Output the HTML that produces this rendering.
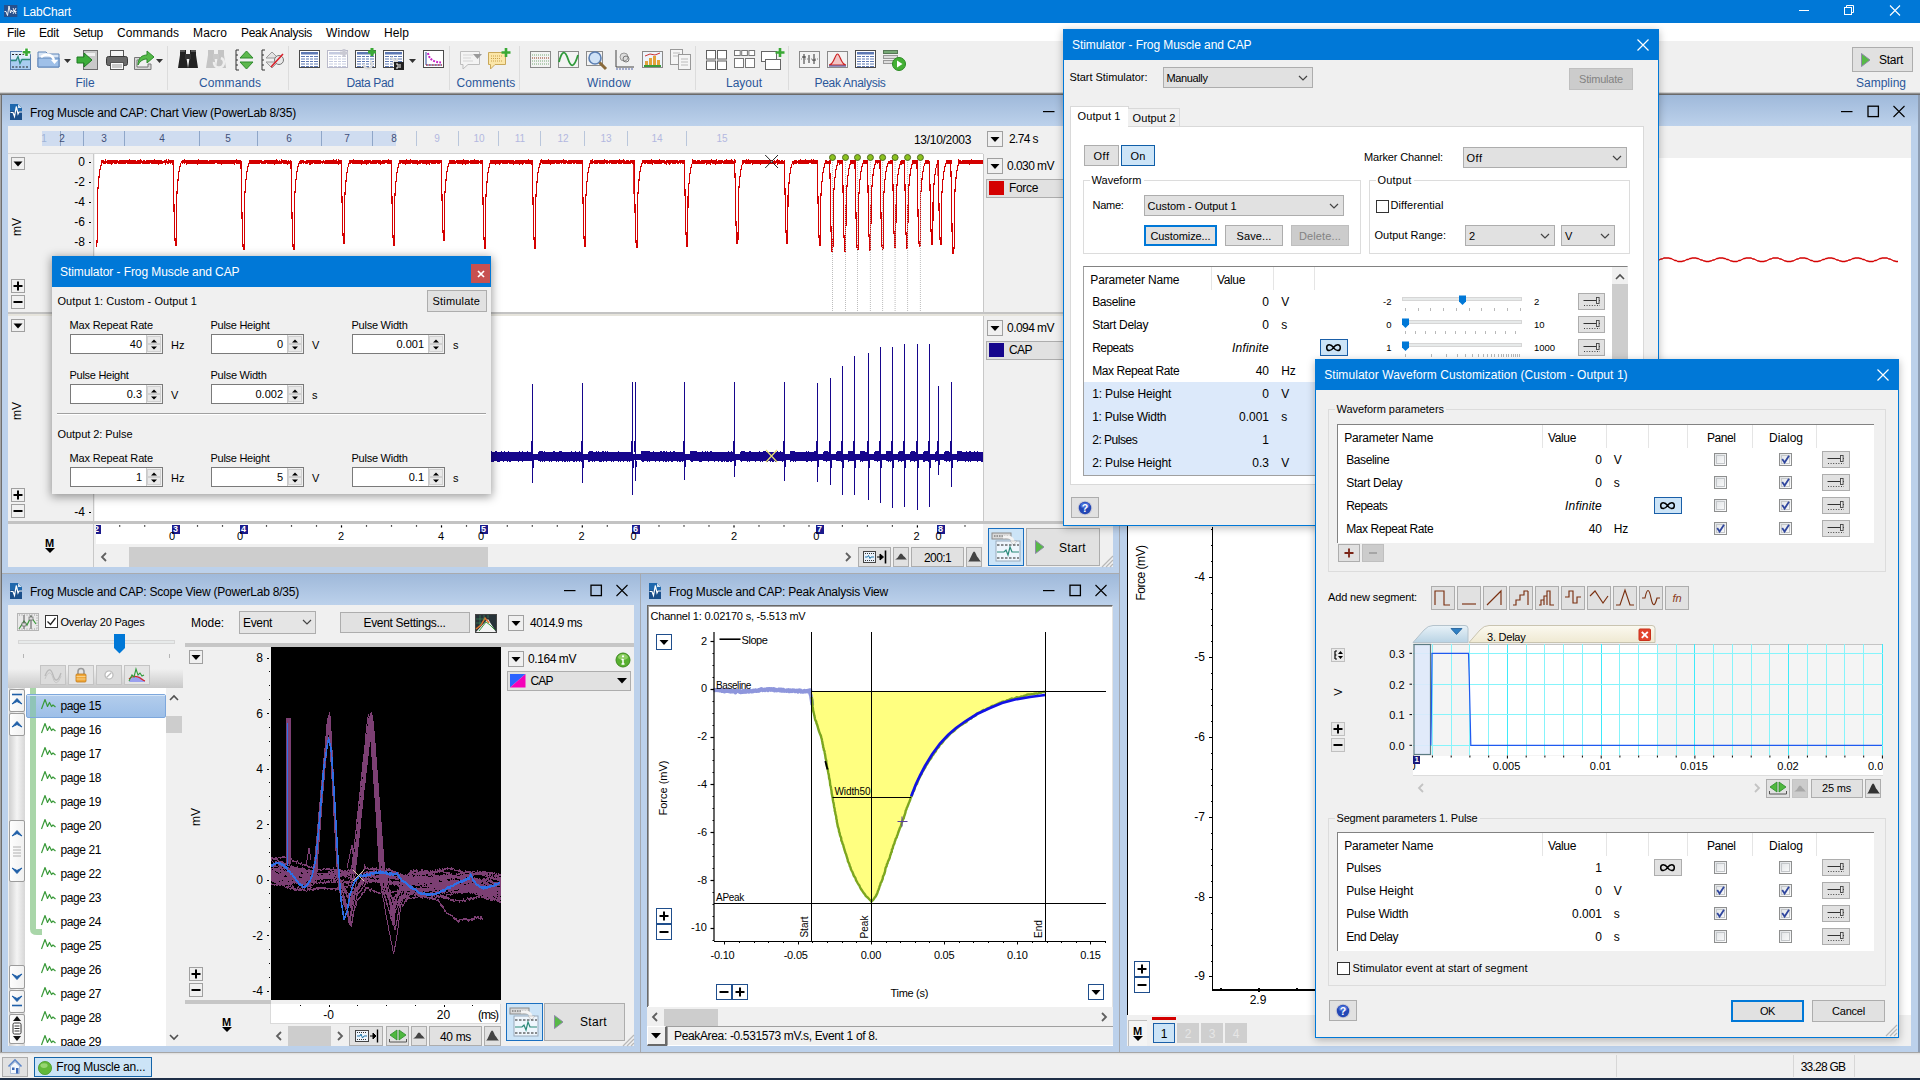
<!DOCTYPE html>
<html><head><meta charset="utf-8"><title>LabChart</title><style>
*{box-sizing:border-box;margin:0;padding:0}
html,body{width:1920px;height:1080px;overflow:hidden}
body{position:relative;background:#abc3e1;font-family:"Liberation Sans",sans-serif;font-size:12px;color:#000}
div,span.t,svg{position:absolute}
span.t{white-space:pre}
svg{overflow:visible}
.btn{background:#e1e1e1;border:1px solid #adadad}
</style></head><body>
<!-- back_window -->
<div style="left:1119px;top:95px;width:1px;height:957px;background:#8ea7c8;"></div>
<div style="left:1120px;top:95px;width:800px;height:957px;background:linear-gradient(#9fb9da 0px,#bcd1eb 31px,#bcd1eb 100%);"></div>
<div style="left:1918px;top:95px;width:2px;height:957px;background:#8d9db3;"></div>
<svg style="left:1840.5px;top:103.3px;" width="70" height="16" viewBox="0 0 70 16"><path d="M0 8.6H11.5" stroke="#000" stroke-width="1.2" fill="none"/><rect x="27" y="3.2" width="10.4" height="10.4" fill="none" stroke="#000" stroke-width="1.3"/><path d="M52.5 3L63.5 14M63.5 3L52.5 14" stroke="#000" stroke-width="1.1" fill="none"/></svg>
<div style="left:1127px;top:126px;width:784px;height:920px;background:#f0f0f0;"></div>
<div style="left:1127px;top:158px;width:784px;height:857px;background:#fff;"></div>
<div style="left:1127px;top:126px;width:1px;height:889px;background:#000;"></div>
<svg style="left:0px;top:0px;" width="1920" height="1080" viewBox="0 0 1920 1080"><path d="M1658 260.5L1659 260.0L1660 259.5L1661 259.0L1662 259.0L1663 258.5L1664 258.0L1665 258.0L1666 258.0L1667 258.0L1668 258.0L1669 258.0L1670 258.5L1671 258.5L1672 259.0L1673 259.5L1674 260.0L1675 260.5L1676 260.5L1677 261.0L1678 261.5L1679 261.5L1680 261.5L1681 261.5L1682 261.5L1683 261.0L1684 261.0L1685 260.5L1686 260.0L1687 259.5L1688 259.5L1689 259.0L1690 258.5L1691 258.5L1692 258.0L1693 258.0L1694 258.0L1695 258.0L1696 258.0L1697 258.5L1698 258.5L1699 259.0L1700 259.5L1701 260.0L1702 260.0L1703 260.5L1704 261.0L1705 261.0L1706 261.5L1707 261.5L1708 261.5L1709 261.5L1710 261.0L1711 261.0L1712 260.5L1713 260.0L1714 260.0L1715 259.5L1716 259.0L1717 258.5L1718 258.5L1719 258.0L1720 258.0L1721 258.0L1722 258.0L1723 258.0L1724 258.5L1725 258.5L1726 259.0L1727 259.5L1728 259.5L1729 260.0L1730 260.5L1731 261.0L1732 261.0L1733 261.5L1734 261.5L1735 261.5L1736 261.5L1737 261.5L1738 261.0L1739 260.5L1740 260.5L1741 260.0L1742 259.5L1743 259.0L1744 258.5L1745 258.5L1746 258.0L1747 258.0L1748 258.0L1749 258.0L1750 258.0L1751 258.0L1752 258.5L1753 259.0L1754 259.0L1755 259.5L1756 260.0L1757 260.5L1758 261.0L1759 261.0L1760 261.5L1761 261.5L1762 261.5L1763 261.5L1764 261.5L1765 261.0L1766 261.0L1767 260.5L1768 260.0L1769 259.5L1770 259.0L1771 259.0L1772 258.5L1773 258.0L1774 258.0L1775 258.0L1776 258.0L1777 258.0L1778 258.0L1779 258.5L1780 259.0L1781 259.0L1782 259.5L1783 260.0L1784 260.5L1785 261.0L1786 261.0L1787 261.5L1788 261.5L1789 261.5L1790 261.5L1791 261.5L1792 261.0L1793 261.0L1794 260.5L1795 260.0L1796 259.5L1797 259.0L1798 259.0L1799 258.5L1800 258.0L1801 258.0L1802 258.0L1803 258.0L1804 258.0L1805 258.0L1806 258.5L1807 258.5L1808 259.0L1809 259.5L1810 260.0L1811 260.5L1812 260.5L1813 261.0L1814 261.5L1815 261.5L1816 261.5L1817 261.5L1818 261.5L1819 261.0L1820 261.0L1821 260.5L1822 260.0L1823 259.5L1824 259.5L1825 259.0L1826 258.5L1827 258.5L1828 258.0L1829 258.0L1830 258.0L1831 258.0L1832 258.0L1833 258.5L1834 258.5L1835 259.0L1836 259.5L1837 260.0L1838 260.0L1839 260.5L1840 261.0L1841 261.0L1842 261.5L1843 261.5L1844 261.5L1845 261.5L1846 261.0L1847 261.0L1848 260.5L1849 260.0L1850 260.0L1851 259.5L1852 259.0L1853 258.5L1854 258.5L1855 258.0L1856 258.0L1857 258.0L1858 258.0L1859 258.0L1860 258.5L1861 258.5L1862 259.0L1863 259.5L1864 259.5L1865 260.0L1866 260.5L1867 261.0L1868 261.0L1869 261.5L1870 261.5L1871 261.5L1872 261.5L1873 261.5L1874 261.0L1875 260.5L1876 260.5L1877 260.0L1878 259.5L1879 259.0L1880 258.5L1881 258.5L1882 258.0L1883 258.0L1884 258.0L1885 258.0L1886 258.0L1887 258.0L1888 258.5L1889 259.0L1890 259.0L1891 259.5L1892 260.0L1893 260.5L1894 261.0L1895 261.0L1896 261.5L1897 261.5L1898 261.5" fill="none" stroke="#d40000" stroke-width="1.3"/></svg>
<div style="left:1212px;top:527px;width:1.4px;height:464px;background:#000;"></div>
<div style="left:1212px;top:989.3px;width:110px;height:1.4px;background:#000;"></div>
<div style="left:1209px;top:576.5px;width:4px;height:1.5px;background:#000;"></div>
<span class="t" style="left:1194.33px;top:571.34px;font-size:12px;line-height:12px;color:#000;">-4</span>
<div style="left:1209px;top:656.5px;width:4px;height:1.5px;background:#000;"></div>
<span class="t" style="left:1194.33px;top:651.34px;font-size:12px;line-height:12px;color:#000;">-5</span>
<div style="left:1209px;top:736.5px;width:4px;height:1.5px;background:#000;"></div>
<span class="t" style="left:1194.33px;top:731.34px;font-size:12px;line-height:12px;color:#000;">-6</span>
<div style="left:1209px;top:816.5px;width:4px;height:1.5px;background:#000;"></div>
<span class="t" style="left:1194.33px;top:811.34px;font-size:12px;line-height:12px;color:#000;">-7</span>
<div style="left:1209px;top:896.5px;width:4px;height:1.5px;background:#000;"></div>
<span class="t" style="left:1194.33px;top:891.34px;font-size:12px;line-height:12px;color:#000;">-8</span>
<div style="left:1209px;top:975.5px;width:4px;height:1.5px;background:#000;"></div>
<span class="t" style="left:1194.33px;top:970.34px;font-size:12px;line-height:12px;color:#000;">-9</span>
<div style="left:1211px;top:529px;width:2px;height:1px;background:#000;"></div>
<div style="left:1211px;top:545px;width:2px;height:1px;background:#000;"></div>
<div style="left:1211px;top:561px;width:2px;height:1px;background:#000;"></div>
<div style="left:1211px;top:593px;width:2px;height:1px;background:#000;"></div>
<div style="left:1211px;top:609px;width:2px;height:1px;background:#000;"></div>
<div style="left:1211px;top:625px;width:2px;height:1px;background:#000;"></div>
<div style="left:1211px;top:641px;width:2px;height:1px;background:#000;"></div>
<div style="left:1211px;top:673px;width:2px;height:1px;background:#000;"></div>
<div style="left:1211px;top:689px;width:2px;height:1px;background:#000;"></div>
<div style="left:1211px;top:705px;width:2px;height:1px;background:#000;"></div>
<div style="left:1211px;top:721px;width:2px;height:1px;background:#000;"></div>
<div style="left:1211px;top:753px;width:2px;height:1px;background:#000;"></div>
<div style="left:1211px;top:769px;width:2px;height:1px;background:#000;"></div>
<div style="left:1211px;top:785px;width:2px;height:1px;background:#000;"></div>
<div style="left:1211px;top:801px;width:2px;height:1px;background:#000;"></div>
<div style="left:1211px;top:833px;width:2px;height:1px;background:#000;"></div>
<div style="left:1211px;top:849px;width:2px;height:1px;background:#000;"></div>
<div style="left:1211px;top:865px;width:2px;height:1px;background:#000;"></div>
<div style="left:1211px;top:881px;width:2px;height:1px;background:#000;"></div>
<div style="left:1211px;top:913px;width:2px;height:1px;background:#000;"></div>
<div style="left:1211px;top:929px;width:2px;height:1px;background:#000;"></div>
<div style="left:1211px;top:945px;width:2px;height:1px;background:#000;"></div>
<div style="left:1211px;top:961px;width:2px;height:1px;background:#000;"></div>
<div style="left:1220px;top:988px;width:1.5px;height:3px;background:#000;"></div>
<div style="left:1258px;top:988px;width:1.5px;height:4px;background:#000;"></div>
<div style="left:1296px;top:988px;width:1.5px;height:3px;background:#000;"></div>
<span class="t" style="left:1249.66px;top:993.84px;font-size:12px;line-height:12px;color:#000;">2.9</span>
<span class="t" style="left:1141px;top:573px;font-size:12px;line-height:12px;transform:translate(-50%,-50%) rotate(-90deg);letter-spacing:-0.5px">Force (mV)</span>
<div style="left:1134px;top:961px;width:16px;height:16px;background:#fff;border:1px solid #1f4e8c;"></div>
<svg style="left:1134px;top:961px;" width="16" height="16" viewBox="0 0 16 16"><path d="M3.5 8H12.5" stroke="#000" stroke-width="2" fill="none"/><path d="M8 3.5V12.5" stroke="#000" stroke-width="2" fill="none"/></svg>
<div style="left:1134px;top:977px;width:16px;height:16px;background:#fff;border:1px solid #1f4e8c;"></div>
<svg style="left:1134px;top:977px;" width="16" height="16" viewBox="0 0 16 16"><path d="M3.5 8H12.5" stroke="#000" stroke-width="2" fill="none"/></svg>
<div style="left:1128px;top:1020px;width:19px;height:26px;background:#f4f4f4;border:1px solid #bdbdbd;border-bottom:none;border-right:none;"></div>
<span class="t" style="left:1133.00px;top:1024.84px;font-size:12px;line-height:12px;color:#000;font-weight:bold;font-size:11px;">M</span>
<svg style="left:1133px;top:1036px;" width="10" height="6" viewBox="0 0 10 6"><path d="M0 0H10L5 5Z" fill="#000"/></svg>
<div style="left:1152px;top:1017px;width:24px;height:3px;background:#d40000;"></div>
<div style="left:1153px;top:1023px;width:22px;height:20px;background:#cce4f7;border:1px solid #1a5fa8;"></div>
<span class="t" style="left:1160.66px;top:1027.84px;font-size:12px;line-height:12px;color:#000;">1</span>
<div style="left:1177px;top:1023px;width:22px;height:20px;background:#cfcfcf;"></div>
<span class="t" style="left:1184.66px;top:1027.84px;font-size:12px;line-height:12px;color:#e6e6e6;">2</span>
<div style="left:1201px;top:1023px;width:22px;height:20px;background:#cfcfcf;"></div>
<span class="t" style="left:1208.66px;top:1027.84px;font-size:12px;line-height:12px;color:#e6e6e6;">3</span>
<div style="left:1225px;top:1023px;width:22px;height:20px;background:#cfcfcf;"></div>
<span class="t" style="left:1232.66px;top:1027.84px;font-size:12px;line-height:12px;color:#e6e6e6;">4</span>
<!-- chart_view -->
<div style="left:0px;top:95px;width:1px;height:960px;background:#a5a5a5;"></div>
<div style="left:1px;top:95px;width:1px;height:960px;background:#6e6e6e;"></div>
<div style="left:2px;top:95px;width:1118px;height:479px;background:linear-gradient(#9fb9da 0px,#bcd1eb 31px,#bcd1eb 100%);"></div>
<svg style="left:10px;top:104px;" width="13" height="16" viewBox="0 0 13 16"><path d="M0 0H8L12 4V16H0Z" fill="#1b4f8a"/><path d="M0 0H8L12 4V7H0Z" fill="#1f68ad"/><path d="M8 0V4H12Z" fill="#cfe0f0"/><path d="M0.5 8.5H3L4.5 12.5L6.3 2.5L8 10L9 8H12" fill="none" stroke="#fff" stroke-width="1.2"/></svg>
<span class="t" style="left:30.00px;top:106.84px;font-size:12px;line-height:12px;color:#000;letter-spacing:-0.182px;">Frog Muscle and CAP: Chart View (PowerLab 8/35)</span>
<svg style="left:1042.5px;top:103.3px;" width="70" height="16" viewBox="0 0 70 16"><path d="M0 8.6H11.5" stroke="#000" stroke-width="1.2" fill="none"/><rect x="27" y="3.2" width="10.4" height="10.4" fill="none" stroke="#000" stroke-width="1.3"/><path d="M52.5 3L63.5 14M63.5 3L52.5 14" stroke="#000" stroke-width="1.1" fill="none"/></svg>
<div style="left:8px;top:126px;width:1105px;height:441px;background:#f0f0f0;"></div>
<div style="left:42px;top:131px;width:354px;height:15px;background:#cfdcf0;"></div>
<div style="left:60px;top:131px;width:1px;height:15px;background:#8fa6c8;"></div>
<div style="left:83px;top:131px;width:1px;height:15px;background:#8fa6c8;"></div>
<div style="left:124px;top:131px;width:1px;height:15px;background:#8fa6c8;"></div>
<div style="left:199px;top:131px;width:1px;height:15px;background:#8fa6c8;"></div>
<div style="left:257px;top:131px;width:1px;height:15px;background:#8fa6c8;"></div>
<div style="left:321px;top:131px;width:1px;height:15px;background:#8fa6c8;"></div>
<div style="left:372px;top:131px;width:1px;height:15px;background:#8fa6c8;"></div>
<div style="left:416px;top:131px;width:1px;height:15px;background:#b9c6db;"></div>
<div style="left:458px;top:131px;width:1px;height:15px;background:#b9c6db;"></div>
<div style="left:498px;top:131px;width:1px;height:15px;background:#b9c6db;"></div>
<div style="left:540px;top:131px;width:1px;height:15px;background:#b9c6db;"></div>
<div style="left:584px;top:131px;width:1px;height:15px;background:#b9c6db;"></div>
<div style="left:627px;top:131px;width:1px;height:15px;background:#b9c6db;"></div>
<div style="left:686px;top:131px;width:1px;height:15px;background:#b9c6db;"></div>
<span class="t" style="left:41.22px;top:133.53px;font-size:10px;line-height:10px;color:#9fb3d6;">1</span>
<span class="t" style="left:59.22px;top:133.53px;font-size:10px;line-height:10px;color:#3f4f78;">2</span>
<span class="t" style="left:101.22px;top:133.53px;font-size:10px;line-height:10px;color:#3f4f78;">3</span>
<span class="t" style="left:159.22px;top:133.53px;font-size:10px;line-height:10px;color:#3f4f78;">4</span>
<span class="t" style="left:225.22px;top:133.53px;font-size:10px;line-height:10px;color:#3f4f78;">5</span>
<span class="t" style="left:286.22px;top:133.53px;font-size:10px;line-height:10px;color:#3f4f78;">6</span>
<span class="t" style="left:344.22px;top:133.53px;font-size:10px;line-height:10px;color:#3f4f78;">7</span>
<span class="t" style="left:391.22px;top:133.53px;font-size:10px;line-height:10px;color:#3f4f78;">8</span>
<span class="t" style="left:434.22px;top:133.53px;font-size:10px;line-height:10px;color:#b3b8e0;">9</span>
<span class="t" style="left:473.44px;top:133.53px;font-size:10px;line-height:10px;color:#b3b8e0;">10</span>
<span class="t" style="left:514.81px;top:133.53px;font-size:10px;line-height:10px;color:#b3b8e0;">11</span>
<span class="t" style="left:557.44px;top:133.53px;font-size:10px;line-height:10px;color:#b3b8e0;">12</span>
<span class="t" style="left:600.44px;top:133.53px;font-size:10px;line-height:10px;color:#b3b8e0;">13</span>
<span class="t" style="left:651.44px;top:133.53px;font-size:10px;line-height:10px;color:#b3b8e0;">14</span>
<span class="t" style="left:716.44px;top:133.53px;font-size:10px;line-height:10px;color:#b3b8e0;">15</span>
<span class="t" style="left:914.00px;top:134.34px;font-size:12px;line-height:12px;color:#000;letter-spacing:-0.306px;">13/10/2003</span>
<div style="left:987px;top:131px;width:16px;height:16px;background:#f0f0f0;border:1px solid #a0a0a0;"></div>
<svg style="left:987px;top:131px;" width="16" height="16" viewBox="0 0 16 16"><path d="M3.5 6H12.5L8 11Z" fill="#000"/></svg>
<span class="t" style="left:1009.00px;top:132.84px;font-size:12px;line-height:12px;color:#000;letter-spacing:-0.615px;">2.74 s</span>
<div style="left:8px;top:153px;width:975px;height:1px;background:#d4d4d4;"></div>
<div style="left:93px;top:154px;width:1px;height:368px;background:#c8c8c8;"></div>
<div style="left:983px;top:154px;width:1px;height:368px;background:#c8c8c8;"></div>
<div style="left:95px;top:154px;width:888px;height:158px;background:#fff;"></div>
<div style="left:8px;top:312px;width:1105px;height:2px;background:#c3c3c3;"></div>
<div style="left:8px;top:314px;width:1105px;height:2px;background:#e6e4dc;"></div>
<div style="left:95px;top:316px;width:888px;height:205px;background:#fff;"></div>
<div style="left:8px;top:521px;width:1105px;height:3px;background:#c3c3c3;"></div>
<div style="left:11px;top:157px;width:14px;height:13px;background:#f0f0f0;border:1px solid #a0a0a0;"></div>
<svg style="left:11px;top:157px;" width="14" height="13" viewBox="0 0 14 13"><path d="M2.5 4.5H11.5L7 9.5Z" fill="#000"/></svg>
<span class="t" style="left:78.33px;top:155.84px;font-size:12px;line-height:12px;color:#000;">0</span>
<div style="left:89px;top:161.5px;width:2px;height:1px;background:#000;"></div>
<span class="t" style="left:74.33px;top:175.84px;font-size:12px;line-height:12px;color:#000;">-2</span>
<div style="left:89px;top:181.5px;width:2px;height:1px;background:#000;"></div>
<span class="t" style="left:74.33px;top:195.84px;font-size:12px;line-height:12px;color:#000;">-4</span>
<div style="left:89px;top:201.5px;width:2px;height:1px;background:#000;"></div>
<span class="t" style="left:74.33px;top:215.84px;font-size:12px;line-height:12px;color:#000;">-6</span>
<div style="left:89px;top:221.5px;width:2px;height:1px;background:#000;"></div>
<span class="t" style="left:74.33px;top:235.84px;font-size:12px;line-height:12px;color:#000;">-8</span>
<div style="left:89px;top:241.5px;width:2px;height:1px;background:#000;"></div>
<span class="t" style="left:17px;top:227px;font-size:12px;line-height:12px;transform:translate(-50%,-50%) rotate(-90deg)">mV</span>
<div style="left:11px;top:279px;width:14px;height:14px;background:#f0f0f0;border:1px solid #a0a0a0;"></div>
<svg style="left:11px;top:279px;" width="14" height="14" viewBox="0 0 14 14"><path d="M2.5 7H11.5" stroke="#000" stroke-width="2" fill="none"/><path d="M7 2.5V11.5" stroke="#000" stroke-width="2" fill="none"/></svg>
<div style="left:11px;top:295px;width:14px;height:14px;background:#f0f0f0;border:1px solid #a0a0a0;"></div>
<svg style="left:11px;top:295px;" width="14" height="14" viewBox="0 0 14 14"><path d="M2.5 7H11.5" stroke="#000" stroke-width="2" fill="none"/></svg>
<div style="left:11px;top:319px;width:14px;height:13px;background:#f0f0f0;border:1px solid #a0a0a0;"></div>
<svg style="left:11px;top:319px;" width="14" height="13" viewBox="0 0 14 13"><path d="M2.5 4.5H11.5L7 9.5Z" fill="#000"/></svg>
<span class="t" style="left:17px;top:411px;font-size:12px;line-height:12px;transform:translate(-50%,-50%) rotate(-90deg)">mV</span>
<div style="left:11px;top:488px;width:14px;height:14px;background:#f0f0f0;border:1px solid #a0a0a0;"></div>
<svg style="left:11px;top:488px;" width="14" height="14" viewBox="0 0 14 14"><path d="M2.5 7H11.5" stroke="#000" stroke-width="2" fill="none"/><path d="M7 2.5V11.5" stroke="#000" stroke-width="2" fill="none"/></svg>
<div style="left:11px;top:504px;width:14px;height:14px;background:#f0f0f0;border:1px solid #a0a0a0;"></div>
<svg style="left:11px;top:504px;" width="14" height="14" viewBox="0 0 14 14"><path d="M2.5 7H11.5" stroke="#000" stroke-width="2" fill="none"/></svg>
<span class="t" style="left:74.33px;top:505.84px;font-size:12px;line-height:12px;color:#000;">-4</span>
<div style="left:89px;top:511.5px;width:2px;height:1px;background:#000;"></div>
<div style="left:987px;top:158px;width:16px;height:16px;background:#f0f0f0;border:1px solid #a0a0a0;"></div>
<svg style="left:987px;top:158px;" width="16" height="16" viewBox="0 0 16 16"><path d="M3.5 6H12.5L8 11Z" fill="#000"/></svg>
<span class="t" style="left:1007.00px;top:159.84px;font-size:12px;line-height:12px;color:#000;letter-spacing:-0.545px;">0.030 mV</span>
<div style="left:986px;top:179px;width:130px;height:19px;background:#e1e1e1;border:1px solid #adadad;"></div>
<div style="left:989px;top:181px;width:15px;height:14px;background:#d40000;"></div>
<span class="t" style="left:1009.00px;top:181.84px;font-size:12px;line-height:12px;color:#000;letter-spacing:-0.335px;">Force</span>
<div style="left:987px;top:320px;width:16px;height:16px;background:#f0f0f0;border:1px solid #a0a0a0;"></div>
<svg style="left:987px;top:320px;" width="16" height="16" viewBox="0 0 16 16"><path d="M3.5 6H12.5L8 11Z" fill="#000"/></svg>
<span class="t" style="left:1007.00px;top:321.84px;font-size:12px;line-height:12px;color:#000;letter-spacing:-0.545px;">0.094 mV</span>
<div style="left:986px;top:341px;width:130px;height:19px;background:#e1e1e1;border:1px solid #adadad;"></div>
<div style="left:989px;top:343px;width:15px;height:14px;background:#16068c;"></div>
<span class="t" style="left:1009.00px;top:343.84px;font-size:12px;line-height:12px;color:#000;letter-spacing:-0.558px;">CAP</span>
<svg style="left:0px;top:0px;" width="1120" height="570" viewBox="0 0 1120 570"><g shape-rendering="crispEdges"><g fill="#d40000"><rect x="101" y="160" width="1" height="3"/><rect x="102" y="160" width="1" height="3"/><rect x="103" y="160" width="1" height="4"/><rect x="104" y="161" width="1" height="3"/><rect x="105" y="159" width="1" height="5"/><rect x="106" y="161" width="1" height="2"/><rect x="107" y="160" width="1" height="4"/><rect x="108" y="160" width="1" height="4"/><rect x="109" y="160" width="1" height="4"/><rect x="110" y="160" width="1" height="4"/><rect x="111" y="160" width="1" height="5"/><rect x="112" y="160" width="1" height="4"/><rect x="113" y="160" width="1" height="3"/><rect x="114" y="160" width="1" height="4"/><rect x="115" y="160" width="1" height="4"/><rect x="116" y="160" width="1" height="4"/><rect x="117" y="160" width="1" height="3"/><rect x="118" y="161" width="1" height="3"/><rect x="119" y="160" width="1" height="4"/><rect x="120" y="160" width="1" height="4"/><rect x="121" y="160" width="1" height="4"/><rect x="122" y="160" width="1" height="4"/><rect x="123" y="160" width="1" height="4"/><rect x="124" y="160" width="1" height="4"/><rect x="125" y="160" width="1" height="4"/><rect x="126" y="160" width="1" height="3"/><rect x="127" y="160" width="1" height="4"/><rect x="128" y="160" width="1" height="4"/><rect x="129" y="159" width="1" height="5"/><rect x="130" y="160" width="1" height="4"/><rect x="131" y="160" width="1" height="4"/><rect x="132" y="160" width="1" height="4"/><rect x="133" y="160" width="1" height="4"/><rect x="134" y="160" width="1" height="4"/><rect x="135" y="160" width="1" height="4"/><rect x="136" y="161" width="1" height="3"/><rect x="137" y="160" width="1" height="4"/><rect x="138" y="160" width="1" height="4"/><rect x="139" y="160" width="1" height="4"/><rect x="140" y="159" width="1" height="5"/><rect x="141" y="160" width="1" height="3"/><rect x="142" y="161" width="1" height="3"/><rect x="143" y="160" width="1" height="4"/><rect x="144" y="160" width="1" height="4"/><rect x="145" y="161" width="1" height="3"/><rect x="146" y="160" width="1" height="4"/><rect x="147" y="160" width="1" height="4"/><rect x="148" y="160" width="1" height="4"/><rect x="149" y="160" width="1" height="4"/><rect x="150" y="160" width="1" height="3"/><rect x="151" y="160" width="1" height="4"/><rect x="152" y="160" width="1" height="4"/><rect x="153" y="160" width="1" height="4"/><rect x="154" y="159" width="1" height="5"/><rect x="155" y="160" width="1" height="4"/><rect x="156" y="160" width="1" height="4"/><rect x="157" y="160" width="1" height="4"/><rect x="158" y="160" width="1" height="5"/><rect x="159" y="160" width="1" height="4"/><rect x="160" y="160" width="1" height="4"/><rect x="161" y="160" width="1" height="4"/><rect x="162" y="161" width="1" height="3"/><rect x="163" y="161" width="1" height="2"/><rect x="164" y="160" width="1" height="3"/><rect x="165" y="160" width="1" height="5"/><rect x="166" y="159" width="1" height="4"/><rect x="167" y="161" width="1" height="3"/><rect x="168" y="159" width="1" height="5"/><rect x="169" y="160" width="1" height="3"/><rect x="170" y="160" width="1" height="4"/><rect x="171" y="160" width="1" height="3"/><rect x="172" y="160" width="1" height="4"/><rect x="173" y="160" width="1" height="4"/><rect x="181" y="161" width="1" height="2"/><rect x="182" y="160" width="1" height="4"/><rect x="183" y="160" width="1" height="3"/><rect x="184" y="159" width="1" height="5"/><rect x="185" y="160" width="1" height="3"/><rect x="186" y="160" width="1" height="5"/><rect x="187" y="160" width="1" height="4"/><rect x="188" y="160" width="1" height="4"/><rect x="189" y="160" width="1" height="4"/><rect x="190" y="160" width="1" height="4"/><rect x="191" y="160" width="1" height="4"/><rect x="192" y="160" width="1" height="4"/><rect x="193" y="160" width="1" height="4"/><rect x="194" y="160" width="1" height="4"/><rect x="195" y="160" width="1" height="4"/><rect x="196" y="160" width="1" height="4"/><rect x="197" y="160" width="1" height="5"/><rect x="198" y="159" width="1" height="5"/><rect x="199" y="160" width="1" height="4"/><rect x="200" y="160" width="1" height="4"/><rect x="201" y="160" width="1" height="4"/><rect x="202" y="160" width="1" height="4"/><rect x="203" y="160" width="1" height="4"/><rect x="204" y="160" width="1" height="4"/><rect x="205" y="160" width="1" height="4"/><rect x="206" y="160" width="1" height="4"/><rect x="207" y="160" width="1" height="4"/><rect x="208" y="161" width="1" height="3"/><rect x="209" y="160" width="1" height="4"/><rect x="210" y="160" width="1" height="4"/><rect x="211" y="160" width="1" height="4"/><rect x="212" y="160" width="1" height="4"/><rect x="213" y="160" width="1" height="4"/><rect x="214" y="160" width="1" height="4"/><rect x="215" y="160" width="1" height="3"/><rect x="216" y="160" width="1" height="3"/><rect x="217" y="160" width="1" height="4"/><rect x="218" y="160" width="1" height="4"/><rect x="219" y="160" width="1" height="4"/><rect x="220" y="160" width="1" height="4"/><rect x="221" y="160" width="1" height="5"/><rect x="222" y="160" width="1" height="4"/><rect x="223" y="160" width="1" height="4"/><rect x="224" y="160" width="1" height="4"/><rect x="225" y="160" width="1" height="4"/><rect x="226" y="160" width="1" height="4"/><rect x="227" y="160" width="1" height="4"/><rect x="228" y="160" width="1" height="4"/><rect x="229" y="160" width="1" height="4"/><rect x="230" y="160" width="1" height="4"/><rect x="231" y="160" width="1" height="4"/><rect x="232" y="160" width="1" height="4"/><rect x="233" y="160" width="1" height="4"/><rect x="234" y="160" width="1" height="5"/><rect x="235" y="160" width="1" height="3"/><rect x="236" y="159" width="1" height="5"/><rect x="237" y="160" width="1" height="4"/><rect x="238" y="160" width="1" height="4"/><rect x="239" y="160" width="1" height="4"/><rect x="240" y="160" width="1" height="4"/><rect x="241" y="161" width="1" height="3"/><rect x="249" y="160" width="1" height="4"/><rect x="250" y="160" width="1" height="4"/><rect x="251" y="160" width="1" height="4"/><rect x="252" y="160" width="1" height="4"/><rect x="253" y="160" width="1" height="4"/><rect x="254" y="160" width="1" height="4"/><rect x="255" y="160" width="1" height="4"/><rect x="256" y="160" width="1" height="4"/><rect x="257" y="160" width="1" height="4"/><rect x="258" y="160" width="1" height="4"/><rect x="259" y="160" width="1" height="4"/><rect x="260" y="160" width="1" height="3"/><rect x="261" y="160" width="1" height="4"/><rect x="262" y="161" width="1" height="3"/><rect x="263" y="161" width="1" height="3"/><rect x="264" y="160" width="1" height="4"/><rect x="265" y="160" width="1" height="4"/><rect x="266" y="160" width="1" height="3"/><rect x="267" y="160" width="1" height="4"/><rect x="268" y="160" width="1" height="4"/><rect x="269" y="160" width="1" height="4"/><rect x="270" y="160" width="1" height="4"/><rect x="271" y="160" width="1" height="4"/><rect x="272" y="160" width="1" height="4"/><rect x="273" y="160" width="1" height="4"/><rect x="274" y="160" width="1" height="5"/><rect x="275" y="160" width="1" height="4"/><rect x="276" y="159" width="1" height="5"/><rect x="277" y="160" width="1" height="4"/><rect x="278" y="161" width="1" height="3"/><rect x="279" y="160" width="1" height="4"/><rect x="280" y="161" width="1" height="3"/><rect x="281" y="159" width="1" height="5"/><rect x="282" y="160" width="1" height="3"/><rect x="283" y="160" width="1" height="4"/><rect x="284" y="160" width="1" height="4"/><rect x="285" y="160" width="1" height="4"/><rect x="286" y="160" width="1" height="4"/><rect x="287" y="161" width="1" height="4"/><rect x="288" y="160" width="1" height="4"/><rect x="289" y="161" width="1" height="3"/><rect x="290" y="160" width="1" height="4"/><rect x="291" y="161" width="1" height="3"/><rect x="299" y="161" width="1" height="3"/><rect x="300" y="160" width="1" height="4"/><rect x="301" y="160" width="1" height="4"/><rect x="302" y="160" width="1" height="3"/><rect x="303" y="160" width="1" height="4"/><rect x="304" y="161" width="1" height="2"/><rect x="305" y="161" width="1" height="3"/><rect x="306" y="160" width="1" height="4"/><rect x="307" y="160" width="1" height="4"/><rect x="308" y="160" width="1" height="3"/><rect x="309" y="160" width="1" height="5"/><rect x="310" y="160" width="1" height="5"/><rect x="311" y="160" width="1" height="4"/><rect x="312" y="160" width="1" height="4"/><rect x="313" y="160" width="1" height="3"/><rect x="314" y="160" width="1" height="4"/><rect x="315" y="160" width="1" height="4"/><rect x="316" y="160" width="1" height="4"/><rect x="317" y="160" width="1" height="4"/><rect x="318" y="160" width="1" height="4"/><rect x="319" y="160" width="1" height="4"/><rect x="320" y="160" width="1" height="4"/><rect x="321" y="161" width="1" height="2"/><rect x="322" y="161" width="1" height="3"/><rect x="323" y="160" width="1" height="3"/><rect x="324" y="161" width="1" height="3"/><rect x="325" y="160" width="1" height="4"/><rect x="326" y="160" width="1" height="4"/><rect x="327" y="160" width="1" height="4"/><rect x="328" y="160" width="1" height="4"/><rect x="329" y="160" width="1" height="4"/><rect x="330" y="160" width="1" height="4"/><rect x="331" y="160" width="1" height="4"/><rect x="332" y="160" width="1" height="4"/><rect x="333" y="159" width="1" height="5"/><rect x="334" y="160" width="1" height="4"/><rect x="335" y="160" width="1" height="4"/><rect x="336" y="159" width="1" height="5"/><rect x="337" y="161" width="1" height="3"/><rect x="338" y="159" width="1" height="6"/><rect x="339" y="160" width="1" height="4"/><rect x="340" y="160" width="1" height="4"/><rect x="341" y="160" width="1" height="4"/><rect x="349" y="160" width="1" height="4"/><rect x="350" y="160" width="1" height="4"/><rect x="351" y="160" width="1" height="3"/><rect x="352" y="160" width="1" height="4"/><rect x="353" y="159" width="1" height="5"/><rect x="354" y="160" width="1" height="4"/><rect x="355" y="160" width="1" height="4"/><rect x="356" y="160" width="1" height="4"/><rect x="357" y="160" width="1" height="4"/><rect x="358" y="160" width="1" height="4"/><rect x="359" y="160" width="1" height="4"/><rect x="360" y="160" width="1" height="4"/><rect x="361" y="160" width="1" height="5"/><rect x="362" y="160" width="1" height="4"/><rect x="363" y="161" width="1" height="3"/><rect x="364" y="160" width="1" height="4"/><rect x="365" y="160" width="1" height="4"/><rect x="366" y="160" width="1" height="5"/><rect x="367" y="160" width="1" height="4"/><rect x="368" y="160" width="1" height="4"/><rect x="369" y="160" width="1" height="3"/><rect x="370" y="160" width="1" height="4"/><rect x="371" y="161" width="1" height="3"/><rect x="372" y="160" width="1" height="4"/><rect x="373" y="160" width="1" height="4"/><rect x="374" y="160" width="1" height="4"/><rect x="375" y="160" width="1" height="4"/><rect x="376" y="160" width="1" height="4"/><rect x="377" y="160" width="1" height="3"/><rect x="378" y="160" width="1" height="4"/><rect x="379" y="160" width="1" height="4"/><rect x="380" y="160" width="1" height="5"/><rect x="381" y="161" width="1" height="3"/><rect x="382" y="160" width="1" height="4"/><rect x="383" y="160" width="1" height="4"/><rect x="384" y="160" width="1" height="4"/><rect x="385" y="160" width="1" height="3"/><rect x="386" y="160" width="1" height="3"/><rect x="387" y="160" width="1" height="4"/><rect x="388" y="159" width="1" height="5"/><rect x="389" y="160" width="1" height="4"/><rect x="390" y="160" width="1" height="4"/><rect x="391" y="160" width="1" height="4"/><rect x="399" y="160" width="1" height="4"/><rect x="400" y="160" width="1" height="4"/><rect x="401" y="160" width="1" height="3"/><rect x="402" y="160" width="1" height="4"/><rect x="403" y="160" width="1" height="4"/><rect x="404" y="160" width="1" height="4"/><rect x="405" y="160" width="1" height="5"/><rect x="406" y="159" width="1" height="5"/><rect x="407" y="160" width="1" height="4"/><rect x="408" y="160" width="1" height="4"/><rect x="409" y="160" width="1" height="4"/><rect x="410" y="159" width="1" height="5"/><rect x="411" y="160" width="1" height="3"/><rect x="412" y="160" width="1" height="4"/><rect x="413" y="160" width="1" height="4"/><rect x="414" y="160" width="1" height="4"/><rect x="415" y="160" width="1" height="4"/><rect x="416" y="160" width="1" height="4"/><rect x="417" y="160" width="1" height="5"/><rect x="418" y="161" width="1" height="3"/><rect x="419" y="160" width="1" height="4"/><rect x="420" y="160" width="1" height="4"/><rect x="421" y="160" width="1" height="3"/><rect x="422" y="160" width="1" height="4"/><rect x="423" y="160" width="1" height="4"/><rect x="424" y="160" width="1" height="4"/><rect x="425" y="160" width="1" height="4"/><rect x="426" y="160" width="1" height="5"/><rect x="427" y="160" width="1" height="4"/><rect x="428" y="160" width="1" height="4"/><rect x="429" y="160" width="1" height="5"/><rect x="430" y="160" width="1" height="3"/><rect x="431" y="160" width="1" height="4"/><rect x="432" y="160" width="1" height="4"/><rect x="433" y="160" width="1" height="4"/><rect x="434" y="160" width="1" height="4"/><rect x="435" y="160" width="1" height="4"/><rect x="436" y="160" width="1" height="3"/><rect x="437" y="160" width="1" height="4"/><rect x="438" y="160" width="1" height="4"/><rect x="439" y="160" width="1" height="4"/><rect x="440" y="160" width="1" height="3"/><rect x="441" y="160" width="1" height="3"/><rect x="449" y="160" width="1" height="3"/><rect x="450" y="160" width="1" height="4"/><rect x="451" y="160" width="1" height="4"/><rect x="452" y="160" width="1" height="4"/><rect x="453" y="160" width="1" height="4"/><rect x="454" y="160" width="1" height="4"/><rect x="455" y="161" width="1" height="3"/><rect x="456" y="160" width="1" height="3"/><rect x="457" y="160" width="1" height="4"/><rect x="458" y="160" width="1" height="4"/><rect x="459" y="160" width="1" height="4"/><rect x="460" y="160" width="1" height="4"/><rect x="461" y="160" width="1" height="4"/><rect x="462" y="160" width="1" height="5"/><rect x="463" y="159" width="1" height="5"/><rect x="464" y="160" width="1" height="4"/><rect x="465" y="160" width="1" height="5"/><rect x="466" y="160" width="1" height="4"/><rect x="467" y="160" width="1" height="4"/><rect x="468" y="160" width="1" height="4"/><rect x="469" y="161" width="1" height="2"/><rect x="470" y="160" width="1" height="4"/><rect x="471" y="160" width="1" height="4"/><rect x="472" y="160" width="1" height="4"/><rect x="473" y="160" width="1" height="4"/><rect x="474" y="159" width="1" height="5"/><rect x="475" y="160" width="1" height="4"/><rect x="476" y="160" width="1" height="4"/><rect x="477" y="160" width="1" height="4"/><rect x="478" y="160" width="1" height="4"/><rect x="479" y="161" width="1" height="2"/><rect x="480" y="160" width="1" height="4"/><rect x="481" y="160" width="1" height="4"/><rect x="482" y="160" width="1" height="5"/><rect x="490" y="160" width="1" height="4"/><rect x="491" y="160" width="1" height="4"/><rect x="492" y="160" width="1" height="4"/><rect x="493" y="160" width="1" height="4"/><rect x="494" y="160" width="1" height="4"/><rect x="495" y="160" width="1" height="5"/><rect x="496" y="160" width="1" height="4"/><rect x="497" y="160" width="1" height="4"/><rect x="498" y="160" width="1" height="4"/><rect x="499" y="160" width="1" height="5"/><rect x="500" y="160" width="1" height="4"/><rect x="501" y="160" width="1" height="3"/><rect x="502" y="160" width="1" height="4"/><rect x="503" y="160" width="1" height="4"/><rect x="504" y="160" width="1" height="4"/><rect x="505" y="160" width="1" height="4"/><rect x="506" y="160" width="1" height="4"/><rect x="507" y="160" width="1" height="4"/><rect x="508" y="160" width="1" height="3"/><rect x="509" y="160" width="1" height="4"/><rect x="510" y="160" width="1" height="4"/><rect x="511" y="160" width="1" height="4"/><rect x="512" y="160" width="1" height="4"/><rect x="513" y="160" width="1" height="5"/><rect x="514" y="161" width="1" height="3"/><rect x="515" y="160" width="1" height="4"/><rect x="516" y="160" width="1" height="4"/><rect x="517" y="160" width="1" height="4"/><rect x="518" y="160" width="1" height="4"/><rect x="519" y="160" width="1" height="5"/><rect x="520" y="160" width="1" height="4"/><rect x="521" y="160" width="1" height="4"/><rect x="522" y="160" width="1" height="5"/><rect x="523" y="160" width="1" height="4"/><rect x="524" y="160" width="1" height="3"/><rect x="525" y="160" width="1" height="4"/><rect x="526" y="160" width="1" height="4"/><rect x="527" y="160" width="1" height="4"/><rect x="528" y="159" width="1" height="5"/><rect x="529" y="160" width="1" height="4"/><rect x="530" y="160" width="1" height="4"/><rect x="531" y="160" width="1" height="5"/><rect x="532" y="160" width="1" height="4"/><rect x="540" y="160" width="1" height="5"/><rect x="541" y="159" width="1" height="4"/><rect x="542" y="160" width="1" height="4"/><rect x="543" y="160" width="1" height="4"/><rect x="544" y="160" width="1" height="4"/><rect x="545" y="160" width="1" height="4"/><rect x="546" y="160" width="1" height="4"/><rect x="547" y="160" width="1" height="4"/><rect x="548" y="159" width="1" height="5"/><rect x="549" y="160" width="1" height="4"/><rect x="550" y="160" width="1" height="5"/><rect x="551" y="160" width="1" height="4"/><rect x="552" y="160" width="1" height="4"/><rect x="553" y="160" width="1" height="4"/><rect x="554" y="160" width="1" height="4"/><rect x="555" y="160" width="1" height="3"/><rect x="556" y="160" width="1" height="4"/><rect x="557" y="160" width="1" height="4"/><rect x="558" y="160" width="1" height="4"/><rect x="559" y="160" width="1" height="4"/><rect x="560" y="160" width="1" height="3"/><rect x="561" y="160" width="1" height="4"/><rect x="562" y="160" width="1" height="3"/><rect x="563" y="159" width="1" height="5"/><rect x="564" y="160" width="1" height="4"/><rect x="565" y="160" width="1" height="4"/><rect x="566" y="160" width="1" height="3"/><rect x="567" y="161" width="1" height="3"/><rect x="568" y="160" width="1" height="4"/><rect x="569" y="160" width="1" height="4"/><rect x="570" y="160" width="1" height="4"/><rect x="571" y="160" width="1" height="4"/><rect x="572" y="160" width="1" height="3"/><rect x="573" y="160" width="1" height="4"/><rect x="574" y="160" width="1" height="4"/><rect x="575" y="160" width="1" height="3"/><rect x="576" y="160" width="1" height="4"/><rect x="577" y="160" width="1" height="4"/><rect x="578" y="160" width="1" height="4"/><rect x="579" y="160" width="1" height="4"/><rect x="580" y="160" width="1" height="4"/><rect x="581" y="160" width="1" height="4"/><rect x="582" y="160" width="1" height="3"/><rect x="590" y="160" width="1" height="4"/><rect x="591" y="160" width="1" height="4"/><rect x="592" y="159" width="1" height="5"/><rect x="593" y="161" width="1" height="2"/><rect x="594" y="160" width="1" height="4"/><rect x="595" y="160" width="1" height="4"/><rect x="596" y="160" width="1" height="4"/><rect x="597" y="160" width="1" height="4"/><rect x="598" y="160" width="1" height="3"/><rect x="599" y="160" width="1" height="4"/><rect x="600" y="160" width="1" height="4"/><rect x="601" y="160" width="1" height="4"/><rect x="602" y="160" width="1" height="4"/><rect x="603" y="160" width="1" height="4"/><rect x="604" y="159" width="1" height="5"/><rect x="605" y="160" width="1" height="3"/><rect x="606" y="160" width="1" height="4"/><rect x="607" y="160" width="1" height="4"/><rect x="608" y="161" width="1" height="2"/><rect x="609" y="160" width="1" height="4"/><rect x="610" y="160" width="1" height="3"/><rect x="611" y="160" width="1" height="4"/><rect x="612" y="160" width="1" height="4"/><rect x="613" y="160" width="1" height="4"/><rect x="614" y="160" width="1" height="4"/><rect x="615" y="160" width="1" height="4"/><rect x="616" y="160" width="1" height="4"/><rect x="617" y="160" width="1" height="3"/><rect x="618" y="160" width="1" height="4"/><rect x="619" y="159" width="1" height="5"/><rect x="620" y="160" width="1" height="4"/><rect x="621" y="160" width="1" height="4"/><rect x="622" y="160" width="1" height="3"/><rect x="623" y="159" width="1" height="5"/><rect x="624" y="160" width="1" height="4"/><rect x="625" y="161" width="1" height="3"/><rect x="626" y="160" width="1" height="4"/><rect x="627" y="160" width="1" height="4"/><rect x="628" y="160" width="1" height="4"/><rect x="629" y="161" width="1" height="3"/><rect x="630" y="160" width="1" height="4"/><rect x="631" y="160" width="1" height="3"/><rect x="632" y="160" width="1" height="4"/><rect x="633" y="160" width="1" height="5"/><rect x="634" y="160" width="1" height="4"/><rect x="642" y="160" width="1" height="4"/><rect x="643" y="160" width="1" height="3"/><rect x="644" y="160" width="1" height="4"/><rect x="645" y="160" width="1" height="4"/><rect x="646" y="160" width="1" height="3"/><rect x="647" y="160" width="1" height="4"/><rect x="648" y="160" width="1" height="4"/><rect x="649" y="160" width="1" height="4"/><rect x="650" y="160" width="1" height="4"/><rect x="651" y="159" width="1" height="5"/><rect x="652" y="160" width="1" height="5"/><rect x="653" y="160" width="1" height="3"/><rect x="654" y="160" width="1" height="4"/><rect x="655" y="160" width="1" height="4"/><rect x="656" y="160" width="1" height="4"/><rect x="657" y="160" width="1" height="4"/><rect x="658" y="160" width="1" height="4"/><rect x="659" y="159" width="1" height="5"/><rect x="660" y="160" width="1" height="4"/><rect x="661" y="160" width="1" height="4"/><rect x="662" y="160" width="1" height="3"/><rect x="663" y="160" width="1" height="3"/><rect x="664" y="160" width="1" height="4"/><rect x="665" y="161" width="1" height="3"/><rect x="666" y="160" width="1" height="5"/><rect x="667" y="160" width="1" height="3"/><rect x="668" y="160" width="1" height="4"/><rect x="669" y="160" width="1" height="5"/><rect x="670" y="160" width="1" height="4"/><rect x="671" y="160" width="1" height="3"/><rect x="672" y="160" width="1" height="4"/><rect x="673" y="160" width="1" height="4"/><rect x="674" y="160" width="1" height="4"/><rect x="675" y="160" width="1" height="4"/><rect x="676" y="160" width="1" height="3"/><rect x="677" y="160" width="1" height="4"/><rect x="678" y="161" width="1" height="3"/><rect x="679" y="160" width="1" height="3"/><rect x="680" y="160" width="1" height="4"/><rect x="681" y="160" width="1" height="3"/><rect x="682" y="160" width="1" height="4"/><rect x="683" y="160" width="1" height="4"/><rect x="684" y="160" width="1" height="4"/><rect x="692" y="159" width="1" height="4"/><rect x="693" y="160" width="1" height="4"/><rect x="694" y="160" width="1" height="4"/><rect x="695" y="160" width="1" height="4"/><rect x="696" y="161" width="1" height="3"/><rect x="697" y="160" width="1" height="4"/><rect x="698" y="160" width="1" height="4"/><rect x="699" y="160" width="1" height="4"/><rect x="700" y="161" width="1" height="3"/><rect x="701" y="160" width="1" height="4"/><rect x="702" y="160" width="1" height="4"/><rect x="703" y="160" width="1" height="4"/><rect x="704" y="160" width="1" height="4"/><rect x="705" y="160" width="1" height="3"/><rect x="706" y="160" width="1" height="5"/><rect x="707" y="160" width="1" height="4"/><rect x="708" y="160" width="1" height="4"/><rect x="709" y="160" width="1" height="4"/><rect x="710" y="160" width="1" height="5"/><rect x="711" y="159" width="1" height="4"/><rect x="712" y="160" width="1" height="4"/><rect x="713" y="160" width="1" height="4"/><rect x="714" y="160" width="1" height="4"/><rect x="715" y="160" width="1" height="5"/><rect x="716" y="159" width="1" height="5"/><rect x="717" y="161" width="1" height="3"/><rect x="718" y="160" width="1" height="4"/><rect x="719" y="160" width="1" height="4"/><rect x="720" y="160" width="1" height="4"/><rect x="721" y="160" width="1" height="4"/><rect x="722" y="160" width="1" height="3"/><rect x="723" y="161" width="1" height="3"/><rect x="724" y="160" width="1" height="4"/><rect x="725" y="160" width="1" height="4"/><rect x="726" y="159" width="1" height="5"/><rect x="727" y="160" width="1" height="4"/><rect x="728" y="160" width="1" height="4"/><rect x="729" y="160" width="1" height="4"/><rect x="730" y="160" width="1" height="4"/><rect x="731" y="159" width="1" height="5"/><rect x="732" y="160" width="1" height="4"/><rect x="733" y="161" width="1" height="3"/><rect x="734" y="159" width="1" height="5"/><rect x="735" y="160" width="1" height="3"/><rect x="742" y="160" width="1" height="4"/><rect x="743" y="160" width="1" height="4"/><rect x="744" y="160" width="1" height="3"/><rect x="745" y="160" width="1" height="4"/><rect x="746" y="159" width="1" height="5"/><rect x="747" y="160" width="1" height="4"/><rect x="748" y="159" width="1" height="5"/><rect x="749" y="160" width="1" height="4"/><rect x="750" y="160" width="1" height="4"/><rect x="751" y="160" width="1" height="3"/><rect x="752" y="160" width="1" height="5"/><rect x="753" y="160" width="1" height="4"/><rect x="754" y="160" width="1" height="4"/><rect x="755" y="160" width="1" height="4"/><rect x="756" y="160" width="1" height="4"/><rect x="757" y="160" width="1" height="4"/><rect x="758" y="160" width="1" height="4"/><rect x="759" y="160" width="1" height="4"/><rect x="760" y="160" width="1" height="5"/><rect x="761" y="160" width="1" height="4"/><rect x="762" y="160" width="1" height="4"/><rect x="763" y="160" width="1" height="4"/><rect x="764" y="160" width="1" height="4"/><rect x="765" y="160" width="1" height="4"/><rect x="766" y="160" width="1" height="4"/><rect x="767" y="160" width="1" height="4"/><rect x="768" y="160" width="1" height="4"/><rect x="769" y="160" width="1" height="4"/><rect x="770" y="160" width="1" height="4"/><rect x="771" y="160" width="1" height="4"/><rect x="772" y="160" width="1" height="4"/><rect x="773" y="161" width="1" height="3"/><rect x="774" y="160" width="1" height="5"/><rect x="775" y="161" width="1" height="3"/><rect x="776" y="160" width="1" height="3"/><rect x="777" y="159" width="1" height="6"/><rect x="778" y="160" width="1" height="4"/><rect x="779" y="160" width="1" height="4"/><rect x="780" y="161" width="1" height="3"/><rect x="781" y="160" width="1" height="4"/><rect x="782" y="160" width="1" height="4"/><rect x="783" y="161" width="1" height="3"/><rect x="784" y="160" width="1" height="4"/><rect x="792" y="161" width="1" height="3"/><rect x="793" y="161" width="1" height="4"/><rect x="794" y="160" width="1" height="4"/><rect x="795" y="160" width="1" height="4"/><rect x="796" y="160" width="1" height="4"/><rect x="797" y="161" width="1" height="2"/><rect x="798" y="160" width="1" height="4"/><rect x="799" y="160" width="1" height="4"/><rect x="800" y="159" width="1" height="5"/><rect x="801" y="160" width="1" height="4"/><rect x="802" y="160" width="1" height="4"/><rect x="803" y="160" width="1" height="4"/><rect x="804" y="160" width="1" height="4"/><rect x="805" y="159" width="1" height="5"/><rect x="806" y="160" width="1" height="4"/><rect x="807" y="160" width="1" height="4"/><rect x="808" y="160" width="1" height="4"/><rect x="809" y="160" width="1" height="3"/><rect x="810" y="160" width="1" height="3"/><rect x="811" y="159" width="1" height="5"/><rect x="812" y="160" width="1" height="4"/><rect x="813" y="159" width="1" height="5"/><rect x="814" y="160" width="1" height="4"/><rect x="815" y="160" width="1" height="4"/><rect x="816" y="160" width="1" height="4"/><rect x="817" y="160" width="1" height="4"/><rect x="825" y="160" width="1" height="4"/><rect x="826" y="160" width="1" height="4"/><rect x="827" y="161" width="1" height="3"/><rect x="828" y="161" width="1" height="3"/><rect x="829" y="160" width="1" height="4"/><rect x="830" y="160" width="1" height="4"/><rect x="837" y="160" width="1" height="4"/><rect x="838" y="160" width="1" height="3"/><rect x="839" y="160" width="1" height="5"/><rect x="840" y="160" width="1" height="4"/><rect x="841" y="160" width="1" height="4"/><rect x="842" y="160" width="1" height="4"/><rect x="850" y="160" width="1" height="4"/><rect x="851" y="160" width="1" height="4"/><rect x="852" y="160" width="1" height="4"/><rect x="853" y="160" width="1" height="4"/><rect x="854" y="160" width="1" height="4"/><rect x="855" y="160" width="1" height="4"/><rect x="863" y="160" width="1" height="4"/><rect x="864" y="160" width="1" height="4"/><rect x="865" y="160" width="1" height="4"/><rect x="866" y="160" width="1" height="4"/><rect x="867" y="160" width="1" height="4"/><rect x="875" y="160" width="1" height="4"/><rect x="876" y="160" width="1" height="3"/><rect x="877" y="160" width="1" height="4"/><rect x="878" y="160" width="1" height="3"/><rect x="879" y="160" width="1" height="3"/><rect x="880" y="160" width="1" height="4"/><rect x="888" y="161" width="1" height="3"/><rect x="889" y="161" width="1" height="3"/><rect x="890" y="160" width="1" height="4"/><rect x="891" y="160" width="1" height="4"/><rect x="892" y="160" width="1" height="4"/><rect x="900" y="161" width="1" height="3"/><rect x="901" y="160" width="1" height="5"/><rect x="902" y="160" width="1" height="4"/><rect x="903" y="160" width="1" height="4"/><rect x="904" y="160" width="1" height="4"/><rect x="912" y="160" width="1" height="4"/><rect x="913" y="160" width="1" height="4"/><rect x="914" y="160" width="1" height="4"/><rect x="915" y="160" width="1" height="4"/><rect x="916" y="160" width="1" height="4"/><rect x="917" y="160" width="1" height="4"/><rect x="925" y="160" width="1" height="4"/><rect x="926" y="160" width="1" height="4"/><rect x="927" y="160" width="1" height="4"/><rect x="928" y="160" width="1" height="4"/><rect x="929" y="161" width="1" height="3"/><rect x="937" y="160" width="1" height="4"/><rect x="938" y="160" width="1" height="4"/><rect x="946" y="160" width="1" height="4"/><rect x="947" y="160" width="1" height="4"/><rect x="948" y="160" width="1" height="4"/><rect x="949" y="160" width="1" height="4"/><rect x="950" y="160" width="1" height="4"/><rect x="951" y="160" width="1" height="4"/><rect x="958" y="159" width="1" height="5"/><rect x="959" y="160" width="1" height="4"/><rect x="960" y="160" width="1" height="4"/><rect x="961" y="161" width="1" height="3"/><rect x="962" y="160" width="1" height="4"/><rect x="963" y="160" width="1" height="4"/><rect x="964" y="160" width="1" height="4"/><rect x="965" y="160" width="1" height="4"/><rect x="966" y="160" width="1" height="4"/><rect x="967" y="160" width="1" height="4"/><rect x="968" y="160" width="1" height="4"/><rect x="969" y="160" width="1" height="5"/><rect x="970" y="160" width="1" height="4"/><rect x="971" y="159" width="1" height="5"/><rect x="972" y="160" width="1" height="4"/><rect x="973" y="160" width="1" height="4"/><rect x="974" y="160" width="1" height="4"/><rect x="975" y="160" width="1" height="4"/><rect x="976" y="160" width="1" height="4"/><rect x="977" y="160" width="1" height="4"/><rect x="978" y="160" width="1" height="4"/><rect x="979" y="160" width="1" height="4"/><rect x="980" y="160" width="1" height="4"/><rect x="981" y="160" width="1" height="4"/><rect x="982" y="160" width="1" height="4"/></g><path d="M96.00 246.0L96.75 246.0L97.10 240.1L97.45 196.4L98.10 187.2L98.80 178.8L99.50 172.9L100.20 168.7L101.10 164.9L102.10 162.0M173.00 162.0L173.40 176.2L174.40 227.2L175.30 245.6L176.05 245.6L176.40 239.7L176.75 196.3L177.40 187.1L178.10 178.7L178.80 172.9L179.50 168.7L180.40 164.9L181.40 162.0M240.90 162.0L241.30 176.9L242.30 230.2L243.20 249.4L243.95 249.4L244.30 243.3L244.65 197.8L245.30 188.2L246.00 179.5L246.70 173.4L247.40 169.0L248.30 165.1L249.30 162.0M290.90 162.0L291.30 176.9L292.30 230.2L293.20 249.4L293.95 249.4L294.30 243.3L294.65 197.8L295.30 188.2L296.00 179.5L296.70 173.4L297.40 169.0L298.30 165.1L299.30 162.0M341.15 162.0L341.55 175.8L342.55 225.2L343.45 243.0L344.20 243.0L344.55 237.3L344.90 195.2L345.55 186.3L346.25 178.2L346.95 172.5L347.65 168.5L348.55 164.8L349.55 162.0M391.15 162.0L391.55 176.2L392.55 227.2L393.45 245.6L394.20 245.6L394.55 239.7L394.90 196.3L395.55 187.1L396.25 178.7L396.95 172.9L397.65 168.7L398.55 164.9L399.55 162.0M441.15 162.0L441.55 175.3L442.55 222.8L443.45 240.0L444.20 240.0L444.55 234.5L444.90 194.0L445.55 185.4L446.25 177.6L446.95 172.1L447.65 168.2L448.55 164.7L449.55 162.0M482.15 162.0L482.55 176.6L483.55 229.1L484.45 248.0L485.20 248.0L485.55 242.0L485.90 197.3L486.55 187.8L487.25 179.2L487.95 173.2L488.65 168.9L489.55 165.0L490.55 162.0M532.15 162.0L532.55 176.6L533.55 229.1L534.45 248.0L535.20 248.0L535.55 242.0L535.90 197.3L536.55 187.8L537.25 179.2L537.95 173.2L538.65 168.9L539.55 165.0L540.55 162.0M582.15 162.0L582.55 176.4L583.55 227.9L584.45 246.5L585.20 246.5L585.55 240.6L585.90 196.6L586.55 187.3L587.25 178.9L587.95 173.0L588.65 168.8L589.55 165.0L590.55 162.0M634.00 162.0L634.40 176.5L635.40 228.7L636.30 247.5L637.05 247.5L637.40 241.5L637.75 197.1L638.40 187.7L639.10 179.1L639.80 173.1L640.50 168.8L641.40 165.0L642.40 162.0M684.30 162.0L684.70 176.3L685.70 227.5L686.60 246.0L687.35 246.0L687.70 240.1L688.05 196.4L688.70 187.2L689.40 178.8L690.10 172.9L690.80 168.7L691.70 164.9L692.70 162.0M734.65 162.0L735.05 175.9L736.05 225.6L736.95 243.5L737.70 243.5L738.05 237.8L738.40 195.4L739.05 186.4L739.75 178.3L740.45 172.6L741.15 168.5L742.05 164.9L743.05 162.0M784.30 162.0L784.70 175.9L785.70 225.6L786.60 243.5L787.35 243.5L787.70 237.8L788.05 195.4L788.70 186.4L789.40 178.3L790.10 172.6L790.80 168.5L791.70 164.9L792.70 162.0M817.15 162.0L817.55 176.2L818.55 227.1L819.45 245.5L820.20 245.5L820.55 239.7L820.90 196.2L821.55 187.1L822.25 178.7L822.95 172.9L823.65 168.7L824.55 164.9L825.55 162.0M829.65 162.0L830.05 177.1L831.05 231.4L831.95 251.0L832.70 251.0L833.05 244.8L833.40 198.5L834.05 188.7L834.75 179.8L835.45 173.6L836.15 169.1L837.05 165.1L838.05 162.0M842.40 162.0L842.80 177.1L843.80 231.4L844.70 251.0L845.45 251.0L845.80 244.8L846.15 198.5L846.80 188.7L847.50 179.8L848.20 173.6L848.90 169.1L849.80 165.1L850.80 162.0M854.90 162.0L855.30 177.0L856.30 230.6L857.20 250.0L857.95 250.0L858.30 243.8L858.65 198.1L859.30 188.4L860.00 179.6L860.70 173.4L861.40 169.0L862.30 165.1L863.30 162.0M867.40 162.0L867.80 177.0L868.80 230.6L869.70 250.0L870.45 250.0L870.80 243.8L871.15 198.1L871.80 188.4L872.50 179.6L873.20 173.4L873.90 169.0L874.80 165.1L875.80 162.0M879.90 162.0L880.30 176.8L881.30 229.9L882.20 249.0L882.95 249.0L883.30 242.9L883.65 197.7L884.30 188.1L885.00 179.4L885.70 173.3L886.40 169.0L887.30 165.0L888.30 162.0M892.40 162.0L892.80 176.4L893.80 228.3L894.70 247.0L895.45 247.0L895.80 241.1L896.15 196.8L896.80 187.5L897.50 179.0L898.20 173.1L898.90 168.8L899.80 165.0L900.80 162.0M904.40 162.0L904.80 176.6L905.80 229.1L906.70 248.0L907.45 248.0L907.80 242.0L908.15 197.3L908.80 187.8L909.50 179.2L910.20 173.2L910.90 168.9L911.80 165.0L912.80 162.0M916.90 162.0L917.30 176.3L918.30 227.5L919.20 246.0L919.95 246.0L920.30 240.1L920.65 196.4L921.30 187.2L922.00 178.8L922.70 172.9L923.40 168.7L924.30 164.9L925.30 162.0M929.40 162.0L929.80 176.0L930.80 226.4L931.70 244.5L932.45 244.5L932.80 238.7L933.15 195.8L933.80 186.8L934.50 178.5L935.20 172.7L935.90 168.6L936.80 164.9L937.80 162.0M938.00 162.0L938.40 176.0L939.40 226.4L940.30 244.5L941.05 244.5L941.40 238.7L941.75 195.8L942.40 186.8L943.10 178.5L943.80 172.7L944.50 168.6L945.40 164.9L946.40 162.0M950.70 162.0L951.10 177.5L952.10 233.0L953.00 253.0L953.75 253.0L954.10 246.6L954.45 199.3L955.10 189.3L955.80 180.2L956.50 173.8L957.20 169.3L958.10 165.2L959.10 162.0" fill="none" stroke="#d40000" stroke-width="1.15"/></g></svg>
<svg style="left:0px;top:0px;" width="1120" height="570" viewBox="0 0 1120 570"><path d="M633.7 163V194M937.9 160V176" stroke="#d40000" stroke-width="1.1"/></svg>
<svg style="left:0px;top:0px;" width="1120" height="570" viewBox="0 0 1120 570"><path d="M832.5 160V311" stroke="#bdbdbd" stroke-width="1" stroke-dasharray="1 1"/><circle cx="832.5" cy="157.5" r="3" fill="#8bc21f" stroke="#4f6b1f" stroke-width="1"/><path d="M845.5 160V311" stroke="#bdbdbd" stroke-width="1" stroke-dasharray="1 1"/><circle cx="845.5" cy="157.5" r="3" fill="#8bc21f" stroke="#4f6b1f" stroke-width="1"/><path d="M857.5 160V311" stroke="#bdbdbd" stroke-width="1" stroke-dasharray="1 1"/><circle cx="857.5" cy="157.5" r="3" fill="#8bc21f" stroke="#4f6b1f" stroke-width="1"/><path d="M870.4 160V311" stroke="#bdbdbd" stroke-width="1" stroke-dasharray="1 1"/><circle cx="870.4" cy="157.5" r="3" fill="#8bc21f" stroke="#4f6b1f" stroke-width="1"/><path d="M882.6 160V311" stroke="#bdbdbd" stroke-width="1" stroke-dasharray="1 1"/><circle cx="882.6" cy="157.5" r="3" fill="#8bc21f" stroke="#4f6b1f" stroke-width="1"/><path d="M895.1 160V311" stroke="#bdbdbd" stroke-width="1" stroke-dasharray="1 1"/><circle cx="895.1" cy="157.5" r="3" fill="#8bc21f" stroke="#4f6b1f" stroke-width="1"/><path d="M907.6 160V311" stroke="#bdbdbd" stroke-width="1" stroke-dasharray="1 1"/><circle cx="907.6" cy="157.5" r="3" fill="#8bc21f" stroke="#4f6b1f" stroke-width="1"/><path d="M920.4 160V311" stroke="#bdbdbd" stroke-width="1" stroke-dasharray="1 1"/><circle cx="920.4" cy="157.5" r="3" fill="#8bc21f" stroke="#4f6b1f" stroke-width="1"/><path d="M765.2 155L778 168M778 155L765.2 168" stroke="#222" stroke-width="1"/><rect x="771" y="161" width="1.2" height="1.2" fill="#3fe0e0"/></svg>
<svg style="left:0px;top:0px;" width="1120" height="570" viewBox="0 0 1120 570"><g shape-rendering="crispEdges"><rect x="491" y="451.8" width="492" height="9.4" fill="#16068c"/><rect x="491" y="451.2" width="1" height="10.4" fill="#16068c"/><rect x="492" y="451.6" width="1" height="10.1" fill="#16068c"/><rect x="493" y="451.8" width="1" height="9.9" fill="#16068c"/><rect x="494" y="451.8" width="1" height="9.4" fill="#16068c"/><rect x="495" y="451.4" width="1" height="9.8" fill="#16068c"/><rect x="496" y="451.2" width="1" height="10" fill="#16068c"/><rect x="497" y="451.6" width="1" height="10" fill="#16068c"/><rect x="498" y="451.8" width="1" height="9.8" fill="#16068c"/><rect x="499" y="451.8" width="1" height="9.9" fill="#16068c"/><rect x="500" y="451.6" width="1" height="9.6" fill="#16068c"/><rect x="501" y="451.4" width="1" height="9.8" fill="#16068c"/><rect x="502" y="451.6" width="1" height="9.6" fill="#16068c"/><rect x="503" y="451.8" width="1" height="9.8" fill="#16068c"/><rect x="504" y="451.2" width="1" height="10.2" fill="#16068c"/><rect x="505" y="451.8" width="1" height="9.4" fill="#16068c"/><rect x="506" y="451.8" width="1" height="9.4" fill="#16068c"/><rect x="507" y="451.6" width="1" height="10.1" fill="#16068c"/><rect x="508" y="451.2" width="1" height="10" fill="#16068c"/><rect x="509" y="451.8" width="1" height="9.9" fill="#16068c"/><rect x="510" y="451.8" width="1" height="9.9" fill="#16068c"/><rect x="511" y="451.8" width="1" height="9.6" fill="#16068c"/><rect x="512" y="451.8" width="1" height="9.4" fill="#16068c"/><rect x="513" y="451.8" width="1" height="9.4" fill="#16068c"/><rect x="514" y="451.8" width="1" height="9.4" fill="#16068c"/><rect x="515" y="451.8" width="1" height="9.4" fill="#16068c"/><rect x="516" y="451.6" width="1" height="9.6" fill="#16068c"/><rect x="517" y="451.8" width="1" height="9.6" fill="#16068c"/><rect x="518" y="451.8" width="1" height="9.9" fill="#16068c"/><rect x="519" y="451.4" width="1" height="9.8" fill="#16068c"/><rect x="520" y="451.8" width="1" height="9.4" fill="#16068c"/><rect x="521" y="451.8" width="1" height="9.4" fill="#16068c"/><rect x="522" y="451.2" width="1" height="10.5" fill="#16068c"/><rect x="523" y="451.8" width="1" height="9.6" fill="#16068c"/><rect x="524" y="451.8" width="1" height="9.4" fill="#16068c"/><rect x="525" y="451.6" width="1" height="9.6" fill="#16068c"/><rect x="526" y="451.8" width="1" height="9.4" fill="#16068c"/><rect x="527" y="451.4" width="1" height="10" fill="#16068c"/><rect x="528" y="451.8" width="1" height="9.4" fill="#16068c"/><rect x="529" y="451.8" width="1" height="9.4" fill="#16068c"/><rect x="530" y="451.8" width="1" height="9.6" fill="#16068c"/><rect x="531" y="451.8" width="1" height="9.4" fill="#16068c"/><rect x="532" y="451.2" width="1" height="10" fill="#16068c"/><rect x="533" y="451.8" width="1" height="9.8" fill="#16068c"/><rect x="534" y="451.8" width="1" height="9.6" fill="#16068c"/><rect x="535" y="451.8" width="1" height="9.8" fill="#16068c"/><rect x="536" y="451.8" width="1" height="9.4" fill="#16068c"/><rect x="537" y="451.8" width="1" height="9.4" fill="#16068c"/><rect x="538" y="451.8" width="1" height="9.4" fill="#16068c"/><rect x="539" y="451.8" width="1" height="9.4" fill="#16068c"/><rect x="540" y="451.8" width="1" height="9.8" fill="#16068c"/><rect x="541" y="451.8" width="1" height="9.4" fill="#16068c"/><rect x="542" y="451.6" width="1" height="10.1" fill="#16068c"/><rect x="543" y="451.8" width="1" height="9.4" fill="#16068c"/><rect x="544" y="451.2" width="1" height="10.4" fill="#16068c"/><rect x="545" y="451.8" width="1" height="9.4" fill="#16068c"/><rect x="546" y="451.8" width="1" height="9.4" fill="#16068c"/><rect x="547" y="451.8" width="1" height="9.4" fill="#16068c"/><rect x="548" y="451.8" width="1" height="9.4" fill="#16068c"/><rect x="549" y="451.8" width="1" height="9.9" fill="#16068c"/><rect x="550" y="451.8" width="1" height="9.6" fill="#16068c"/><rect x="551" y="451.8" width="1" height="9.8" fill="#16068c"/><rect x="552" y="451.8" width="1" height="9.4" fill="#16068c"/><rect x="553" y="451.4" width="1" height="9.8" fill="#16068c"/><rect x="554" y="451.2" width="1" height="10" fill="#16068c"/><rect x="555" y="451.8" width="1" height="9.4" fill="#16068c"/><rect x="556" y="451.8" width="1" height="9.9" fill="#16068c"/><rect x="557" y="451.8" width="1" height="9.4" fill="#16068c"/><rect x="558" y="451.8" width="1" height="9.9" fill="#16068c"/><rect x="559" y="451.4" width="1" height="9.8" fill="#16068c"/><rect x="560" y="451.2" width="1" height="10" fill="#16068c"/><rect x="561" y="451.2" width="1" height="10" fill="#16068c"/><rect x="562" y="451.8" width="1" height="9.9" fill="#16068c"/><rect x="563" y="451.6" width="1" height="9.6" fill="#16068c"/><rect x="564" y="451.8" width="1" height="9.9" fill="#16068c"/><rect x="565" y="451.8" width="1" height="9.8" fill="#16068c"/><rect x="566" y="451.8" width="1" height="9.6" fill="#16068c"/><rect x="567" y="451.6" width="1" height="10.1" fill="#16068c"/><rect x="568" y="451.8" width="1" height="9.4" fill="#16068c"/><rect x="569" y="451.8" width="1" height="9.9" fill="#16068c"/><rect x="570" y="451.8" width="1" height="9.4" fill="#16068c"/><rect x="571" y="451.4" width="1" height="9.8" fill="#16068c"/><rect x="572" y="451.6" width="1" height="9.6" fill="#16068c"/><rect x="573" y="451.8" width="1" height="9.9" fill="#16068c"/><rect x="574" y="451.8" width="1" height="9.8" fill="#16068c"/><rect x="575" y="451.2" width="1" height="10.2" fill="#16068c"/><rect x="576" y="451.8" width="1" height="9.8" fill="#16068c"/><rect x="577" y="451.6" width="1" height="9.6" fill="#16068c"/><rect x="578" y="451.8" width="1" height="9.4" fill="#16068c"/><rect x="579" y="451.4" width="1" height="10.3" fill="#16068c"/><rect x="580" y="451.8" width="1" height="9.6" fill="#16068c"/><rect x="581" y="451.8" width="1" height="9.9" fill="#16068c"/><rect x="582" y="451.2" width="1" height="10.2" fill="#16068c"/><rect x="583" y="451.8" width="1" height="9.4" fill="#16068c"/><rect x="584" y="451.8" width="1" height="9.4" fill="#16068c"/><rect x="585" y="451.8" width="1" height="9.4" fill="#16068c"/><rect x="586" y="451.8" width="1" height="9.4" fill="#16068c"/><rect x="587" y="451.8" width="1" height="9.4" fill="#16068c"/><rect x="588" y="451.8" width="1" height="9.9" fill="#16068c"/><rect x="589" y="451.8" width="1" height="9.8" fill="#16068c"/><rect x="590" y="451.8" width="1" height="9.4" fill="#16068c"/><rect x="591" y="451.8" width="1" height="9.4" fill="#16068c"/><rect x="592" y="451.8" width="1" height="9.9" fill="#16068c"/><rect x="593" y="451.6" width="1" height="9.8" fill="#16068c"/><rect x="594" y="451.6" width="1" height="10.1" fill="#16068c"/><rect x="595" y="451.6" width="1" height="9.6" fill="#16068c"/><rect x="596" y="451.2" width="1" height="10" fill="#16068c"/><rect x="597" y="451.8" width="1" height="9.4" fill="#16068c"/><rect x="598" y="451.2" width="1" height="10.2" fill="#16068c"/><rect x="599" y="451.8" width="1" height="9.8" fill="#16068c"/><rect x="600" y="451.8" width="1" height="9.9" fill="#16068c"/><rect x="601" y="451.8" width="1" height="9.9" fill="#16068c"/><rect x="602" y="451.2" width="1" height="10.2" fill="#16068c"/><rect x="603" y="451.2" width="1" height="10.4" fill="#16068c"/><rect x="604" y="451.8" width="1" height="9.4" fill="#16068c"/><rect x="605" y="451.2" width="1" height="10.2" fill="#16068c"/><rect x="606" y="451.8" width="1" height="9.8" fill="#16068c"/><rect x="607" y="451.2" width="1" height="10.2" fill="#16068c"/><rect x="608" y="451.8" width="1" height="9.4" fill="#16068c"/><rect x="609" y="451.8" width="1" height="9.4" fill="#16068c"/><rect x="610" y="451.8" width="1" height="9.4" fill="#16068c"/><rect x="611" y="451.8" width="1" height="9.8" fill="#16068c"/><rect x="612" y="451.8" width="1" height="9.4" fill="#16068c"/><rect x="613" y="451.8" width="1" height="9.9" fill="#16068c"/><rect x="614" y="451.8" width="1" height="9.4" fill="#16068c"/><rect x="615" y="451.8" width="1" height="9.4" fill="#16068c"/><rect x="616" y="451.8" width="1" height="9.4" fill="#16068c"/><rect x="617" y="451.6" width="1" height="9.6" fill="#16068c"/><rect x="618" y="451.4" width="1" height="10.2" fill="#16068c"/><rect x="619" y="451.8" width="1" height="9.4" fill="#16068c"/><rect x="620" y="451.8" width="1" height="9.9" fill="#16068c"/><rect x="621" y="451.8" width="1" height="9.4" fill="#16068c"/><rect x="622" y="451.8" width="1" height="9.4" fill="#16068c"/><rect x="623" y="451.8" width="1" height="9.8" fill="#16068c"/><rect x="624" y="451.6" width="1" height="9.6" fill="#16068c"/><rect x="625" y="451.8" width="1" height="9.4" fill="#16068c"/><rect x="626" y="451.8" width="1" height="9.4" fill="#16068c"/><rect x="627" y="451.8" width="1" height="9.8" fill="#16068c"/><rect x="628" y="451.6" width="1" height="9.6" fill="#16068c"/><rect x="629" y="451.8" width="1" height="9.9" fill="#16068c"/><rect x="630" y="451.8" width="1" height="9.6" fill="#16068c"/><rect x="631" y="451.8" width="1" height="9.4" fill="#16068c"/><rect x="632" y="451.8" width="1" height="9.6" fill="#16068c"/><rect x="633" y="451.8" width="1" height="9.8" fill="#16068c"/><rect x="634" y="451.8" width="1" height="9.4" fill="#16068c"/><rect x="635" y="451.8" width="1" height="9.4" fill="#16068c"/><rect x="636" y="451.8" width="1" height="9.4" fill="#16068c"/><rect x="637" y="451.2" width="1" height="10.4" fill="#16068c"/><rect x="638" y="451.2" width="1" height="10.5" fill="#16068c"/><rect x="639" y="451.8" width="1" height="9.4" fill="#16068c"/><rect x="640" y="451.8" width="1" height="9.4" fill="#16068c"/><rect x="641" y="451.6" width="1" height="9.6" fill="#16068c"/><rect x="642" y="451.8" width="1" height="9.9" fill="#16068c"/><rect x="643" y="451.8" width="1" height="9.9" fill="#16068c"/><rect x="644" y="451.8" width="1" height="9.6" fill="#16068c"/><rect x="645" y="451.6" width="1" height="9.8" fill="#16068c"/><rect x="646" y="451.2" width="1" height="10" fill="#16068c"/><rect x="647" y="451.2" width="1" height="10.4" fill="#16068c"/><rect x="648" y="451.2" width="1" height="10.2" fill="#16068c"/><rect x="649" y="451.4" width="1" height="10.3" fill="#16068c"/><rect x="650" y="451.8" width="1" height="9.4" fill="#16068c"/><rect x="651" y="451.8" width="1" height="9.4" fill="#16068c"/><rect x="652" y="451.6" width="1" height="9.6" fill="#16068c"/><rect x="653" y="451.2" width="1" height="10" fill="#16068c"/><rect x="654" y="451.8" width="1" height="9.4" fill="#16068c"/><rect x="655" y="451.8" width="1" height="9.9" fill="#16068c"/><rect x="656" y="451.8" width="1" height="9.4" fill="#16068c"/><rect x="657" y="451.8" width="1" height="9.4" fill="#16068c"/><rect x="658" y="451.8" width="1" height="9.6" fill="#16068c"/><rect x="659" y="451.8" width="1" height="9.9" fill="#16068c"/><rect x="660" y="451.2" width="1" height="10" fill="#16068c"/><rect x="661" y="451.4" width="1" height="9.8" fill="#16068c"/><rect x="662" y="451.8" width="1" height="9.4" fill="#16068c"/><rect x="663" y="451.2" width="1" height="10.4" fill="#16068c"/><rect x="664" y="451.4" width="1" height="9.8" fill="#16068c"/><rect x="665" y="451.8" width="1" height="9.9" fill="#16068c"/><rect x="666" y="451.2" width="1" height="10.4" fill="#16068c"/><rect x="667" y="451.8" width="1" height="9.6" fill="#16068c"/><rect x="668" y="451.8" width="1" height="9.9" fill="#16068c"/><rect x="669" y="451.8" width="1" height="9.4" fill="#16068c"/><rect x="670" y="451.2" width="1" height="10.2" fill="#16068c"/><rect x="671" y="451.6" width="1" height="10.1" fill="#16068c"/><rect x="672" y="451.8" width="1" height="9.8" fill="#16068c"/><rect x="673" y="451.4" width="1" height="9.8" fill="#16068c"/><rect x="674" y="451.4" width="1" height="9.8" fill="#16068c"/><rect x="675" y="451.8" width="1" height="9.4" fill="#16068c"/><rect x="676" y="451.6" width="1" height="9.6" fill="#16068c"/><rect x="677" y="451.8" width="1" height="9.8" fill="#16068c"/><rect x="678" y="451.8" width="1" height="9.4" fill="#16068c"/><rect x="679" y="451.8" width="1" height="9.8" fill="#16068c"/><rect x="680" y="451.8" width="1" height="9.9" fill="#16068c"/><rect x="681" y="451.8" width="1" height="9.4" fill="#16068c"/><rect x="682" y="451.8" width="1" height="9.9" fill="#16068c"/><rect x="683" y="451.8" width="1" height="9.4" fill="#16068c"/><rect x="684" y="451.8" width="1" height="9.6" fill="#16068c"/><rect x="685" y="451.8" width="1" height="9.4" fill="#16068c"/><rect x="686" y="451.6" width="1" height="9.8" fill="#16068c"/><rect x="687" y="451.8" width="1" height="9.4" fill="#16068c"/><rect x="688" y="451.8" width="1" height="9.4" fill="#16068c"/><rect x="689" y="451.8" width="1" height="9.6" fill="#16068c"/><rect x="690" y="451.4" width="1" height="9.8" fill="#16068c"/><rect x="691" y="451.6" width="1" height="10" fill="#16068c"/><rect x="692" y="451.8" width="1" height="9.8" fill="#16068c"/><rect x="693" y="451.8" width="1" height="9.4" fill="#16068c"/><rect x="694" y="451.8" width="1" height="9.4" fill="#16068c"/><rect x="695" y="451.4" width="1" height="9.8" fill="#16068c"/><rect x="696" y="451.2" width="1" height="10" fill="#16068c"/><rect x="697" y="451.8" width="1" height="9.4" fill="#16068c"/><rect x="698" y="451.8" width="1" height="9.6" fill="#16068c"/><rect x="699" y="451.8" width="1" height="9.9" fill="#16068c"/><rect x="700" y="451.8" width="1" height="9.8" fill="#16068c"/><rect x="701" y="451.8" width="1" height="9.9" fill="#16068c"/><rect x="702" y="451.2" width="1" height="10" fill="#16068c"/><rect x="703" y="451.8" width="1" height="9.4" fill="#16068c"/><rect x="704" y="451.8" width="1" height="9.6" fill="#16068c"/><rect x="705" y="451.4" width="1" height="9.8" fill="#16068c"/><rect x="706" y="451.8" width="1" height="9.4" fill="#16068c"/><rect x="707" y="451.2" width="1" height="10" fill="#16068c"/><rect x="708" y="451.8" width="1" height="9.9" fill="#16068c"/><rect x="709" y="451.8" width="1" height="9.4" fill="#16068c"/><rect x="710" y="451.4" width="1" height="9.8" fill="#16068c"/><rect x="711" y="451.4" width="1" height="9.8" fill="#16068c"/><rect x="712" y="451.8" width="1" height="9.4" fill="#16068c"/><rect x="713" y="451.8" width="1" height="9.4" fill="#16068c"/><rect x="714" y="451.8" width="1" height="9.9" fill="#16068c"/><rect x="715" y="451.8" width="1" height="9.4" fill="#16068c"/><rect x="716" y="451.8" width="1" height="9.4" fill="#16068c"/><rect x="717" y="451.8" width="1" height="9.4" fill="#16068c"/><rect x="718" y="451.8" width="1" height="9.9" fill="#16068c"/><rect x="719" y="451.8" width="1" height="9.4" fill="#16068c"/><rect x="720" y="451.6" width="1" height="9.8" fill="#16068c"/><rect x="721" y="451.8" width="1" height="9.9" fill="#16068c"/><rect x="722" y="451.8" width="1" height="9.8" fill="#16068c"/><rect x="723" y="451.8" width="1" height="9.4" fill="#16068c"/><rect x="724" y="451.6" width="1" height="10" fill="#16068c"/><rect x="725" y="451.8" width="1" height="9.4" fill="#16068c"/><rect x="726" y="451.8" width="1" height="9.8" fill="#16068c"/><rect x="727" y="451.8" width="1" height="9.8" fill="#16068c"/><rect x="728" y="451.4" width="1" height="10.3" fill="#16068c"/><rect x="729" y="451.8" width="1" height="9.4" fill="#16068c"/><rect x="730" y="451.8" width="1" height="9.8" fill="#16068c"/><rect x="731" y="451.4" width="1" height="10.3" fill="#16068c"/><rect x="732" y="451.8" width="1" height="9.4" fill="#16068c"/><rect x="733" y="451.4" width="1" height="9.8" fill="#16068c"/><rect x="734" y="451.8" width="1" height="9.4" fill="#16068c"/><rect x="735" y="451.8" width="1" height="9.9" fill="#16068c"/><rect x="736" y="451.8" width="1" height="9.4" fill="#16068c"/><rect x="737" y="451.2" width="1" height="10.5" fill="#16068c"/><rect x="738" y="451.8" width="1" height="9.4" fill="#16068c"/><rect x="739" y="451.8" width="1" height="9.8" fill="#16068c"/><rect x="740" y="451.8" width="1" height="9.4" fill="#16068c"/><rect x="741" y="451.4" width="1" height="10.2" fill="#16068c"/><rect x="742" y="451.8" width="1" height="9.4" fill="#16068c"/><rect x="743" y="451.8" width="1" height="9.4" fill="#16068c"/><rect x="744" y="451.8" width="1" height="9.4" fill="#16068c"/><rect x="745" y="451.8" width="1" height="9.4" fill="#16068c"/><rect x="746" y="451.8" width="1" height="9.6" fill="#16068c"/><rect x="747" y="451.8" width="1" height="9.8" fill="#16068c"/><rect x="748" y="451.8" width="1" height="9.4" fill="#16068c"/><rect x="749" y="451.2" width="1" height="10.4" fill="#16068c"/><rect x="750" y="451.4" width="1" height="9.8" fill="#16068c"/><rect x="751" y="451.8" width="1" height="9.4" fill="#16068c"/><rect x="752" y="451.6" width="1" height="9.6" fill="#16068c"/><rect x="753" y="451.8" width="1" height="9.4" fill="#16068c"/><rect x="754" y="451.8" width="1" height="9.4" fill="#16068c"/><rect x="755" y="451.8" width="1" height="9.8" fill="#16068c"/><rect x="756" y="451.8" width="1" height="9.4" fill="#16068c"/><rect x="757" y="451.8" width="1" height="9.6" fill="#16068c"/><rect x="758" y="451.8" width="1" height="9.4" fill="#16068c"/><rect x="759" y="451.4" width="1" height="10" fill="#16068c"/><rect x="760" y="451.8" width="1" height="9.9" fill="#16068c"/><rect x="761" y="451.6" width="1" height="9.6" fill="#16068c"/><rect x="762" y="451.6" width="1" height="10.1" fill="#16068c"/><rect x="763" y="451.4" width="1" height="9.8" fill="#16068c"/><rect x="764" y="451.2" width="1" height="10" fill="#16068c"/><rect x="765" y="451.4" width="1" height="9.8" fill="#16068c"/><rect x="766" y="451.8" width="1" height="9.8" fill="#16068c"/><rect x="767" y="451.6" width="1" height="10" fill="#16068c"/><rect x="768" y="451.8" width="1" height="9.4" fill="#16068c"/><rect x="769" y="451.6" width="1" height="9.6" fill="#16068c"/><rect x="770" y="451.8" width="1" height="9.8" fill="#16068c"/><rect x="771" y="451.8" width="1" height="9.6" fill="#16068c"/><rect x="772" y="451.8" width="1" height="9.8" fill="#16068c"/><rect x="773" y="451.8" width="1" height="9.9" fill="#16068c"/><rect x="774" y="451.6" width="1" height="9.6" fill="#16068c"/><rect x="775" y="451.8" width="1" height="9.8" fill="#16068c"/><rect x="776" y="451.8" width="1" height="9.8" fill="#16068c"/><rect x="777" y="451.4" width="1" height="9.8" fill="#16068c"/><rect x="778" y="451.8" width="1" height="9.4" fill="#16068c"/><rect x="779" y="451.8" width="1" height="9.6" fill="#16068c"/><rect x="780" y="451.4" width="1" height="9.8" fill="#16068c"/><rect x="781" y="451.8" width="1" height="9.4" fill="#16068c"/><rect x="782" y="451.8" width="1" height="9.9" fill="#16068c"/><rect x="783" y="451.8" width="1" height="9.6" fill="#16068c"/><rect x="784" y="451.8" width="1" height="9.9" fill="#16068c"/><rect x="785" y="451.6" width="1" height="9.6" fill="#16068c"/><rect x="786" y="451.4" width="1" height="9.8" fill="#16068c"/><rect x="787" y="451.4" width="1" height="10" fill="#16068c"/><rect x="788" y="451.6" width="1" height="9.6" fill="#16068c"/><rect x="789" y="451.8" width="1" height="9.4" fill="#16068c"/><rect x="790" y="451.2" width="1" height="10.5" fill="#16068c"/><rect x="791" y="451.8" width="1" height="9.6" fill="#16068c"/><rect x="792" y="451.8" width="1" height="9.4" fill="#16068c"/><rect x="793" y="451.6" width="1" height="10.1" fill="#16068c"/><rect x="794" y="451.8" width="1" height="9.4" fill="#16068c"/><rect x="795" y="451.8" width="1" height="9.8" fill="#16068c"/><rect x="796" y="451.8" width="1" height="9.4" fill="#16068c"/><rect x="797" y="451.6" width="1" height="9.6" fill="#16068c"/><rect x="798" y="451.8" width="1" height="9.6" fill="#16068c"/><rect x="799" y="451.8" width="1" height="9.4" fill="#16068c"/><rect x="800" y="451.8" width="1" height="9.4" fill="#16068c"/><rect x="801" y="451.8" width="1" height="9.6" fill="#16068c"/><rect x="802" y="451.8" width="1" height="9.4" fill="#16068c"/><rect x="803" y="451.8" width="1" height="9.6" fill="#16068c"/><rect x="804" y="451.8" width="1" height="9.4" fill="#16068c"/><rect x="805" y="451.8" width="1" height="9.4" fill="#16068c"/><rect x="806" y="451.4" width="1" height="10.3" fill="#16068c"/><rect x="807" y="451.8" width="1" height="9.9" fill="#16068c"/><rect x="808" y="451.2" width="1" height="10.2" fill="#16068c"/><rect x="809" y="451.8" width="1" height="9.4" fill="#16068c"/><rect x="810" y="451.8" width="1" height="9.4" fill="#16068c"/><rect x="811" y="451.8" width="1" height="9.8" fill="#16068c"/><rect x="812" y="451.8" width="1" height="9.6" fill="#16068c"/><rect x="813" y="451.8" width="1" height="9.4" fill="#16068c"/><rect x="814" y="451.4" width="1" height="9.8" fill="#16068c"/><rect x="815" y="451.4" width="1" height="10" fill="#16068c"/><rect x="816" y="451.8" width="1" height="9.4" fill="#16068c"/><rect x="817" y="451.8" width="1" height="9.4" fill="#16068c"/><rect x="818" y="451.6" width="1" height="9.8" fill="#16068c"/><rect x="819" y="451.8" width="1" height="9.4" fill="#16068c"/><rect x="820" y="451.8" width="1" height="9.4" fill="#16068c"/><rect x="821" y="451.4" width="1" height="9.8" fill="#16068c"/><rect x="822" y="451.8" width="1" height="9.9" fill="#16068c"/><rect x="823" y="451.8" width="1" height="9.6" fill="#16068c"/><rect x="824" y="451.4" width="1" height="9.8" fill="#16068c"/><rect x="825" y="451.8" width="1" height="9.4" fill="#16068c"/><rect x="826" y="451.8" width="1" height="9.9" fill="#16068c"/><rect x="827" y="451.8" width="1" height="9.4" fill="#16068c"/><rect x="828" y="451.8" width="1" height="9.4" fill="#16068c"/><rect x="829" y="451.6" width="1" height="9.6" fill="#16068c"/><rect x="830" y="451.8" width="1" height="9.8" fill="#16068c"/><rect x="831" y="451.6" width="1" height="9.6" fill="#16068c"/><rect x="832" y="451.8" width="1" height="9.4" fill="#16068c"/><rect x="833" y="451.2" width="1" height="10" fill="#16068c"/><rect x="834" y="451.4" width="1" height="10.3" fill="#16068c"/><rect x="835" y="451.4" width="1" height="9.8" fill="#16068c"/><rect x="836" y="451.8" width="1" height="9.4" fill="#16068c"/><rect x="837" y="451.2" width="1" height="10" fill="#16068c"/><rect x="838" y="451.8" width="1" height="9.4" fill="#16068c"/><rect x="839" y="451.2" width="1" height="10" fill="#16068c"/><rect x="840" y="451.2" width="1" height="10.2" fill="#16068c"/><rect x="841" y="451.8" width="1" height="9.8" fill="#16068c"/><rect x="842" y="451.8" width="1" height="9.9" fill="#16068c"/><rect x="843" y="451.8" width="1" height="9.4" fill="#16068c"/><rect x="844" y="451.2" width="1" height="10" fill="#16068c"/><rect x="845" y="451.8" width="1" height="9.4" fill="#16068c"/><rect x="846" y="451.2" width="1" height="10.5" fill="#16068c"/><rect x="847" y="451.8" width="1" height="9.9" fill="#16068c"/><rect x="848" y="451.2" width="1" height="10.5" fill="#16068c"/><rect x="849" y="451.8" width="1" height="9.4" fill="#16068c"/><rect x="850" y="451.8" width="1" height="9.4" fill="#16068c"/><rect x="851" y="451.8" width="1" height="9.4" fill="#16068c"/><rect x="852" y="451.2" width="1" height="10" fill="#16068c"/><rect x="853" y="451.8" width="1" height="9.4" fill="#16068c"/><rect x="854" y="451.8" width="1" height="9.6" fill="#16068c"/><rect x="855" y="451.8" width="1" height="9.4" fill="#16068c"/><rect x="856" y="451.8" width="1" height="9.8" fill="#16068c"/><rect x="857" y="451.4" width="1" height="10" fill="#16068c"/><rect x="858" y="451.8" width="1" height="9.4" fill="#16068c"/><rect x="859" y="451.8" width="1" height="9.8" fill="#16068c"/><rect x="860" y="451.2" width="1" height="10.5" fill="#16068c"/><rect x="861" y="451.8" width="1" height="9.4" fill="#16068c"/><rect x="862" y="451.8" width="1" height="9.9" fill="#16068c"/><rect x="863" y="451.8" width="1" height="9.4" fill="#16068c"/><rect x="864" y="451.6" width="1" height="9.6" fill="#16068c"/><rect x="865" y="451.6" width="1" height="9.6" fill="#16068c"/><rect x="866" y="451.8" width="1" height="9.6" fill="#16068c"/><rect x="867" y="451.8" width="1" height="9.4" fill="#16068c"/><rect x="868" y="451.8" width="1" height="9.6" fill="#16068c"/><rect x="869" y="451.8" width="1" height="9.8" fill="#16068c"/><rect x="870" y="451.4" width="1" height="9.8" fill="#16068c"/><rect x="871" y="451.6" width="1" height="9.6" fill="#16068c"/><rect x="872" y="451.6" width="1" height="9.6" fill="#16068c"/><rect x="873" y="451.8" width="1" height="9.4" fill="#16068c"/><rect x="874" y="451.8" width="1" height="9.6" fill="#16068c"/><rect x="875" y="451.6" width="1" height="9.6" fill="#16068c"/><rect x="876" y="451.8" width="1" height="9.6" fill="#16068c"/><rect x="877" y="451.8" width="1" height="9.8" fill="#16068c"/><rect x="878" y="451.8" width="1" height="9.6" fill="#16068c"/><rect x="879" y="451.8" width="1" height="9.4" fill="#16068c"/><rect x="880" y="451.2" width="1" height="10.2" fill="#16068c"/><rect x="881" y="451.6" width="1" height="9.6" fill="#16068c"/><rect x="882" y="451.4" width="1" height="9.8" fill="#16068c"/><rect x="883" y="451.8" width="1" height="9.4" fill="#16068c"/><rect x="884" y="451.6" width="1" height="10.1" fill="#16068c"/><rect x="885" y="451.8" width="1" height="9.6" fill="#16068c"/><rect x="886" y="451.4" width="1" height="9.8" fill="#16068c"/><rect x="887" y="451.2" width="1" height="10" fill="#16068c"/><rect x="888" y="451.8" width="1" height="9.8" fill="#16068c"/><rect x="889" y="451.6" width="1" height="9.8" fill="#16068c"/><rect x="890" y="451.8" width="1" height="9.8" fill="#16068c"/><rect x="891" y="451.6" width="1" height="9.6" fill="#16068c"/><rect x="892" y="451.4" width="1" height="9.8" fill="#16068c"/><rect x="893" y="451.4" width="1" height="9.8" fill="#16068c"/><rect x="894" y="451.2" width="1" height="10.2" fill="#16068c"/><rect x="895" y="451.2" width="1" height="10" fill="#16068c"/><rect x="896" y="451.8" width="1" height="9.4" fill="#16068c"/><rect x="897" y="451.4" width="1" height="9.8" fill="#16068c"/><rect x="898" y="451.8" width="1" height="9.8" fill="#16068c"/><rect x="899" y="451.6" width="1" height="9.6" fill="#16068c"/><rect x="900" y="451.4" width="1" height="9.8" fill="#16068c"/><rect x="901" y="451.8" width="1" height="9.9" fill="#16068c"/><rect x="902" y="451.8" width="1" height="9.4" fill="#16068c"/><rect x="903" y="451.8" width="1" height="9.6" fill="#16068c"/><rect x="904" y="451.8" width="1" height="9.8" fill="#16068c"/><rect x="905" y="451.8" width="1" height="9.6" fill="#16068c"/><rect x="906" y="451.2" width="1" height="10.5" fill="#16068c"/><rect x="907" y="451.8" width="1" height="9.4" fill="#16068c"/><rect x="908" y="451.8" width="1" height="9.6" fill="#16068c"/><rect x="909" y="451.4" width="1" height="9.8" fill="#16068c"/><rect x="910" y="451.8" width="1" height="9.8" fill="#16068c"/><rect x="911" y="451.8" width="1" height="9.4" fill="#16068c"/><rect x="912" y="451.8" width="1" height="9.4" fill="#16068c"/><rect x="913" y="451.4" width="1" height="10" fill="#16068c"/><rect x="914" y="451.6" width="1" height="10.1" fill="#16068c"/><rect x="915" y="451.8" width="1" height="9.4" fill="#16068c"/><rect x="916" y="451.8" width="1" height="9.4" fill="#16068c"/><rect x="917" y="451.8" width="1" height="9.8" fill="#16068c"/><rect x="918" y="451.8" width="1" height="9.4" fill="#16068c"/><rect x="919" y="451.2" width="1" height="10.5" fill="#16068c"/><rect x="920" y="451.8" width="1" height="9.8" fill="#16068c"/><rect x="921" y="451.2" width="1" height="10.2" fill="#16068c"/><rect x="922" y="451.8" width="1" height="9.8" fill="#16068c"/><rect x="923" y="451.6" width="1" height="10.1" fill="#16068c"/><rect x="924" y="451.8" width="1" height="9.8" fill="#16068c"/><rect x="925" y="451.8" width="1" height="9.4" fill="#16068c"/><rect x="926" y="451.8" width="1" height="9.4" fill="#16068c"/><rect x="927" y="451.8" width="1" height="9.4" fill="#16068c"/><rect x="928" y="451.8" width="1" height="9.8" fill="#16068c"/><rect x="929" y="451.2" width="1" height="10" fill="#16068c"/><rect x="930" y="451.8" width="1" height="9.4" fill="#16068c"/><rect x="931" y="451.8" width="1" height="9.8" fill="#16068c"/><rect x="932" y="451.8" width="1" height="9.4" fill="#16068c"/><rect x="933" y="451.8" width="1" height="9.6" fill="#16068c"/><rect x="934" y="451.6" width="1" height="10.1" fill="#16068c"/><rect x="935" y="451.8" width="1" height="9.8" fill="#16068c"/><rect x="936" y="451.2" width="1" height="10.2" fill="#16068c"/><rect x="937" y="451.4" width="1" height="9.8" fill="#16068c"/><rect x="938" y="451.8" width="1" height="9.4" fill="#16068c"/><rect x="939" y="451.4" width="1" height="9.8" fill="#16068c"/><rect x="940" y="451.4" width="1" height="10.2" fill="#16068c"/><rect x="941" y="451.8" width="1" height="9.4" fill="#16068c"/><rect x="942" y="451.8" width="1" height="9.4" fill="#16068c"/><rect x="943" y="451.8" width="1" height="9.4" fill="#16068c"/><rect x="944" y="451.6" width="1" height="9.8" fill="#16068c"/><rect x="945" y="451.2" width="1" height="10.2" fill="#16068c"/><rect x="946" y="451.2" width="1" height="10.4" fill="#16068c"/><rect x="947" y="451.8" width="1" height="9.4" fill="#16068c"/><rect x="948" y="451.8" width="1" height="9.6" fill="#16068c"/><rect x="949" y="451.8" width="1" height="9.8" fill="#16068c"/><rect x="950" y="451.8" width="1" height="9.4" fill="#16068c"/><rect x="951" y="451.8" width="1" height="9.6" fill="#16068c"/><rect x="952" y="451.4" width="1" height="9.8" fill="#16068c"/><rect x="953" y="451.2" width="1" height="10" fill="#16068c"/><rect x="954" y="451.2" width="1" height="10" fill="#16068c"/><rect x="955" y="451.8" width="1" height="9.4" fill="#16068c"/><rect x="956" y="451.2" width="1" height="10.4" fill="#16068c"/><rect x="957" y="451.2" width="1" height="10.4" fill="#16068c"/><rect x="958" y="451.8" width="1" height="9.4" fill="#16068c"/><rect x="959" y="451.8" width="1" height="9.4" fill="#16068c"/><rect x="960" y="451.8" width="1" height="9.4" fill="#16068c"/><rect x="961" y="451.8" width="1" height="9.4" fill="#16068c"/><rect x="962" y="451.6" width="1" height="9.8" fill="#16068c"/><rect x="963" y="451.8" width="1" height="9.4" fill="#16068c"/><rect x="964" y="451.6" width="1" height="9.6" fill="#16068c"/><rect x="965" y="451.8" width="1" height="9.9" fill="#16068c"/><rect x="966" y="451.2" width="1" height="10" fill="#16068c"/><rect x="967" y="451.8" width="1" height="9.6" fill="#16068c"/><rect x="968" y="451.6" width="1" height="10.1" fill="#16068c"/><rect x="969" y="451.4" width="1" height="10" fill="#16068c"/><rect x="970" y="451.4" width="1" height="10.2" fill="#16068c"/><rect x="971" y="451.8" width="1" height="9.4" fill="#16068c"/><rect x="972" y="451.8" width="1" height="9.4" fill="#16068c"/><rect x="973" y="451.8" width="1" height="9.4" fill="#16068c"/><rect x="974" y="451.2" width="1" height="10" fill="#16068c"/><rect x="975" y="451.8" width="1" height="9.4" fill="#16068c"/><rect x="976" y="451.8" width="1" height="9.4" fill="#16068c"/><rect x="977" y="451.2" width="1" height="10.5" fill="#16068c"/><rect x="978" y="451.8" width="1" height="9.6" fill="#16068c"/><rect x="979" y="451.8" width="1" height="9.4" fill="#16068c"/><rect x="980" y="451.8" width="1" height="9.4" fill="#16068c"/><rect x="981" y="451.8" width="1" height="9.8" fill="#16068c"/><rect x="982" y="451.6" width="1" height="10.1" fill="#16068c"/><rect x="532" y="384" width="1.2" height="99" fill="#16068c"/><rect x="531" y="441" width="2" height="11" fill="#16068c"/><rect x="532" y="461" width="2" height="6.6" fill="#16068c"/><rect x="533.3" y="450" width="4.5" height="4" fill="#fff"/><rect x="534.3" y="459.6" width="3.2" height="3" fill="#fff"/><rect x="538.5" y="450.8" width="4" height="1.2" fill="#16068c"/><rect x="582" y="383" width="1.2" height="100" fill="#16068c"/><rect x="581" y="441" width="2" height="11" fill="#16068c"/><rect x="582" y="461" width="2" height="6.6" fill="#16068c"/><rect x="583.3" y="450" width="4.5" height="4" fill="#fff"/><rect x="584.3" y="459.6" width="3.2" height="3" fill="#fff"/><rect x="588.5" y="450.8" width="4" height="1.2" fill="#16068c"/><rect x="632" y="382" width="1.2" height="113" fill="#16068c"/><rect x="631" y="441" width="2" height="11" fill="#16068c"/><rect x="632" y="461" width="2" height="7" fill="#16068c"/><rect x="633.3" y="450" width="4.5" height="4" fill="#fff"/><rect x="634.3" y="459.6" width="3.2" height="3" fill="#fff"/><rect x="638.5" y="450.8" width="4" height="1.2" fill="#16068c"/><rect x="635" y="382" width="1.2" height="99" fill="#16068c"/><rect x="634" y="441" width="2" height="11" fill="#16068c"/><rect x="635" y="461" width="2" height="6" fill="#16068c"/><rect x="636.3" y="450" width="4.5" height="4" fill="#fff"/><rect x="637.3" y="459.6" width="3.2" height="3" fill="#fff"/><rect x="641.5" y="450.8" width="4" height="1.2" fill="#16068c"/><rect x="684" y="382" width="1.2" height="98" fill="#16068c"/><rect x="683" y="441" width="2" height="11" fill="#16068c"/><rect x="684" y="461" width="2" height="5.7" fill="#16068c"/><rect x="685.3" y="450" width="4.5" height="4" fill="#fff"/><rect x="686.3" y="459.6" width="3.2" height="3" fill="#fff"/><rect x="690.5" y="450.8" width="4" height="1.2" fill="#16068c"/><rect x="734" y="382" width="1.2" height="95" fill="#16068c"/><rect x="733" y="441" width="2" height="11" fill="#16068c"/><rect x="734" y="461" width="2" height="4.8" fill="#16068c"/><rect x="735.3" y="450" width="4.5" height="4" fill="#fff"/><rect x="736.3" y="459.6" width="3.2" height="3" fill="#fff"/><rect x="740.5" y="450.8" width="4" height="1.2" fill="#16068c"/><rect x="784" y="382" width="1.2" height="99" fill="#16068c"/><rect x="783" y="441" width="2" height="11" fill="#16068c"/><rect x="784" y="461" width="2" height="6" fill="#16068c"/><rect x="785.3" y="450" width="4.5" height="4" fill="#fff"/><rect x="786.3" y="459.6" width="3.2" height="3" fill="#fff"/><rect x="790.5" y="450.8" width="4" height="1.2" fill="#16068c"/><rect x="817" y="383" width="1.2" height="99" fill="#16068c"/><rect x="816" y="441" width="2" height="11" fill="#16068c"/><rect x="817" y="461" width="2" height="6.3" fill="#16068c"/><rect x="818.3" y="450" width="4.5" height="4" fill="#fff"/><rect x="819.3" y="459.6" width="3.2" height="3" fill="#fff"/><rect x="823.5" y="450.8" width="4" height="1.2" fill="#16068c"/><rect x="830" y="378" width="1.2" height="107" fill="#16068c"/><rect x="829" y="441" width="2" height="11" fill="#16068c"/><rect x="830" y="461" width="2" height="7" fill="#16068c"/><rect x="831.3" y="450" width="4.5" height="4" fill="#fff"/><rect x="832.3" y="459.6" width="3.2" height="3" fill="#fff"/><rect x="836.5" y="450.8" width="4" height="1.2" fill="#16068c"/><rect x="842" y="366" width="1.2" height="129" fill="#16068c"/><rect x="841" y="441" width="2" height="11" fill="#16068c"/><rect x="842" y="461" width="2" height="7" fill="#16068c"/><rect x="843.3" y="450" width="4.5" height="4" fill="#fff"/><rect x="844.3" y="459.6" width="3.2" height="3" fill="#fff"/><rect x="848.5" y="450.8" width="4" height="1.2" fill="#16068c"/><rect x="854" y="356" width="1.2" height="139" fill="#16068c"/><rect x="853" y="441" width="2" height="11" fill="#16068c"/><rect x="854" y="461" width="2" height="7" fill="#16068c"/><rect x="855.3" y="450" width="4.5" height="4" fill="#fff"/><rect x="856.3" y="459.6" width="3.2" height="3" fill="#fff"/><rect x="860.5" y="450.8" width="4" height="1.2" fill="#16068c"/><rect x="868" y="353" width="1.2" height="147" fill="#16068c"/><rect x="867" y="441" width="2" height="11" fill="#16068c"/><rect x="868" y="461" width="2" height="7" fill="#16068c"/><rect x="869.3" y="450" width="4.5" height="4" fill="#fff"/><rect x="870.3" y="459.6" width="3.2" height="3" fill="#fff"/><rect x="874.5" y="450.8" width="4" height="1.2" fill="#16068c"/><rect x="880" y="347" width="1.2" height="156" fill="#16068c"/><rect x="879" y="441" width="2" height="11" fill="#16068c"/><rect x="880" y="461" width="2" height="7" fill="#16068c"/><rect x="881.3" y="450" width="4.5" height="4" fill="#fff"/><rect x="882.3" y="459.6" width="3.2" height="3" fill="#fff"/><rect x="886.5" y="450.8" width="4" height="1.2" fill="#16068c"/><rect x="892" y="347" width="1.2" height="161" fill="#16068c"/><rect x="891" y="441" width="2" height="11" fill="#16068c"/><rect x="892" y="461" width="2" height="7" fill="#16068c"/><rect x="893.3" y="450" width="4.5" height="4" fill="#fff"/><rect x="894.3" y="459.6" width="3.2" height="3" fill="#fff"/><rect x="898.5" y="450.8" width="4" height="1.2" fill="#16068c"/><rect x="904" y="344" width="1.2" height="163" fill="#16068c"/><rect x="903" y="441" width="2" height="11" fill="#16068c"/><rect x="904" y="461" width="2" height="7" fill="#16068c"/><rect x="905.3" y="450" width="4.5" height="4" fill="#fff"/><rect x="906.3" y="459.6" width="3.2" height="3" fill="#fff"/><rect x="910.5" y="450.8" width="4" height="1.2" fill="#16068c"/><rect x="917" y="344" width="1.2" height="166" fill="#16068c"/><rect x="916" y="441" width="2" height="11" fill="#16068c"/><rect x="917" y="461" width="2" height="7" fill="#16068c"/><rect x="918.3" y="450" width="4.5" height="4" fill="#fff"/><rect x="919.3" y="459.6" width="3.2" height="3" fill="#fff"/><rect x="923.5" y="450.8" width="4" height="1.2" fill="#16068c"/><rect x="929" y="344" width="1.2" height="163" fill="#16068c"/><rect x="928" y="441" width="2" height="11" fill="#16068c"/><rect x="929" y="461" width="2" height="7" fill="#16068c"/><rect x="930.3" y="450" width="4.5" height="4" fill="#fff"/><rect x="931.3" y="459.6" width="3.2" height="3" fill="#fff"/><rect x="935.5" y="450.8" width="4" height="1.2" fill="#16068c"/><rect x="938" y="386" width="1.2" height="89" fill="#16068c"/><rect x="937" y="441" width="2" height="11" fill="#16068c"/><rect x="938" y="461" width="2" height="4.2" fill="#16068c"/><rect x="939.3" y="450" width="4.5" height="4" fill="#fff"/><rect x="940.3" y="459.6" width="3.2" height="3" fill="#fff"/><rect x="944.5" y="450.8" width="4" height="1.2" fill="#16068c"/><rect x="951" y="382" width="1.2" height="105" fill="#16068c"/><rect x="950" y="441" width="2" height="11" fill="#16068c"/><rect x="951" y="461" width="2" height="7" fill="#16068c"/><rect x="952.3" y="450" width="4.5" height="4" fill="#fff"/><rect x="953.3" y="459.6" width="3.2" height="3" fill="#fff"/><rect x="957.5" y="450.8" width="4" height="1.2" fill="#16068c"/></g><path d="M766 450L777 462M777 450L766 462" stroke="#e8e070" stroke-width="1.2"/></svg>
<div style="left:8px;top:524px;width:88px;height:43px;background:#f0f0f0;"></div>
<div style="left:96px;top:524px;width:887px;height:20px;background:#fff;"></div>
<svg style="left:0px;top:0px;" width="1120" height="570" viewBox="0 0 1120 570"><rect x="119.1" y="525.3" width="1.2" height="1.3" fill="#000"/><rect x="144.1" y="525.3" width="1.2" height="1.3" fill="#000"/><rect x="196.9" y="525.3" width="1.2" height="1.3" fill="#000"/><rect x="221.9" y="525.3" width="1.2" height="1.3" fill="#000"/><rect x="265.9" y="525.3" width="1.2" height="1.3" fill="#000"/><rect x="290.9" y="525.3" width="1.2" height="1.3" fill="#000"/><rect x="315.9" y="525.3" width="1.2" height="1.3" fill="#000"/><rect x="340.9" y="525.3" width="1.2" height="2.2" fill="#000"/><rect x="365.9" y="525.3" width="1.2" height="1.3" fill="#000"/><rect x="390.9" y="525.3" width="1.2" height="1.3" fill="#000"/><rect x="415.9" y="525.3" width="1.2" height="1.3" fill="#000"/><rect x="440.9" y="525.3" width="1.2" height="2.2" fill="#000"/><rect x="465.9" y="525.3" width="1.2" height="1.3" fill="#000"/><rect x="506.7" y="525.3" width="1.2" height="1.3" fill="#000"/><rect x="531.7" y="525.3" width="1.2" height="1.3" fill="#000"/><rect x="556.7" y="525.3" width="1.2" height="1.3" fill="#000"/><rect x="581.7" y="525.3" width="1.2" height="2.2" fill="#000"/><rect x="606.7" y="525.3" width="1.2" height="1.3" fill="#000"/><rect x="658.4" y="525.3" width="1.2" height="1.3" fill="#000"/><rect x="683.4" y="525.3" width="1.2" height="1.3" fill="#000"/><rect x="708.4" y="525.3" width="1.2" height="1.3" fill="#000"/><rect x="733.4" y="525.3" width="1.2" height="2.2" fill="#000"/><rect x="758.4" y="525.3" width="1.2" height="1.3" fill="#000"/><rect x="783.4" y="525.3" width="1.2" height="1.3" fill="#000"/><rect x="808.4" y="525.3" width="1.2" height="1.3" fill="#000"/><rect x="841.8" y="525.3" width="1.2" height="1.3" fill="#000"/><rect x="866.8" y="525.3" width="1.2" height="1.3" fill="#000"/><rect x="891.8" y="525.3" width="1.2" height="1.3" fill="#000"/><rect x="916.8" y="525.3" width="1.2" height="2.2" fill="#000"/><rect x="964.4" y="525.3" width="1.2" height="1.3" fill="#000"/></svg>
<div style="left:96px;top:525px;width:5px;height:9px;background:#1a1a8c;overflow:hidden;"><span class="t" style="left:-2px;top:0;font-size:9px;line-height:9px;color:#fff;font-weight:bold">2</span></div>
<div style="left:172px;top:525px;width:8px;height:9px;background:#1a1a8c;overflow:hidden;"><span class="t" style="left:1px;top:0;font-size:9px;line-height:9px;color:#fff;font-weight:bold">3</span></div>
<div style="left:240px;top:525px;width:8px;height:9px;background:#1a1a8c;overflow:hidden;"><span class="t" style="left:1px;top:0;font-size:9px;line-height:9px;color:#fff;font-weight:bold">4</span></div>
<div style="left:480px;top:525px;width:8px;height:9px;background:#1a1a8c;overflow:hidden;"><span class="t" style="left:1px;top:0;font-size:9px;line-height:9px;color:#fff;font-weight:bold">5</span></div>
<div style="left:632px;top:525px;width:8px;height:9px;background:#1a1a8c;overflow:hidden;"><span class="t" style="left:1px;top:0;font-size:9px;line-height:9px;color:#fff;font-weight:bold">6</span></div>
<div style="left:816px;top:525px;width:8px;height:9px;background:#1a1a8c;overflow:hidden;"><span class="t" style="left:1px;top:0;font-size:9px;line-height:9px;color:#fff;font-weight:bold">7</span></div>
<div style="left:937px;top:525px;width:8px;height:9px;background:#1a1a8c;overflow:hidden;"><span class="t" style="left:1px;top:0;font-size:9px;line-height:9px;color:#fff;font-weight:bold">8</span></div>
<span class="t" style="left:168.94px;top:530.69px;font-size:11px;line-height:11px;color:#000;">0</span>
<span class="t" style="left:236.94px;top:530.69px;font-size:11px;line-height:11px;color:#000;">0</span>
<span class="t" style="left:337.94px;top:530.69px;font-size:11px;line-height:11px;color:#000;">2</span>
<span class="t" style="left:437.94px;top:530.69px;font-size:11px;line-height:11px;color:#000;">4</span>
<span class="t" style="left:477.94px;top:530.69px;font-size:11px;line-height:11px;color:#000;">0</span>
<span class="t" style="left:578.44px;top:530.69px;font-size:11px;line-height:11px;color:#000;">2</span>
<span class="t" style="left:630.44px;top:530.69px;font-size:11px;line-height:11px;color:#000;">0</span>
<span class="t" style="left:730.94px;top:530.69px;font-size:11px;line-height:11px;color:#000;">2</span>
<span class="t" style="left:813.24px;top:530.69px;font-size:11px;line-height:11px;color:#000;">0</span>
<span class="t" style="left:913.44px;top:530.69px;font-size:11px;line-height:11px;color:#000;">2</span>
<span class="t" style="left:935.44px;top:530.69px;font-size:11px;line-height:11px;color:#000;">0</span>
<span class="t" style="left:45.00px;top:536.84px;font-size:12px;line-height:12px;color:#000;font-weight:bold;font-size:11px;">M</span>
<svg style="left:45px;top:548px;" width="10" height="6" viewBox="0 0 10 6"><path d="M0 0H10L5 5Z" fill="#000"/></svg>
<div style="left:93px;top:524px;width:1px;height:43px;background:#c8c8c8;"></div>
<div style="left:96px;top:547px;width:762px;height:20px;background:#f0f0f0;"></div>
<div style="left:129px;top:547px;width:359px;height:20px;background:#cdcdcd;"></div>
<svg style="left:100px;top:552px;" width="8" height="10" viewBox="0 0 8 10"><path d="M6 1L2 5L6 9" fill="none" stroke="#606060" stroke-width="1.8"/></svg>
<svg style="left:844px;top:552px;" width="8" height="10" viewBox="0 0 8 10"><path d="M2 1L6 5L2 9" fill="none" stroke="#606060" stroke-width="1.8"/></svg>
<div style="left:858px;top:547px;width:33px;height:20px;background:#e1e1e1;border:1px solid #adadad;"></div>
<svg style="left:862px;top:550px;" width="26" height="14" viewBox="0 0 26 14"><rect x="1.5" y="1.5" width="12" height="11" fill="#eaf2fb" stroke="#444"/><path d="M3 7H5.5L6.5 5.5L8 8.5L9 7H12" stroke="#27a" fill="none"/><path d="M3 3.5H12M3 10.5H12" stroke="#333" stroke-dasharray="1 1"/><path d="M15 7H18V4L21.5 7L18 10V7" fill="#000" stroke="#000"/><path d="M23.5 0.5V13.5" stroke="#000" stroke-width="1.6"/></svg>
<div style="left:893px;top:547px;width:16px;height:20px;background:#e1e1e1;border:1px solid #adadad;"></div>
<svg style="left:895px;top:553px;" width="12" height="7" viewBox="0 0 12 7"><path d="M0 6.5C3 6 4.5 0.5 6 0.5S8 3 9 3.5S11 6 12 6.5Z" fill="#444"/></svg>
<div style="left:911px;top:547px;width:53px;height:20px;background:#e1e1e1;border:1px solid #adadad;"></div>
<span class="t" style="left:924.00px;top:551.84px;font-size:12px;line-height:12px;color:#000;letter-spacing:-0.606px;">200:1</span>
<div style="left:966px;top:547px;width:16px;height:20px;background:#e1e1e1;border:1px solid #adadad;"></div>
<svg style="left:968px;top:551px;" width="13" height="11" viewBox="0 0 13 11"><path d="M0 10.5C2 10 4.5 0.5 6 0.5S8.5 5 9.5 6S12 10 13 10.5Z" fill="#444"/></svg>
<div style="left:988px;top:528px;width:36px;height:38px;background:#cce4f7;border:1px solid #1a6fc0;"></div>
<svg style="left:991px;top:531px;" width="30" height="32" viewBox="0 0 30 32"><rect x="1" y="2" width="19" height="6" fill="#d9d9d9" stroke="#8a8a8a"/><path d="M3 5H18" stroke="#555" stroke-dasharray="1.5 1"/><rect x="5" y="10" width="24" height="20" fill="#eef6fd" stroke="#9ab"/><path d="M12 6C18 5 22 7 22 11" fill="none" stroke="#f4f4f4" stroke-width="3"/><path d="M19 10H26L22.5 14Z" fill="#f4f4f4" stroke="#aaa" stroke-width=".5"/><path d="M6 14H28M6 27H28" stroke="#222" stroke-width="1.2" stroke-dasharray="2.5 1.5"/><path d="M6 21H13L15 19L17 24L19 16L21 21H28" fill="none" stroke="#2a8a7a" stroke-width="1.2"/></svg>
<div style="left:1026px;top:528px;width:74px;height:38px;background:#e1e1e1;border:1px solid #adadad;"></div>
<svg style="left:1035px;top:540px;" width="10" height="14" viewBox="0 0 10 14"><path d="M0.5 0.5L9 7L0.5 13.5Z" fill="#57b947" stroke="#8f8aa8" stroke-width="1"/></svg>
<span class="t" style="left:1059.00px;top:541.84px;font-size:12px;line-height:12px;color:#000;letter-spacing:0.332px;">Start</span>
<svg style="left:1101px;top:555px;" width="12" height="12" viewBox="0 0 12 12"><path d="M1 12L12 1M5 12L12 5M9 12L12 9" stroke="#b8b8b8" stroke-width="1.2"/></svg>
<!-- scope_view -->
<div style="left:2px;top:574px;width:638px;height:478px;background:linear-gradient(#9fb9da 0px,#bcd1eb 31px,#bcd1eb 100%);"></div>
<div style="left:640px;top:573px;width:1px;height:479px;background:#a3a8b0;"></div>
<div style="left:2px;top:573px;width:1118px;height:1px;background:#a9abae;"></div>
<svg style="left:10px;top:583px;" width="13" height="16" viewBox="0 0 13 16"><path d="M0 0H8L12 4V16H0Z" fill="#1b4f8a"/><path d="M0 0H8L12 4V7H0Z" fill="#1f68ad"/><path d="M8 0V4H12Z" fill="#cfe0f0"/><path d="M0.5 8.5H3L4.5 12.5L6.3 2.5L8 10L9 8H12" fill="none" stroke="#fff" stroke-width="1.2"/></svg>
<span class="t" style="left:30.00px;top:585.84px;font-size:12px;line-height:12px;color:#000;letter-spacing:-0.218px;">Frog Muscle and CAP: Scope View (PowerLab 8/35)</span>
<svg style="left:563.5px;top:582.2px;" width="70" height="16" viewBox="0 0 70 16"><path d="M0 8.6H11.5" stroke="#000" stroke-width="1.2" fill="none"/><rect x="27" y="3.2" width="10.4" height="10.4" fill="none" stroke="#000" stroke-width="1.3"/><path d="M52.5 3L63.5 14M63.5 3L52.5 14" stroke="#000" stroke-width="1.1" fill="none"/></svg>
<div style="left:8px;top:605px;width:626px;height:441px;background:#f0f0f0;"></div>
<div style="left:17px;top:613px;width:22px;height:18px;background:#e9e9e9;border:1px solid #b5b5b5;"></div>
<svg style="left:18px;top:614px;" width="20" height="16" viewBox="0 0 20 16"><path d="M1 15L6 7L9 11L13 3L18 10" fill="none" stroke="#3a9a3a" stroke-width="1.2"/><path d="M6 1V15M13 1V15" stroke="#555" stroke-width="1"/><rect x="4" y="9" width="4" height="3" fill="#ddd" stroke="#666" stroke-width=".7"/><rect x="11" y="3" width="4" height="3" fill="#ddd" stroke="#666" stroke-width=".7"/><path d="M1 1H19M1 15H19M19 1V15" stroke="#999" stroke-dasharray="1 1.5" fill="none"/></svg>
<div style="left:45px;top:615px;width:13px;height:13px;background:#fff;border:1px solid #333;"></div>
<svg style="left:45px;top:615px;" width="13" height="13" viewBox="0 0 13 13"><path d="M2.5 6.5L5.5 9.5L10.5 3" fill="none" stroke="#222" stroke-width="1.3"/></svg>
<span class="t" style="left:60.50px;top:616.69px;font-size:11px;line-height:11px;color:#000;letter-spacing:-0.215px;">Overlay 20 Pages</span>
<span class="t" style="left:191.00px;top:616.84px;font-size:12px;line-height:12px;color:#000;letter-spacing:-0.070px;">Mode:</span>
<div style="left:239px;top:611px;width:77px;height:23px;background:#e5e5e5;border:1px solid #adadad;"></div>
<span class="t" style="left:243.00px;top:616.84px;font-size:12px;line-height:12px;color:#000;letter-spacing:-0.337px;">Event</span>
<svg style="left:302px;top:619px;" width="10" height="7" viewBox="0 0 10 7"><path d="M1 1L5 5L9 1" fill="none" stroke="#444" stroke-width="1.2"/></svg>
<div style="left:340px;top:612px;width:130px;height:21px;background:#e1e1e1;border:1px solid #adadad;"></div>
<span class="t" style="left:363.50px;top:616.84px;font-size:12px;line-height:12px;color:#000;letter-spacing:-0.317px;">Event Settings...</span>
<div style="left:475px;top:614px;width:22px;height:19px;background:#263238;border:1px solid #444;"></div>
<svg style="left:476px;top:615px;" width="20" height="17" viewBox="0 0 20 17"><path d="M0 17L12 4L20 17Z" fill="#f3f3f3"/><path d="M0 14L5 10L9 3L13 8" fill="none" stroke="#e8742a" stroke-width="1.5"/><path d="M3 16L10 7L14 10L19 15" fill="none" stroke="#3a9a3a" stroke-width="1"/><path d="M4 0V10M8 0V6M12 0V3M0 4H9M0 8H6" stroke="#4a6" stroke-width=".5"/></svg>
<div style="left:508px;top:615px;width:16px;height:16px;background:#f0f0f0;border:1px solid #a0a0a0;"></div>
<svg style="left:508px;top:615px;" width="16" height="16" viewBox="0 0 16 16"><path d="M3.5 6H12.5L8 11Z" fill="#000"/></svg>
<span class="t" style="left:530.00px;top:616.84px;font-size:12px;line-height:12px;color:#000;letter-spacing:-0.448px;">4014.9 ms</span>
<div style="left:18px;top:640px;width:157px;height:4px;background:#e7eaea;border:1px solid #d6d6d6;"></div>
<svg style="left:114px;top:634px;" width="11" height="20" viewBox="0 0 11 20"><path d="M0 0H11V14L5.5 19.5L0 14Z" fill="#0078d7"/></svg>
<div style="left:23px;top:654px;width:1px;height:4px;background:#b5b5b5;"></div>
<div style="left:169px;top:654px;width:1px;height:4px;background:#b5b5b5;"></div>
<div style="left:8px;top:664px;width:175px;height:24px;background:linear-gradient(#f0f0f0 0,#f0f0f0 20%,#c8c8c8 100%);"></div>
<div style="left:40px;top:665px;width:26px;height:20px;background:#dcdcdc;border:1px solid #c4c4c4;"></div>
<div style="left:68px;top:665px;width:26px;height:20px;background:#e4e4e4;border:1px solid #c4c4c4;"></div>
<div style="left:96px;top:665px;width:26px;height:20px;background:#dcdcdc;border:1px solid #c4c4c4;"></div>
<div style="left:124px;top:665px;width:26px;height:20px;background:#e4e4e4;border:1px solid #c4c4c4;"></div>
<svg style="left:44px;top:668px;" width="18" height="14" viewBox="0 0 18 14"><path d="M1 8C4 0 7 0 9 7S14 14 17 5" fill="none" stroke="#b9b9b9" stroke-width="1.3"/><path d="M1 11C4 3 7 3 9 10S14 16 17 8" fill="none" stroke="#c6c6c6" stroke-width="1"/></svg>
<svg style="left:75px;top:667px;" width="12" height="16" viewBox="0 0 12 16"><path d="M3 7V4.5A3 3 0 0 1 9 4.5V7" fill="none" stroke="#9a9a9a" stroke-width="1.6"/><rect x="1" y="7" width="10" height="8" rx="1" fill="#f0a83a" stroke="#c07a1a" stroke-width=".8"/><path d="M1.5 9.5H10.5M1.5 12H10.5" stroke="#f7d08a" stroke-width="1"/></svg>
<svg style="left:104px;top:670px;" width="10" height="10" viewBox="0 0 10 10"><circle cx="5" cy="5" r="4" fill="#fff" stroke="#b9b9b9" stroke-width="1.2"/><path d="M2.5 7.5L7.5 2.5" stroke="#b9b9b9" stroke-width="1.2"/></svg>
<svg style="left:128px;top:667px;" width="18" height="16" viewBox="0 0 18 16"><path d="M1 15C3 10 6 9 9 9S14 11 17 14V15Z" fill="#9aa0ee"/><path d="M1 12C4 9 7 9 10 10S14 13 17 14" fill="none" stroke="#e02020" stroke-width="1.2"/><path d="M1 14L4 8L6 10L8 2L10 8L12 6L14 9L16 8" fill="none" stroke="#2f9a3a" stroke-width="1.1"/></svg>
<div style="left:9px;top:688px;width:16px;height:358px;background:linear-gradient(90deg,#cfcfcf,#f4f4f4 50%,#d6d6d6);"></div>
<div style="left:25px;top:688px;width:141px;height:358px;background:#fff;"></div>
<div style="left:166px;top:688px;width:17px;height:358px;background:#f0f0f0;"></div>
<div style="left:30px;top:688px;width:6px;height:245px;background:#a9d6a9;border-radius:0 0 0 6px;"></div>
<svg style="left:30px;top:925px;" width="14" height="10" viewBox="0 0 14 10"><path d="M3 0V4Q3 7 7 7H12" fill="none" stroke="#a9d6a9" stroke-width="6"/></svg>
<div style="left:26px;top:694px;width:140px;height:24px;background:linear-gradient(#b3cdec,#9dbfe8);border:1px solid #7da7dc;border-radius:2px;"></div>
<div style="left:27px;top:695px;width:138px;height:1px;background:#d5e5f7;"></div>
<div style="left:30px;top:696px;width:6px;height:21px;background:#8fc4b8;"></div>
<svg style="left:41px;top:697px;" width="16" height="14" viewBox="0 0 16 14"><path d="M0.5 12L4 2.5L6.5 9.5L8.5 5.5L10.5 9.5L12 8L14.5 10" fill="none" stroke="#3a9a3a" stroke-width="1.2" stroke-linejoin="round"/></svg>
<span class="t" style="left:60.50px;top:699.84px;font-size:12px;line-height:12px;color:#000;letter-spacing:-0.411px;">page 15</span>
<svg style="left:41px;top:721px;" width="16" height="14" viewBox="0 0 16 14"><path d="M0.5 12L4 2.5L6.5 9.5L8.5 5.5L10.5 9.5L12 8L14.5 10" fill="none" stroke="#3a9a3a" stroke-width="1.2" stroke-linejoin="round"/></svg>
<span class="t" style="left:60.50px;top:723.84px;font-size:12px;line-height:12px;color:#000;letter-spacing:-0.411px;">page 16</span>
<svg style="left:41px;top:745px;" width="16" height="14" viewBox="0 0 16 14"><path d="M0.5 12L4 2.5L6.5 9.5L8.5 5.5L10.5 9.5L12 8L14.5 10" fill="none" stroke="#3a9a3a" stroke-width="1.2" stroke-linejoin="round"/></svg>
<span class="t" style="left:60.50px;top:747.84px;font-size:12px;line-height:12px;color:#000;letter-spacing:-0.411px;">page 17</span>
<svg style="left:41px;top:769px;" width="16" height="14" viewBox="0 0 16 14"><path d="M0.5 12L4 2.5L6.5 9.5L8.5 5.5L10.5 9.5L12 8L14.5 10" fill="none" stroke="#3a9a3a" stroke-width="1.2" stroke-linejoin="round"/></svg>
<span class="t" style="left:60.50px;top:771.84px;font-size:12px;line-height:12px;color:#000;letter-spacing:-0.411px;">page 18</span>
<svg style="left:41px;top:793px;" width="16" height="14" viewBox="0 0 16 14"><path d="M0.5 12L4 2.5L6.5 9.5L8.5 5.5L10.5 9.5L12 8L14.5 10" fill="none" stroke="#3a9a3a" stroke-width="1.2" stroke-linejoin="round"/></svg>
<span class="t" style="left:60.50px;top:795.84px;font-size:12px;line-height:12px;color:#000;letter-spacing:-0.411px;">page 19</span>
<svg style="left:41px;top:817px;" width="16" height="14" viewBox="0 0 16 14"><path d="M0.5 12L4 2.5L6.5 9.5L8.5 5.5L10.5 9.5L12 8L14.5 10" fill="none" stroke="#3a9a3a" stroke-width="1.2" stroke-linejoin="round"/></svg>
<span class="t" style="left:60.50px;top:819.84px;font-size:12px;line-height:12px;color:#000;letter-spacing:-0.411px;">page 20</span>
<svg style="left:41px;top:841px;" width="16" height="14" viewBox="0 0 16 14"><path d="M0.5 12L4 2.5L6.5 9.5L8.5 5.5L10.5 9.5L12 8L14.5 10" fill="none" stroke="#3a9a3a" stroke-width="1.2" stroke-linejoin="round"/></svg>
<span class="t" style="left:60.50px;top:843.84px;font-size:12px;line-height:12px;color:#000;letter-spacing:-0.411px;">page 21</span>
<svg style="left:41px;top:865px;" width="16" height="14" viewBox="0 0 16 14"><path d="M0.5 12L4 2.5L6.5 9.5L8.5 5.5L10.5 9.5L12 8L14.5 10" fill="none" stroke="#3a9a3a" stroke-width="1.2" stroke-linejoin="round"/></svg>
<span class="t" style="left:60.50px;top:867.84px;font-size:12px;line-height:12px;color:#000;letter-spacing:-0.411px;">page 22</span>
<svg style="left:41px;top:889px;" width="16" height="14" viewBox="0 0 16 14"><path d="M0.5 12L4 2.5L6.5 9.5L8.5 5.5L10.5 9.5L12 8L14.5 10" fill="none" stroke="#3a9a3a" stroke-width="1.2" stroke-linejoin="round"/></svg>
<span class="t" style="left:60.50px;top:891.84px;font-size:12px;line-height:12px;color:#000;letter-spacing:-0.411px;">page 23</span>
<svg style="left:41px;top:913px;" width="16" height="14" viewBox="0 0 16 14"><path d="M0.5 12L4 2.5L6.5 9.5L8.5 5.5L10.5 9.5L12 8L14.5 10" fill="none" stroke="#3a9a3a" stroke-width="1.2" stroke-linejoin="round"/></svg>
<span class="t" style="left:60.50px;top:915.84px;font-size:12px;line-height:12px;color:#000;letter-spacing:-0.411px;">page 24</span>
<svg style="left:41px;top:937px;" width="16" height="14" viewBox="0 0 16 14"><path d="M0.5 12L4 2.5L6.5 9.5L8.5 5.5L10.5 9.5L12 8L14.5 10" fill="none" stroke="#3a9a3a" stroke-width="1.2" stroke-linejoin="round"/></svg>
<span class="t" style="left:60.50px;top:939.84px;font-size:12px;line-height:12px;color:#000;letter-spacing:-0.411px;">page 25</span>
<svg style="left:41px;top:961px;" width="16" height="14" viewBox="0 0 16 14"><path d="M0.5 12L4 2.5L6.5 9.5L8.5 5.5L10.5 9.5L12 8L14.5 10" fill="none" stroke="#3a9a3a" stroke-width="1.2" stroke-linejoin="round"/></svg>
<span class="t" style="left:60.50px;top:963.84px;font-size:12px;line-height:12px;color:#000;letter-spacing:-0.411px;">page 26</span>
<svg style="left:41px;top:985px;" width="16" height="14" viewBox="0 0 16 14"><path d="M0.5 12L4 2.5L6.5 9.5L8.5 5.5L10.5 9.5L12 8L14.5 10" fill="none" stroke="#3a9a3a" stroke-width="1.2" stroke-linejoin="round"/></svg>
<span class="t" style="left:60.50px;top:987.84px;font-size:12px;line-height:12px;color:#000;letter-spacing:-0.411px;">page 27</span>
<svg style="left:41px;top:1009px;" width="16" height="14" viewBox="0 0 16 14"><path d="M0.5 12L4 2.5L6.5 9.5L8.5 5.5L10.5 9.5L12 8L14.5 10" fill="none" stroke="#3a9a3a" stroke-width="1.2" stroke-linejoin="round"/></svg>
<span class="t" style="left:60.50px;top:1011.84px;font-size:12px;line-height:12px;color:#000;letter-spacing:-0.411px;">page 28</span>
<svg style="left:41px;top:1033px;" width="16" height="14" viewBox="0 0 16 14"><path d="M0.5 12L4 2.5L6.5 9.5L8.5 5.5L10.5 9.5L12 8L14.5 10" fill="none" stroke="#3a9a3a" stroke-width="1.2" stroke-linejoin="round"/></svg>
<span class="t" style="left:60.50px;top:1035.84px;font-size:12px;line-height:12px;color:#000;letter-spacing:-0.411px;">page 29</span>
<div style="left:2px;top:1046px;width:638px;height:6px;background:#bcd1eb;"></div>
<div style="left:9px;top:689px;width:16px;height:23px;background:linear-gradient(90deg,#fdfdfd,#f1f1f1);border:1px solid #9c9c9c;border-radius:2px;"></div>
<div style="left:9px;top:713px;width:16px;height:23px;background:linear-gradient(90deg,#fdfdfd,#f1f1f1);border:1px solid #9c9c9c;border-radius:2px;"></div>
<svg style="left:11px;top:693px;" width="12" height="14" viewBox="0 0 12 14"><path d="M1 1.5H11" stroke="#1f5fa8" stroke-width="1.6"/><path d="M1 11L6 5.5L11 11L6 8.5Z" fill="#1f5fa8" stroke="#1f5fa8" stroke-width="1"/></svg>
<svg style="left:11px;top:719px;" width="12" height="10" viewBox="0 0 12 10"><path d="M1 8L6 2.5L11 8L6 5.5Z" fill="#1f5fa8" stroke="#1f5fa8" stroke-width="1"/></svg>
<div style="left:9px;top:820px;width:16px;height:62px;background:linear-gradient(90deg,#fdfdfd,#f1f1f1);border:1px solid #9c9c9c;border-radius:2px;"></div>
<svg style="left:11px;top:828px;" width="12" height="10" viewBox="0 0 12 10"><path d="M1 8L6 2.5L11 8L6 5.5Z" fill="#1f5fa8" stroke="#1f5fa8" stroke-width="1"/></svg>
<svg style="left:11px;top:845px;" width="12" height="12" viewBox="0 0 12 12"><path d="M2 2H10M2 5H10M2 8H10M2 11H10" stroke="#b0b0b0" stroke-width="1"/></svg>
<svg style="left:11px;top:866px;" width="12" height="10" viewBox="0 0 12 10"><path d="M1 2L6 7.5L11 2L6 4.5Z" fill="#1f5fa8" stroke="#1f5fa8" stroke-width="1"/></svg>
<div style="left:9px;top:965px;width:16px;height:24px;background:linear-gradient(90deg,#fdfdfd,#f1f1f1);border:1px solid #9c9c9c;border-radius:2px;"></div>
<div style="left:9px;top:990px;width:16px;height:23px;background:linear-gradient(90deg,#fdfdfd,#f1f1f1);border:1px solid #9c9c9c;border-radius:2px;"></div>
<div style="left:9px;top:1014px;width:16px;height:30px;background:linear-gradient(90deg,#fdfdfd,#f1f1f1);border:1px solid #9c9c9c;border-radius:2px;"></div>
<svg style="left:11px;top:972px;" width="12" height="10" viewBox="0 0 12 10"><path d="M1 2L6 7.5L11 2L6 4.5Z" fill="#1f5fa8" stroke="#1f5fa8" stroke-width="1"/></svg>
<svg style="left:11px;top:994px;" width="12" height="14" viewBox="0 0 12 14"><path d="M1 2L6 7.5L11 2L6 4.5Z" fill="#1f5fa8" stroke="#1f5fa8" stroke-width="1"/><path d="M1 11.5H11" stroke="#1f5fa8" stroke-width="1.6"/></svg>
<svg style="left:11px;top:1016px;" width="12" height="26" viewBox="0 0 12 26"><path d="M6 0L10 5H2Z" fill="#111"/><rect x="2" y="7" width="8" height="11" rx="1.5" fill="#fff" stroke="#333" stroke-width="1"/><path d="M3.5 10H8.5M3.5 12.5H8.5M3.5 15H8.5" stroke="#333" stroke-width="1"/><path d="M6 25L10 20H2Z" fill="#111"/></svg>
<svg style="left:169px;top:694px;" width="10" height="8" viewBox="0 0 10 8"><path d="M1 6L5 2L9 6" fill="none" stroke="#505050" stroke-width="1.6"/></svg>
<svg style="left:169px;top:1033px;" width="10" height="8" viewBox="0 0 10 8"><path d="M1 2L5 6L9 2" fill="none" stroke="#505050" stroke-width="1.6"/></svg>
<div style="left:166px;top:716px;width:16px;height:17px;background:#cdcdcd;"></div>
<div style="left:185px;top:643px;width:318px;height:4px;background:#c6c6c6;"></div>
<div style="left:503px;top:643px;width:131px;height:4px;background:#c6c6c6;"></div>
<div style="left:185px;top:1000px;width:86px;height:4px;background:#c6c6c6;"></div>
<div style="left:189px;top:650px;width:14px;height:14px;background:#f0f0f0;border:1px solid #a0a0a0;"></div>
<svg style="left:189px;top:650px;" width="14" height="14" viewBox="0 0 14 14"><path d="M2.5 5H11.5L7 10Z" fill="#000"/></svg>
<div style="left:271px;top:647px;width:230px;height:353px;background:#000;"></div>
<span class="t" style="left:256.33px;top:652.34px;font-size:12px;line-height:12px;color:#000;">8</span>
<div style="left:267px;top:657.5px;width:2px;height:1px;background:#000;"></div>
<div style="left:268.5px;top:671.375px;width:1px;height:1px;background:#000;"></div>
<div style="left:268.5px;top:685.25px;width:1px;height:1px;background:#000;"></div>
<div style="left:268.5px;top:699.125px;width:1px;height:1px;background:#000;"></div>
<span class="t" style="left:256.33px;top:707.84px;font-size:12px;line-height:12px;color:#000;">6</span>
<div style="left:267px;top:713px;width:2px;height:1px;background:#000;"></div>
<div style="left:268.5px;top:726.875px;width:1px;height:1px;background:#000;"></div>
<div style="left:268.5px;top:740.75px;width:1px;height:1px;background:#000;"></div>
<div style="left:268.5px;top:754.625px;width:1px;height:1px;background:#000;"></div>
<span class="t" style="left:256.33px;top:763.34px;font-size:12px;line-height:12px;color:#000;">4</span>
<div style="left:267px;top:768.5px;width:2px;height:1px;background:#000;"></div>
<div style="left:268.5px;top:782.375px;width:1px;height:1px;background:#000;"></div>
<div style="left:268.5px;top:796.25px;width:1px;height:1px;background:#000;"></div>
<div style="left:268.5px;top:810.125px;width:1px;height:1px;background:#000;"></div>
<span class="t" style="left:256.33px;top:818.84px;font-size:12px;line-height:12px;color:#000;">2</span>
<div style="left:267px;top:824px;width:2px;height:1px;background:#000;"></div>
<div style="left:268.5px;top:837.875px;width:1px;height:1px;background:#000;"></div>
<div style="left:268.5px;top:851.75px;width:1px;height:1px;background:#000;"></div>
<div style="left:268.5px;top:865.625px;width:1px;height:1px;background:#000;"></div>
<span class="t" style="left:256.33px;top:874.34px;font-size:12px;line-height:12px;color:#000;">0</span>
<div style="left:267px;top:879.5px;width:2px;height:1px;background:#000;"></div>
<div style="left:268.5px;top:893.375px;width:1px;height:1px;background:#000;"></div>
<div style="left:268.5px;top:907.25px;width:1px;height:1px;background:#000;"></div>
<div style="left:268.5px;top:921.125px;width:1px;height:1px;background:#000;"></div>
<span class="t" style="left:252.33px;top:929.84px;font-size:12px;line-height:12px;color:#000;">-2</span>
<div style="left:267px;top:935px;width:2px;height:1px;background:#000;"></div>
<div style="left:268.5px;top:948.875px;width:1px;height:1px;background:#000;"></div>
<div style="left:268.5px;top:962.75px;width:1px;height:1px;background:#000;"></div>
<div style="left:268.5px;top:976.625px;width:1px;height:1px;background:#000;"></div>
<span class="t" style="left:252.33px;top:985.34px;font-size:12px;line-height:12px;color:#000;">-4</span>
<div style="left:267px;top:990.5px;width:2px;height:1px;background:#000;"></div>
<span class="t" style="left:196px;top:817px;font-size:12px;line-height:12px;transform:translate(-50%,-50%) rotate(-90deg)">mV</span>
<div style="left:189px;top:967px;width:14px;height:14px;background:#f0f0f0;border:1px solid #a0a0a0;"></div>
<svg style="left:189px;top:967px;" width="14" height="14" viewBox="0 0 14 14"><path d="M2.5 7H11.5" stroke="#000" stroke-width="2" fill="none"/><path d="M7 2.5V11.5" stroke="#000" stroke-width="2" fill="none"/></svg>
<div style="left:189px;top:983px;width:14px;height:14px;background:#f0f0f0;border:1px solid #a0a0a0;"></div>
<svg style="left:189px;top:983px;" width="14" height="14" viewBox="0 0 14 14"><path d="M2.5 7H11.5" stroke="#000" stroke-width="2" fill="none"/></svg>
<svg style="left:271px;top:647px;overflow:hidden" width="230" height="353" viewBox="271 647 230 353"><g shape-rendering="crispEdges"><path d="M271.0 860L271.5 860L272.0 859L272.5 858L273.0 859L273.5 859L274.0 858L274.5 859L275.0 858L275.5 858L276.0 857L276.5 859L277.0 858L277.5 859L278.0 858L278.5 857L279.0 857L279.5 857L280.0 857L280.5 858L281.0 857L281.5 857L282.0 858L282.5 857L283.0 858L283.5 857L284.0 858L284.5 857L285.0 858L285.5 857L286.0 857L286.5 859L287.0 857L287.5 859L288.0 858L288.5 859L289.0 859L289.5 859L290.0 860L290.5 859L291.0 860L291.5 859L292.0 860L292.5 861L293.0 860L293.5 861L294.0 861L294.5 861L295.0 861L295.5 861L296.0 861L296.5 863L297.0 862L297.5 861L298.0 862L298.5 863L299.0 864L299.5 863L300.0 863L300.5 864L301.0 864L301.5 863L302.0 864L302.5 865L303.0 865L303.5 864L304.0 864L304.5 865L305.0 866L305.5 865L306.0 866L306.5 865L307.0 865L307.5 865L308.0 867L308.5 867L309.0 866L309.5 867L310.0 867L310.5 867L311.0 868L311.5 866L312.0 868L312.5 868L313.0 867L313.5 866L314.0 864L314.5 863L315.0 857L315.5 853L316.0 846L316.5 840L317.0 836L317.5 830L318.0 824L318.5 820L319.0 812L319.5 807L320.0 802L320.5 797L321.0 790L321.5 785L322.0 780L322.5 776L323.0 770L323.5 764L324.0 758L324.5 752L325.0 748L325.5 742L326.0 736L326.5 729L327.0 724L327.5 723L328.0 720L328.5 724L329.0 727L329.5 736L330.0 745L330.5 754L331.0 762L331.5 771L332.0 779L332.5 789L333.0 796L333.5 806L334.0 816L334.5 822L335.0 833L335.5 841L336.0 851L336.5 859L337.0 867L337.5 876L338.0 879L338.5 881L339.0 881L339.5 883L340.0 885L340.5 887L341.0 890L341.5 891L342.0 895L342.5 897L343.0 897L343.5 900L344.0 902L344.5 904L345.0 906L345.5 907L346.0 910L346.5 912L347.0 915L347.5 916L348.0 917L348.5 921L349.0 923L349.5 925L350.0 922L350.5 918L351.0 916L351.5 912L352.0 911L352.5 907L353.0 906L353.5 903L354.0 901L354.5 898L355.0 895L355.5 893L356.0 891L356.5 890L357.0 887L357.5 887L358.0 886L358.5 886L359.0 883L359.5 884L360.0 882L360.5 882L361.0 882L361.5 879L362.0 879L362.5 878L363.0 877L363.5 874L364.0 875L364.5 874L365.0 872L365.5 872L366.0 873L366.5 871L367.0 871L367.5 871L368.0 873L368.5 872L369.0 872L369.5 872L370.0 871L370.5 872L371.0 872L371.5 872L372.0 871L372.5 871L373.0 871L373.5 871L374.0 872L374.5 871L375.0 872L375.5 873L376.0 873L376.5 872L377.0 872L377.5 872L378.0 872L378.5 873L379.0 874L379.5 872L380.0 873L380.5 873L381.0 874L381.5 874L382.0 874L382.5 874L383.0 874L383.5 874L384.0 875L384.5 875L385.0 875L385.5 874L386.0 876L386.5 875L387.0 875L387.5 876L388.0 876L388.5 876L389.0 874L389.5 875L390.0 875L390.5 876L391.0 875L391.5 876L392.0 875L392.5 876L393.0 877L393.5 877L394.0 876L394.5 876L395.0 878L395.5 877L396.0 876L396.5 876L397.0 877L397.5 877L398.0 876L398.5 878L399.0 876L399.5 876L400.0 878L400.5 876L401.0 877L401.5 876L402.0 877L402.5 876L403.0 877L403.5 878L404.0 877L404.5 877L405.0 877L405.5 876L406.0 876L406.5 877L407.0 876L407.5 876L408.0 878L408.5 876L409.0 878L409.5 878L410.0 878L410.5 876L411.0 877L411.5 876L412.0 878L412.5 878L413.0 877L413.5 877L414.0 878L414.5 877L415.0 878L415.5 878L416.0 879L416.5 878L417.0 878L417.5 880L418.0 880L418.5 879L419.0 878L419.5 879L420.0 880L420.5 880L421.0 880L421.5 881L422.0 882L422.5 882L423.0 882L423.5 880L424.0 882L424.5 881L425.0 883L425.5 883L426.0 883L426.5 882L427.0 882L427.5 884L428.0 884L428.5 884L429.0 884L429.5 885L430.0 884L430.5 884L431.0 884L431.5 884L432.0 885L432.5 886L433.0 884L433.5 885L434.0 886L434.5 886L435.0 885L435.5 885L436.0 885L436.5 885L437.0 886L437.5 887L438.0 887L438.5 885L439.0 885L439.5 887L440.0 886L440.5 886L441.0 887L441.5 887L442.0 886L442.5 885L443.0 887L443.5 885L444.0 885L444.5 885L445.0 885L445.5 886L446.0 884L446.5 885L447.0 885L447.5 884L448.0 885L448.5 885L449.0 885L449.5 884L450.0 883L450.5 884L451.0 885L451.5 884L452.0 884L452.5 884L453.0 883L453.5 884L454.0 884L454.5 883L455.0 881L455.5 882L456.0 882L456.5 882L457.0 882L457.5 882L458.0 881L458.5 883L459.0 882L459.5 882L460.0 881L460.5 882L461.0 881L461.5 882L462.0 882L462.5 882L463.0 881L463.5 880L464.0 881L464.5 880L465.0 881L465.5 882L466.0 881L466.5 880L467.0 880L467.5 881L468.0 881L468.5 880L469.0 881L469.5 880L470.0 880L470.5 882L471.0 881L471.5 882L472.0 881L472.5 880L473.0 880L473.5 881L474.0 881L474.5 881L475.0 881L475.5 881L476.0 880L476.5 881L477.0 880L477.5 881L478.0 880L478.5 881L479.0 880L479.5 879L480.0 881L480.5 880L481.0 881L481.5 881L482.0 880L482.5 881L483.0 879L483.5 879L484.0 878L484.5 880L485.0 879L485.5 879L486.0 880L486.5 878L487.0 878L487.5 879L488.0 879L488.5 878L489.0 877L489.5 877L490.0 878L490.5 877L491.0 877L491.5 877L492.0 877L492.5 877L493.0 877L493.5 877L494.0 877L494.5 876L495.0 875L495.5 876L496.0 876L496.5 876L497.0 875L497.5 876L498.0 876L498.5 874L499.0 875L499.5 875L500.0 874L500.5 876L501.0 874" fill="none" stroke="#7c3f73" stroke-width="1"/><path d="M271.0 885L271.5 884L272.0 885L272.5 884L273.0 884L273.5 884L274.0 884L274.5 885L275.0 884L275.5 884L276.0 885L276.5 885L277.0 883L277.5 885L278.0 884L278.5 884L279.0 884L279.5 885L280.0 884L280.5 884L281.0 884L281.5 883L282.0 883L282.5 884L283.0 883L283.5 883L284.0 883L284.5 882L285.0 883L285.5 881L286.0 882L286.5 882L287.0 881L287.5 882L288.0 881L288.5 880L289.0 881L289.5 880L290.0 881L290.5 880L291.0 880L291.5 879L292.0 879L292.5 879L293.0 879L293.5 880L294.0 880L294.5 879L295.0 878L295.5 879L296.0 878L296.5 879L297.0 879L297.5 878L298.0 879L298.5 879L299.0 878L299.5 878L300.0 879L300.5 878L301.0 878L301.5 879L302.0 879L302.5 878L303.0 879L303.5 877L304.0 878L304.5 878L305.0 879L305.5 878L306.0 879L306.5 877L307.0 879L307.5 879L308.0 879L308.5 879L309.0 878L309.5 880L310.0 878L310.5 880L311.0 879L311.5 879L312.0 879L312.5 878L313.0 878L313.5 878L313.9 877L314.4 876L314.9 876L315.3 874L315.8 874L316.3 867L316.8 862L317.3 857L317.8 851L318.3 843L318.8 838L319.3 831L319.8 827L320.3 820L320.8 814L321.3 808L321.8 803L322.3 796L322.8 791L323.3 784L323.8 778L324.3 772L324.8 766L325.3 759L325.8 754L326.3 748L326.8 742L327.3 735L327.8 731L328.3 724L328.8 720L329.3 717L329.8 722L330.3 727L330.8 735L331.3 744L331.8 752L332.3 762L332.8 770L333.3 780L333.8 788L334.3 797L334.8 806L335.3 815L335.8 825L336.3 833L336.8 842L337.3 850L337.8 860L338.3 869L338.8 876L339.3 879L339.8 880L340.3 881L340.8 882L341.3 883L341.8 883L342.3 886L342.8 885L343.3 886L343.8 889L344.3 888L344.8 890L345.3 891L345.8 892L346.3 893L346.8 895L347.3 896L347.8 897L348.3 898L348.8 899L349.3 901L349.8 903L350.3 906L350.8 907L351.3 904L351.8 901L352.3 899L352.8 896L353.3 892L353.8 893L354.3 893L354.8 892L355.3 893L355.8 893L356.3 893L356.8 893L357.3 894L357.8 895L358.3 893L358.8 893L359.3 892L359.8 892L360.3 891L360.8 890L361.3 890L361.8 889L362.3 888L362.8 888L363.3 886L363.8 886L364.3 886L364.8 885L365.3 884L365.8 881L366.3 882L366.8 881L367.3 882L367.8 883L368.3 881L368.8 881L369.3 883L369.8 881L370.3 882L370.8 882L371.3 881L371.8 882L372.3 880L372.8 881L373.3 881L373.8 881L374.3 880L374.8 880L375.3 882L375.8 880L376.3 881L376.8 881L377.3 882L377.8 882L378.3 881L378.8 880L379.3 881L379.8 880L380.3 882L380.8 880L381.3 880L381.8 880L382.3 880L382.8 881L383.3 881L383.8 881L384.3 881L384.8 880L385.3 880L385.8 880L386.3 881L386.8 882L387.3 882L387.8 880L388.3 882L388.8 882L389.3 881L389.8 882L390.3 882L390.8 881L391.3 882L391.8 883L392.3 883L392.8 883L393.3 881L393.8 883L394.3 882L394.8 883L395.3 882L395.8 883L396.3 882L396.8 883L397.3 883L397.8 882L398.3 883L398.8 882L399.3 883L399.8 883L400.3 882L400.8 884L401.3 884L401.8 883L402.3 883L402.8 883L403.3 883L403.8 883L404.3 883L404.8 884L405.3 882L405.8 883L406.3 884L406.8 882L407.3 882L407.8 884L408.3 882L408.8 882L409.3 882L409.8 882L410.3 882L410.8 882L411.3 881L411.8 882L412.3 881L412.8 881L413.3 881L413.8 881L414.3 881L414.8 880L415.3 881L415.8 881L416.3 880L416.8 881L417.3 881L417.8 880L418.3 880L418.8 880L419.3 880L419.8 880L420.3 880L420.8 880L421.3 879L421.8 879L422.3 880L422.8 879L423.3 880L423.8 878L424.3 879L424.8 878L425.3 879L425.8 879L426.3 879L426.8 878L427.3 878L427.8 880L428.3 879L428.8 879L429.3 878L429.8 879L430.3 880L430.8 879L431.3 880L431.8 880L432.3 880L432.8 880L433.3 881L433.8 881L434.3 880L434.8 881L435.3 881L435.8 881L436.3 882L436.8 881L437.3 882L437.8 882L438.3 881L438.8 882L439.3 882L439.8 882L440.3 884L440.8 884L441.3 885L441.8 884L442.3 885L442.8 884L443.3 885L443.8 886L444.3 884L444.8 885L445.3 885L445.8 885L446.3 886L446.8 885L447.3 887L447.8 887L448.3 886L448.8 886L449.3 886L449.8 888L450.3 887L450.8 888L451.3 887L451.8 888L452.3 888L452.8 888L453.3 887L453.8 889L454.3 889L454.8 888L455.3 889L455.8 889L456.3 888L456.8 888L457.3 889L457.8 889L458.3 888L458.8 888L459.3 888L459.8 889L460.3 889L460.8 889L461.3 889L461.8 890L462.3 889L462.8 890L463.3 889L463.8 889L464.3 889L464.8 889L465.3 889L465.8 889L466.3 890L466.8 890L467.3 890L467.8 891L468.3 890L468.8 890L469.3 891L469.8 891L470.3 891L470.8 892L471.3 891L471.8 891L472.3 891L472.8 892L473.3 892L473.8 891L474.3 892L474.8 893L475.3 894L475.8 894L476.3 894L476.8 894L477.3 894L477.8 894L478.3 893L478.8 895L479.3 895L479.8 894L480.3 895L480.8 895L481.3 896L481.8 896L482.3 897L482.8 897L483.3 897L483.8 897L484.3 897L484.8 898L485.3 898L485.8 897L486.3 898L486.8 899L487.3 899L487.8 898L488.3 898L488.8 900L489.3 898L489.8 898L490.3 899L490.8 900L491.3 900L491.8 899L492.3 900L492.8 900L493.3 899L493.8 899L494.3 899L494.8 900L495.3 899L495.8 899L496.3 900L496.8 899L497.3 899L497.8 899L498.3 900L498.8 899L499.3 899L499.8 900L500.4 899L501.0 898" fill="none" stroke="#7c3f73" stroke-width="1"/><path d="M271.0 878L271.5 878L272.0 879L272.5 880L273.0 879L273.5 880L274.0 880L274.5 881L275.0 881L275.5 882L276.0 881L276.5 880L277.0 882L277.5 881L278.0 883L278.5 883L279.0 883L279.5 883L280.0 882L280.5 883L281.0 882L281.5 882L282.0 883L282.5 883L283.0 883L283.5 882L284.0 883L284.5 883L285.0 884L285.5 884L286.0 884L286.5 883L287.0 884L287.5 884L288.0 884L288.5 884L289.0 883L289.5 884L290.0 882L290.5 884L291.0 883L291.5 884L292.0 882L292.5 883L293.0 882L293.5 882L294.0 882L294.5 883L295.0 882L295.5 882L296.0 883L296.5 883L297.0 882L297.5 882L298.0 883L298.5 882L299.0 881L299.5 882L300.0 882L300.5 881L301.0 881L301.5 881L302.0 882L302.5 880L303.0 881L303.5 880L304.0 880L304.5 881L305.0 881L305.5 881L306.0 882L306.5 880L307.0 881L307.5 880L308.0 880L308.5 881L309.0 880L309.5 880L310.0 879L310.5 881L311.0 881L311.5 880L312.0 881L312.5 881L313.0 880L313.5 881L313.9 880L314.4 878L314.8 879L315.3 877L315.8 876L316.3 870L316.8 865L317.3 858L317.8 852L318.3 845L318.8 840L319.3 833L319.8 828L320.3 820L320.8 815L321.3 809L321.8 802L322.3 796L322.8 790L323.3 784L323.8 777L324.3 771L324.8 764L325.3 758L325.8 751L326.3 746L326.8 740L327.3 734L327.8 727L328.3 722L328.8 718L329.3 715L329.8 720L330.3 723L330.8 732L331.3 742L331.8 750L332.3 761L332.8 769L333.3 777L333.8 787L334.3 797L334.8 807L335.3 815L335.8 823L336.3 834L336.8 842L337.3 850L337.8 860L338.3 870L338.8 879L339.3 879L339.8 881L340.3 882L340.8 883L341.3 883L341.8 885L342.3 886L342.8 887L343.3 888L343.8 890L344.3 890L344.8 892L345.3 893L345.8 893L346.3 894L346.8 895L347.3 896L347.8 896L348.3 899L348.8 899L349.3 901L349.8 904L350.3 905L350.8 908L351.3 904L351.8 902L352.3 897L352.8 895L353.3 893L353.8 893L354.3 892L354.8 892L355.3 891L355.8 891L356.3 891L356.8 890L357.3 889L357.8 890L358.3 888L358.8 888L359.3 887L359.8 888L360.3 886L360.8 886L361.3 884L361.8 884L362.3 885L362.8 885L363.3 882L363.8 883L364.3 881L364.8 881L365.3 878L365.8 877L366.3 878L366.8 880L367.3 879L367.8 879L368.3 878L368.8 880L369.3 880L369.8 879L370.3 880L370.8 881L371.3 881L371.8 880L372.3 881L372.8 880L373.3 881L373.8 880L374.3 881L374.8 881L375.3 882L375.8 882L376.3 880L376.8 881L377.3 881L377.8 881L378.3 882L378.8 881L379.3 882L379.8 882L380.3 881L380.8 882L381.3 882L381.8 883L382.3 881L382.8 883L383.3 882L383.8 882L384.3 881L384.8 882L385.3 883L385.8 882L386.3 883L386.8 882L387.3 881L387.8 883L388.3 882L388.8 882L389.3 883L389.8 884L390.3 884L390.8 883L391.3 884L391.8 882L392.3 883L392.8 883L393.3 884L393.8 884L394.3 884L394.8 885L395.3 884L395.8 884L396.3 884L396.8 884L397.3 884L397.8 886L398.3 884L398.8 886L399.3 886L399.8 886L400.3 885L400.8 886L401.3 887L401.8 886L402.3 888L402.8 887L403.3 887L403.8 887L404.3 888L404.8 888L405.3 889L405.8 888L406.3 889L406.8 889L407.3 889L407.8 889L408.3 890L408.8 889L409.3 890L409.8 890L410.3 891L410.8 890L411.3 890L411.8 891L412.3 890L412.8 891L413.3 890L413.8 891L414.3 891L414.8 892L415.3 892L415.8 892L416.3 892L416.8 891L417.3 892L417.8 891L418.3 891L418.8 891L419.3 892L419.8 892L420.3 892L420.8 891L421.3 890L421.8 890L422.3 891L422.8 891L423.3 890L423.8 890L424.3 892L424.8 890L425.3 889L425.8 890L426.3 889L426.8 891L427.3 890L427.8 890L428.3 890L428.8 889L429.3 889L429.8 890L430.3 889L430.8 889L431.3 888L431.8 889L432.3 890L432.8 889L433.3 889L433.8 889L434.3 887L434.8 887L435.3 889L435.8 887L436.3 888L436.8 888L437.3 889L437.8 888L438.3 887L438.8 887L439.3 889L439.8 889L440.3 887L440.8 889L441.3 888L441.8 889L442.3 888L442.8 889L443.3 888L443.8 887L444.3 889L444.8 889L445.3 888L445.8 889L446.3 889L446.8 889L447.3 889L447.8 889L448.3 889L448.8 891L449.3 890L449.8 890L450.3 889L450.8 890L451.3 890L451.8 890L452.3 889L452.8 891L453.3 890L453.8 891L454.3 892L454.8 891L455.3 891L455.8 891L456.3 891L456.8 893L457.3 891L457.8 891L458.3 893L458.8 891L459.3 892L459.8 892L460.3 891L460.8 891L461.3 893L461.8 893L462.3 893L462.8 892L463.3 891L463.8 892L464.3 891L464.8 892L465.3 891L465.8 892L466.3 892L466.8 892L467.3 892L467.8 891L468.3 891L468.8 891L469.3 893L469.8 891L470.3 893L470.8 892L471.3 892L471.8 892L472.3 893L472.8 893L473.3 892L473.8 892L474.3 893L474.8 891L475.3 893L475.8 892L476.3 892L476.8 892L477.3 893L477.8 891L478.3 892L478.8 892L479.3 892L479.8 892L480.3 893L480.8 893L481.3 894L481.8 893L482.3 894L482.8 893L483.3 894L483.8 894L484.3 895L484.8 893L485.3 895L485.8 895L486.3 895L486.8 895L487.3 895L487.8 897L488.3 895L488.8 897L489.3 897L489.8 896L490.3 896L490.8 897L491.3 898L491.8 896L492.3 898L492.8 899L493.3 898L493.8 899L494.3 898L494.8 898L495.3 899L495.8 899L496.3 900L496.8 900L497.3 900L497.8 901L498.3 900L498.8 901L499.3 901L499.8 902L500.4 902L501.0 901" fill="none" stroke="#7c3f73" stroke-width="1"/><path d="M271.0 861L271.5 860L272.0 861L272.5 861L273.0 862L273.5 862L274.0 863L274.5 863L275.0 863L275.5 862L276.0 863L276.5 862L277.0 863L277.5 863L278.0 864L278.5 865L279.0 864L279.5 866L280.0 866L280.5 866L281.0 865L281.5 865L282.0 866L282.5 866L283.0 867L283.5 866L284.0 866L284.5 868L285.0 866L285.5 868L286.0 867L286.5 869L287.0 868L287.5 868L288.0 869L288.5 869L289.0 868L289.5 868L290.0 869L290.5 868L291.0 868L291.5 869L292.0 869L292.5 869L293.0 868L293.5 868L294.0 868L294.5 870L295.0 868L295.5 868L296.0 868L296.5 869L297.0 870L297.5 868L298.0 869L298.5 869L299.0 870L299.5 869L300.0 869L300.5 870L301.0 870L301.5 869L302.0 869L302.5 870L303.0 871L303.5 869L304.0 869L304.5 871L305.0 871L305.5 870L306.0 870L306.5 871L307.0 870L307.5 870L308.0 870L308.5 872L309.0 871L309.5 872L310.0 873L310.5 871L311.0 872L311.5 873L312.0 873L312.5 872L313.0 873L313.5 874L314.0 874L314.5 875L315.0 873L315.6 871L316.2 870L316.7 863L317.2 860L317.7 852L318.2 847L318.7 842L319.2 835L319.7 830L320.2 823L320.7 818L321.2 813L321.7 807L322.2 800L322.7 796L323.2 789L323.7 785L324.2 778L324.7 773L325.2 766L325.7 761L326.2 756L326.7 750L327.2 743L327.7 739L328.2 733L328.7 727L329.2 723L329.7 719L330.2 724L330.7 727L331.2 736L331.7 746L332.2 755L332.7 763L333.2 773L333.7 782L334.2 790L334.7 797L335.2 806L335.7 817L336.2 826L336.7 833L337.2 841L337.7 851L338.2 859L338.7 867L339.2 876L339.7 879L340.2 881L340.7 884L341.2 885L341.7 888L342.2 890L342.7 891L343.2 894L343.7 896L344.2 897L344.7 901L345.2 902L345.7 904L346.2 907L346.7 907L347.2 910L347.7 912L348.2 915L348.7 916L349.2 919L349.7 921L350.2 924L350.7 924L351.2 927L351.7 925L352.2 921L352.7 918L353.2 916L353.7 913L354.2 910L354.7 907L355.2 903L355.7 901L356.2 899L356.7 895L357.2 894L357.7 890L358.2 887L358.7 887L359.2 887L359.7 886L360.2 885L360.7 884L361.2 883L361.7 883L362.2 883L362.7 881L363.2 881L363.7 880L364.2 880L364.7 879L365.2 879L365.7 877L366.2 876L366.7 875L367.2 876L367.7 876L368.2 875L368.7 876L369.2 876L369.7 875L370.2 876L370.7 877L371.2 876L371.7 877L372.2 876L372.7 876L373.2 878L373.7 876L374.2 878L374.7 878L375.2 877L375.7 876L376.2 876L376.7 878L377.2 876L377.7 877L378.2 876L378.7 877L379.2 877L379.7 878L380.2 877L380.7 876L381.2 877L381.7 877L382.2 878L382.7 877L383.2 876L383.7 877L384.2 877L384.7 877L385.2 877L385.7 877L386.2 877L386.7 876L387.2 877L387.7 877L388.2 876L388.7 877L389.2 878L389.7 877L390.2 876L390.7 878L391.2 878L391.7 876L392.2 878L392.7 878L393.2 878L393.7 878L394.2 878L394.7 877L395.2 878L395.7 879L396.2 879L396.7 879L397.2 879L397.7 879L398.2 879L398.7 878L399.2 878L399.7 878L400.2 880L400.7 880L401.2 881L401.7 881L402.2 880L402.7 881L403.2 880L403.7 880L404.2 881L404.7 880L405.2 881L405.7 882L406.2 881L406.7 881L407.2 881L407.7 882L408.2 883L408.7 883L409.2 883L409.7 884L410.2 884L410.7 884L411.2 884L411.7 883L412.2 883L412.7 883L413.2 884L413.7 884L414.2 884L414.7 884L415.2 883L415.7 885L416.2 885L416.7 885L417.2 883L417.7 885L418.2 885L418.7 884L419.2 884L419.7 885L420.2 884L420.7 884L421.2 883L421.7 884L422.2 884L422.7 883L423.2 883L423.7 884L424.2 883L424.7 882L425.2 883L425.7 883L426.2 883L426.7 882L427.2 882L427.7 881L428.2 881L428.7 881L429.2 881L429.7 881L430.2 881L430.7 881L431.2 881L431.7 879L432.2 879L432.7 879L433.2 880L433.7 879L434.2 879L434.7 879L435.2 880L435.7 879L436.2 880L436.7 880L437.2 879L437.7 878L438.2 879L438.7 878L439.2 877L439.7 878L440.2 878L440.7 878L441.2 878L441.7 877L442.2 877L442.7 878L443.2 878L443.7 878L444.2 878L444.7 878L445.2 878L445.7 879L446.2 878L446.7 877L447.2 878L447.7 877L448.2 877L448.7 878L449.2 877L449.7 877L450.2 877L450.7 877L451.2 877L451.7 877L452.2 878L452.7 878L453.2 878L453.7 878L454.2 877L454.7 878L455.2 877L455.7 877L456.2 877L456.7 877L457.2 877L457.7 878L458.2 876L458.7 878L459.2 878L459.7 878L460.2 876L460.7 877L461.2 876L461.7 877L462.2 876L462.7 877L463.2 875L463.7 875L464.2 876L464.7 876L465.2 876L465.7 875L466.2 875L466.7 876L467.2 875L467.7 875L468.2 874L468.7 874L469.2 876L469.7 874L470.2 873L470.7 874L471.2 873L471.7 874L472.2 873L472.7 874L473.2 874L473.7 874L474.2 874L474.7 873L475.2 873L475.7 874L476.2 873L476.7 874L477.2 872L477.7 873L478.2 874L478.7 873L479.2 872L479.7 873L480.2 872L480.7 873L481.2 873L481.7 874L482.2 873L482.7 874L483.2 873L483.7 873L484.2 874L484.7 873L485.2 873L485.7 874L486.2 873L486.7 873L487.2 874L487.7 876L488.2 875L488.7 875L489.2 875L489.7 875L490.2 876L490.7 875L491.2 877L491.7 877L492.2 876L492.7 877L493.2 877L493.7 878L494.2 878L494.7 879L495.2 877L495.7 879L496.2 878L496.7 878L497.2 879L497.7 880L498.2 879L498.7 880L499.2 881L499.7 881L500.2 881L500.6 880L501.0 880" fill="none" stroke="#7c3f73" stroke-width="1"/><path d="M271.0 869L271.5 868L272.0 868L272.5 868L273.0 868L273.5 869L274.0 868L274.5 870L275.0 869L275.5 869L276.0 871L276.5 870L277.0 871L277.5 871L278.0 871L278.5 870L279.0 872L279.5 872L280.0 871L280.5 871L281.0 872L281.5 873L282.0 872L282.5 873L283.0 873L283.5 871L284.0 871L284.5 872L285.0 871L285.5 872L286.0 873L286.5 872L287.0 873L287.5 872L288.0 873L288.5 871L289.0 872L289.5 871L290.0 872L290.5 871L291.0 873L291.5 872L292.0 873L292.5 872L293.0 873L293.5 873L294.0 872L294.5 873L295.0 872L295.5 872L296.0 872L296.5 871L297.0 872L297.5 872L298.0 871L298.5 873L299.0 871L299.5 872L300.0 872L300.5 870L301.0 871L301.5 871L302.0 871L302.5 871L303.0 872L303.5 872L304.0 870L304.5 872L305.0 872L305.5 871L306.0 871L306.5 871L307.0 870L307.5 871L308.0 872L308.5 871L309.0 872L309.5 871L310.0 872L310.5 872L311.0 871L311.5 873L312.0 873L312.5 873L313.0 871L313.6 872L314.1 870L314.7 869L315.2 863L315.7 856L316.2 851L316.7 845L317.2 840L317.7 833L318.2 828L318.7 822L319.2 815L319.7 809L320.2 804L320.7 798L321.2 792L321.7 786L322.2 780L322.7 776L323.2 769L323.7 764L324.2 757L324.7 753L325.2 747L325.7 741L326.2 734L326.7 730L327.2 722L327.7 720L328.2 717L328.7 720L329.2 724L329.7 734L330.2 741L330.7 750L331.2 759L331.7 767L332.2 776L332.7 784L333.2 793L333.7 803L334.2 812L334.7 820L335.2 828L335.7 838L336.2 845L336.7 854L337.2 861L337.7 871L338.2 872L338.7 875L339.2 878L339.7 879L340.2 880L340.7 884L341.2 884L341.7 887L342.2 888L342.7 892L343.2 893L343.7 896L344.2 896L344.7 899L345.2 900L345.7 903L346.2 904L346.7 906L347.2 909L347.7 911L348.2 912L348.7 914L349.2 917L349.7 918L350.2 915L350.7 913L351.2 909L351.7 907L352.2 904L352.7 901L353.2 899L353.7 897L354.2 894L354.7 891L355.2 887L355.7 886L356.2 883L356.7 880L357.2 879L357.7 879L358.2 878L358.7 878L359.2 876L359.7 875L360.2 874L360.7 875L361.2 874L361.7 873L362.2 872L362.7 872L363.2 870L363.7 870L364.2 869L364.7 866L365.2 867L365.7 868L366.2 868L366.7 868L367.2 869L367.7 868L368.2 869L368.7 869L369.2 869L369.7 869L370.2 869L370.7 868L371.2 868L371.7 869L372.2 869L372.7 868L373.2 869L373.7 870L374.2 870L374.7 869L375.2 870L375.7 869L376.2 868L376.7 870L377.2 869L377.7 869L378.2 869L378.7 870L379.2 869L379.7 869L380.2 870L380.7 870L381.2 870L381.7 868L382.2 870L382.7 868L383.2 869L383.7 869L384.2 870L384.7 870L385.2 870L385.7 870L386.2 870L386.7 869L387.2 870L387.7 870L388.2 869L388.7 870L389.2 870L389.7 869L390.2 870L390.7 870L391.2 871L391.7 872L392.2 871L392.7 872L393.2 872L393.7 871L394.2 871L394.7 873L395.2 871L395.7 873L396.2 873L396.7 874L397.2 874L397.7 874L398.2 873L398.7 874L399.2 875L399.7 875L400.2 876L400.7 874L401.2 875L401.7 876L402.2 875L402.7 876L403.2 876L403.7 876L404.2 877L404.7 877L405.2 877L405.7 878L406.2 879L406.7 878L407.2 878L407.7 879L408.2 879L408.7 880L409.2 880L409.7 880L410.2 879L410.7 879L411.2 880L411.7 880L412.2 880L412.7 881L413.2 881L413.7 881L414.2 881L414.7 881L415.2 880L415.7 880L416.2 881L416.7 881L417.2 881L417.7 881L418.2 882L418.7 880L419.2 880L419.7 882L420.2 880L420.7 881L421.2 881L421.7 881L422.2 881L422.7 881L423.2 881L423.7 882L424.2 881L424.7 880L425.2 881L425.7 880L426.2 881L426.7 879L427.2 880L427.7 881L428.2 881L428.7 880L429.2 880L429.7 880L430.2 880L430.7 879L431.2 880L431.7 879L432.2 878L432.7 878L433.2 878L433.7 879L434.2 878L434.7 880L435.2 879L435.7 879L436.2 878L436.7 879L437.2 880L437.7 880L438.2 879L438.7 879L439.2 880L439.7 879L440.2 879L440.7 880L441.2 880L441.7 878L442.2 878L442.7 879L443.2 880L443.7 880L444.2 880L444.7 879L445.2 880L445.7 880L446.2 880L446.7 880L447.2 881L447.7 881L448.2 881L448.7 881L449.2 881L449.7 881L450.2 881L450.7 880L451.2 882L451.7 881L452.2 880L452.7 882L453.2 882L453.7 881L454.2 882L454.7 881L455.2 882L455.7 882L456.2 883L456.7 882L457.2 883L457.7 882L458.2 881L458.7 881L459.2 882L459.7 881L460.2 881L460.7 881L461.2 882L461.7 883L462.2 883L462.7 881L463.2 882L463.7 882L464.2 882L464.7 882L465.2 881L465.7 880L466.2 881L466.7 880L467.2 882L467.7 882L468.2 881L468.7 881L469.2 881L469.7 882L470.2 880L470.7 881L471.2 880L471.7 881L472.2 880L472.7 881L473.2 880L473.7 880L474.2 881L474.7 879L475.2 880L475.7 882L476.2 881L476.7 880L477.2 880L477.7 881L478.2 882L478.7 882L479.2 882L479.7 882L480.2 880L480.7 882L481.2 881L481.7 882L482.2 881L482.7 881L483.2 882L483.7 883L484.2 882L484.7 884L485.2 882L485.7 884L486.2 884L486.7 883L487.2 884L487.7 884L488.2 884L488.7 884L489.2 885L489.7 886L490.2 886L490.7 885L491.2 886L491.7 885L492.2 886L492.7 887L493.2 887L493.7 887L494.2 887L494.7 889L495.2 889L495.7 888L496.2 889L496.7 889L497.2 888L497.7 889L498.2 889L498.7 890L499.2 889L499.7 891L500.2 890L500.7 890L501.0 890" fill="none" stroke="#7c3f73" stroke-width="1"/><path d="M271.0 878L271.5 880L272.0 878L272.5 879L273.0 878L273.5 878L274.0 879L274.5 879L275.0 879L275.5 878L276.0 879L276.5 879L277.0 878L277.5 879L278.0 878L278.5 878L279.0 878L279.5 878L280.0 879L280.5 880L281.0 878L281.5 878L282.0 879L282.5 878L283.0 880L283.5 880L284.0 878L284.5 880L285.0 880L285.5 878L286.0 879L286.5 879L287.0 879L287.5 879L288.0 880L288.5 880L289.0 881L289.5 880L290.0 880L290.5 881L291.0 881L291.5 881L292.0 882L292.5 881L293.0 881L293.5 882L294.0 883L294.5 882L295.0 882L295.5 882L296.0 882L296.5 882L297.0 882L297.5 882L298.0 882L298.5 882L299.0 882L299.5 884L300.0 883L300.5 884L301.0 882L301.5 883L302.0 884L302.5 883L303.0 883L303.5 884L304.0 883L304.5 882L305.0 882L305.5 884L306.0 883L306.5 883L307.0 884L307.5 883L308.0 883L308.5 882L309.0 882L309.5 882L310.0 881L310.5 881L311.0 881L311.5 881L312.0 882L312.5 882L313.0 882L313.5 879L313.9 879L314.4 877L314.9 876L315.4 870L315.9 863L316.4 858L316.9 850L317.4 845L317.9 840L318.4 832L318.9 827L319.4 821L319.9 814L320.4 809L320.9 802L321.4 795L321.9 789L322.4 783L322.9 778L323.4 770L323.9 765L324.4 759L324.9 753L325.4 746L325.9 739L326.4 734L326.9 728L327.4 722L327.9 720L328.4 716L328.9 720L329.4 724L329.9 733L330.4 741L330.9 751L331.4 761L331.9 768L332.4 779L332.9 786L333.4 795L333.9 805L334.4 815L334.9 823L335.4 832L335.9 841L336.4 850L336.9 860L337.4 869L337.9 878L338.4 878L338.9 880L339.4 882L339.9 882L340.4 883L340.9 884L341.4 886L341.9 885L342.4 887L342.9 889L343.4 888L343.9 890L344.4 892L344.9 892L345.4 893L345.9 894L346.4 895L346.9 897L347.4 896L347.9 898L348.4 900L348.9 903L349.4 905L349.9 906L350.4 903L350.9 902L351.4 897L351.9 896L352.4 891L352.9 891L353.4 892L353.9 892L354.4 891L354.9 890L355.4 890L355.9 890L356.4 889L356.9 889L357.4 888L357.9 888L358.4 887L358.9 886L359.4 884L359.9 885L360.4 884L360.9 881L361.4 882L361.9 881L362.4 880L362.9 879L363.4 879L363.9 877L364.4 876L364.9 875L365.4 875L365.9 874L366.4 874L366.9 875L367.4 874L367.9 873L368.4 874L368.9 875L369.4 873L369.9 873L370.4 875L370.9 875L371.4 873L371.9 875L372.4 875L372.9 875L373.4 875L373.9 874L374.4 874L374.9 876L375.4 876L375.9 876L376.4 876L376.9 875L377.4 875L377.9 877L378.4 876L378.9 877L379.4 877L379.9 876L380.4 877L380.9 877L381.4 877L381.9 879L382.4 878L382.9 878L383.4 878L383.9 880L384.4 880L384.9 880L385.4 880L385.9 880L386.4 879L386.9 881L387.4 882L387.9 882L388.4 882L388.9 881L389.4 882L389.9 883L390.4 881L390.9 882L391.4 883L391.9 882L392.4 882L392.9 883L393.4 882L393.9 883L394.4 882L394.9 882L395.4 883L395.9 883L396.4 883L396.9 883L397.4 882L397.9 882L398.4 882L398.9 882L399.4 883L399.9 883L400.4 882L400.9 882L401.4 884L401.9 883L402.4 882L402.9 883L403.4 883L403.9 881L404.4 882L404.9 883L405.4 883L405.9 882L406.4 882L406.9 881L407.4 881L407.9 882L408.4 882L408.9 882L409.4 882L409.9 882L410.4 882L410.9 880L411.4 881L411.9 882L412.4 881L412.9 880L413.4 881L413.9 881L414.4 881L414.9 881L415.4 880L415.9 880L416.4 880L416.9 880L417.4 881L417.9 880L418.4 880L418.9 881L419.4 881L419.9 881L420.4 881L420.9 880L421.4 881L421.9 880L422.4 882L422.9 880L423.4 882L423.9 881L424.4 881L424.9 881L425.4 880L425.9 881L426.4 882L426.9 881L427.4 882L427.9 883L428.4 883L428.9 883L429.4 883L429.9 882L430.4 882L430.9 882L431.4 881L431.9 882L432.4 882L432.9 882L433.4 882L433.9 882L434.4 883L434.9 884L435.4 883L435.9 883L436.4 884L436.9 883L437.4 883L437.9 884L438.4 884L438.9 882L439.4 884L439.9 884L440.4 882L440.9 882L441.4 883L441.9 883L442.4 882L442.9 884L443.4 882L443.9 883L444.4 882L444.9 883L445.4 881L445.9 883L446.4 882L446.9 881L447.4 882L447.9 882L448.4 883L448.9 882L449.4 882L449.9 882L450.4 881L450.9 881L451.4 882L451.9 881L452.4 882L452.9 881L453.4 882L453.9 881L454.4 880L454.9 881L455.4 881L455.9 880L456.4 881L456.9 882L457.4 881L457.9 880L458.4 881L458.9 881L459.4 881L459.9 882L460.4 881L460.9 882L461.4 883L461.9 883L462.4 883L462.9 882L463.4 883L463.9 883L464.4 882L464.9 883L465.4 883L465.9 884L466.4 883L466.9 885L467.4 884L467.9 885L468.4 885L468.9 885L469.4 885L469.9 886L470.4 885L470.9 887L471.4 886L471.9 886L472.4 888L472.9 887L473.4 887L473.9 888L474.4 888L474.9 888L475.4 889L475.9 889L476.4 890L476.9 889L477.4 891L477.9 891L478.4 890L478.9 890L479.4 890L479.9 891L480.4 892L480.9 892L481.4 891L481.9 892L482.4 893L482.9 893L483.4 893L483.9 892L484.4 893L484.9 893L485.4 892L485.9 892L486.4 894L486.9 893L487.4 894L487.9 894L488.4 893L488.9 895L489.4 895L489.9 893L490.4 894L490.9 893L491.4 895L491.9 893L492.4 894L492.9 895L493.4 894L493.9 895L494.4 893L494.9 895L495.4 895L495.9 893L496.4 893L496.9 894L497.4 893L497.9 894L498.4 894L498.9 894L499.4 895L499.9 895L500.4 894L500.9 894L501.0 894" fill="none" stroke="#7c3f73" stroke-width="1"/><path d="M271.0 872L271.5 872L272.0 873L272.5 875L273.0 875L273.5 874L274.0 875L274.5 874L275.0 875L275.5 875L276.0 875L276.5 876L277.0 876L277.5 875L278.0 876L278.5 875L279.0 876L279.5 878L280.0 877L280.5 876L281.0 877L281.5 877L282.0 876L282.5 877L283.0 877L283.5 877L284.0 877L284.5 877L285.0 878L285.5 877L286.0 877L286.5 878L287.0 878L287.5 877L288.0 878L288.5 877L289.0 876L289.5 878L290.0 878L290.5 878L291.0 876L291.5 877L292.0 878L292.5 877L293.0 877L293.5 876L294.0 876L294.5 876L295.0 875L295.5 875L296.0 875L296.5 876L297.0 876L297.5 875L298.0 875L298.5 876L299.0 876L299.5 875L300.0 874L300.5 874L301.0 874L301.5 874L302.0 875L302.5 874L303.0 874L303.5 875L304.0 875L304.5 874L305.0 874L305.5 874L306.0 874L306.5 874L307.0 873L307.5 875L308.0 873L308.5 875L309.0 875L309.5 874L310.0 873L310.5 874L311.0 875L311.5 873L312.0 874L312.5 874L313.0 874L313.5 875L314.0 872L314.5 873L315.0 871L315.5 864L316.0 859L316.5 853L317.0 847L317.5 841L318.0 835L318.5 831L319.0 824L319.5 818L320.0 812L320.5 807L321.0 801L321.5 794L322.0 789L322.5 784L323.0 778L323.5 772L324.0 766L324.5 760L325.0 753L325.5 749L326.0 743L326.5 737L327.0 731L327.5 726L328.0 723L328.5 719L329.0 722L329.5 728L330.0 736L330.5 746L331.0 753L331.5 762L332.0 772L332.5 779L333.0 789L333.5 798L334.0 807L334.5 815L335.0 824L335.5 833L336.0 840L336.5 849L337.0 859L337.5 867L338.0 875L338.5 876L339.0 879L339.5 880L340.0 880L340.5 881L341.0 881L341.5 881L342.0 883L342.5 883L343.0 884L343.5 886L344.0 886L344.5 888L345.0 888L345.5 889L346.0 890L346.5 892L347.0 892L347.5 892L348.0 893L348.5 896L349.0 899L349.5 900L350.0 902L350.5 900L351.0 897L351.5 893L352.0 890L352.5 888L353.0 887L353.5 888L354.0 888L354.5 889L355.0 890L355.5 888L356.0 888L356.5 890L357.0 889L357.5 889L358.0 888L358.5 889L359.0 887L359.5 887L360.0 886L360.5 885L361.0 885L361.5 884L362.0 883L362.5 884L363.0 884L363.5 881L364.0 881L364.5 879L365.0 878L365.5 879L366.0 880L366.5 880L367.0 880L367.5 879L368.0 879L368.5 880L369.0 880L369.5 879L370.0 879L370.5 879L371.0 881L371.5 880L372.0 881L372.5 880L373.0 881L373.5 881L374.0 880L374.5 881L375.0 881L375.5 879L376.0 880L376.5 880L377.0 880L377.5 881L378.0 881L378.5 880L379.0 881L379.5 880L380.0 880L380.5 880L381.0 880L381.5 880L382.0 880L382.5 879L383.0 879L383.5 879L384.0 879L384.5 878L385.0 879L385.5 880L386.0 880L386.5 878L387.0 878L387.5 879L388.0 878L388.5 877L389.0 878L389.5 879L390.0 878L390.5 877L391.0 878L391.5 877L392.0 879L392.5 878L393.0 877L393.5 877L394.0 877L394.5 877L395.0 878L395.5 878L396.0 879L396.5 878L397.0 878L397.5 878L398.0 877L398.5 879L399.0 877L399.5 879L400.0 877L400.5 879L401.0 878L401.5 877L402.0 879L402.5 878L403.0 877L403.5 879L404.0 879L404.5 879L405.0 877L405.5 879L406.0 877L406.5 879L407.0 879L407.5 879L408.0 879L408.5 879L409.0 878L409.5 878L410.0 878L410.5 878L411.0 879L411.5 879L412.0 878L412.5 879L413.0 877L413.5 879L414.0 877L414.5 877L415.0 878L415.5 878L416.0 877L416.5 876L417.0 878L417.5 877L418.0 876L418.5 876L419.0 877L419.5 877L420.0 876L420.5 876L421.0 875L421.5 875L422.0 875L422.5 874L423.0 875L423.5 874L424.0 874L424.5 874L425.0 875L425.5 875L426.0 874L426.5 873L427.0 873L427.5 872L428.0 872L428.5 872L429.0 873L429.5 873L430.0 872L430.5 873L431.0 873L431.5 872L432.0 872L432.5 872L433.0 872L433.5 872L434.0 872L434.5 872L435.0 871L435.5 872L436.0 871L436.5 872L437.0 871L437.5 872L438.0 870L438.5 872L439.0 870L439.5 872L440.0 872L440.5 870L441.0 871L441.5 871L442.0 872L442.5 871L443.0 871L443.5 872L444.0 873L444.5 872L445.0 872L445.5 872L446.0 872L446.5 874L447.0 874L447.5 873L448.0 874L448.5 873L449.0 875L449.5 873L450.0 874L450.5 874L451.0 875L451.5 874L452.0 875L452.5 875L453.0 876L453.5 876L454.0 876L454.5 875L455.0 875L455.5 877L456.0 876L456.5 877L457.0 876L457.5 876L458.0 878L458.5 878L459.0 877L459.5 877L460.0 878L460.5 878L461.0 877L461.5 878L462.0 877L462.5 877L463.0 879L463.5 878L464.0 879L464.5 879L465.0 878L465.5 879L466.0 878L466.5 878L467.0 878L467.5 877L468.0 878L468.5 878L469.0 878L469.5 879L470.0 878L470.5 879L471.0 879L471.5 879L472.0 879L472.5 880L473.0 879L473.5 879L474.0 880L474.5 878L475.0 879L475.5 879L476.0 880L476.5 879L477.0 880L477.5 880L478.0 880L478.5 881L479.0 880L479.5 880L480.0 880L480.5 880L481.0 880L481.5 881L482.0 882L482.5 880L483.0 882L483.5 882L484.0 882L484.5 882L485.0 883L485.5 882L486.0 883L486.5 883L487.0 884L487.5 884L488.0 885L488.5 884L489.0 885L489.5 885L490.0 886L490.5 886L491.0 885L491.5 885L492.0 886L492.5 886L493.0 885L493.5 887L494.0 887L494.5 886L495.0 886L495.5 888L496.0 886L496.5 888L497.0 888L497.5 888L498.0 888L498.5 888L499.0 889L499.5 888L500.0 889L500.5 887L501.0 888" fill="none" stroke="#7c3f73" stroke-width="1"/><path d="M271.0 879L271.5 880L272.0 880L272.5 881L273.0 881L273.5 881L274.0 880L274.5 881L275.0 881L275.5 882L276.0 881L276.5 883L277.0 883L277.5 883L278.0 882L278.5 884L279.0 884L279.5 884L280.0 885L280.5 885L281.0 885L281.5 884L282.0 884L282.5 884L283.0 886L283.5 885L284.0 886L284.5 885L285.0 887L285.5 887L286.0 888L286.5 886L287.0 886L287.5 888L288.0 887L288.5 887L289.0 888L289.5 888L290.0 888L290.5 889L291.0 888L291.5 888L292.0 887L292.5 889L293.0 887L293.5 889L294.0 889L294.5 890L295.0 889L295.5 890L296.0 890L296.5 889L297.0 889L297.5 888L298.0 888L298.5 887L299.0 888L299.5 888L300.0 889L300.5 889L301.0 888L301.5 887L302.0 888L302.5 888L303.0 888L303.5 887L304.0 886L304.5 888L305.0 887L305.5 886L306.0 886L306.5 886L307.0 886L307.5 887L308.0 887L308.5 886L309.0 886L309.5 885L310.0 886L310.5 885L311.0 886L311.5 885L312.0 885L312.5 885L313.0 885L313.5 883L314.0 884L314.5 882L315.0 882L315.5 882L316.0 882L316.5 875L317.0 869L317.5 860L318.0 854L318.5 849L319.0 842L319.5 835L320.0 830L320.5 823L321.0 817L321.5 809L322.0 803L322.5 795L323.0 790L323.5 784L324.0 778L324.5 769L325.0 763L325.5 757L326.0 752L326.5 744L327.0 739L327.5 732L328.0 724L328.5 718L329.0 715L329.5 712L330.0 716L330.5 721L331.0 731L331.5 741L332.0 750L332.5 760L333.0 770L333.5 780L334.0 791L334.5 800L335.0 810L335.5 819L336.0 829L336.5 841L337.0 849L337.5 861L338.0 870L338.5 880L339.0 890L339.5 892L340.0 892L340.5 893L341.0 896L341.5 897L342.0 899L342.5 900L343.0 900L343.5 901L344.0 905L344.5 906L345.0 907L345.5 907L346.0 910L346.5 910L347.0 913L347.5 915L348.0 915L348.5 916L349.0 919L349.5 919L350.0 921L350.5 925L351.0 926L351.5 923L352.0 921L352.5 918L353.0 914L353.5 912L354.0 910L354.5 910L355.0 907L355.5 907L356.0 906L356.5 905L357.0 901L357.5 900L358.0 899L358.5 899L359.0 898L359.5 898L360.0 897L360.5 897L361.0 896L361.5 895L362.0 893L362.5 894L363.0 892L363.5 892L364.0 893L364.5 890L365.0 891L365.5 890L366.0 887L366.5 888L367.0 887L367.5 887L368.0 889L368.5 888L369.0 889L369.5 890L370.0 889L370.5 891L371.0 890L371.5 889L372.0 890L372.5 890L373.0 890L373.5 891L374.0 890L374.5 892L375.0 892L375.5 891L376.0 891L376.5 892L377.0 892L377.5 892L378.0 893L378.5 893L379.0 892L379.5 893L380.0 894L380.5 893L381.0 893L381.5 892L382.0 893L382.5 893L383.0 893L383.5 894L384.0 892L384.5 893L385.0 893L385.5 893L386.0 893L386.5 894L387.0 893L387.5 892L388.0 893L388.5 893L389.0 892L389.5 893L390.0 892L390.5 891L391.0 893L391.5 892L392.0 892L392.5 892L393.0 891L393.5 893L394.0 891L394.5 891L395.0 891L395.5 891L396.0 891L396.5 891L397.0 892L397.5 890L398.0 891L398.5 890L399.0 890L399.5 889L400.0 890L400.5 891L401.0 891L401.5 890L402.0 891L402.5 890L403.0 890L403.5 890L404.0 890L404.5 889L405.0 889L405.5 890L406.0 889L406.5 890L407.0 890L407.5 890L408.0 890L408.5 889L409.0 890L409.5 890L410.0 890L410.5 890L411.0 890L411.5 890L412.0 889L412.5 889L413.0 889L413.5 890L414.0 890L414.5 890L415.0 890L415.5 889L416.0 889L416.5 890L417.0 891L417.5 890L418.0 891L418.5 889L419.0 891L419.5 890L420.0 889L420.5 890L421.0 889L421.5 891L422.0 889L422.5 890L423.0 888L423.5 890L424.0 890L424.5 889L425.0 890L425.5 889L426.0 888L426.5 889L427.0 888L427.5 889L428.0 888L428.5 889L429.0 888L429.5 887L430.0 888L430.5 888L431.0 887L431.5 886L432.0 886L432.5 886L433.0 887L433.5 887L434.0 885L434.5 886L435.0 885L435.5 885L436.0 886L436.5 884L437.0 885L437.5 885L438.0 884L438.5 885L439.0 884L439.5 883L440.0 883L440.5 885L441.0 883L441.5 883L442.0 883L442.5 882L443.0 884L443.5 882L444.0 883L444.5 882L445.0 883L445.5 882L446.0 884L446.5 882L447.0 884L447.5 883L448.0 883L448.5 883L449.0 882L449.5 882L450.0 882L450.5 884L451.0 883L451.5 884L452.0 883L452.5 884L453.0 883L453.5 884L454.0 884L454.5 885L455.0 884L455.5 884L456.0 885L456.5 886L457.0 885L457.5 884L458.0 885L458.5 886L459.0 885L459.5 886L460.0 886L460.5 886L461.0 887L461.5 887L462.0 886L462.5 886L463.0 887L463.5 888L464.0 887L464.5 889L465.0 889L465.5 888L466.0 888L466.5 888L467.0 889L467.5 890L468.0 889L468.5 888L469.0 890L469.5 891L470.0 889L470.5 889L471.0 890L471.5 891L472.0 891L472.5 890L473.0 891L473.5 890L474.0 890L474.5 890L475.0 890L475.5 890L476.0 890L476.5 891L477.0 891L477.5 892L478.0 891L478.5 891L479.0 890L479.5 892L480.0 891L480.5 892L481.0 890L481.5 891L482.0 890L482.5 892L483.0 891L483.5 892L484.0 892L484.5 891L485.0 891L485.5 892L486.0 891L486.5 891L487.0 891L487.5 893L488.0 892L488.5 891L489.0 893L489.5 892L490.0 892L490.5 892L491.0 892L491.5 892L492.0 892L492.5 894L493.0 893L493.5 893L494.0 894L494.5 893L495.0 894L495.5 895L496.0 893L496.5 895L497.0 895L497.5 895L498.0 896L498.5 896L499.0 896L499.5 896L500.0 895L500.5 895L501.0 895" fill="none" stroke="#7c3f73" stroke-width="1"/><path d="M271.0 865L271.5 865L272.0 866L272.5 866L273.0 865L273.5 867L274.0 867L274.5 866L275.0 867L275.5 866L276.0 867L276.5 866L277.0 866L277.5 866L278.0 867L278.5 867L279.0 867L279.5 868L280.0 868L280.5 866L281.0 866L281.5 867L282.0 867L282.5 866L283.0 867L283.5 868L284.0 867L284.5 868L285.0 866L285.5 868L286.0 867L286.5 867L287.0 868L287.5 868L288.0 867L288.5 867L289.0 868L289.5 868L290.0 868L290.5 867L291.0 868L291.5 867L292.0 868L292.5 869L293.0 868L293.5 868L294.0 869L294.5 868L295.0 869L295.5 869L296.0 870L296.5 870L297.0 870L297.5 871L298.0 869L298.5 870L299.0 871L299.5 870L300.0 870L300.5 872L301.0 871L301.5 871L302.0 871L302.5 872L303.0 872L303.5 874L304.0 874L304.5 873L305.0 873L305.5 873L306.0 875L306.5 873L307.0 873L307.5 874L308.0 874L308.5 874L309.0 876L309.5 875L310.0 876L310.5 876L311.0 877L311.5 875L312.0 877L312.5 877L313.0 876L313.5 878L314.0 877L314.5 877L315.0 878L315.5 877L316.0 878L316.5 878L317.0 878L317.5 878L318.0 877L318.5 879L319.0 879L319.5 878L320.0 878L320.5 878L321.0 878L321.5 878L322.0 878L322.5 878L323.0 877L323.5 878L324.0 877L324.5 877L325.0 877L325.5 877L326.0 877L326.5 878L327.0 877L327.5 876L328.0 877L328.5 876L329.0 876L329.5 876L330.0 876L330.5 876L331.0 876L331.5 876L332.0 875L332.5 874L333.0 875L333.5 875L334.0 875L334.5 874L335.0 873L335.5 873L336.0 873L336.5 875L337.0 874L337.5 875L338.0 874L338.5 874L339.0 873L339.5 873L340.0 874L340.5 874L341.0 873L341.5 872L342.0 874L342.5 873L343.0 873L343.5 873L344.0 874L344.5 872L345.0 873L345.5 873L346.0 873L346.5 872L347.0 873L347.5 872L348.0 874L348.5 872L349.0 872L349.5 872L350.0 874L350.5 872L351.0 873L351.5 873L352.0 872L352.4 871L352.9 871L353.4 869L353.9 868L354.4 866L354.9 860L355.4 856L355.9 850L356.4 847L356.9 842L357.4 837L357.9 833L358.4 829L358.9 822L359.4 818L359.9 814L360.4 809L360.9 805L361.4 800L361.9 795L362.4 790L362.9 785L363.4 781L363.9 777L364.4 773L364.9 767L365.4 764L365.9 759L366.4 755L366.9 749L367.4 744L367.9 740L368.4 735L368.9 731L369.4 727L369.9 721L370.4 718L370.9 715L371.4 712L371.9 715L372.4 720L372.9 726L373.4 733L373.9 740L374.4 747L374.9 753L375.4 759L375.9 765L376.4 771L376.9 778L377.4 786L377.9 791L378.4 799L378.9 805L379.4 810L379.9 819L380.4 825L380.9 830L381.4 838L381.9 844L382.4 850L382.9 857L383.4 863L383.9 870L384.4 873L384.9 875L385.4 877L385.9 878L386.4 880L386.9 881L387.4 884L387.9 885L388.4 887L388.9 888L389.4 891L389.9 893L390.4 894L390.9 895L391.4 897L391.9 899L392.4 900L392.9 902L393.4 905L393.9 907L394.4 910L394.9 907L395.4 903L395.9 901L396.4 898L396.9 894L397.4 894L397.9 893L398.4 893L398.9 891L399.4 890L399.9 889L400.4 889L400.9 888L401.4 887L401.9 887L402.4 887L402.9 886L403.4 884L403.9 884L404.4 884L404.9 882L405.4 881L405.9 881L406.4 881L406.9 880L407.4 879L407.9 878L408.4 877L408.9 877L409.4 874L409.9 875L410.4 874L410.9 875L411.4 874L411.9 875L412.4 875L412.9 875L413.4 874L413.9 874L414.4 874L414.9 874L415.4 874L415.9 875L416.4 875L416.9 873L417.4 874L417.9 874L418.4 875L418.9 873L419.4 874L419.9 873L420.4 875L420.9 874L421.4 874L421.9 873L422.4 873L422.9 874L423.4 873L423.9 873L424.4 873L424.9 873L425.4 874L425.9 874L426.4 873L426.9 874L427.4 873L427.9 874L428.4 875L428.9 874L429.4 875L429.9 874L430.4 875L430.9 875L431.4 874L431.9 874L432.4 875L432.9 874L433.4 875L433.9 875L434.4 874L434.9 875L435.4 876L435.9 876L436.4 876L436.9 876L437.4 876L437.9 875L438.4 877L438.9 877L439.4 877L439.9 877L440.4 877L440.9 876L441.4 876L441.9 876L442.4 877L442.9 877L443.4 877L443.9 877L444.4 877L444.9 876L445.4 876L445.9 877L446.4 877L446.9 876L447.4 877L447.9 877L448.4 876L448.9 878L449.4 877L449.9 877L450.4 875L450.9 877L451.4 877L451.9 875L452.4 877L452.9 875L453.4 876L453.9 875L454.4 876L454.9 875L455.4 876L455.9 875L456.4 874L456.9 875L457.4 874L457.9 874L458.4 874L458.9 873L459.4 874L459.9 874L460.4 873L460.9 874L461.4 874L461.9 872L462.4 873L462.9 873L463.4 872L463.9 872L464.4 872L464.9 873L465.4 871L465.9 872L466.4 872L466.9 871L467.4 872L467.9 872L468.4 872L468.9 871L469.4 872L469.9 871L470.4 871L470.9 873L471.4 872L471.9 872L472.4 872L472.9 871L473.4 871L473.9 871L474.4 871L474.9 872L475.4 873L475.9 873L476.4 872L476.9 872L477.4 871L477.9 873L478.4 874L478.9 874L479.4 874L479.9 874L480.4 874L480.9 874L481.4 873L481.9 874L482.4 875L482.9 874L483.4 874L483.9 876L484.4 875L484.9 876L485.4 876L485.9 877L486.4 875L486.9 876L487.4 877L487.9 877L488.4 877L488.9 878L489.4 877L489.9 878L490.4 878L490.9 878L491.4 878L491.9 877L492.4 878L492.9 878L493.4 879L493.9 879L494.4 879L494.9 878L495.4 879L495.9 878L496.4 879L496.9 880L497.4 879L497.9 879L498.4 879L498.9 878L499.4 880L499.9 879L500.5 881L501.0 879" fill="none" stroke="#7c3f73" stroke-width="1"/><path d="M271.0 871L271.5 870L272.0 871L272.5 870L273.0 870L273.5 871L274.0 870L274.5 871L275.0 868L275.5 869L276.0 868L276.5 870L277.0 868L277.5 869L278.0 868L278.5 870L279.0 869L279.5 869L280.0 868L280.5 868L281.0 868L281.5 869L282.0 869L282.5 869L283.0 868L283.5 868L284.0 869L284.5 869L285.0 869L285.5 868L286.0 868L286.5 869L287.0 868L287.5 869L288.0 869L288.5 868L289.0 869L289.5 870L290.0 869L290.5 870L291.0 869L291.5 871L292.0 870L292.5 870L293.0 870L293.5 871L294.0 870L294.5 872L295.0 872L295.5 871L296.0 871L296.5 873L297.0 873L297.5 873L298.0 874L298.5 873L299.0 875L299.5 874L300.0 873L300.5 873L301.0 874L301.5 874L302.0 875L302.5 876L303.0 875L303.5 876L304.0 875L304.5 876L305.0 877L305.5 877L306.0 876L306.5 876L307.0 877L307.5 876L308.0 877L308.5 878L309.0 878L309.5 879L310.0 877L310.5 878L311.0 878L311.5 877L312.0 877L312.5 877L313.0 877L313.5 878L314.0 878L314.5 877L315.0 879L315.5 879L316.0 878L316.5 877L317.0 878L317.5 879L318.0 879L318.5 879L319.0 878L319.5 879L320.0 877L320.5 878L321.0 877L321.5 879L322.0 877L322.5 879L323.0 879L323.5 877L324.0 878L324.5 878L325.0 878L325.5 878L326.0 877L326.5 879L327.0 877L327.5 877L328.0 878L328.5 878L329.0 877L329.5 877L330.0 879L330.5 877L331.0 878L331.5 879L332.0 879L332.5 877L333.0 879L333.5 879L334.0 879L334.5 879L335.0 878L335.5 878L336.0 879L336.5 879L337.0 880L337.5 879L338.0 879L338.5 880L339.0 880L339.5 880L340.0 881L340.5 880L341.0 880L341.5 880L342.0 880L342.5 881L343.0 881L343.5 880L344.0 881L344.5 881L345.0 881L345.5 881L346.0 882L346.5 881L347.0 881L347.5 883L348.0 882L348.5 883L349.0 881L349.5 880L350.0 880L350.5 879L351.0 877L351.5 874L352.0 868L352.5 864L353.0 859L353.5 853L354.0 849L354.5 845L355.0 839L355.5 835L356.0 830L356.5 825L357.0 819L357.5 815L358.0 811L358.5 806L359.0 801L359.5 795L360.0 792L360.5 786L361.0 781L361.5 777L362.0 772L362.5 767L363.0 762L363.5 757L364.0 754L364.5 749L365.0 745L365.5 739L366.0 733L366.5 729L367.0 724L367.5 720L368.0 717L368.5 714L369.0 717L369.5 721L370.0 729L370.5 736L371.0 742L371.5 750L372.0 757L372.5 763L373.0 770L373.5 777L374.0 784L374.5 791L375.0 798L375.5 806L376.0 812L376.5 819L377.0 828L377.5 834L378.0 840L378.5 848L379.0 855L379.5 862L380.0 869L380.5 876L381.0 882L381.5 884L382.0 886L382.5 888L383.0 889L383.5 892L384.0 893L384.5 894L385.0 896L385.5 897L386.0 899L386.5 902L387.0 905L387.5 905L388.0 907L388.5 909L389.0 910L389.5 913L390.0 913L390.5 917L391.0 919L391.5 921L392.0 917L392.5 916L393.0 911L393.5 909L394.0 907L394.5 905L395.0 905L395.5 905L396.0 904L396.5 904L397.0 903L397.5 902L398.0 901L398.5 900L399.0 901L399.5 899L400.0 899L400.5 897L401.0 898L401.5 897L402.0 896L402.5 895L403.0 895L403.5 895L404.0 894L404.5 892L405.0 891L405.5 891L406.0 890L406.5 887L407.0 888L407.5 887L408.0 888L408.5 888L409.0 888L409.5 888L410.0 888L410.5 888L411.0 890L411.5 889L412.0 889L412.5 888L413.0 888L413.5 889L414.0 889L414.5 889L415.0 888L415.5 888L416.0 889L416.5 890L417.0 890L417.5 890L418.0 890L418.5 889L419.0 891L419.5 891L420.0 890L420.5 891L421.0 891L421.5 890L422.0 891L422.5 892L423.0 892L423.5 893L424.0 893L424.5 893L425.0 893L425.5 893L426.0 893L426.5 893L427.0 894L427.5 893L428.0 893L428.5 893L429.0 893L429.5 895L430.0 894L430.5 894L431.0 895L431.5 894L432.0 896L432.5 897L433.0 895L433.5 895L434.0 895L434.5 896L435.0 897L435.5 897L436.0 897L436.5 897L437.0 895L437.5 896L438.0 896L438.5 896L439.0 898L439.5 897L440.0 897L440.5 896L441.0 897L441.5 897L442.0 896L442.5 897L443.0 895L443.5 897L444.0 896L444.5 896L445.0 896L445.5 896L446.0 896L446.5 896L447.0 894L447.5 894L448.0 894L448.5 894L449.0 895L449.5 894L450.0 894L450.5 895L451.0 894L451.5 893L452.0 895L452.5 894L453.0 894L453.5 893L454.0 893L454.5 892L455.0 893L455.5 893L456.0 893L456.5 892L457.0 891L457.5 892L458.0 892L458.5 891L459.0 891L459.5 891L460.0 890L460.5 890L461.0 890L461.5 891L462.0 891L462.5 891L463.0 890L463.5 891L464.0 889L464.5 891L465.0 889L465.5 891L466.0 890L466.5 891L467.0 890L467.5 889L468.0 890L468.5 891L469.0 890L469.5 889L470.0 890L470.5 890L471.0 889L471.5 889L472.0 890L472.5 889L473.0 890L473.5 889L474.0 890L474.5 891L475.0 889L475.5 890L476.0 890L476.5 891L477.0 890L477.5 891L478.0 891L478.5 891L479.0 890L479.5 890L480.0 891L480.5 891L481.0 890L481.5 890L482.0 890L482.5 891L483.0 891L483.5 890L484.0 891L484.5 890L485.0 891L485.5 890L486.0 889L486.5 890L487.0 891L487.5 889L488.0 890L488.5 890L489.0 889L489.5 890L490.0 890L490.5 888L491.0 889L491.5 889L492.0 889L492.5 889L493.0 888L493.5 890L494.0 888L494.5 888L495.0 890L495.5 889L496.0 889L496.5 889L497.0 888L497.5 888L498.0 889L498.5 888L499.0 887L499.5 887L500.0 888L500.5 887L501.0 888" fill="none" stroke="#7c3f73" stroke-width="1"/><path d="M271.0 869L271.5 869L272.0 869L272.5 868L273.0 868L273.5 869L274.0 870L274.5 870L275.0 869L275.5 870L276.0 869L276.5 869L277.0 869L277.5 871L278.0 869L278.5 870L279.0 871L279.5 870L280.0 870L280.5 871L281.0 871L281.5 870L282.0 872L282.5 870L283.0 870L283.5 871L284.0 871L284.5 873L285.0 872L285.5 873L286.0 872L286.5 873L287.0 873L287.5 873L288.0 873L288.5 874L289.0 874L289.5 874L290.0 875L290.5 874L291.0 875L291.5 873L292.0 873L292.5 875L293.0 875L293.5 874L294.0 875L294.5 874L295.0 874L295.5 875L296.0 875L296.5 876L297.0 875L297.5 876L298.0 875L298.5 876L299.0 875L299.5 875L300.0 874L300.5 876L301.0 875L301.5 875L302.0 875L302.5 875L303.0 874L303.5 875L304.0 874L304.5 874L305.0 875L305.5 873L306.0 874L306.5 873L307.0 874L307.5 874L308.0 874L308.5 874L309.0 873L309.5 872L310.0 873L310.5 872L311.0 872L311.5 873L312.0 872L312.5 872L313.0 871L313.5 871L314.0 870L314.5 870L315.0 871L315.5 871L316.0 871L316.5 870L317.0 869L317.5 871L318.0 870L318.5 869L319.0 869L319.5 869L320.0 869L320.5 870L321.0 870L321.5 870L322.0 870L322.5 869L323.0 869L323.5 869L324.0 868L324.5 868L325.0 869L325.5 869L326.0 869L326.5 869L327.0 868L327.5 869L328.0 868L328.5 869L329.0 868L329.5 869L330.0 869L330.5 870L331.0 870L331.5 870L332.0 869L332.5 869L333.0 869L333.5 868L334.0 870L334.5 869L335.0 869L335.5 871L336.0 869L336.5 870L337.0 871L337.5 871L338.0 869L338.5 869L339.0 871L339.5 870L340.0 869L340.5 870L341.0 870L341.5 871L342.0 870L342.5 871L343.0 871L343.5 871L344.0 871L344.5 871L345.0 870L345.5 870L346.0 871L346.5 871L347.0 871L347.5 871L348.0 871L348.5 870L349.0 871L349.5 870L350.0 870L350.5 871L351.0 870L351.5 870L352.0 869L352.5 871L353.0 870L353.6 870L354.1 869L354.7 866L355.2 867L355.7 861L356.2 857L356.7 853L357.2 848L357.7 844L358.2 841L358.7 835L359.2 830L359.7 828L360.2 824L360.7 818L361.2 814L361.7 810L362.2 806L362.7 801L363.2 796L363.7 792L364.2 788L364.7 785L365.2 781L365.7 775L366.2 771L366.7 767L367.2 763L367.7 758L368.2 755L368.7 749L369.2 745L369.7 741L370.2 737L370.7 732L371.2 729L371.7 725L372.2 722L372.7 718L373.2 723L373.7 727L374.2 734L374.7 741L375.2 745L375.7 752L376.2 760L376.7 767L377.2 772L377.7 779L378.2 786L378.7 793L379.2 799L379.7 806L380.2 813L380.7 818L381.2 825L381.7 832L382.2 839L382.7 845L383.2 852L383.7 858L384.2 864L384.7 871L385.2 878L385.7 881L386.2 882L386.7 885L387.2 888L387.7 891L388.2 893L388.7 896L389.2 898L389.7 900L390.2 902L390.7 905L391.2 906L391.7 911L392.2 912L392.7 914L393.2 916L393.7 919L394.2 921L394.7 922L395.2 927L395.7 927L396.2 926L396.7 922L397.2 920L397.7 917L398.2 913L398.7 910L399.2 907L399.7 904L400.2 902L400.7 898L401.2 896L401.7 893L402.2 891L402.7 888L403.2 886L403.7 885L404.2 884L404.7 884L405.2 883L405.7 881L406.2 882L406.7 880L407.2 879L407.7 878L408.2 878L408.7 877L409.2 875L409.7 874L410.2 873L410.7 871L411.2 872L411.7 870L412.2 872L412.7 872L413.2 870L413.7 871L414.2 872L414.7 871L415.2 872L415.7 871L416.2 870L416.7 872L417.2 871L417.7 872L418.2 872L418.7 872L419.2 872L419.7 871L420.2 871L420.7 872L421.2 870L421.7 871L422.2 870L422.7 871L423.2 871L423.7 872L424.2 871L424.7 872L425.2 871L425.7 872L426.2 871L426.7 872L427.2 871L427.7 872L428.2 872L428.7 873L429.2 872L429.7 872L430.2 872L430.7 871L431.2 872L431.7 872L432.2 872L432.7 871L433.2 872L433.7 872L434.2 872L434.7 872L435.2 871L435.7 870L436.2 872L436.7 871L437.2 871L437.7 870L438.2 871L438.7 870L439.2 870L439.7 869L440.2 870L440.7 870L441.2 870L441.7 871L442.2 869L442.7 870L443.2 870L443.7 870L444.2 869L444.7 868L445.2 868L445.7 869L446.2 868L446.7 868L447.2 870L447.7 868L448.2 869L448.7 868L449.2 868L449.7 868L450.2 869L450.7 869L451.2 868L451.7 869L452.2 869L452.7 868L453.2 868L453.7 868L454.2 870L454.7 870L455.2 870L455.7 870L456.2 870L456.7 870L457.2 870L457.7 870L458.2 870L458.7 871L459.2 871L459.7 870L460.2 871L460.7 871L461.2 872L461.7 872L462.2 873L462.7 872L463.2 873L463.7 873L464.2 873L464.7 874L465.2 874L465.7 874L466.2 874L466.7 874L467.2 874L467.7 874L468.2 875L468.7 876L469.2 877L469.7 876L470.2 877L470.7 877L471.2 877L471.7 878L472.2 878L472.7 877L473.2 879L473.7 878L474.2 878L474.7 878L475.2 879L475.7 880L476.2 879L476.7 880L477.2 880L477.7 879L478.2 880L478.7 880L479.2 880L479.7 879L480.2 881L480.7 879L481.2 881L481.7 881L482.2 880L482.7 880L483.2 881L483.7 881L484.2 880L484.7 882L485.2 882L485.7 881L486.2 880L486.7 880L487.2 882L487.7 882L488.2 880L488.7 881L489.2 881L489.7 881L490.2 880L490.7 882L491.2 881L491.7 882L492.2 883L492.7 881L493.2 883L493.7 882L494.2 882L494.7 882L495.2 882L495.7 882L496.2 882L496.7 882L497.2 882L497.7 883L498.2 882L498.7 882L499.2 882L499.7 882L500.2 884L500.7 882L501.0 884" fill="none" stroke="#7c3f73" stroke-width="1"/><path d="M271.0 878L271.5 877L272.0 876L272.5 877L273.0 877L273.5 878L274.0 878L274.5 877L275.0 877L275.5 878L276.0 877L276.5 877L277.0 877L277.5 877L278.0 877L278.5 875L279.0 877L279.5 877L280.0 875L280.5 876L281.0 876L281.5 876L282.0 875L282.5 876L283.0 876L283.5 876L284.0 875L284.5 875L285.0 874L285.5 874L286.0 875L286.5 874L287.0 872L287.5 873L288.0 874L288.5 873L289.0 873L289.5 873L290.0 872L290.5 873L291.0 871L291.5 872L292.0 871L292.5 872L293.0 871L293.5 870L294.0 872L294.5 870L295.0 870L295.5 870L296.0 870L296.5 869L297.0 871L297.5 869L298.0 870L298.5 870L299.0 869L299.5 870L300.0 869L300.5 869L301.0 869L301.5 869L302.0 871L302.5 870L303.0 870L303.5 871L304.0 871L304.5 870L305.0 870L305.5 870L306.0 871L306.5 871L307.0 870L307.5 871L308.0 870L308.5 870L309.0 871L309.5 872L310.0 871L310.5 871L311.0 872L311.5 872L312.0 871L312.5 872L313.0 873L313.5 873L314.0 873L314.5 873L315.0 872L315.5 873L316.0 872L316.5 873L317.0 874L317.5 873L318.0 873L318.5 874L319.0 873L319.5 874L320.0 873L320.5 874L321.0 874L321.5 873L322.0 873L322.5 873L323.0 874L323.5 873L324.0 873L324.5 873L325.0 874L325.5 874L326.0 873L326.5 874L327.0 875L327.5 874L328.0 873L328.5 873L329.0 873L329.5 872L330.0 873L330.5 874L331.0 873L331.5 873L332.0 873L332.5 873L333.0 873L333.5 874L334.0 873L334.5 874L335.0 872L335.5 872L336.0 873L336.5 873L337.0 874L337.5 872L338.0 874L338.5 873L339.0 874L339.5 873L340.0 874L340.5 873L341.0 873L341.5 873L342.0 874L342.5 873L343.0 873L343.5 873L344.0 874L344.5 874L345.0 875L345.5 873L346.0 874L346.5 873L347.0 875L347.5 874L348.0 874L348.5 875L349.0 876L349.5 875L350.0 875L350.5 876L351.0 875L351.4 874L351.9 874L352.3 872L352.8 872L353.3 867L353.8 864L354.3 859L354.8 854L355.3 849L355.8 844L356.3 840L356.8 836L357.3 830L357.8 826L358.3 822L358.8 816L359.3 812L359.8 808L360.3 802L360.8 799L361.3 794L361.8 789L362.3 785L362.8 781L363.3 776L363.8 770L364.3 766L364.8 761L365.3 757L365.8 752L366.3 748L366.8 743L367.3 739L367.8 734L368.3 730L368.8 724L369.3 721L369.8 718L370.3 713L370.8 717L371.3 721L371.8 729L372.3 736L372.8 743L373.3 748L373.8 755L374.3 762L374.8 769L375.3 775L375.8 783L376.3 788L376.8 796L377.3 803L377.8 810L378.3 817L378.8 822L379.3 830L379.8 835L380.3 844L380.8 850L381.3 856L381.8 863L382.3 870L382.8 876L383.3 879L383.8 879L384.3 882L384.8 883L385.3 885L385.8 887L386.3 888L386.8 889L387.3 891L387.8 894L388.3 894L388.8 898L389.3 897L389.8 900L390.3 901L390.8 904L391.3 904L391.8 906L392.3 910L392.8 912L393.3 913L393.8 910L394.3 907L394.8 906L395.3 901L395.8 899L396.3 899L396.8 896L397.3 895L397.8 892L398.3 891L398.8 890L399.3 890L399.8 887L400.3 887L400.8 885L401.3 884L401.8 884L402.3 883L402.8 883L403.3 883L403.8 881L404.3 882L404.8 881L405.3 880L405.8 880L406.3 878L406.8 877L407.3 876L407.8 875L408.3 874L408.8 874L409.3 873L409.8 874L410.3 873L410.8 875L411.3 873L411.8 874L412.3 873L412.8 873L413.3 872L413.8 873L414.3 873L414.8 874L415.3 874L415.8 874L416.3 873L416.8 874L417.3 874L417.8 872L418.3 874L418.8 874L419.3 872L419.8 873L420.3 872L420.8 872L421.3 872L421.8 873L422.3 873L422.8 873L423.3 872L423.8 873L424.3 873L424.8 872L425.3 874L425.8 872L426.3 872L426.8 874L427.3 872L427.8 872L428.3 873L428.8 872L429.3 873L429.8 873L430.3 874L430.8 874L431.3 873L431.8 873L432.3 874L432.8 874L433.3 875L433.8 875L434.3 875L434.8 876L435.3 876L435.8 877L436.3 875L436.8 875L437.3 877L437.8 877L438.3 878L438.8 876L439.3 877L439.8 878L440.3 879L440.8 879L441.3 879L441.8 878L442.3 879L442.8 880L443.3 880L443.8 881L444.3 880L444.8 880L445.3 882L445.8 882L446.3 881L446.8 882L447.3 883L447.8 882L448.3 882L448.8 884L449.3 884L449.8 883L450.3 883L450.8 885L451.3 884L451.8 885L452.3 885L452.8 885L453.3 885L453.8 885L454.3 886L454.8 885L455.3 885L455.8 886L456.3 886L456.8 886L457.3 886L457.8 885L458.3 886L458.8 886L459.3 886L459.8 885L460.3 887L460.8 886L461.3 887L461.8 887L462.3 887L462.8 886L463.3 885L463.8 886L464.3 886L464.8 887L465.3 887L465.8 886L466.3 886L466.8 887L467.3 885L467.8 886L468.3 887L468.8 886L469.3 886L469.8 887L470.3 885L470.8 886L471.3 886L471.8 886L472.3 887L472.8 887L473.3 886L473.8 886L474.3 887L474.8 887L475.3 886L475.8 885L476.3 887L476.8 887L477.3 886L477.8 888L478.3 886L478.8 887L479.3 887L479.8 887L480.3 887L480.8 886L481.3 886L481.8 888L482.3 889L482.8 888L483.3 888L483.8 888L484.3 888L484.8 889L485.3 887L485.8 888L486.3 889L486.8 888L487.3 888L487.8 889L488.3 888L488.8 890L489.3 888L489.8 888L490.3 888L490.8 889L491.3 890L491.8 889L492.3 890L492.8 889L493.3 889L493.8 890L494.3 890L494.8 890L495.3 889L495.8 889L496.3 890L496.8 890L497.3 889L497.8 890L498.3 890L498.8 889L499.3 890L499.8 889L500.3 890L501.0 889" fill="none" stroke="#7c3f73" stroke-width="1"/><path d="M271.0 878L271.5 877L272.0 878L272.5 878L273.0 878L273.5 879L274.0 879L274.5 879L275.0 878L275.5 880L276.0 879L276.5 878L277.0 880L277.5 879L278.0 880L278.5 880L279.0 879L279.5 880L280.0 880L280.5 881L281.0 880L281.5 881L282.0 882L282.5 882L283.0 882L283.5 881L284.0 884L284.5 883L285.0 883L285.5 884L286.0 884L286.5 884L287.0 884L287.5 884L288.0 884L288.5 886L289.0 886L289.5 886L290.0 887L290.5 886L291.0 887L291.5 887L292.0 887L292.5 886L293.0 888L293.5 887L294.0 888L294.5 888L295.0 888L295.5 890L296.0 889L296.5 890L297.0 890L297.5 888L298.0 889L298.5 890L299.0 890L299.5 890L300.0 889L300.5 889L301.0 891L301.5 890L302.0 889L302.5 889L303.0 889L303.5 890L304.0 891L304.5 889L305.0 890L305.5 890L306.0 891L306.5 891L307.0 891L307.5 889L308.0 890L308.5 889L309.0 890L309.5 890L310.0 888L310.5 889L311.0 889L311.5 889L312.0 889L312.5 890L313.0 889L313.5 890L314.0 888L314.5 889L315.0 888L315.5 889L316.0 889L316.5 888L317.0 887L317.5 889L318.0 889L318.5 889L319.0 887L319.5 889L320.0 887L320.5 888L321.0 887L321.5 888L322.0 889L322.5 888L323.0 887L323.5 888L324.0 888L324.5 889L325.0 887L325.5 888L326.0 889L326.5 888L327.0 888L327.5 889L328.0 888L328.5 888L329.0 888L329.5 888L330.0 888L330.5 889L331.0 889L331.5 889L332.0 888L332.5 889L333.0 889L333.5 888L334.0 888L334.5 888L335.0 889L335.5 890L336.0 888L336.5 888L337.0 890L337.5 888L338.0 889L338.5 888L339.0 888L339.5 887L340.0 888L340.5 889L341.0 887L341.5 888L342.0 888L342.5 887L343.0 887L343.5 887L344.0 887L344.5 887L345.0 886L345.5 886L346.0 887L346.5 887L347.0 886L347.5 887L348.0 886L348.5 885L349.0 886L349.5 885L350.0 885L350.5 887L351.0 886L351.5 883L352.1 883L352.6 881L353.1 877L353.6 871L354.1 868L354.6 863L355.1 857L355.6 853L356.1 849L356.6 843L357.1 838L357.6 835L358.1 830L358.6 824L359.1 819L359.6 815L360.1 810L360.6 805L361.1 802L361.6 797L362.1 791L362.6 786L363.1 783L363.6 777L364.1 774L364.6 769L365.1 764L365.6 759L366.1 753L366.6 749L367.1 745L367.6 740L368.1 736L368.6 732L369.1 726L369.6 723L370.1 720L370.6 723L371.1 728L371.6 734L372.1 743L372.6 749L373.1 755L373.6 763L374.1 770L374.6 776L375.1 783L375.6 790L376.1 798L376.6 805L377.1 811L377.6 818L378.1 826L378.6 834L379.1 839L379.6 847L380.1 854L380.6 860L381.1 869L381.6 875L382.1 882L382.6 889L383.1 890L383.6 893L384.1 894L384.6 896L385.1 898L385.6 898L386.1 901L386.6 903L387.1 903L387.6 906L388.1 907L388.6 909L389.1 911L389.6 913L390.1 912L390.6 916L391.1 918L391.6 919L392.1 920L392.6 922L393.1 926L393.6 923L394.1 920L394.6 915L395.1 912L395.6 910L396.1 909L396.6 909L397.1 908L397.6 905L398.1 906L398.6 905L399.1 902L399.6 902L400.1 901L400.6 900L401.1 900L401.6 899L402.1 898L402.6 897L403.1 898L403.6 896L404.1 896L404.6 894L405.1 895L405.6 892L406.1 893L406.6 891L407.1 890L407.6 889L408.1 887L408.6 888L409.1 888L409.6 888L410.1 887L410.6 888L411.1 887L411.6 887L412.1 889L412.6 888L413.1 889L413.6 888L414.1 889L414.6 888L415.1 888L415.6 889L416.1 889L416.6 888L417.1 890L417.6 888L418.1 890L418.6 890L419.1 889L419.6 889L420.1 889L420.6 891L421.1 889L421.6 889L422.1 889L422.6 891L423.1 890L423.6 890L424.1 891L424.6 891L425.1 889L425.6 891L426.1 892L426.6 891L427.1 891L427.6 891L428.1 890L428.6 890L429.1 890L429.6 890L430.1 890L430.6 890L431.1 891L431.6 890L432.1 891L432.6 891L433.1 889L433.6 890L434.1 889L434.6 890L435.1 889L435.6 888L436.1 889L436.6 889L437.1 890L437.6 888L438.1 888L438.6 888L439.1 888L439.6 889L440.1 887L440.6 887L441.1 887L441.6 886L442.1 887L442.6 887L443.1 886L443.6 886L444.1 887L444.6 885L445.1 886L445.6 885L446.1 885L446.6 886L447.1 885L447.6 884L448.1 886L448.6 886L449.1 884L449.6 885L450.1 884L450.6 884L451.1 885L451.6 885L452.1 885L452.6 884L453.1 884L453.6 883L454.1 884L454.6 884L455.1 883L455.6 884L456.1 884L456.6 885L457.1 885L457.6 884L458.1 885L458.6 884L459.1 885L459.6 886L460.1 885L460.6 886L461.1 885L461.6 886L462.1 886L462.6 885L463.1 887L463.6 886L464.1 886L464.6 887L465.1 886L465.6 887L466.1 887L466.6 886L467.1 887L467.6 887L468.1 888L468.6 888L469.1 888L469.6 888L470.1 888L470.6 888L471.1 888L471.6 887L472.1 888L472.6 889L473.1 889L473.6 889L474.1 889L474.6 889L475.1 889L475.6 888L476.1 889L476.6 888L477.1 890L477.6 889L478.1 889L478.6 889L479.1 890L479.6 889L480.1 890L480.6 889L481.1 889L481.6 890L482.1 889L482.6 890L483.1 890L483.6 889L484.1 890L484.6 890L485.1 891L485.6 891L486.1 890L486.6 890L487.1 891L487.6 890L488.1 890L488.6 891L489.1 891L489.6 891L490.1 891L490.6 891L491.1 891L491.6 890L492.1 890L492.6 891L493.1 892L493.6 892L494.1 890L494.6 891L495.1 891L495.6 891L496.1 892L496.6 892L497.1 892L497.6 893L498.1 892L498.6 893L499.1 894L499.6 893L500.1 895L500.6 894L501.0 893" fill="none" stroke="#7c3f73" stroke-width="1"/><path d="M271.0 872L271.5 872L272.0 873L272.5 872L273.0 873L273.5 874L274.0 875L274.5 874L275.0 874L275.5 873L276.0 873L276.5 875L277.0 875L277.5 873L278.0 875L278.5 874L279.0 874L279.5 875L280.0 874L280.5 875L281.0 874L281.5 874L282.0 874L282.5 875L283.0 874L283.5 875L284.0 875L284.5 875L285.0 875L285.5 874L286.0 874L286.5 874L287.0 875L287.5 876L288.0 875L288.5 875L289.0 874L289.5 875L290.0 873L290.5 875L291.0 874L291.5 874L292.0 875L292.5 873L293.0 875L293.5 875L294.0 875L294.5 875L295.0 874L295.5 874L296.0 874L296.5 873L297.0 875L297.5 874L298.0 874L298.5 875L299.0 875L299.5 874L300.0 875L300.5 875L301.0 874L301.5 876L302.0 876L302.5 875L303.0 875L303.5 876L304.0 876L304.5 875L305.0 876L305.5 877L306.0 875L306.5 877L307.0 875L307.5 877L308.0 876L308.5 877L309.0 876L309.5 878L310.0 877L310.5 876L311.0 876L311.5 876L312.0 877L312.5 878L313.0 878L313.5 877L314.0 878L314.5 877L315.0 877L315.5 878L316.0 878L316.5 878L317.0 877L317.5 877L318.0 877L318.5 878L319.0 877L319.5 877L320.0 879L320.5 878L321.0 877L321.5 877L322.0 877L322.5 878L323.0 877L323.5 878L324.0 876L324.5 878L325.0 876L325.5 877L326.0 876L326.5 877L327.0 877L327.5 876L328.0 877L328.5 875L329.0 876L329.5 876L330.0 876L330.5 875L331.0 874L331.5 876L332.0 876L332.5 875L333.0 875L333.5 875L334.0 874L334.5 876L335.0 875L335.5 874L336.0 875L336.5 875L337.0 874L337.5 874L338.0 876L338.5 874L339.0 874L339.5 874L340.0 874L340.5 874L341.0 875L341.5 874L342.0 876L342.5 875L343.0 876L343.5 875L344.0 876L344.5 876L345.0 875L345.5 877L346.0 877L346.5 876L347.0 876L347.5 876L348.0 877L348.5 878L349.0 877L349.5 877L350.0 878L350.5 877L351.0 877L351.5 879L352.0 879L352.5 879L353.0 880L353.5 878L354.0 879L354.4 877L354.9 877L355.4 871L355.9 866L356.4 861L356.9 858L357.4 853L357.9 848L358.4 844L358.9 839L359.4 835L359.9 830L360.4 824L360.9 819L361.4 816L361.9 810L362.4 807L362.9 801L363.4 797L363.9 791L364.4 787L364.9 782L365.4 778L365.9 774L366.4 768L366.9 763L367.4 758L367.9 755L368.4 749L368.9 745L369.4 740L369.9 736L370.4 731L370.9 726L371.4 721L371.9 718L372.4 716L372.9 720L373.4 724L373.9 732L374.4 739L374.9 746L375.4 752L375.9 760L376.4 767L376.9 773L377.4 780L377.9 790L378.4 796L378.9 804L379.4 810L379.9 818L380.4 824L380.9 832L381.4 838L381.9 846L382.4 854L382.9 860L383.4 867L383.9 876L384.4 881L384.9 890L385.4 891L385.9 890L386.4 892L386.9 891L387.4 892L387.9 892L388.4 893L388.9 894L389.4 896L389.9 895L390.4 896L390.9 896L391.4 896L391.9 897L392.4 899L392.9 899L393.4 898L393.9 901L394.4 903L394.9 906L395.4 907L395.9 904L396.4 901L396.9 899L397.4 896L397.9 894L398.4 895L398.9 895L399.4 898L399.9 900L400.4 900L400.9 901L401.4 904L401.9 904L402.4 906L402.9 906L403.4 905L403.9 904L404.4 902L404.9 901L405.4 900L405.9 902L406.4 900L406.9 898L407.4 899L407.9 897L408.4 897L408.9 895L409.4 895L409.9 894L410.4 891L410.9 891L411.4 892L411.9 890L412.4 891L412.9 891L413.4 891L413.9 890L414.4 890L414.9 891L415.4 890L415.9 889L416.4 889L416.9 888L417.4 890L417.9 889L418.4 888L418.9 888L419.4 888L419.9 889L420.4 887L420.9 888L421.4 888L421.9 887L422.4 886L422.9 887L423.4 886L423.9 887L424.4 886L424.9 886L425.4 886L425.9 887L426.4 886L426.9 886L427.4 886L427.9 885L428.4 886L428.9 885L429.4 885L429.9 885L430.4 884L430.9 884L431.4 886L431.9 884L432.4 885L432.9 884L433.4 884L433.9 885L434.4 883L434.9 885L435.4 883L435.9 885L436.4 884L436.9 885L437.4 884L437.9 884L438.4 884L438.9 885L439.4 885L439.9 884L440.4 886L440.9 885L441.4 885L441.9 885L442.4 886L442.9 885L443.4 884L443.9 885L444.4 886L444.9 885L445.4 886L445.9 886L446.4 886L446.9 885L447.4 884L447.9 884L448.4 886L448.9 885L449.4 885L449.9 884L450.4 886L450.9 886L451.4 885L451.9 885L452.4 885L452.9 885L453.4 886L453.9 884L454.4 885L454.9 884L455.4 884L455.9 885L456.4 884L456.9 885L457.4 884L457.9 885L458.4 885L458.9 883L459.4 885L459.9 884L460.4 885L460.9 885L461.4 885L461.9 883L462.4 884L462.9 885L463.4 883L463.9 883L464.4 883L464.9 882L465.4 882L465.9 883L466.4 882L466.9 882L467.4 883L467.9 884L468.4 884L468.9 884L469.4 883L469.9 884L470.4 883L470.9 884L471.4 883L471.9 884L472.4 884L472.9 884L473.4 885L473.9 884L474.4 884L474.9 884L475.4 884L475.9 885L476.4 883L476.9 885L477.4 884L477.9 884L478.4 886L478.9 885L479.4 885L479.9 886L480.4 885L480.9 886L481.4 886L481.9 885L482.4 888L482.9 886L483.4 888L483.9 888L484.4 888L484.9 888L485.4 888L485.9 889L486.4 889L486.9 888L487.4 888L487.9 888L488.4 890L488.9 888L489.4 889L489.9 890L490.4 890L490.9 889L491.4 890L491.9 890L492.4 890L492.9 891L493.4 890L493.9 890L494.4 890L494.9 890L495.4 890L495.9 891L496.4 892L496.9 890L497.4 890L497.9 890L498.4 891L498.9 891L499.4 890L499.9 891L500.4 891L501.0 891" fill="none" stroke="#7c3f73" stroke-width="1"/><path d="M271.0 872L271.5 874L272.0 874L272.5 873L273.0 872L273.5 874L274.0 874L274.5 874L275.0 872L275.5 873L276.0 874L276.5 873L277.0 873L277.5 873L278.0 873L278.5 872L279.0 873L279.5 874L280.0 873L280.5 874L281.0 874L281.5 873L282.0 873L282.5 875L283.0 873L283.5 874L284.0 873L284.5 875L285.0 873L285.5 874L286.0 873L286.5 875L287.0 874L287.5 874L288.0 875L288.5 876L289.0 876L289.5 875L290.0 874L290.5 876L291.0 875L291.5 876L292.0 875L292.5 875L293.0 876L293.5 877L294.0 877L294.5 876L295.0 878L295.5 876L296.0 878L296.5 877L297.0 877L297.5 877L298.0 879L298.5 877L299.0 878L299.5 878L300.0 878L300.5 878L301.0 878L301.5 878L302.0 878L302.5 879L303.0 880L303.5 879L304.0 879L304.5 880L305.0 880L305.5 880L306.0 879L306.5 880L307.0 880L307.5 879L308.0 880L308.5 880L309.0 879L309.5 880L310.0 879L310.5 879L311.0 880L311.5 879L312.0 878L312.5 880L313.0 878L313.5 878L314.0 879L314.5 878L315.0 878L315.5 878L316.0 877L316.5 879L317.0 877L317.5 876L318.0 878L318.5 876L319.0 876L319.5 875L320.0 876L320.5 875L321.0 875L321.5 876L322.0 876L322.5 875L323.0 875L323.5 876L324.0 874L324.5 874L325.0 874L325.5 874L326.0 874L326.5 874L327.0 874L327.5 874L328.0 873L328.5 872L329.0 873L329.5 873L330.0 873L330.5 872L331.0 872L331.5 872L332.0 871L332.5 872L333.0 871L333.5 871L334.0 872L334.5 871L335.0 872L335.5 871L336.0 872L336.5 872L337.0 871L337.5 870L338.0 871L338.5 871L339.0 872L339.5 871L340.0 872L340.5 871L341.0 872L341.5 871L342.0 872L342.5 872L343.0 871L343.5 872L344.0 872L344.5 872L345.0 872L345.5 871L346.0 871L346.5 872L347.0 872L347.5 871L348.0 872L348.5 873L349.0 872L349.5 871L350.0 871L350.5 872L351.0 871L351.5 872L352.0 872L352.5 872L353.0 872L353.5 870L354.0 870L354.5 868L355.0 862L355.5 860L356.0 855L356.5 850L357.0 845L357.5 841L358.0 837L358.5 831L359.0 828L359.5 823L360.0 818L360.5 814L361.0 809L361.5 805L362.0 800L362.5 797L363.0 791L363.5 787L364.0 784L364.5 778L365.0 773L365.5 770L366.0 764L366.5 761L367.0 757L367.5 751L368.0 748L368.5 742L369.0 737L369.5 734L370.0 728L370.5 724L371.0 721L371.5 717L372.0 715L372.5 719L373.0 722L373.5 729L374.0 735L374.5 742L375.0 748L375.5 756L376.0 761L376.5 769L377.0 775L377.5 782L378.0 788L378.5 796L379.0 801L379.5 808L380.0 815L380.5 822L381.0 828L381.5 835L382.0 842L382.5 849L383.0 855L383.5 863L384.0 868L384.5 876L385.0 878L385.5 881L386.0 884L386.5 887L387.0 890L387.5 893L388.0 894L388.5 898L389.0 900L389.5 903L390.0 905L390.5 908L391.0 912L391.5 913L392.0 916L392.5 920L393.0 922L393.5 924L394.0 926L394.5 927L395.0 930L395.5 927L396.0 925L396.5 922L397.0 920L397.5 916L398.0 914L398.5 910L399.0 908L399.5 905L400.0 903L400.5 901L401.0 897L401.5 895L402.0 892L402.5 892L403.0 890L403.5 890L404.0 888L404.5 888L405.0 889L405.5 886L406.0 887L406.5 886L407.0 884L407.5 884L408.0 884L408.5 882L409.0 881L409.5 878L410.0 878L410.5 878L411.0 877L411.5 877L412.0 876L412.5 878L413.0 877L413.5 878L414.0 877L414.5 877L415.0 878L415.5 876L416.0 877L416.5 877L417.0 876L417.5 877L418.0 876L418.5 877L419.0 878L419.5 876L420.0 876L420.5 876L421.0 876L421.5 876L422.0 876L422.5 877L423.0 877L423.5 877L424.0 878L424.5 877L425.0 878L425.5 877L426.0 878L426.5 877L427.0 878L427.5 877L428.0 878L428.5 879L429.0 877L429.5 878L430.0 877L430.5 879L431.0 878L431.5 879L432.0 879L432.5 878L433.0 880L433.5 880L434.0 879L434.5 878L435.0 879L435.5 880L436.0 878L436.5 880L437.0 879L437.5 880L438.0 878L438.5 878L439.0 880L439.5 879L440.0 880L440.5 879L441.0 880L441.5 880L442.0 879L442.5 879L443.0 879L443.5 879L444.0 879L444.5 879L445.0 880L445.5 878L446.0 879L446.5 879L447.0 878L447.5 878L448.0 879L448.5 878L449.0 878L449.5 878L450.0 877L450.5 878L451.0 876L451.5 877L452.0 877L452.5 878L453.0 876L453.5 877L454.0 876L454.5 876L455.0 877L455.5 877L456.0 876L456.5 877L457.0 876L457.5 877L458.0 876L458.5 877L459.0 876L459.5 876L460.0 877L460.5 877L461.0 877L461.5 875L462.0 877L462.5 876L463.0 876L463.5 877L464.0 877L464.5 876L465.0 877L465.5 877L466.0 878L466.5 878L467.0 878L467.5 877L468.0 878L468.5 879L469.0 878L469.5 878L470.0 879L470.5 880L471.0 879L471.5 879L472.0 879L472.5 879L473.0 881L473.5 882L474.0 880L474.5 882L475.0 882L475.5 882L476.0 881L476.5 883L477.0 883L477.5 883L478.0 883L478.5 884L479.0 885L479.5 885L480.0 883L480.5 885L481.0 885L481.5 886L482.0 885L482.5 886L483.0 884L483.5 886L484.0 887L484.5 887L485.0 886L485.5 886L486.0 887L486.5 888L487.0 888L487.5 887L488.0 888L488.5 888L489.0 888L489.5 887L490.0 887L490.5 887L491.0 887L491.5 887L492.0 889L492.5 888L493.0 889L493.5 888L494.0 888L494.5 888L495.0 889L495.5 888L496.0 889L496.5 889L497.0 889L497.5 889L498.0 888L498.5 889L499.0 889L499.5 888L500.0 889L500.5 890L501.0 889" fill="none" stroke="#7c3f73" stroke-width="1"/><path d="M271.0 877L271.5 876L272.0 876L272.5 876L273.0 876L273.5 876L274.0 875L274.5 875L275.0 876L275.5 877L276.0 877L276.5 876L277.0 876L277.5 876L278.0 877L278.5 876L279.0 876L279.5 876L280.0 876L280.5 875L281.0 876L281.5 876L282.0 875L282.5 875L283.0 875L283.5 874L284.0 874L284.5 875L285.0 874L285.5 874L286.0 874L286.5 875L287.0 874L287.5 874L288.0 873L288.5 874L289.0 875L289.5 873L290.0 874L290.5 873L291.0 873L291.5 873L292.0 873L292.5 875L293.0 873L293.5 875L294.0 873L294.5 875L295.0 874L295.5 874L296.0 875L296.5 875L297.0 876L297.5 876L298.0 876L298.5 874L299.0 875L299.5 875L300.0 875L300.5 876L301.0 875L301.5 876L302.0 877L302.5 877L303.0 877L303.5 877L304.0 877L304.5 877L305.0 878L305.5 878L306.0 878L306.5 879L307.0 878L307.5 879L308.0 879L308.5 880L309.0 879L309.5 880L310.0 879L310.5 879L311.0 879L311.5 880L312.0 881L312.5 882L313.0 880L313.5 880L314.0 882L314.5 881L315.0 882L315.5 882L316.0 881L316.5 883L317.0 883L317.5 883L318.0 883L318.5 882L319.0 882L319.5 883L320.0 883L320.5 881L321.0 882L321.5 882L322.0 882L322.5 883L323.0 882L323.5 883L324.0 882L324.5 881L325.0 883L325.5 883L326.0 882L326.5 882L327.0 881L327.5 882L328.0 882L328.5 881L329.0 883L329.5 882L330.0 881L330.5 880L331.0 880L331.5 882L332.0 882L332.5 882L333.0 882L333.5 882L334.0 880L334.5 882L335.0 882L335.5 882L336.0 880L336.5 880L337.0 881L337.5 882L338.0 881L338.5 881L339.0 881L339.5 882L340.0 882L340.5 881L341.0 881L341.5 881L342.0 882L342.5 881L343.0 882L343.5 883L344.0 883L344.5 882L345.0 882L345.5 882L346.0 881L346.5 883L347.0 882L347.5 883L348.0 883L348.5 883L349.0 881L349.5 882L350.0 883L350.5 882L351.0 882L351.5 882L351.9 881L352.4 879L352.9 880L353.4 879L353.9 875L354.4 870L354.9 865L355.4 859L355.9 856L356.4 850L356.9 845L357.4 842L357.9 836L358.4 831L358.9 827L359.4 822L359.9 818L360.4 812L360.9 809L361.4 803L361.9 799L362.4 793L362.9 790L363.4 785L363.9 779L364.4 774L364.9 770L365.4 765L365.9 761L366.4 755L366.9 751L367.4 746L367.9 742L368.4 737L368.9 733L369.4 728L369.9 722L370.4 719L370.9 717L371.4 720L371.9 723L372.4 731L372.9 739L373.4 745L373.9 750L374.4 758L374.9 764L375.4 771L375.9 778L376.4 784L376.9 792L377.4 797L377.9 804L378.4 811L378.9 818L379.4 825L379.9 830L380.4 838L380.9 844L381.4 850L381.9 856L382.4 864L382.9 870L383.4 877L383.9 879L384.4 881L384.9 882L385.4 884L385.9 884L386.4 886L386.9 888L387.4 890L387.9 892L388.4 894L388.9 896L389.4 897L389.9 899L390.4 900L390.9 901L391.4 904L391.9 905L392.4 907L392.9 910L393.4 911L393.9 913L394.4 911L394.9 906L395.4 905L395.9 903L396.4 899L396.9 897L397.4 897L397.9 896L398.4 895L398.9 895L399.4 894L399.9 892L400.4 892L400.9 891L401.4 889L401.9 890L402.4 888L402.9 889L403.4 887L403.9 886L404.4 887L404.9 886L405.4 885L405.9 883L406.4 883L406.9 881L407.4 881L407.9 880L408.4 879L408.9 878L409.4 878L409.9 878L410.4 878L410.9 876L411.4 878L411.9 877L412.4 877L412.9 878L413.4 878L413.9 879L414.4 878L414.9 877L415.4 878L415.9 877L416.4 878L416.9 878L417.4 877L417.9 878L418.4 878L418.9 877L419.4 877L419.9 877L420.4 878L420.9 877L421.4 879L421.9 879L422.4 878L422.9 878L423.4 877L423.9 878L424.4 879L424.9 879L425.4 879L425.9 880L426.4 879L426.9 879L427.4 880L427.9 880L428.4 879L428.9 881L429.4 879L429.9 881L430.4 880L430.9 882L431.4 881L431.9 881L432.4 882L432.9 881L433.4 883L433.9 882L434.4 883L434.9 883L435.4 883L435.9 883L436.4 883L436.9 884L437.4 885L437.9 883L438.4 885L438.9 884L439.4 885L439.9 884L440.4 886L440.9 886L441.4 885L441.9 886L442.4 886L442.9 886L443.4 885L443.9 887L444.4 886L444.9 887L445.4 888L445.9 887L446.4 886L446.9 888L447.4 886L447.9 888L448.4 888L448.9 888L449.4 887L449.9 887L450.4 887L450.9 888L451.4 889L451.9 888L452.4 889L452.9 888L453.4 888L453.9 888L454.4 888L454.9 888L455.4 887L455.9 887L456.4 887L456.9 887L457.4 887L457.9 887L458.4 887L458.9 886L459.4 886L459.9 887L460.4 886L460.9 886L461.4 887L461.9 885L462.4 885L462.9 885L463.4 887L463.9 886L464.4 885L464.9 885L465.4 886L465.9 885L466.4 884L466.9 885L467.4 885L467.9 884L468.4 885L468.9 885L469.4 885L469.9 885L470.4 884L470.9 884L471.4 886L471.9 886L472.4 885L472.9 885L473.4 884L473.9 886L474.4 884L474.9 885L475.4 886L475.9 886L476.4 885L476.9 885L477.4 886L477.9 885L478.4 885L478.9 885L479.4 886L479.9 887L480.4 887L480.9 887L481.4 885L481.9 886L482.4 886L482.9 886L483.4 887L483.9 886L484.4 887L484.9 887L485.4 887L485.9 886L486.4 888L486.9 887L487.4 888L487.9 888L488.4 888L488.9 887L489.4 888L489.9 888L490.4 888L490.9 887L491.4 887L491.9 889L492.4 887L492.9 888L493.4 888L493.9 889L494.4 888L494.9 889L495.4 888L495.9 888L496.4 888L496.9 888L497.4 888L497.9 887L498.4 887L498.9 887L499.4 888L499.9 888L500.4 888L500.9 888L501.0 887" fill="none" stroke="#7c3f73" stroke-width="1"/><path d="M271.0 873L271.5 873L272.0 875L272.5 874L273.0 874L273.5 875L274.0 875L274.5 874L275.0 874L275.5 875L276.0 875L276.5 875L277.0 875L277.5 875L278.0 875L278.5 875L279.0 876L279.5 876L280.0 877L280.5 877L281.0 877L281.5 877L282.0 877L282.5 878L283.0 879L283.5 877L284.0 878L284.5 878L285.0 878L285.5 880L286.0 878L286.5 879L287.0 879L287.5 881L288.0 881L288.5 880L289.0 880L289.5 882L290.0 882L290.5 881L291.0 882L291.5 881L292.0 881L292.5 882L293.0 881L293.5 882L294.0 883L294.5 881L295.0 882L295.5 882L296.0 883L296.5 883L297.0 882L297.5 883L298.0 882L298.5 881L299.0 882L299.5 882L300.0 882L300.5 881L301.0 882L301.5 882L302.0 882L302.5 880L303.0 882L303.5 880L304.0 881L304.5 881L305.0 881L305.5 880L306.0 881L306.5 880L307.0 880L307.5 880L308.0 878L308.5 879L309.0 880L309.5 879L310.0 878L310.5 880L311.0 878L311.5 879L312.0 879L312.5 877L313.0 878L313.5 878L314.0 878L314.5 877L315.0 877L315.5 877L316.0 876L316.5 876L317.0 876L317.5 876L318.0 876L318.5 877L319.0 877L319.5 876L320.0 877L320.5 875L321.0 877L321.5 876L322.0 875L322.5 877L323.0 875L323.5 876L324.0 876L324.5 875L325.0 877L325.5 876L326.0 875L326.5 876L327.0 876L327.5 876L328.0 876L328.5 875L329.0 876L329.5 875L330.0 875L330.5 876L331.0 877L331.5 877L332.0 876L332.5 876L333.0 877L333.5 876L334.0 875L334.5 876L335.0 877L335.5 877L336.0 877L336.5 875L337.0 877L337.5 876L338.0 877L338.5 876L339.0 877L339.5 876L340.0 875L340.5 876L341.0 877L341.5 875L342.0 876L342.5 875L343.0 874L343.5 875L344.0 874L344.5 874L345.0 875L345.5 875L346.0 875L346.5 874L347.0 874L347.5 874L348.0 874L348.5 874L349.0 874L349.5 873L350.0 872L350.5 871L351.0 869L351.6 868L352.1 865L352.6 860L353.1 856L353.6 851L354.1 847L354.6 842L355.1 838L355.6 833L356.1 831L356.6 825L357.1 821L357.6 816L358.1 813L358.6 808L359.1 803L359.6 798L360.1 795L360.6 791L361.1 785L361.6 782L362.1 776L362.6 773L363.1 768L363.6 764L364.1 760L364.6 754L365.1 751L365.6 747L366.1 743L366.6 737L367.1 734L367.6 729L368.1 725L368.6 721L369.1 718L369.6 723L370.1 727L370.6 733L371.1 739L371.6 745L372.1 752L372.6 760L373.1 766L373.6 773L374.1 781L374.6 787L375.1 794L375.6 800L376.1 806L376.6 814L377.1 820L377.6 826L378.1 835L378.6 840L379.1 847L379.6 854L380.1 862L380.6 867L381.1 876L381.6 882L382.1 882L382.6 884L383.1 886L383.6 887L384.1 887L384.6 888L385.1 891L385.6 892L386.1 892L386.6 894L387.1 894L387.6 897L388.1 898L388.6 899L389.1 899L389.6 901L390.1 903L390.6 904L391.1 907L391.6 907L392.1 909L392.6 907L393.1 906L393.6 903L394.1 899L394.6 897L395.1 896L395.6 896L396.1 894L396.6 894L397.1 895L397.6 893L398.1 893L398.6 892L399.1 893L399.6 891L400.1 891L400.6 890L401.1 890L401.6 889L402.1 888L402.6 886L403.1 886L403.6 885L404.1 885L404.6 884L405.1 884L405.6 883L406.1 880L406.6 879L407.1 878L407.6 879L408.1 877L408.6 879L409.1 878L409.6 878L410.1 879L410.6 878L411.1 877L411.6 878L412.1 879L412.6 878L413.1 878L413.6 879L414.1 878L414.6 878L415.1 878L415.6 880L416.1 879L416.6 879L417.1 878L417.6 879L418.1 879L418.6 880L419.1 879L419.6 880L420.1 880L420.6 879L421.1 880L421.6 879L422.1 880L422.6 880L423.1 880L423.6 879L424.1 880L424.6 880L425.1 881L425.6 880L426.1 879L426.6 880L427.1 879L427.6 879L428.1 881L428.6 878L429.1 879L429.6 878L430.1 880L430.6 879L431.1 879L431.6 879L432.1 878L432.6 878L433.1 879L433.6 879L434.1 879L434.6 877L435.1 879L435.6 878L436.1 877L436.6 876L437.1 876L437.6 876L438.1 876L438.6 876L439.1 876L439.6 876L440.1 877L440.6 876L441.1 877L441.6 876L442.1 875L442.6 875L443.1 875L443.6 875L444.1 874L444.6 876L445.1 875L445.6 875L446.1 876L446.6 875L447.1 875L447.6 876L448.1 875L448.6 876L449.1 875L449.6 875L450.1 876L450.6 876L451.1 874L451.6 875L452.1 876L452.6 876L453.1 875L453.6 876L454.1 875L454.6 877L455.1 876L455.6 877L456.1 877L456.6 876L457.1 877L457.6 877L458.1 877L458.6 878L459.1 877L459.6 877L460.1 878L460.6 879L461.1 879L461.6 879L462.1 880L462.6 878L463.1 879L463.6 879L464.1 880L464.6 879L465.1 880L465.6 882L466.1 880L466.6 881L467.1 882L467.6 881L468.1 883L468.6 881L469.1 883L469.6 883L470.1 882L470.6 884L471.1 882L471.6 884L472.1 885L472.6 885L473.1 885L473.6 883L474.1 885L474.6 884L475.1 884L475.6 885L476.1 885L476.6 885L477.1 885L477.6 885L478.1 885L478.6 885L479.1 886L479.6 885L480.1 885L480.6 886L481.1 885L481.6 885L482.1 885L482.6 885L483.1 886L483.6 887L484.1 887L484.6 886L485.1 887L485.6 887L486.1 886L486.6 886L487.1 887L487.6 886L488.1 887L488.6 887L489.1 886L489.6 887L490.1 888L490.6 888L491.1 888L491.6 886L492.1 887L492.6 888L493.1 888L493.6 889L494.1 889L494.6 887L495.1 887L495.6 888L496.1 888L496.6 889L497.1 889L497.6 889L498.1 889L498.6 889L499.1 891L499.5 890L500.0 890L500.5 892L501.0 891" fill="none" stroke="#7c3f73" stroke-width="1"/><path d="M271.0 880L271.5 880L272.0 881L272.5 881L273.0 881L273.5 880L274.0 881L274.5 881L275.0 882L275.5 880L276.0 882L276.5 882L277.0 883L277.5 882L278.0 881L278.5 881L279.0 882L279.5 882L280.0 882L280.5 883L281.0 881L281.5 882L282.0 883L282.5 883L283.0 881L283.5 883L284.0 881L284.5 882L285.0 882L285.5 881L286.0 883L286.5 883L287.0 883L287.5 883L288.0 884L288.5 884L289.0 882L289.5 882L290.0 882L290.5 883L291.0 882L291.5 883L292.0 881L292.5 883L293.0 882L293.5 882L294.0 882L294.5 881L295.0 882L295.5 882L296.0 882L296.5 881L297.0 883L297.5 881L298.0 881L298.5 881L299.0 881L299.5 881L300.0 883L300.5 882L301.0 881L301.5 883L302.0 882L302.5 883L303.0 881L303.5 883L304.0 883L304.5 882L305.0 882L305.5 883L306.0 882L306.5 881L307.0 882L307.5 883L308.0 882L308.5 884L309.0 881L309.5 883L310.0 882L310.5 884L311.0 884L311.5 884" fill="none" stroke="#7c3f73" stroke-width="1"/><path d="M402.5 885L403.0 884L403.5 885L404.0 885L404.5 887L405.0 886L405.5 887L406.0 887L406.5 887L407.0 888L407.5 887L408.0 889L408.5 889L409.0 888L409.5 890L410.0 889L410.5 891L411.0 890L411.5 890L412.0 890L412.5 891L413.0 890L413.5 892L414.0 891L414.5 892L415.0 893L415.5 893L416.0 892L416.5 893L417.0 892L417.5 894L418.0 892L418.5 892L419.0 893L419.5 894L420.0 894L420.5 893L421.0 895L421.5 895L422.0 895L422.5 895L423.0 895L423.5 894L424.0 895L424.5 894L425.0 896L425.5 894L426.0 894L426.5 894L427.0 894L427.5 894L428.0 895L428.5 895L429.0 894L429.5 894L430.0 895L430.5 894L431.0 896L431.5 896L432.0 896L432.5 894L433.0 895L433.5 895L434.0 894L434.5 896L435.0 895L435.5 894L436.0 895L436.5 896L437.0 895L437.5 896L438.0 895L438.5 895L439.0 896L439.5 897L440.0 896L440.5 895L441.0 896L441.5 897L442.0 895L442.5 896L443.0 896L443.5 898L444.0 897L444.5 898L445.0 897L445.5 898L446.0 898L446.5 897L447.0 899L447.5 898L448.0 897L448.5 899L449.0 898L449.5 898L450.0 899L450.5 900L451.0 899L451.5 899L452.0 901L452.5 899L453.0 899L453.5 901L454.0 901L454.5 901L455.0 901L455.5 899L456.0 901L456.5 900L457.0 900L457.5 900L458.0 901L458.5 900L459.0 900L459.5 902L460.0 901L460.5 900L461.0 900L461.5 900L462.0 900L462.5 901L463.0 901L463.5 899L464.0 900L464.5 901L465.0 901L465.5 901L466.0 900L466.5 899L467.0 899L467.5 898L468.0 899L468.5 899L469.0 898L469.5 900L470.0 899L470.5 899L471.0 897L471.5 898L472.0 898L472.5 899L473.0 898L473.5 899L474.0 897L474.5 898L475.0 897L475.5 897L476.0 898L476.5 898L477.0 896L477.5 896L478.0 896L478.5 896L479.0 898L479.5 896L480.0 896L480.5 895L481.0 896L481.5 897L482.0 897L482.5 897L483.0 897L483.5 895L484.0 897L484.5 896L485.0 895L485.5 896L486.0 896L486.5 898L487.0 896L487.5 896L488.0 896L488.5 898L489.0 896L489.5 897L490.0 897L490.5 897L491.0 897L491.5 899L492.0 898L492.5 899L493.0 899L493.5 899L494.0 898L494.5 900L495.0 900L495.5 899L496.0 899L496.5 899L497.0 899L497.5 899L498.0 900L498.5 900L499.0 900L499.5 901L500.0 901L500.5 901L501.0 901" fill="none" stroke="#7c3f73" stroke-width="1"/><path d="M271.0 874L271.5 875L272.0 875L272.5 876L273.0 875L273.5 877L274.0 877L274.5 876L275.0 876L275.5 878L276.0 878L276.5 876L277.0 877L277.5 879L278.0 877L278.5 878L279.0 879L279.5 879L280.0 879L280.5 878L281.0 879L281.5 878L282.0 878L282.5 880L283.0 878L283.5 880L284.0 878L284.5 880L285.0 879L285.5 879L286.0 880L286.5 880L287.0 878L287.5 879L288.0 879L288.5 879L289.0 878L289.5 878L290.0 880L290.5 880L291.0 880L291.5 878L292.0 880L292.5 878L293.0 880L293.5 879L294.0 878L294.5 878L295.0 878L295.5 879L296.0 878L296.5 879L297.0 878L297.5 878L298.0 879L298.5 878L299.0 878L299.5 878L300.0 878L300.5 878L301.0 878L301.5 879L302.0 879L302.5 879L303.0 879L303.5 880L304.0 881L304.5 879L305.0 879L305.5 880L306.0 880L306.5 880L307.0 881L307.5 880L308.0 880L308.5 880L309.0 880L309.5 882L310.0 881L310.5 882L311.0 882L311.5 882" fill="none" stroke="#7c3f73" stroke-width="1"/><path d="M402.5 897L403.0 896L403.5 897L404.0 898L404.5 897L405.0 898L405.5 897L406.0 898L406.5 898L407.0 897L407.5 899L408.0 897L408.5 898L409.0 897L409.5 898L410.0 899L410.5 898L411.0 898L411.5 898L412.0 898L412.5 897L413.0 897L413.5 898L414.0 897L414.5 898L415.0 898L415.5 897L416.0 898L416.5 897L417.0 897L417.5 897L418.0 897L418.5 896L419.0 896L419.5 896L420.0 896L420.5 896L421.0 897L421.5 897L422.0 896L422.5 896L423.0 896L423.5 895L424.0 894L424.5 893L425.0 895L425.5 895L426.0 893L426.5 894L427.0 894L427.5 894L428.0 894L428.5 893L429.0 893L429.5 894L430.0 893L430.5 892L431.0 892L431.5 892L432.0 892L432.5 892L433.0 891L433.5 891L434.0 892L434.5 891L435.0 892L435.5 892L436.0 891L436.5 893L437.0 892L437.5 891L438.0 892L438.5 890L439.0 891L439.5 892L440.0 892L440.5 890L441.0 892L441.5 892L442.0 891L442.5 893L443.0 892L443.5 892L444.0 893L444.5 893L445.0 892L445.5 891L446.0 892L446.5 892L447.0 893L447.5 892L448.0 892L448.5 891L449.0 892L449.5 891L450.0 891L450.5 892L451.0 893L451.5 893L452.0 893L452.5 891L453.0 893L453.5 892L454.0 892L454.5 892L455.0 891L455.5 892L456.0 893L456.5 892L457.0 891L457.5 893L458.0 892L458.5 892L459.0 893L459.5 892L460.0 893L460.5 890L461.0 892L461.5 890L462.0 890L462.5 891L463.0 891L463.5 891L464.0 891L464.5 891L465.0 891L465.5 892L466.0 890L466.5 891L467.0 890L467.5 889L468.0 890L468.5 890L469.0 889L469.5 890L470.0 889L470.5 890L471.0 890L471.5 889L472.0 889L472.5 889L473.0 889L473.5 889L474.0 889L474.5 890L475.0 890L475.5 891L476.0 889L476.5 890L477.0 890L477.5 890L478.0 890L478.5 890L479.0 891L479.5 891L480.0 892L480.5 892L481.0 891L481.5 892L482.0 891L482.5 893L483.0 893L483.5 893L484.0 891L484.5 893L485.0 892L485.5 894L486.0 893L486.5 894L487.0 893L487.5 893L488.0 894L488.5 895L489.0 895L489.5 894L490.0 895L490.5 894L491.0 895L491.5 895L492.0 896L492.5 896L493.0 896L493.5 895L494.0 896L494.5 895L495.0 897L495.5 897L496.0 896L496.5 897L497.0 898L497.5 898L498.0 897L498.5 896L499.0 899L499.5 897L500.0 897L500.5 897L501.0 899" fill="none" stroke="#7c3f73" stroke-width="1"/><path d="M271.0 871L271.5 871L272.0 870L272.5 871L273.0 872L273.5 871L274.0 871L274.5 870L275.0 870L275.5 870L276.0 871L276.5 871L277.0 871L277.5 871L278.0 869L278.5 871L279.0 871L279.5 870L280.0 870L280.5 871L281.0 870L281.5 871L282.0 870L282.5 871L283.0 872L283.5 872L284.0 871L284.5 872L285.0 873L285.5 871L286.0 872L286.5 871L287.0 871L287.5 872L288.0 873L288.5 874L289.0 872L289.5 874L290.0 873L290.5 874L291.0 874L291.5 873L292.0 874L292.5 873L293.0 872L293.5 873L294.0 873L294.5 873L295.0 874L295.5 874L296.0 873L296.5 874L297.0 873L297.5 875L298.0 873L298.5 873L299.0 874L299.5 874L300.0 875L300.5 875L301.0 875L301.5 874L302.0 874L302.5 875L303.0 875L303.5 875L304.0 873L304.5 875L305.0 875L305.5 875L306.0 873L306.5 874L307.0 875L307.5 874L308.0 873L308.5 875L309.0 874L309.5 875L310.0 874L310.5 873L311.0 874L311.5 874" fill="none" stroke="#7c3f73" stroke-width="1"/><path d="M402.5 881L403.0 881L403.5 882L404.0 881L404.5 882L405.0 881L405.5 880L406.0 881L406.5 882L407.0 882L407.5 881L408.0 880L408.5 880L409.0 881L409.5 881L410.0 881L410.5 881L411.0 881L411.5 882L412.0 881L412.5 881L413.0 882L413.5 881L414.0 882L414.5 881L415.0 882L415.5 883L416.0 882L416.5 884L417.0 882L417.5 883L418.0 883L418.5 882L419.0 883L419.5 883L420.0 883L420.5 883L421.0 883L421.5 884L422.0 883L422.5 885L423.0 885L423.5 885L424.0 884L424.5 884L425.0 885L425.5 884L426.0 886L426.5 886L427.0 886L427.5 887L428.0 886L428.5 885L429.0 887L429.5 885L430.0 885L430.5 887L431.0 887L431.5 887L432.0 887L432.5 888L433.0 887L433.5 887L434.0 886L434.5 887L435.0 886L435.5 886L436.0 887L436.5 887L437.0 886L437.5 885L438.0 886L438.5 886L439.0 887L439.5 887L440.0 887L440.5 885L441.0 887L441.5 886L442.0 886L442.5 887L443.0 887L443.5 887L444.0 887L444.5 887L445.0 886L445.5 887L446.0 887L446.5 887L447.0 887L447.5 885L448.0 887L448.5 885L449.0 887L449.5 885L450.0 887L450.5 885L451.0 887L451.5 887L452.0 885L452.5 885L453.0 887L453.5 886L454.0 887L454.5 887L455.0 887L455.5 886L456.0 886L456.5 888L457.0 889L457.5 887L458.0 889L458.5 888L459.0 887L459.5 888L460.0 888L460.5 888L461.0 889L461.5 889L462.0 890L462.5 889L463.0 889L463.5 890L464.0 889L464.5 889L465.0 890L465.5 889L466.0 890L466.5 891L467.0 889L467.5 891L468.0 889L468.5 889L469.0 889L469.5 891L470.0 891L470.5 890L471.0 891L471.5 890L472.0 891L472.5 891L473.0 890L473.5 890L474.0 891L474.5 891L475.0 889L475.5 890L476.0 890L476.5 891L477.0 890L477.5 890L478.0 891L478.5 890L479.0 891L479.5 889L480.0 890L480.5 890L481.0 889L481.5 890L482.0 887L482.5 889L483.0 889L483.5 888L484.0 888L484.5 887L485.0 887L485.5 887L486.0 888L486.5 886L487.0 886L487.5 887L488.0 885L488.5 886L489.0 887L489.5 887L490.0 886L490.5 886L491.0 884L491.5 884L492.0 885L492.5 885L493.0 885L493.5 884L494.0 886L494.5 885L495.0 885L495.5 885L496.0 885L496.5 885L497.0 883L497.5 885L498.0 884L498.5 885L499.0 884L499.5 885L500.0 884L500.5 886L501.0 886" fill="none" stroke="#7c3f73" stroke-width="1"/><path d="M271.0 858L271.5 858L272.0 857L272.5 857L273.0 858L273.5 858L274.0 858L274.5 859L275.0 858L275.5 859L276.0 860L276.5 859L277.0 859L277.5 860L278.0 860L278.5 861L279.0 861L279.5 861L280.0 861L280.5 861L281.0 861L281.5 862L282.0 863L282.5 862L283.0 864L283.5 863L284.0 864L284.5 864L285.0 863L285.5 865L286.0 864L286.5 864L287.0 864L287.5 865L288.0 865L288.5 865L289.0 866L289.5 865L290.0 866L290.5 867L291.0 868L291.5 866L292.0 867L292.5 868L293.0 866L293.5 867L294.0 867L294.5 868L295.0 867L295.5 867L296.0 867L296.5 867L297.0 868L297.5 867L298.0 868L298.5 869L299.0 868L299.5 868L300.0 870L300.5 869L301.0 868L301.5 869L302.0 869L302.5 868L303.0 870L303.5 870L304.0 868L304.5 869L305.0 869L305.5 869L306.0 870L306.5 870L307.0 870L307.5 870L308.0 870L308.5 869L309.0 869L309.5 870L310.0 870L310.5 870L311.0 870L311.5 871" fill="none" stroke="#7c3f73" stroke-width="1"/><path d="M402.5 876L403.0 876L403.5 875L404.0 875L404.5 877L405.0 876L405.5 875L406.0 877L406.5 876L407.0 877L407.5 878L408.0 878L408.5 876L409.0 878L409.5 877L410.0 879L410.5 878L411.0 878L411.5 879L412.0 879L412.5 880L413.0 880L413.5 878L414.0 878L414.5 881L415.0 879L415.5 880L416.0 879L416.5 881L417.0 881L417.5 880L418.0 881L418.5 881L419.0 881L419.5 880L420.0 881L420.5 882L421.0 880L421.5 882L422.0 882L422.5 881L423.0 883L423.5 881L424.0 880L424.5 881L425.0 882L425.5 881L426.0 881L426.5 881L427.0 880L427.5 882L428.0 882L428.5 882L429.0 881L429.5 882L430.0 880L430.5 881L431.0 881L431.5 879L432.0 879L432.5 880L433.0 879L433.5 880L434.0 879L434.5 880L435.0 879L435.5 879L436.0 879L436.5 879L437.0 878L437.5 879L438.0 879L438.5 879L439.0 877L439.5 878L440.0 878L440.5 878L441.0 878L441.5 877L442.0 877L442.5 877L443.0 876L443.5 876L444.0 877L444.5 877L445.0 875L445.5 876L446.0 877L446.5 877L447.0 876L447.5 877L448.0 877L448.5 876L449.0 875L449.5 877L450.0 875L450.5 877L451.0 875L451.5 876L452.0 877L452.5 876L453.0 877L453.5 877L454.0 876L454.5 876L455.0 877L455.5 876L456.0 875L456.5 877L457.0 876L457.5 876L458.0 876L458.5 876L459.0 877L459.5 877L460.0 878L460.5 875L461.0 877L461.5 875L462.0 877L462.5 876L463.0 876L463.5 875L464.0 877L464.5 877L465.0 877L465.5 877L466.0 875L466.5 875L467.0 876L467.5 875L468.0 877L468.5 875L469.0 877L469.5 875L470.0 876L470.5 876L471.0 874L471.5 876L472.0 875L472.5 875L473.0 874L473.5 875L474.0 873L474.5 874L475.0 873L475.5 874L476.0 875L476.5 874L477.0 872L477.5 874L478.0 873L478.5 873L479.0 873L479.5 873L480.0 872L480.5 872L481.0 873L481.5 873L482.0 872L482.5 871L483.0 871L483.5 872L484.0 873L484.5 871L485.0 871L485.5 871L486.0 873L486.5 872L487.0 872L487.5 873L488.0 872L488.5 872L489.0 872L489.5 874L490.0 873L490.5 873L491.0 872L491.5 873L492.0 872L492.5 874L493.0 873L493.5 873L494.0 874L494.5 873L495.0 874L495.5 874L496.0 875L496.5 874L497.0 875L497.5 877L498.0 876L498.5 877L499.0 877L499.5 877L500.0 877L500.5 878L501.0 878" fill="none" stroke="#7c3f73" stroke-width="1"/><path d="M271.0 874L271.5 875L272.0 876L272.5 876L273.0 875L273.5 875L274.0 876L274.5 877L275.0 876L275.5 877L276.0 877L276.5 878L277.0 879L277.5 877L278.0 878L278.5 878L279.0 879L279.5 877L280.0 879L280.5 879L281.0 879L281.5 880L282.0 879L282.5 879L283.0 879L283.5 880L284.0 879L284.5 879L285.0 880L285.5 881L286.0 880L286.5 880L287.0 880L287.5 879L288.0 881L288.5 880L289.0 880L289.5 880L290.0 881L290.5 881L291.0 880L291.5 881L292.0 881L292.5 882L293.0 881L293.5 881L294.0 881L294.5 881L295.0 882L295.5 880L296.0 881L296.5 881L297.0 882L297.5 881L298.0 882L298.5 883L299.0 882L299.5 883L300.0 882L300.5 884L301.0 883L301.5 882L302.0 883L302.5 882L303.0 883L303.5 883L304.0 883L304.5 885L305.0 885L305.5 885L306.0 885L306.5 885L307.0 884L307.5 884L308.0 884L308.5 886L309.0 886L309.5 886L310.0 886L310.5 886L311.0 888L311.5 887" fill="none" stroke="#7c3f73" stroke-width="1"/><path d="M402.5 889L403.0 889L403.5 890L404.0 891L404.5 890L405.0 892L405.5 891L406.0 892L406.5 892L407.0 893L407.5 893L408.0 892L408.5 893L409.0 893L409.5 893L410.0 892L410.5 892L411.0 893L411.5 892L412.0 892L412.5 893L413.0 893L413.5 891L414.0 892L414.5 891L415.0 893L415.5 893L416.0 892L416.5 893L417.0 893L417.5 892L418.0 893L418.5 891L419.0 893L419.5 893L420.0 891L420.5 892L421.0 891L421.5 892L422.0 891L422.5 891L423.0 891L423.5 890L424.0 891L424.5 889L425.0 890L425.5 889L426.0 891L426.5 889L427.0 891L427.5 889L428.0 891L428.5 891L429.0 889L429.5 890L430.0 888L430.5 890L431.0 889L431.5 888L432.0 889L432.5 888L433.0 889L433.5 888L434.0 890L434.5 889L435.0 889L435.5 889L436.0 889L436.5 889L437.0 888L437.5 889L438.0 889L438.5 889L439.0 889L439.5 888L440.0 888L440.5 889L441.0 888L441.5 888L442.0 888L442.5 889L443.0 889L443.5 889L444.0 889L444.5 889L445.0 888L445.5 888L446.0 889L446.5 889L447.0 889L447.5 889L448.0 889L448.5 889L449.0 889L449.5 890L450.0 889L450.5 889L451.0 890L451.5 889L452.0 889L452.5 888L453.0 888L453.5 888L454.0 888L454.5 889L455.0 889L455.5 889L456.0 890L456.5 889L457.0 889L457.5 889L458.0 888L458.5 888L459.0 887L459.5 889L460.0 887L460.5 887L461.0 888L461.5 888L462.0 888L462.5 886L463.0 887L463.5 886L464.0 886L464.5 886L465.0 887L465.5 886L466.0 886L466.5 885L467.0 885L467.5 885L468.0 885L468.5 884L469.0 884L469.5 885L470.0 885L470.5 885L471.0 885L471.5 885L472.0 884L472.5 884L473.0 883L473.5 884L474.0 883L474.5 884L475.0 885L475.5 885L476.0 884L476.5 885L477.0 885L477.5 883L478.0 884L478.5 885L479.0 885L479.5 884L480.0 884L480.5 885L481.0 884L481.5 885L482.0 886L482.5 885L483.0 886L483.5 887L484.0 887L484.5 887L485.0 887L485.5 886L486.0 887L486.5 887L487.0 887L487.5 888L488.0 888L488.5 888L489.0 888L489.5 888L490.0 890L490.5 890L491.0 889L491.5 891L492.0 890L492.5 890L493.0 891L493.5 891L494.0 892L494.5 892L495.0 891L495.5 892L496.0 891L496.5 893L497.0 892L497.5 892L498.0 892L498.5 893L499.0 892L499.5 894L500.0 893L500.5 894L501.0 895" fill="none" stroke="#7c3f73" stroke-width="1"/><path d="M271.0 880L271.5 880L272.0 881L272.5 880L273.0 881L273.5 881L274.0 881L274.5 882L275.0 882L275.5 881L276.0 882L276.5 881L277.0 882L277.5 883L278.0 882L278.5 883L279.0 883L279.5 883L280.0 882L280.5 884L281.0 883L281.5 883L282.0 883L282.5 883L283.0 883L283.5 882L284.0 884L284.5 884L285.0 883L285.5 882L286.0 884L286.5 882L287.0 884L287.5 882L288.0 882L288.5 884L289.0 883L289.5 884L290.0 883L290.5 884L291.0 883L291.5 884L292.0 883L292.5 881L293.0 881L293.5 882L294.0 881L294.5 882L295.0 882L295.5 881L296.0 882L296.5 881L297.0 882L297.5 880L298.0 881L298.5 879L299.0 880L299.5 881L300.0 881L300.5 879L301.0 880L301.5 879L302.0 878L302.5 879L303.0 878L303.5 880L304.0 878L304.5 879L305.0 879L305.5 879L306.0 880L306.5 879L307.0 878L307.5 879L308.0 878L308.5 879L309.0 878L309.5 878L310.0 879L310.5 878L311.0 879L311.5 878" fill="none" stroke="#7c3f73" stroke-width="1"/><path d="M402.5 883L403.0 882L403.5 883L404.0 882L404.5 882L405.0 883L405.5 882L406.0 882L406.5 882L407.0 881L407.5 882L408.0 883L408.5 883L409.0 882L409.5 883L410.0 882L410.5 883L411.0 883L411.5 883L412.0 882L412.5 883L413.0 882L413.5 881L414.0 884L414.5 882L415.0 883L415.5 883L416.0 883L416.5 883L417.0 882L417.5 883L418.0 881L418.5 883L419.0 880L419.5 882L420.0 882L420.5 881L421.0 880L421.5 881L422.0 881L422.5 880L423.0 881L423.5 880L424.0 881L424.5 879L425.0 879L425.5 880L426.0 879L426.5 879L427.0 878L427.5 879L428.0 878L428.5 878L429.0 879L429.5 879L430.0 877L430.5 878L431.0 878L431.5 877L432.0 878L432.5 878L433.0 877L433.5 877L434.0 876L434.5 877L435.0 876L435.5 878L436.0 878L436.5 878L437.0 877L437.5 878L438.0 877L438.5 879L439.0 878L439.5 879L440.0 877L440.5 878L441.0 879L441.5 879L442.0 879L442.5 879L443.0 878L443.5 878L444.0 878L444.5 880L445.0 880L445.5 879L446.0 881L446.5 880L447.0 881L447.5 881L448.0 881L448.5 882L449.0 881L449.5 881L450.0 883L450.5 882L451.0 883L451.5 883L452.0 882L452.5 884L453.0 883L453.5 884L454.0 884L454.5 884L455.0 884L455.5 884L456.0 883L456.5 885L457.0 884L457.5 886L458.0 884L458.5 884L459.0 885L459.5 886L460.0 886L460.5 885L461.0 886L461.5 887L462.0 886L462.5 886L463.0 886L463.5 886L464.0 886L464.5 887L465.0 886L465.5 887L466.0 887L466.5 887L467.0 887L467.5 888L468.0 887L468.5 888L469.0 888L469.5 886L470.0 887L470.5 888L471.0 888L471.5 887L472.0 886L472.5 887L473.0 888L473.5 887L474.0 888L474.5 887L475.0 888L475.5 889L476.0 888L476.5 888L477.0 889L477.5 889L478.0 888L478.5 888L479.0 888L479.5 889L480.0 890L480.5 889L481.0 890L481.5 891L482.0 891L482.5 890L483.0 891L483.5 890L484.0 891L484.5 892L485.0 892L485.5 893L486.0 892L486.5 893L487.0 892L487.5 893L488.0 892L488.5 893L489.0 894L489.5 893L490.0 895L490.5 895L491.0 894L491.5 895L492.0 894L492.5 894L493.0 897L493.5 897L494.0 897L494.5 896L495.0 896L495.5 896L496.0 896L496.5 896L497.0 898L497.5 897L498.0 897L498.5 897L499.0 898L499.5 899L500.0 898L500.5 899L501.0 899" fill="none" stroke="#7c3f73" stroke-width="1"/><path d="M271.0 879L271.5 879L272.0 878L272.5 877L273.0 878L273.5 879L274.0 877L274.5 878L275.0 878L275.5 878L276.0 877L276.5 879L277.0 879L277.5 879L278.0 879L278.5 878L279.0 879L279.5 879L280.0 879L280.5 878L281.0 879L281.5 880L282.0 878L282.5 879L283.0 880L283.5 880L284.0 878L284.5 879L285.0 880L285.5 879L286.0 879L286.5 879L287.0 879L287.5 878L288.0 879L288.5 878L289.0 879L289.5 880L290.0 879L290.5 880L291.0 879L291.5 879L292.0 880L292.5 879L293.0 879L293.5 879L294.0 879L294.5 880L295.0 880L295.5 879L296.0 880L296.5 879L297.0 879L297.5 880L298.0 879L298.5 879L299.0 879L299.5 879L300.0 880L300.5 879L301.0 880L301.5 880L302.0 880L302.5 880L303.0 879L303.5 880L304.0 879L304.5 880L305.0 880L305.5 880L306.0 880L306.5 879L307.0 878L307.5 880L308.0 879L308.5 878L309.0 879L309.5 879L310.0 880L310.5 879L311.0 880L311.5 879L312.0 879L312.5 878L313.0 878L313.5 879L314.0 878L314.5 879L315.0 879L315.5 879L316.0 879L316.5 879L317.0 878L317.5 878L318.0 879L318.5 878L319.0 877L319.5 877L320.0 878L320.5 878L321.0 877L321.5 879L322.0 878L322.5 877L323.0 878L323.5 878L324.0 877L324.5 878L325.0 878L325.5 878L326.0 878L326.5 877L327.0 877L327.5 878L328.0 877L328.5 876L329.0 877L329.5 877L330.0 877L330.5 876L331.0 877L331.5 877L332.0 877L332.5 878L333.0 877L333.5 878L334.0 876L334.5 876L335.0 876L335.5 877L336.0 876L336.5 877L337.0 876L337.5 877L338.0 876L338.5 876L339.0 876L339.5 877L340.0 875L340.5 876L341.0 875L341.5 876L342.0 876L342.5 875L343.0 874L343.5 875L344.0 875L344.5 875L345.0 875L345.5 875L346.0 874L346.5 875L347.0 874L347.5 874L348.0 873L348.5 874L349.0 873L349.5 874L350.0 872L350.5 872L351.0 872L351.5 872L352.0 872L352.5 873L353.0 872L353.5 867L354.0 863L354.5 859L355.0 855L355.5 850L356.0 846L356.5 841L357.0 836L357.6 833L358.1 827L358.6 823L359.1 818L359.6 814L360.1 809L360.6 806L361.1 800L361.6 797L362.1 792L362.6 788L363.1 783L363.6 778L364.1 773L364.6 770L365.1 765L365.6 761L366.1 757L366.7 752L367.2 747L367.7 743L368.2 737L368.7 734L369.2 730L369.7 725L370.2 721L370.7 716L371.2 725L371.7 734L372.2 741L372.7 750L373.1 759L373.6 768L374.1 777L374.6 785L375.1 794L375.6 802L376.1 810L376.6 820L377.1 827L377.6 836L378.0 846L378.5 854L379.0 862L379.5 871L380.0 879L380.5 883L381.0 886L381.5 889L382.0 891L382.5 894L383.0 898L383.5 899L384.0 902L384.5 905L385.0 909L385.5 910L386.0 915L386.5 916L387.0 920L387.5 922L388.0 925L388.5 927L389.0 931L389.6 933L390.1 935L390.6 939L391.1 941L391.6 943L392.1 945L392.7 949L393.2 952L393.7 953L394.2 952L394.6 949L395.1 946L395.6 943L396.1 941L396.5 938L397.0 935L397.5 931L398.0 928L398.5 924L399.0 920L399.5 917L400.0 912L400.5 909L401.0 904L401.5 903L402.0 902L402.5 901L403.0 899L403.5 896L404.0 895L404.5 893L405.0 892L405.5 891L406.0 889L406.5 887L407.0 888L407.5 887L408.0 887L408.5 886L409.0 885L409.5 887L410.0 886L410.5 885L411.0 886L411.5 886L412.0 884L412.5 884L413.0 884L413.5 884L414.0 883L414.5 884L415.0 883L415.5 882L416.0 882L416.5 883L417.0 881L417.5 881L418.0 881L418.5 882L419.0 880L419.5 881L420.0 880L420.5 880L421.0 879L421.5 881L422.0 880L422.5 880L423.0 881L423.5 881L424.0 881L424.5 880L425.0 880L425.5 881L426.0 882L426.5 881L427.0 880L427.5 882L428.0 881L428.5 882L429.0 883L429.5 881L430.0 882L430.5 881L431.0 882L431.5 882L432.0 883L432.5 883L433.0 883L433.5 883L434.0 882L434.5 883L435.0 883L435.5 882L436.0 884L436.5 883L437.0 883L437.5 883L438.0 885L438.5 884L439.0 884L439.5 883L440.0 885L440.5 883L441.0 883L441.5 883L442.0 884L442.5 884L443.0 884L443.5 884L444.0 886L444.5 884L445.0 884L445.5 886L446.0 885L446.5 886L447.0 886L447.5 886L448.0 885L448.5 885L449.0 887L449.5 886L450.0 886L450.5 886L451.0 886L451.5 887L452.0 887L452.5 886L453.0 887L453.5 886L454.0 887L454.5 886L455.0 886L455.5 887L456.0 888L456.5 886L457.0 888L457.5 888L458.0 888L458.5 888L459.0 887L459.5 888L460.0 888L460.5 887L461.0 888L461.5 889L462.0 889L462.5 889L463.0 890L463.5 889L464.0 890L464.5 889L465.0 888L465.5 890L466.0 889L466.5 890L467.0 889L467.5 889L468.0 890L468.5 889L469.0 890L469.5 890L470.0 890L470.5 891L471.0 890L471.5 889L472.0 890L472.5 890L473.0 890L473.5 890L474.0 890L474.5 889L475.0 890L475.5 889L476.0 890L476.5 889L477.0 890L477.5 889L478.0 889L478.5 890L479.0 889L479.5 890L480.0 889L480.5 889L481.0 890L481.5 888L482.0 888L482.5 890L483.0 889L483.5 890L484.0 888L484.5 889L485.0 888L485.5 888L486.0 889L486.5 889L487.0 888L487.5 890L488.0 890L488.5 888L489.0 889L489.5 888L490.0 890L490.5 889L491.0 888L491.5 889L492.0 889L492.5 889L493.0 889L493.5 889L494.0 889L494.5 889L495.0 888L495.5 888L496.0 887L496.5 889L497.0 888L497.5 889L498.0 888L498.5 889L499.0 888L499.5 888L500.0 888L500.5 888L501.0 888" fill="none" stroke="#7c3f73" stroke-width="1"/><path d="M396.0 903L396.5 902L397.0 901L397.5 901L398.0 901L398.5 902L399.0 901L399.5 901L400.0 899L400.5 900L401.0 901L401.5 900L402.0 898L402.5 898L403.0 898L403.5 897L404.0 897L404.5 899L405.0 897L405.5 897L406.0 895L406.5 897L407.0 897L407.5 895L408.0 896L408.5 896L409.0 895L409.5 895L410.0 895L410.5 894L411.0 893L411.5 894L412.0 893L412.5 894L413.0 893L413.5 893L414.0 894L414.5 895L415.0 895L415.5 895L416.0 894L416.5 894L417.0 894L417.5 894L418.0 896L418.5 894L419.0 896L419.5 896L420.0 895L420.5 897L421.0 896L421.5 898L422.0 896L422.5 898L423.0 897L423.5 896L424.0 896L424.5 897L425.0 896L425.5 896L426.0 898L426.5 897L427.0 898L427.5 898L428.0 897L428.5 897L429.0 898L429.5 899L430.0 897L430.5 898L431.0 897L431.5 897L432.0 899L432.5 897L433.0 900L433.5 899L434.0 900L434.5 899L435.0 898L435.5 898L436.0 900L436.5 900L437.0 901L437.5 899L438.0 899L438.5 901L439.0 901L439.5 902L440.0 903L440.5 905L441.0 906L441.5 905L442.0 907L442.5 906L443.0 908L443.5 907L444.0 909L444.5 910L445.0 912L445.5 911L446.0 912L446.5 912L447.0 914L447.5 913L448.0 913L448.5 913L449.0 915L449.5 914L450.0 914L450.5 915L451.0 915L451.5 915L452.0 915L452.5 916L453.0 917L453.5 918L454.0 917L454.5 919L455.0 918L455.5 920L456.0 918L456.5 920L457.0 920L457.5 921L458.0 922L458.5 922L459.0 920L459.5 921L460.0 919L460.5 919L461.0 920L461.5 919L462.0 919L462.5 921L463.0 919L463.5 919L464.0 918L464.5 920L465.0 918L465.5 920L466.0 918L466.5 919L467.0 919L467.5 920L468.0 920L468.5 921L469.0 919L469.5 920L470.0 920L470.5 919L471.0 919L471.5 920L472.0 918L472.5 920L473.0 919L473.5 919L474.0 918L474.5 919L475.0 916L475.5 917L476.0 917L476.5 918L477.0 918L477.5 916L478.0 916L478.5 918L479.0 918L479.5 918L480.0 918L480.5 919L481.0 916L481.5 918L482.0 918L482.5 919L483.0 918" fill="none" stroke="#7c3f73" stroke-width="1"/><path d="M306 866L309 848L311 860M347 868L352 845L354 862" fill="none" stroke="#7c3f73" stroke-width="1"/><rect x="286.3" y="718" width="4.4" height="146" fill="#7c3f73"/><path d="M271.0 866L271.5 865L272.0 866L272.5 865L273.0 865L273.5 865L274.0 864L274.5 864L275.0 864L275.5 863L276.0 863L276.5 863L277.0 863L277.5 863L278.0 863L278.5 863L279.0 863L279.5 864L280.0 864L280.5 863L281.0 864L281.5 864L282.0 865L282.5 864L283.0 865L283.5 866L284.0 865L284.5 867L285.0 867L285.5 868L286.0 867L286.5 868L287.0 868L287.5 869L288.0 871L288.5 871L289.0 871L289.5 872L290.0 872L290.5 873L291.0 874L291.5 874L292.0 874L292.5 874L293.0 876L293.5 876L294.0 877L294.5 877L295.0 878L295.5 878L296.0 880L296.5 881L297.0 881L297.5 882L298.0 882L298.5 883L299.0 884L299.5 884L300.0 885L300.5 884L301.0 885L301.5 885L302.0 885L302.5 887L303.0 887L303.5 887L304.0 887L304.5 887L305.0 887L305.5 886L306.0 886L306.5 885L307.0 885L307.5 884L308.0 884L308.5 883L309.0 882L309.5 881L310.0 881L310.5 879L311.0 878L311.5 877L312.0 876L312.5 874L313.0 871L313.5 869L314.0 867L314.5 865L315.0 862L315.5 860L316.0 858L316.5 853L317.0 847L317.5 842L318.0 837L318.5 831L319.0 826L319.5 820L320.0 815L320.5 809L321.0 802L321.5 796L322.0 790L322.5 784L323.0 778L323.5 771L324.0 766L324.5 762L325.0 760L325.5 757L326.0 754L326.5 751L327.0 747L327.5 744L328.0 742L328.5 738L329.0 740L329.5 742L330.0 745L330.5 746L331.0 748L331.5 754L332.0 762L332.5 768L333.0 777L333.5 784L334.0 790L334.5 799L335.0 807L335.5 816L336.0 825L336.5 833L337.0 842L337.5 852L338.0 860L338.5 866L339.0 874L339.5 880L340.0 887L340.5 894L341.0 900L341.5 904L342.0 906L342.5 910L343.0 913L343.5 916L344.0 919L344.5 918L345.0 917L345.5 915L346.0 914L346.5 913L347.0 912L347.5 910L348.0 906L348.5 903L349.0 900L349.5 898L350.0 894L350.5 893L351.0 892L351.5 890L352.0 888L352.5 886L353.0 885L353.5 884L354.0 883L354.5 881L355.0 881L355.5 881L356.0 880L356.5 878L357.0 878L357.5 878L358.0 878L358.5 877L359.0 876L359.5 876L360.0 876L360.5 876L361.0 875L361.5 876L362.0 876L362.5 876L363.0 876L363.5 875L364.0 875L364.5 875L365.0 876L365.5 875L366.0 876L366.5 874L367.0 875L367.5 874L368.0 875L368.5 875L369.0 875L369.5 874L370.0 875L370.5 875L371.0 873L371.5 873L372.0 873L372.5 874L373.0 874L373.5 873L374.0 873L374.5 873L375.0 873L375.5 872L376.0 873L376.5 872L377.0 873L377.5 873L378.0 873L378.5 872L379.0 873L379.5 872L380.0 872L380.5 871L381.0 873L381.5 872L382.0 872L382.5 872L383.0 873L383.5 872L384.0 873L384.5 873L385.0 873L385.5 872L386.0 872L386.5 873L387.0 874L387.5 873L388.0 874L388.5 874L389.0 874L389.5 873L390.0 875L390.5 873L391.0 873L391.5 874L392.0 874L392.5 874L393.0 875L393.5 874L394.0 874L394.5 874L395.0 874L395.5 874L396.0 874L396.5 874L397.0 873L397.5 874L398.0 875L398.5 876L399.0 877L399.5 876L400.0 878L400.5 878L401.0 879L401.5 880L402.0 881L402.5 881L403.0 881L403.5 881L404.0 882L404.5 882L405.0 882L405.5 883L406.0 883L406.5 884L407.0 884L407.5 884L408.0 885L408.5 885L409.0 886L409.5 887L410.0 887L410.5 886L411.0 888L411.5 888L412.0 887L412.5 888L413.0 889L413.5 889L414.0 889L414.5 889L415.0 889L415.5 890L416.0 890L416.5 890L417.0 891L417.5 892L418.0 892L418.5 893L419.0 893L419.5 893L420.0 893L420.5 893L421.0 894L421.5 893L422.0 894L422.5 894L423.0 894L423.5 894L424.0 893L424.5 894L425.0 894L425.5 894L426.0 894L426.5 894L427.0 895L427.5 895L428.0 894L428.5 895L429.0 894L429.5 895L430.0 895L430.5 895L431.0 894L431.5 894L432.0 894L432.5 895L433.0 894L433.5 894L434.0 894L434.5 894L435.0 894L435.5 894L436.0 894L436.5 893L437.0 893L437.5 893L438.0 893L438.5 893L439.0 893L439.5 893L440.0 892L440.5 891L441.0 891L441.5 891L442.0 891L442.5 891L443.0 890L443.5 890L444.0 891L444.5 890L445.0 890L445.5 890L446.0 889L446.5 889L447.0 888L447.5 888L448.0 887L448.5 888L449.0 887L449.5 888L450.0 888L450.5 887L451.0 886L451.5 886L452.0 886L452.5 886L453.0 886L453.5 885L454.0 885L454.5 884L455.0 884L455.5 884L456.0 884L456.5 884L457.0 883L457.5 883L458.0 883L458.5 882L459.0 882L459.5 882L460.0 882L460.5 881L461.0 881L461.5 882L462.0 882L462.5 881L463.0 881L463.5 881L464.0 880L464.5 881L465.0 880L465.5 880L466.0 879L466.5 880L467.0 879L467.5 879L468.0 878L468.5 878L469.0 879L469.5 877L470.0 876L470.5 874L471.0 875L471.5 876L472.0 877L472.5 879L473.0 880L473.5 881L474.0 881L474.5 882L475.0 882L475.5 883L476.0 884L476.5 884L477.0 885L477.5 885L478.0 885L478.5 886L479.0 886L479.5 886L480.0 887L480.5 887L481.0 887L481.5 888L482.0 887L482.5 888L483.0 888L483.5 889L484.0 887L484.5 887L485.0 888L485.5 887L486.0 887L486.5 887L487.0 888L487.5 888L488.0 887L488.5 887L489.0 887L489.5 887L490.0 886L490.5 887L491.0 886L491.5 886L492.0 886L492.5 886L493.0 886L493.5 886L494.0 886L494.5 885L495.0 884L495.5 885L496.0 885L496.5 885L497.0 884L497.5 884L498.0 884L498.5 884L499.0 883L499.5 883L500.0 883" fill="none" stroke="#2f6fe6" stroke-width="1.6" stroke-linejoin="round"/><path d="M287.3 723V866" stroke="#2f6fe6" stroke-width="1"/><path d="M353 870L364 881M364 870L353 881" stroke="#d9c9a0" stroke-width="1.1"/></g></svg>
<div style="left:508px;top:651px;width:16px;height:16px;background:#f0f0f0;border:1px solid #a0a0a0;"></div>
<svg style="left:508px;top:651px;" width="16" height="16" viewBox="0 0 16 16"><path d="M3.5 6H12.5L8 11Z" fill="#000"/></svg>
<span class="t" style="left:528.00px;top:652.84px;font-size:12px;line-height:12px;color:#000;letter-spacing:-0.420px;">0.164 mV</span>
<svg style="left:615px;top:652px;" width="16" height="16" viewBox="0 0 16 16"><circle cx="8" cy="8" r="7" fill="#58b030" stroke="#3d8a1e" stroke-width="1"/><ellipse cx="8" cy="5" rx="5" ry="3" fill="#a6dc7c" opacity=".7"/><path d="M8 7V12M6.5 7.5H8M6.5 12H9.5" stroke="#fff" stroke-width="1.5" fill="none"/><circle cx="8" cy="4.3" r="1.1" fill="#fff"/></svg>
<div style="left:507px;top:671px;width:124px;height:20px;background:#e1e1e1;border:1px solid #adadad;"></div>
<svg style="left:510px;top:674px;" width="16" height="14" viewBox="0 0 16 14"><path d="M0 0H15.5L0 13.5Z" fill="#2b62ff"/><path d="M15.5 0V13.5H0Z" fill="#f400b9"/></svg>
<span class="t" style="left:530.50px;top:674.84px;font-size:12px;line-height:12px;color:#000;letter-spacing:-0.891px;">CAP</span>
<svg style="left:617px;top:678px;" width="10" height="6" viewBox="0 0 10 6"><path d="M0 0H10L5 5.5Z" fill="#000"/></svg>
<div style="left:270px;top:1004px;width:231px;height:20px;background:#fff;border:1px solid #dadada;border-top:none;"></div>
<div style="left:299.5px;top:1004.5px;width:1px;height:1.5px;background:#000;"></div>
<div style="left:328.5px;top:1004.5px;width:1px;height:2.5px;background:#000;"></div>
<div style="left:357px;top:1004.5px;width:1px;height:1.5px;background:#000;"></div>
<div style="left:386px;top:1004.5px;width:1px;height:1.5px;background:#000;"></div>
<div style="left:415px;top:1004.5px;width:1px;height:1.5px;background:#000;"></div>
<div style="left:443.5px;top:1004.5px;width:1px;height:2.5px;background:#000;"></div>
<div style="left:471.5px;top:1004.5px;width:1px;height:1.5px;background:#000;"></div>
<span class="t" style="left:323.17px;top:1008.84px;font-size:12px;line-height:12px;color:#000;">-0</span>
<span class="t" style="left:436.83px;top:1008.84px;font-size:12px;line-height:12px;color:#000;">20</span>
<span class="t" style="left:478.00px;top:1008.84px;font-size:12px;line-height:12px;color:#000;letter-spacing:-0.997px;">(ms)</span>
<span class="t" style="left:222.00px;top:1015.84px;font-size:12px;line-height:12px;color:#000;font-weight:bold;font-size:11px;">M</span>
<svg style="left:222px;top:1027px;" width="10" height="6" viewBox="0 0 10 6"><path d="M0 0H10L5 5Z" fill="#000"/></svg>
<svg style="left:275px;top:1031px;" width="8" height="10" viewBox="0 0 8 10"><path d="M6 1L2 5L6 9" fill="none" stroke="#606060" stroke-width="1.8"/></svg>
<div style="left:288px;top:1026px;width:43px;height:20px;background:#cdcdcd;"></div>
<svg style="left:336px;top:1031px;" width="8" height="10" viewBox="0 0 8 10"><path d="M2 1L6 5L2 9" fill="none" stroke="#606060" stroke-width="1.8"/></svg>
<div style="left:349px;top:1026px;width:34px;height:20px;background:#e1e1e1;border:1px solid #adadad;"></div>
<svg style="left:354px;top:1029px;" width="26" height="14" viewBox="0 0 26 14"><rect x="1.5" y="1.5" width="13" height="11" fill="#eef4fb" stroke="#444"/><path d="M3 7H6L7 5L8.5 9L10 7H13" stroke="#27a" fill="none"/><path d="M3 3.5H13M3 10.5H13" stroke="#333" stroke-dasharray="1 1"/><path d="M16 7H19V4L22 7L19 10V7" fill="#000" stroke="#000"/><path d="M23.5 0.5V13.5" stroke="#000" stroke-width="1.4"/></svg>
<div style="left:386px;top:1026px;width:23px;height:20px;background:#e1e1e1;border:1px solid #adadad;"></div>
<svg style="left:389px;top:1029px;" width="18" height="14" viewBox="0 0 18 14"><path d="M8 1V11L1 6Z" fill="#4fb83f" stroke="#2a8a2a" stroke-width=".8"/><path d="M10 1V11L17 6Z" fill="#4fb83f" stroke="#2a8a2a" stroke-width=".8"/><path d="M0.5 10V13H17.5V10" fill="none" stroke="#555" stroke-width="1"/></svg>
<div style="left:411px;top:1026px;width:16px;height:20px;background:#e1e1e1;border:1px solid #adadad;"></div>
<svg style="left:413px;top:1032px;" width="12" height="7" viewBox="0 0 12 7"><path d="M0 6.5C3 6 4.5 0.5 6 0.5S8 3 9 3.5S11 6 12 6.5Z" fill="#444"/></svg>
<div style="left:429px;top:1026px;width:53px;height:20px;background:#e1e1e1;border:1px solid #adadad;"></div>
<span class="t" style="left:440.00px;top:1030.84px;font-size:12px;line-height:12px;color:#000;letter-spacing:-0.336px;">40 ms</span>
<div style="left:484px;top:1026px;width:17px;height:20px;background:#e1e1e1;border:1px solid #adadad;"></div>
<svg style="left:486px;top:1030px;" width="13" height="11" viewBox="0 0 13 11"><path d="M0 10.5C2 10 4.5 0.5 6 0.5S8.5 5 9.5 6S12 10 13 10.5Z" fill="#444"/></svg>
<div style="left:506px;top:1003px;width:37px;height:38px;background:#cce4f7;border:1px solid #1a6fc0;"></div>
<svg style="left:509px;top:1006px;" width="30" height="32" viewBox="0 0 30 32"><rect x="1" y="2" width="19" height="6" fill="#d9d9d9" stroke="#8a8a8a"/><path d="M3 5H18" stroke="#555" stroke-dasharray="1.5 1"/><rect x="5" y="10" width="24" height="20" fill="#eef6fd" stroke="#9ab"/><path d="M12 6C18 5 22 7 22 11" fill="none" stroke="#f4f4f4" stroke-width="3"/><path d="M19 10H26L22.5 14Z" fill="#f4f4f4" stroke="#aaa" stroke-width=".5"/><path d="M6 14H28M6 27H28" stroke="#222" stroke-width="1.2" stroke-dasharray="2.5 1.5"/><path d="M6 21H13L15 19L17 24L19 16L21 21H28" fill="none" stroke="#2a8a7a" stroke-width="1.2"/></svg>
<div style="left:544px;top:1003px;width:81px;height:38px;background:#e1e1e1;border:1px solid #adadad;"></div>
<svg style="left:554px;top:1015px;" width="10" height="14" viewBox="0 0 10 14"><path d="M0.5 0.5L9 7L0.5 13.5Z" fill="#57b947" stroke="#8f8aa8" stroke-width="1"/></svg>
<span class="t" style="left:580.00px;top:1016.34px;font-size:12px;line-height:12px;color:#000;letter-spacing:0.332px;">Start</span>
<svg style="left:622px;top:1034px;" width="12" height="12" viewBox="0 0 12 12"><path d="M1 12L12 1M5 12L12 5M9 12L12 9" stroke="#b8b8b8" stroke-width="1.2"/></svg>
<!-- peak_view -->
<div style="left:641px;top:574px;width:479px;height:478px;background:linear-gradient(#9fb9da 0px,#bcd1eb 31px,#bcd1eb 100%);"></div>
<svg style="left:649px;top:583px;" width="13" height="16" viewBox="0 0 13 16"><path d="M0 0H8L12 4V16H0Z" fill="#1b4f8a"/><path d="M0 0H8L12 4V7H0Z" fill="#1f68ad"/><path d="M8 0V4H12Z" fill="#cfe0f0"/><path d="M0.5 8.5H3L4.5 12.5L6.3 2.5L8 10L9 8H12" fill="none" stroke="#fff" stroke-width="1.2"/></svg>
<span class="t" style="left:669.00px;top:585.84px;font-size:12px;line-height:12px;color:#000;letter-spacing:-0.228px;">Frog Muscle and CAP: Peak Analysis View</span>
<svg style="left:1042.5px;top:582.2px;" width="70" height="16" viewBox="0 0 70 16"><path d="M0 8.6H11.5" stroke="#000" stroke-width="1.2" fill="none"/><rect x="27" y="3.2" width="10.4" height="10.4" fill="none" stroke="#000" stroke-width="1.3"/><path d="M52.5 3L63.5 14M63.5 3L52.5 14" stroke="#000" stroke-width="1.1" fill="none"/></svg>
<div style="left:647px;top:605px;width:466px;height:441px;background:#f0f0f0;"></div>
<div style="left:647px;top:605px;width:466px;height:402px;background:#fff;border-top:1px solid #696969;border-left:1px solid #696969;border-right:1px solid #e3e3e3;"></div>
<div style="left:648px;top:606px;width:464px;height:1px;background:#a0a0a0;"></div>
<div style="left:648px;top:606px;width:1px;height:400px;background:#a0a0a0;"></div>
<span class="t" style="left:650.50px;top:610.69px;font-size:11px;line-height:11px;color:#000;letter-spacing:-0.208px;">Channel 1: 0.02170 s, -5.513 mV</span>
<div style="left:656px;top:634px;width:16px;height:16px;background:#fff;border:1px solid #1f4e8c;"></div>
<svg style="left:656px;top:634px;" width="16" height="16" viewBox="0 0 16 16"><path d="M3.5 6H12.5L8 11Z" fill="#000"/></svg>
<svg style="left:0px;top:0px;" width="1120" height="1050" viewBox="0 0 1120 1050"><polygon points="811.5,691.5 811.4,692.0 811.5,693.7 811.8,694.9 811.6,697.1 811.8,698.2 812.2,700.0 812.3,701.6 812.4,703.1 812.6,705.3 812.7,706.9 812.9,708.0 813.1,710.1 813.3,711.4 813.9,713.5 814.3,715.6 814.7,717.3 815.0,719.0 815.5,720.6 816.2,721.5 816.4,723.1 817.2,724.9 817.6,726.3 818.0,727.9 818.5,729.7 819.1,731.5 819.7,733.1 820.3,734.7 820.8,735.6 821.4,737.9 821.8,739.1 822.0,740.4 822.4,742.2 822.5,743.4 823.1,745.7 823.1,747.1 823.6,748.2 823.9,750.2 824.5,751.2 824.7,752.9 825.1,754.7 825.4,756.8 825.6,758.4 825.9,759.3 826.3,760.9 826.4,762.8 826.8,764.1 826.9,766.3 827.3,767.9 827.8,769.0 827.9,770.7 828.2,772.4 828.5,773.9 828.9,775.4 829.0,777.2 829.2,778.5 829.8,780.3 829.9,781.5 830.1,783.6 830.2,785.2 830.7,786.4 831.0,788.3 831.3,789.9 831.6,791.8 831.6,792.8 832.1,795.2 832.3,796.4 832.7,797.9 832.8,799.5 833.1,801.3 833.4,802.7 833.8,804.0 834.0,806.2 834.2,807.4 834.7,809.0 834.7,810.7 835.2,812.0 835.4,813.8 835.9,815.5 836.2,816.8 836.3,818.8 836.8,820.2 836.8,821.5 837.2,823.2 837.6,825.3 837.8,826.5 838.5,828.4 838.9,829.9 839.0,831.5 839.7,833.2 839.9,834.9 840.5,836.6 841.2,838.1 841.3,840.4 842.2,842.1 842.5,843.7 843.2,844.8 843.6,846.9 844.1,848.3 844.4,849.7 844.9,851.2 845.5,853.0 846.1,854.4 846.7,856.5 847.2,858.3 847.7,859.6 847.9,861.3 848.6,862.6 849.4,864.3 849.8,866.2 850.5,867.3 850.9,869.3 851.7,870.8 852.4,871.9 853.2,874.0 853.7,875.5 854.7,877.1 855.4,878.0 856.1,880.3 856.7,881.3 857.6,883.0 858.5,884.5 859.4,885.6 860.0,887.2 860.8,888.7 862.4,891.0 863.3,892.5 864.7,894.1 865.9,896.1 867.9,897.7 869.5,899.5 871.5,901.5 871.3,901.6 873.4,899.6 874.7,897.6 875.7,896.4 876.7,894.4 877.4,892.9 878.0,890.8 878.6,889.7 879.1,888.1 879.7,886.0 880.3,884.9 880.6,883.1 881.4,882.0 882.3,879.8 882.7,878.8 882.9,877.0 883.3,875.9 884.1,874.5 884.7,872.7 885.1,871.1 885.3,869.6 885.7,867.6 886.7,866.0 886.8,864.5 887.7,863.1 887.7,862.4 888.3,860.9 889.1,859.4 889.8,857.6 890.2,855.4 890.7,854.4 891.2,852.4 891.8,851.8 891.9,849.5 892.7,848.5 893.1,846.2 893.6,845.1 894.4,843.4 894.7,841.9 895.3,840.4 895.6,839.0 896.7,837.4 897.1,835.6 897.6,834.8 898.1,833.0 898.6,831.5 899.5,829.2 899.7,828.3 900.8,826.3 901.2,824.9 901.7,822.6 902.3,821.4 903.0,819.3 903.7,818.5 904.1,816.5 904.7,815.0 905.4,812.7 905.7,810.7 906.4,809.5 906.8,807.8 907.5,806.7 908.0,805.2 908.8,803.1 909.4,801.7 910.2,799.7 910.6,798.2 911.5,796.1 912.1,795.2 912.6,792.7 913.1,791.7 914.1,790.4 914.9,787.9 915.1,786.3 915.8,785.2 917.0,783.9 917.5,782.2 918.3,780.1 919.3,778.1 919.8,777.4 920.7,775.2 921.7,774.0 922.2,772.1 923.3,770.6 924.0,769.2 925.3,767.4 926.0,765.4 926.9,764.4 927.8,763.0 929.2,760.4 930.3,759.1 931.2,758.0 931.9,756.2 933.2,754.8 934.1,753.2 935.7,751.5 936.6,749.3 937.7,748.0 939.0,746.8 940.0,744.6 941.4,743.7 942.5,742.5 944.1,740.0 945.6,738.6 946.6,737.8 948.1,736.1 949.7,734.5 951.1,732.8 952.5,732.1 954.6,730.5 956.1,728.8 957.4,727.8 959.2,726.3 960.5,725.4 962.2,724.5 963.4,723.5 965.0,722.8 966.4,721.9 967.8,720.1 969.3,718.8 971.2,718.5 972.3,716.8 973.9,716.4 975.7,715.4 977.1,713.6 978.6,712.8 980.3,712.3 981.7,711.1 983.7,709.9 985.3,710.1 987.0,708.6 988.4,708.0 990.1,707.6 991.6,706.1 993.2,705.7 994.6,705.4 995.7,704.8 997.6,703.9 999.0,703.2 1000.3,702.7 1001.7,702.0 1003.7,701.4 1005.3,701.6 1007.1,700.1 1008.7,700.1 1009.9,699.3 1011.6,698.5 1013.4,699.0 1014.9,698.4 1016.6,697.2 1018.2,697.4 1019.8,697.2 1021.1,696.4 1022.7,696.8 1024.2,695.8 1025.7,695.5 1026.8,694.7 1028.2,694.5 1029.8,694.5 1031.7,694.3 1033.1,694.2 1034.5,693.7 1036.4,693.4 1037.6,693.7 1039.4,692.8 1040.8,692.8 1042.5,692.2 1043.7,691.9 1045.5,692.0 1045.5,691.5" fill="#ffff80"/><path d="M714.0 690.8L714.5 689.8L715.0 690.3L715.5 689.9L716.0 690.0L716.5 689.9L717.0 690.3L717.5 690.0L718.0 689.8L718.5 690.0L719.0 690.1L719.5 690.6L720.0 690.0L720.5 689.9L721.0 690.6L721.5 690.6L722.0 691.1L722.5 690.1L723.0 690.7L723.5 690.7L724.0 690.1L724.5 691.6L725.0 690.4L725.5 690.3L726.0 690.9L726.5 690.4L727.0 691.1L727.5 690.7L728.0 690.4L728.5 690.3L729.0 691.3L729.5 690.6L730.0 691.5L730.5 690.9L731.0 691.7L731.5 690.7L732.0 690.6L732.5 690.6L733.0 691.5L733.5 691.2L734.0 690.7L734.5 690.3L735.0 691.3L735.5 692.5L736.0 691.9L736.5 690.9L737.0 691.0L737.5 691.0L738.0 691.1L738.5 690.9L739.0 690.9L739.5 691.9L740.0 692.2L740.5 691.1L741.0 692.3L741.5 691.5L742.0 692.0L742.5 692.1L743.0 692.1L743.5 690.7L744.0 691.1L744.5 691.5L745.0 692.0L745.5 690.6L746.0 690.9L746.5 691.8L747.0 690.6L747.5 691.0L748.0 690.9L748.5 691.4L749.0 691.8L749.5 690.5L750.0 691.4L750.5 691.4L751.0 691.5L751.5 691.0L752.0 691.6L752.5 690.6L753.0 690.7L753.5 690.4L754.0 691.2L754.5 690.7L755.0 690.3L755.5 690.2L756.0 691.0L756.5 690.8L757.0 691.0L757.5 690.4L758.0 690.5L758.5 690.0L759.0 690.9L759.5 689.7L760.0 689.6L760.5 690.1L761.0 690.0L761.5 689.0L762.0 689.2L762.5 690.2L763.0 689.9L763.5 690.2L764.0 690.2L764.5 689.5L765.0 690.2L765.5 690.0L766.0 689.3L766.5 689.4L767.0 688.9L767.5 689.4L768.0 690.3L768.5 689.0L769.0 689.7L769.5 689.0L770.0 689.0L770.5 689.9L771.0 689.3L771.5 689.0L772.0 689.2L772.5 690.0L773.0 689.9L773.5 689.0L774.0 689.4L774.5 690.6L775.0 689.4L775.5 690.0L776.0 689.7L776.5 690.4L777.0 690.1L777.5 690.4L778.0 690.0L778.5 689.5L779.0 689.5L779.5 689.4L780.0 690.6L780.5 689.5L781.0 689.4L781.5 690.9L782.0 689.7L782.5 690.9L783.0 689.6L783.5 690.3L784.0 689.9L784.5 690.9L785.0 690.6L785.5 690.7L786.0 690.9L786.5 691.1L787.0 690.3L787.5 690.7L788.0 690.5L788.5 690.0L789.0 691.2L789.5 690.8L790.0 691.2L790.5 690.3L791.0 690.8L791.5 690.7L792.0 691.2L792.5 690.2L793.0 690.6L793.5 690.8L794.0 690.2L794.5 691.0L795.0 691.3L795.5 690.8L796.0 691.2L796.5 691.1L797.0 690.5L797.5 690.7L798.0 691.8L798.5 690.7L799.0 690.9L799.5 690.3L800.0 690.5L800.5 690.5L801.0 691.7L801.5 691.4L802.0 691.6L802.5 691.8L803.0 691.2L803.5 691.7L804.0 691.0L804.5 690.8L805.0 691.7L805.5 691.6L806.0 691.6L806.5 690.9L807.0 691.3L807.5 690.7L808.0 691.6L808.5 691.5L809.0 690.5L809.5 691.5L810.0 690.2L810.5 690.1L809.5 691.5L811 696L812.3 705" fill="none" stroke="#8e96dc" stroke-width="3.8" stroke-linejoin="round"/><path d="M811.6 697.1L811.8 698.2L812.2 700.0L812.3 701.6L812.4 703.1L812.6 705.3L812.7 706.9L812.9 708.0L813.1 710.1L813.3 711.4L813.9 713.5L814.3 715.6L814.7 717.3L815.0 719.0L815.5 720.6L816.2 721.5L816.4 723.1L817.2 724.9L817.6 726.3L818.0 727.9L818.5 729.7L819.1 731.5L819.7 733.1L820.3 734.7L820.8 735.6L821.4 737.9L821.8 739.1L822.0 740.4L822.4 742.2L822.5 743.4L823.1 745.7L823.1 747.1L823.6 748.2L823.9 750.2L824.5 751.2L824.7 752.9L825.1 754.7L825.4 756.8L825.6 758.4L825.9 759.3L826.3 760.9L826.4 762.8L826.8 764.1L826.9 766.3L827.3 767.9L827.8 769.0L827.9 770.7L828.2 772.4L828.5 773.9L828.9 775.4L829.0 777.2L829.2 778.5L829.8 780.3L829.9 781.5L830.1 783.6L830.2 785.2L830.7 786.4L831.0 788.3L831.3 789.9L831.6 791.8L831.6 792.8L832.1 795.2L832.3 796.4L832.7 797.9L832.8 799.5L833.1 801.3L833.4 802.7L833.8 804.0L834.0 806.2L834.2 807.4L834.7 809.0L834.7 810.7L835.2 812.0L835.4 813.8L835.9 815.5L836.2 816.8L836.3 818.8L836.8 820.2L836.8 821.5L837.2 823.2L837.6 825.3L837.8 826.5L838.5 828.4L838.9 829.9L839.0 831.5L839.7 833.2L839.9 834.9L840.5 836.6L841.2 838.1L841.3 840.4L842.2 842.1L842.5 843.7L843.2 844.8L843.6 846.9L844.1 848.3L844.4 849.7L844.9 851.2L845.5 853.0L846.1 854.4L846.7 856.5L847.2 858.3L847.7 859.6L847.9 861.3L848.6 862.6L849.4 864.3L849.8 866.2L850.5 867.3L850.9 869.3L851.7 870.8L852.4 871.9L853.2 874.0L853.7 875.5L854.7 877.1L855.4 878.0L856.1 880.3L856.7 881.3L857.6 883.0L858.5 884.5L859.4 885.6L860.0 887.2L860.8 888.7L862.4 891.0L863.3 892.5L864.7 894.1L865.9 896.1L867.9 897.7L869.5 899.5L871.5 901.5L871.3 901.6L873.4 899.6L874.7 897.6L875.7 896.4L876.7 894.4L877.4 892.9L878.0 890.8L878.6 889.7L879.1 888.1L879.7 886.0L880.3 884.9L880.6 883.1L881.4 882.0L882.3 879.8L882.7 878.8L882.9 877.0L883.3 875.9L884.1 874.5L884.7 872.7L885.1 871.1L885.3 869.6L885.7 867.6L886.7 866.0L886.8 864.5L887.7 863.1L887.7 862.4L888.3 860.9L889.1 859.4L889.8 857.6L890.2 855.4L890.7 854.4L891.2 852.4L891.8 851.8L891.9 849.5L892.7 848.5L893.1 846.2L893.6 845.1L894.4 843.4L894.7 841.9L895.3 840.4L895.6 839.0L896.7 837.4L897.1 835.6L897.6 834.8L898.1 833.0L898.6 831.5L899.5 829.2L899.7 828.3L900.8 826.3L901.2 824.9L901.7 822.6L902.3 821.4L903.0 819.3L903.7 818.5L904.1 816.5L904.7 815.0L905.4 812.7L905.7 810.7L906.4 809.5L906.8 807.8L907.5 806.7L908.0 805.2L908.8 803.1L909.4 801.7L910.2 799.7L910.6 798.2L911.5 796.1L912.1 795.2L912.6 792.7L913.1 791.7L914.1 790.4L914.9 787.9L915.1 786.3L915.8 785.2L917.0 783.9L917.5 782.2L918.3 780.1L919.3 778.1L919.8 777.4L920.7 775.2L921.7 774.0L922.2 772.1L923.3 770.6L924.0 769.2L925.3 767.4L926.0 765.4L926.9 764.4L927.8 763.0L929.2 760.4L930.3 759.1L931.2 758.0L931.9 756.2L933.2 754.8L934.1 753.2L935.7 751.5L936.6 749.3L937.7 748.0L939.0 746.8L940.0 744.6L941.4 743.7L942.5 742.5L944.1 740.0L945.6 738.6L946.6 737.8L948.1 736.1L949.7 734.5L951.1 732.8L952.5 732.1L954.6 730.5L956.1 728.8L957.4 727.8L959.2 726.3L960.5 725.4L962.2 724.5L963.4 723.5L965.0 722.8L966.4 721.9L967.8 720.1L969.3 718.8L971.2 718.5L972.3 716.8L973.9 716.4L975.7 715.4L977.1 713.6L978.6 712.8L980.3 712.3L981.7 711.1L983.7 709.9L985.3 710.1L987.0 708.6L988.4 708.0L990.1 707.6L991.6 706.1L993.2 705.7L994.6 705.4L995.7 704.8L997.6 703.9L999.0 703.2L1000.3 702.7L1001.7 702.0L1003.7 701.4L1005.3 701.6L1007.1 700.1L1008.7 700.1L1009.9 699.3L1011.6 698.5L1013.4 699.0L1014.9 698.4L1016.6 697.2L1018.2 697.4L1019.8 697.2L1021.1 696.4L1022.7 696.8L1024.2 695.8L1025.7 695.5L1026.8 694.7L1028.2 694.5L1029.8 694.5L1031.7 694.3L1033.1 694.2L1034.5 693.7L1036.4 693.4L1037.6 693.7L1039.4 692.8L1040.8 692.8L1042.5 692.2L1043.7 691.9L1045.5 692.0" fill="none" stroke="#7ca61f" stroke-width="2.4" stroke-linejoin="round"/><path d="M911.2 796.2L916.0 784.0L920.0 775.5L925.0 766.0L932.0 754.5L940.0 743.5L948.0 735.0L956.0 728.0L965.0 721.5L977.0 714.0L990.0 708.0L1002.0 703.0L1015.0 699.5L1030.0 697.0L1045.0 695.0" fill="none" stroke="#1212e6" stroke-width="2.7"/><path d="M714 632V941M714 941.5H1106" stroke="#000" stroke-width="1.2" fill="none"/><path d="M811.5 632V941M871.5 632V941M1045.5 632V941" stroke="#000" stroke-width="1"/><path d="M811.5 691.5H1106M714 903.5H1106" stroke="#000" stroke-width="1"/><path d="M832.5 797.5H911" stroke="#000" stroke-width="1"/><path d="M719.5 639.2H740.5" stroke="#000" stroke-width="1.6"/><path d="M825.3 761L827.5 769.5" stroke="#000" stroke-width="1.8"/><path d="M897.5 821.5H907.5M902 816.5V826.5" stroke="#5a3fa0" stroke-width="1"/><path d="M710.5 641.5H714" stroke="#000" stroke-width="1.2"/><path d="M712.5 653.5H714" stroke="#000" stroke-width="1"/><path d="M712.5 665.5H714" stroke="#000" stroke-width="1"/><path d="M712.5 677.5H714" stroke="#000" stroke-width="1"/><path d="M710.5 689.5H714" stroke="#000" stroke-width="1.2"/><path d="M712.5 701.5H714" stroke="#000" stroke-width="1"/><path d="M712.5 713.5H714" stroke="#000" stroke-width="1"/><path d="M712.5 725.5H714" stroke="#000" stroke-width="1"/><path d="M710.5 737.5H714" stroke="#000" stroke-width="1.2"/><path d="M712.5 749.5H714" stroke="#000" stroke-width="1"/><path d="M712.5 760.5H714" stroke="#000" stroke-width="1"/><path d="M712.5 772.5H714" stroke="#000" stroke-width="1"/><path d="M710.5 784.5H714" stroke="#000" stroke-width="1.2"/><path d="M712.5 796.5H714" stroke="#000" stroke-width="1"/><path d="M712.5 808.5H714" stroke="#000" stroke-width="1"/><path d="M712.5 820.5H714" stroke="#000" stroke-width="1"/><path d="M710.5 832.5H714" stroke="#000" stroke-width="1.2"/><path d="M712.5 844.5H714" stroke="#000" stroke-width="1"/><path d="M712.5 856.5H714" stroke="#000" stroke-width="1"/><path d="M712.5 868.5H714" stroke="#000" stroke-width="1"/><path d="M710.5 880.5H714" stroke="#000" stroke-width="1.2"/><path d="M712.5 892.5H714" stroke="#000" stroke-width="1"/><path d="M712.5 904.5H714" stroke="#000" stroke-width="1"/><path d="M712.5 916.5H714" stroke="#000" stroke-width="1"/><path d="M710.5 928.5H714" stroke="#000" stroke-width="1.2"/><path d="M712.5 940.5H714" stroke="#000" stroke-width="1"/><path d="M724.5 941V944.5" stroke="#000" stroke-width="1"/><path d="M739.5 941V943" stroke="#000" stroke-width="1"/><path d="M754.5 941V943" stroke="#000" stroke-width="1"/><path d="M768.5 941V943" stroke="#000" stroke-width="1"/><path d="M783.5 941V943" stroke="#000" stroke-width="1"/><path d="M798.5 941V944.5" stroke="#000" stroke-width="1"/><path d="M812.5 941V943" stroke="#000" stroke-width="1"/><path d="M827.5 941V943" stroke="#000" stroke-width="1"/><path d="M842.5 941V943" stroke="#000" stroke-width="1"/><path d="M856.5 941V943" stroke="#000" stroke-width="1"/><path d="M871.5 941V944.5" stroke="#000" stroke-width="1"/><path d="M886.5 941V943" stroke="#000" stroke-width="1"/><path d="M900.5 941V943" stroke="#000" stroke-width="1"/><path d="M915.5 941V943" stroke="#000" stroke-width="1"/><path d="M929.5 941V943" stroke="#000" stroke-width="1"/><path d="M944.5 941V944.5" stroke="#000" stroke-width="1"/><path d="M959.5 941V943" stroke="#000" stroke-width="1"/><path d="M973.5 941V943" stroke="#000" stroke-width="1"/><path d="M988.5 941V943" stroke="#000" stroke-width="1"/><path d="M1003.5 941V943" stroke="#000" stroke-width="1"/><path d="M1017.5 941V944.5" stroke="#000" stroke-width="1"/><path d="M1032.5 941V943" stroke="#000" stroke-width="1"/><path d="M1047.5 941V943" stroke="#000" stroke-width="1"/><path d="M1061.5 941V943" stroke="#000" stroke-width="1"/><path d="M1076.5 941V943" stroke="#000" stroke-width="1"/><path d="M1090.5 941V944.5" stroke="#000" stroke-width="1"/><path d="M1105.5 941V943" stroke="#000" stroke-width="1"/></svg>
<span class="t" style="left:700.88px;top:635.69px;font-size:11px;line-height:11px;color:#000;">2</span>
<span class="t" style="left:700.88px;top:683.49px;font-size:11px;line-height:11px;color:#000;">0</span>
<span class="t" style="left:697.22px;top:731.29px;font-size:11px;line-height:11px;color:#000;">-2</span>
<span class="t" style="left:697.22px;top:779.09px;font-size:11px;line-height:11px;color:#000;">-4</span>
<span class="t" style="left:697.22px;top:826.89px;font-size:11px;line-height:11px;color:#000;">-6</span>
<span class="t" style="left:697.22px;top:874.69px;font-size:11px;line-height:11px;color:#000;">-8</span>
<span class="t" style="left:691.10px;top:922.49px;font-size:11px;line-height:11px;color:#000;">-10</span>
<span class="t" style="left:710.46px;top:949.69px;font-size:11px;line-height:11px;color:#000;letter-spacing:-0.200px;">-0.10</span>
<span class="t" style="left:783.66px;top:949.69px;font-size:11px;line-height:11px;color:#000;letter-spacing:-0.200px;">-0.05</span>
<span class="t" style="left:860.70px;top:949.69px;font-size:11px;line-height:11px;color:#000;letter-spacing:-0.250px;">0.00</span>
<span class="t" style="left:933.90px;top:949.69px;font-size:11px;line-height:11px;color:#000;letter-spacing:-0.250px;">0.05</span>
<span class="t" style="left:1007.10px;top:949.69px;font-size:11px;line-height:11px;color:#000;letter-spacing:-0.250px;">0.10</span>
<span class="t" style="left:1080.30px;top:949.69px;font-size:11px;line-height:11px;color:#000;letter-spacing:-0.250px;">0.15</span>
<span class="t" style="left:741.50px;top:634.69px;font-size:11px;line-height:11px;color:#000;letter-spacing:-0.427px;">Slope</span>
<span class="t" style="left:716.00px;top:680.83px;font-size:10px;line-height:10px;color:#000;letter-spacing:-0.421px;">Baseline</span>
<span class="t" style="left:834.50px;top:786.53px;font-size:10px;line-height:10px;color:#000;letter-spacing:-0.099px;">Width50</span>
<span class="t" style="left:716.00px;top:893.33px;font-size:10px;line-height:10px;color:#000;letter-spacing:-0.293px;">APeak</span>
<span class="t" style="left:663px;top:787.5px;font-size:11px;line-height:11px;color:#000;letter-spacing:0px;transform:translate(-50%,-50%) rotate(-90deg)">Force (mV)</span>
<span class="t" style="left:805px;top:927px;font-size:10px;line-height:10px;color:#000;letter-spacing:0px;transform:translate(-50%,-50%) rotate(-90deg)">Start</span>
<span class="t" style="left:864.5px;top:927px;font-size:10px;line-height:10px;color:#000;letter-spacing:0px;transform:translate(-50%,-50%) rotate(-90deg)">Peak</span>
<span class="t" style="left:1038.5px;top:928.5px;font-size:10px;line-height:10px;color:#000;letter-spacing:0px;transform:translate(-50%,-50%) rotate(-90deg)">End</span>
<div style="left:656px;top:908px;width:16px;height:16px;background:#fff;border:1px solid #1f4e8c;"></div>
<svg style="left:656px;top:908px;" width="16" height="16" viewBox="0 0 16 16"><path d="M3.5 8H12.5" stroke="#000" stroke-width="2" fill="none"/><path d="M8 3.5V12.5" stroke="#000" stroke-width="2" fill="none"/></svg>
<div style="left:656px;top:924px;width:16px;height:16px;background:#fff;border:1px solid #1f4e8c;"></div>
<svg style="left:656px;top:924px;" width="16" height="16" viewBox="0 0 16 16"><path d="M3.5 8H12.5" stroke="#000" stroke-width="2" fill="none"/></svg>
<div style="left:716px;top:984px;width:16px;height:16px;background:#fff;border:1px solid #1f4e8c;"></div>
<svg style="left:716px;top:984px;" width="16" height="16" viewBox="0 0 16 16"><path d="M3.5 8H12.5" stroke="#000" stroke-width="2" fill="none"/></svg>
<div style="left:732px;top:984px;width:16px;height:16px;background:#fff;border:1px solid #1f4e8c;"></div>
<svg style="left:732px;top:984px;" width="16" height="16" viewBox="0 0 16 16"><path d="M3.5 8H12.5" stroke="#000" stroke-width="2" fill="none"/><path d="M8 3.5V12.5" stroke="#000" stroke-width="2" fill="none"/></svg>
<span class="t" style="left:890.50px;top:988.19px;font-size:11px;line-height:11px;color:#000;letter-spacing:-0.302px;">Time (s)</span>
<div style="left:1088px;top:984px;width:16px;height:16px;background:#fff;border:1px solid #1f4e8c;"></div>
<svg style="left:1088px;top:984px;" width="16" height="16" viewBox="0 0 16 16"><path d="M3.5 6H12.5L8 11Z" fill="#000"/></svg>
<div style="left:648px;top:1009px;width:464px;height:17px;background:#f0f0f0;"></div>
<svg style="left:651px;top:1012px;" width="8" height="10" viewBox="0 0 8 10"><path d="M6 1L2 5L6 9" fill="none" stroke="#606060" stroke-width="1.8"/></svg>
<svg style="left:1100px;top:1012px;" width="8" height="10" viewBox="0 0 8 10"><path d="M2 1L6 5L2 9" fill="none" stroke="#606060" stroke-width="1.8"/></svg>
<div style="left:664px;top:1009px;width:54px;height:17px;background:#cdcdcd;"></div>
<div style="left:647px;top:1026px;width:20px;height:20px;background:#f0f0f0;border:1px solid #fff;border-right:2px solid #696969;border-bottom:2px solid #696969;"></div>
<svg style="left:651px;top:1033px;" width="10" height="6" viewBox="0 0 10 6"><path d="M0 0H10L5 5.5Z" fill="#000"/></svg>
<div style="left:667px;top:1026px;width:446px;height:20px;background:#f0f0f0;border-top:1px solid #a0a0a0;border-left:1px solid #a0a0a0;border-bottom:1px solid #fff;"></div>
<span class="t" style="left:674.00px;top:1029.84px;font-size:12px;line-height:12px;color:#000;letter-spacing:-0.347px;">PeakArea: -0.531573 mV.s, Event 1 of 8.</span>
<div style="left:1119px;top:95px;width:1px;height:957px;background:#a3a8b0;"></div>
<!-- main_frame -->
<div style="left:0px;top:0px;width:1920px;height:23px;background:#0078d7;"></div>
<svg style="left:3.5px;top:5px;" width="14" height="12" viewBox="0 0 14 12"><rect x="0" y="0" width="13.3" height="12" fill="#27508c"/><path d="M0.5 6.5H2L3.5 10.5L5 1L6.5 8L7.5 5L8.5 7L9.5 5.5L10.5 6.5H12.5M9 3L12 9M12 3L9 9" fill="none" stroke="#fff" stroke-width=".9"/></svg>
<span class="t" style="left:23.00px;top:5.84px;font-size:12px;line-height:12px;color:#fff;letter-spacing:-0.171px;">LabChart</span>
<svg style="left:1790px;top:0px;" width="130" height="23" viewBox="0 0 130 23"><path d="M9 10.5H19" stroke="#fff" stroke-width="1"/><rect x="54.5" y="7.5" width="7" height="7" fill="none" stroke="#fff" stroke-width="1"/><path d="M56.5 7.5V5.5H63.5V12.5H61.5" fill="none" stroke="#fff" stroke-width="1"/><path d="M100 5.5L110 15.5M110 5.5L100 15.5" stroke="#fff" stroke-width="1.1"/></svg>
<div style="left:0px;top:23px;width:1920px;height:18px;background:#fff;"></div>
<span class="t" style="left:7.00px;top:26.84px;font-size:12px;line-height:12px;color:#000;letter-spacing:-0.334px;">File</span>
<span class="t" style="left:39.00px;top:26.84px;font-size:12px;line-height:12px;color:#000;letter-spacing:-0.169px;">Edit</span>
<span class="t" style="left:73.00px;top:26.84px;font-size:12px;line-height:12px;color:#000;letter-spacing:-0.272px;">Setup</span>
<span class="t" style="left:117.00px;top:26.84px;font-size:12px;line-height:12px;color:#000;letter-spacing:0.081px;">Commands</span>
<span class="t" style="left:193.00px;top:26.84px;font-size:12px;line-height:12px;color:#000;letter-spacing:0.132px;">Macro</span>
<span class="t" style="left:241.00px;top:26.84px;font-size:12px;line-height:12px;color:#000;letter-spacing:-0.285px;">Peak Analysis</span>
<span class="t" style="left:326.00px;top:26.84px;font-size:12px;line-height:12px;color:#000;letter-spacing:0.220px;">Window</span>
<span class="t" style="left:384.00px;top:26.84px;font-size:12px;line-height:12px;color:#000;letter-spacing:0.080px;">Help</span>
<div style="left:0px;top:41px;width:1920px;height:52px;background:#f0f0f0;"></div>
<div style="left:0px;top:92px;width:1920px;height:1px;background:#cfcfcf;"></div>
<div style="left:0px;top:93px;width:1920px;height:1px;background:#8f8f8f;"></div>
<div style="left:0px;top:94px;width:1920px;height:1px;background:#6a6a6a;"></div>
<div style="left:167px;top:46px;width:1px;height:44px;background:#dcdcdc;"></div>
<div style="left:288px;top:46px;width:1px;height:44px;background:#dcdcdc;"></div>
<div style="left:449px;top:46px;width:1px;height:44px;background:#dcdcdc;"></div>
<div style="left:519px;top:46px;width:1px;height:44px;background:#dcdcdc;"></div>
<div style="left:695px;top:46px;width:1px;height:44px;background:#dcdcdc;"></div>
<div style="left:788px;top:46px;width:1px;height:44px;background:#dcdcdc;"></div>
<span class="t" style="left:75.50px;top:76.84px;font-size:12px;line-height:12px;color:#2b579a;letter-spacing:-0.084px;">File</span>
<span class="t" style="left:199.00px;top:76.84px;font-size:12px;line-height:12px;color:#2b579a;letter-spacing:0.081px;">Commands</span>
<span class="t" style="left:346.50px;top:76.84px;font-size:12px;line-height:12px;color:#2b579a;letter-spacing:-0.379px;">Data Pad</span>
<span class="t" style="left:456.50px;top:76.84px;font-size:12px;line-height:12px;color:#2b579a;letter-spacing:0.123px;">Comments</span>
<span class="t" style="left:587.00px;top:76.84px;font-size:12px;line-height:12px;color:#2b579a;letter-spacing:0.220px;">Window</span>
<span class="t" style="left:726.00px;top:76.84px;font-size:12px;line-height:12px;color:#2b579a;letter-spacing:-0.005px;">Layout</span>
<span class="t" style="left:814.50px;top:76.84px;font-size:12px;line-height:12px;color:#2b579a;letter-spacing:-0.285px;">Peak Analysis</span>
<span class="t" style="left:1856.00px;top:76.84px;font-size:12px;line-height:12px;color:#2b579a;letter-spacing:-0.003px;">Sampling</span>
<div style="left:1852px;top:47px;width:61px;height:25px;background:#e1e1e1;border:1px solid #adadad;"></div>
<svg style="left:1861px;top:53px;" width="10" height="14" viewBox="0 0 10 14"><path d="M0.5 0.5L9 7L0.5 13.5Z" fill="#57b947" stroke="#8f8aa8" stroke-width="1"/></svg>
<span class="t" style="left:1879.00px;top:53.84px;font-size:12px;line-height:12px;color:#000;letter-spacing:-0.268px;">Start</span>
<svg style="left:9px;top:48px;" width="24" height="24" viewBox="0 0 24 24"><rect x="1.5" y="3.5" width="20" height="18" fill="#dcebfa" stroke="#5a7fae"/><rect x="2" y="11" width="19" height="10" fill="#a9cdf0"/><path d="M2 12.5H7L9 8.5L11 15.5L13 11.5H21" fill="none" stroke="#2a8a7a" stroke-width="1.3"/><path d="M3 6.5H20M3 19H20" stroke="#222" stroke-width="1.1" stroke-dasharray="2 1.5"/><path d="M17.5 0V8.5M13.2 4.2H21.8" stroke="#fff" stroke-width="4.2"/><path d="M17.5 0.5V8M13.7 4.2H21.3" stroke="#3aa935" stroke-width="2.6"/></svg>
<svg style="left:37px;top:48px;" width="24" height="24" viewBox="0 0 24 24"><path d="M1 4H9L11 6H22V19H1Z" fill="#d6e4f5" stroke="#5f85b8"/><path d="M1 10H22V19H1Z" fill="#9fc0e8" stroke="#5f85b8"/><path d="M4 9C9 5 15 6 17 12" fill="none" stroke="#fff" stroke-width="2.5"/><path d="M14 12H21L17.5 16Z" fill="#fff"/></svg>
<svg style="left:63px;top:48px;" width="10" height="24" viewBox="0 0 10 24"><path d="M1 11H8L4.5 15Z" fill="#333"/></svg>
<svg style="left:77px;top:48px;" width="24" height="24" viewBox="0 0 24 24"><rect x="6.5" y="2.5" width="14" height="19" fill="#c9c9c9" stroke="#6b6b6b"/><rect x="9" y="5" width="9" height="3" fill="#efefef"/><path d="M0 9H7V5L15 12L7 19V15H0Z" fill="#3dae3a" stroke="#1f7a22"/></svg>
<svg style="left:105px;top:48px;" width="24" height="24" viewBox="0 0 24 24"><rect x="5.5" y="2.5" width="13" height="7" fill="#f5f5f5" stroke="#555"/><rect x="1.5" y="8.5" width="21" height="9" rx="2" fill="#6a6a6a" stroke="#3a3a3a"/><rect x="5.5" y="14.5" width="13" height="7" fill="#fafafa" stroke="#555"/><path d="M7 17H17M7 19H17" stroke="#999"/></svg>
<svg style="left:132px;top:48px;" width="24" height="24" viewBox="0 0 24 24"><path d="M2.5 9.5H8V12H5V19H16V16H19V21.5H2.5Z" fill="#d6d6d6" stroke="#777"/><path d="M6 17C6 10 10 7 15 7V3L22 9L15 15V11C11 11 8 13 6 17Z" fill="#54b948" stroke="#2e8a2c"/></svg>
<svg style="left:155px;top:48px;" width="10" height="24" viewBox="0 0 10 24"><path d="M1 11H8L4.5 15Z" fill="#333"/></svg>
<svg style="left:177px;top:48px;" width="24" height="24" viewBox="0 0 24 24"><path d="M3 2H9V7L11 20H1L3 7Z" fill="#222"/><path d="M13 2H19V7L21 20H11L13 7Z" fill="#222"/><rect x="8" y="6" width="6" height="5" fill="#333"/><path d="M3 3H8M14 3H19" stroke="#888"/></svg>
<svg style="left:205px;top:48px;" width="24" height="24" viewBox="0 0 24 24"><path d="M3 2H9V7L11 20H1L3 7Z" fill="#c4c4c4"/><path d="M13 2H19V7L21 20H11L13 7Z" fill="#c4c4c4"/><rect x="8" y="6" width="6" height="5" fill="#c9c9c9"/><path d="M16 10A5 5 0 1 1 9 14" fill="none" stroke="#eee" stroke-width="2.5"/></svg>
<svg style="left:233px;top:48px;" width="24" height="24" viewBox="0 0 24 24"><path d="M3 2V22M3 2H6M3 22H6M3 7H5M3 12H5M3 17H5" stroke="#333" fill="none"/><path d="M7 10L13.5 3L20 10Z" fill="#5cb84d" stroke="#2f8a2f"/><path d="M7 14L13.5 21L20 14Z" fill="#5cb84d" stroke="#2f8a2f"/></svg>
<svg style="left:259px;top:48px;" width="24" height="24" viewBox="0 0 24 24"><path d="M3 2V22M3 2H6M3 22H6M3 7H5M3 12H5M3 17H5" stroke="#333" fill="none"/><path d="M7 10L13 4L19 10Z" fill="#e3e3e3" stroke="#999"/><path d="M7 14L13 20L19 14Z" fill="#e3e3e3" stroke="#999"/><circle cx="20" cy="12" r="4.5" fill="#e9e9e9" stroke="#777"/><path d="M12 19L24 6" stroke="#d9202a" stroke-width="1.6"/></svg>
<svg style="left:298px;top:48px;" width="24" height="24" viewBox="0 0 24 24"><rect x="1.5" y="2.5" width="20" height="17" fill="#fff" stroke="#4a4a4a"/><rect x="3" y="4" width="17" height="2.5" fill="#5d78b3"/><path d="M3 8.5H20" stroke="#5d78b3" stroke-width="1"/><path d="M3 11H20" stroke="#5d78b3" stroke-width="1"/><path d="M3 13.5H20" stroke="#5d78b3" stroke-width="1"/><path d="M3 16H20" stroke="#5d78b3" stroke-width="1"/><path d="M3 18.5H20" stroke="#5d78b3" stroke-width="1"/><path d="M7.5 7V19M11.5 7V19M15.5 7V19" stroke="#fff" stroke-width="1"/></svg>
<svg style="left:326px;top:48px;" width="24" height="24" viewBox="0 0 24 24"><rect x="1.5" y="2.5" width="20" height="17" fill="#fff" stroke="#b9b9c9"/><rect x="3" y="4" width="17" height="2.5" fill="#c5cbe0"/><path d="M3 8.5H20" stroke="#c5cbe0" stroke-width="1"/><path d="M3 11H20" stroke="#c5cbe0" stroke-width="1"/><path d="M3 13.5H20" stroke="#c5cbe0" stroke-width="1"/><path d="M3 16H20" stroke="#c5cbe0" stroke-width="1"/><path d="M3 18.5H20" stroke="#c5cbe0" stroke-width="1"/><path d="M7.5 7V19M11.5 7V19M15.5 7V19" stroke="#fff" stroke-width="1"/><path d="M18 1V9M14 5H22" stroke="#c9c9d3" stroke-width="3"/></svg>
<svg style="left:354px;top:48px;" width="24" height="24" viewBox="0 0 24 24"><rect x="1.5" y="2.5" width="20" height="17" fill="#fff" stroke="#4a4a4a"/><rect x="3" y="4" width="17" height="2.5" fill="#5d78b3"/><path d="M3 8.5H20" stroke="#5d78b3" stroke-width="1"/><path d="M3 11H20" stroke="#5d78b3" stroke-width="1"/><path d="M3 13.5H20" stroke="#5d78b3" stroke-width="1"/><path d="M3 16H20" stroke="#5d78b3" stroke-width="1"/><path d="M3 18.5H20" stroke="#5d78b3" stroke-width="1"/><path d="M7.5 7V19M11.5 7V19M15.5 7V19" stroke="#fff" stroke-width="1"/><path d="M18 0V8M14 4H22" stroke="#3aa935" stroke-width="3"/><path d="M16 13A4 4 0 1 1 10 16" fill="none" stroke="#ddd" stroke-width="2.2"/></svg>
<svg style="left:382px;top:48px;" width="24" height="24" viewBox="0 0 24 24"><rect x="1.5" y="2.5" width="20" height="17" fill="#fff" stroke="#4a4a4a"/><rect x="3" y="4" width="17" height="2.5" fill="#5d78b3"/><path d="M3 8.5H20" stroke="#5d78b3" stroke-width="1"/><path d="M3 11H20" stroke="#5d78b3" stroke-width="1"/><path d="M3 13.5H20" stroke="#5d78b3" stroke-width="1"/><path d="M3 16H20" stroke="#5d78b3" stroke-width="1"/><path d="M3 18.5H20" stroke="#5d78b3" stroke-width="1"/><path d="M7.5 7V19M11.5 7V19M15.5 7V19" stroke="#fff" stroke-width="1"/><path d="M9 9L15 15M15 10V15H10" stroke="#ddd" stroke-width="2" fill="none"/><rect x="12" y="14" width="10" height="8" fill="#222"/><path d="M14 16H16V20H14M18 16V20" stroke="#fff" stroke-width="1" fill="none"/></svg>
<svg style="left:408px;top:48px;" width="10" height="24" viewBox="0 0 10 24"><path d="M1 11H8L4.5 15Z" fill="#333"/></svg>
<svg style="left:422px;top:48px;" width="24" height="24" viewBox="0 0 24 24"><rect x="1.5" y="2.5" width="20" height="17" fill="#fff" stroke="#4a4a4a"/><path d="M4 4V17H20" fill="none" stroke="#2a4a9a"/><path d="M6 5C7 11 11 14 19 14.5" fill="none" stroke="#c727c7" stroke-width="2" stroke-dasharray="2 1.2"/><path d="M4 17H20" stroke="#d22" stroke-dasharray="1.5 1.5"/></svg>
<svg style="left:459px;top:48px;" width="24" height="24" viewBox="0 0 24 24"><path d="M1.5 3.5H20.5V16.5H9L4 21V16.5H1.5Z" fill="#f4f4f4" stroke="#bdbdbd"/><path d="M4 7H14M4 10H12M4 13H14" stroke="#d5d5d5"/><path d="M14 6H23L18.5 11Z" fill="#9a9a9a"/></svg>
<svg style="left:487px;top:48px;" width="26" height="24" viewBox="0 0 26 24"><path d="M1.5 4.5H18.5V16.5H8L3.5 21V16.5H1.5Z" fill="#fbe6a8" stroke="#c9a85a"/><path d="M4 8H15M4 10.5H13M4 13H15" stroke="#c9a04a" stroke-dasharray="1 1"/><path d="M19 0V9M14.5 4.5H23.5" stroke="#3aa935" stroke-width="2.6"/></svg>
<svg style="left:529px;top:48px;" width="24" height="24" viewBox="0 0 24 24"><rect x="1.5" y="3.5" width="20" height="16" fill="#f3f3f3" stroke="#8a8a8a"/><path d="M3 7H20M3 10H20M3 13H20M3 16H20" stroke="#7a7" stroke-dasharray="1 1"/><path d="M3 10H20" stroke="#c55" stroke-dasharray="1 1"/></svg>
<svg style="left:557px;top:48px;" width="24" height="24" viewBox="0 0 24 24"><rect x="1.5" y="3.5" width="20" height="16" fill="#f3f3f3" stroke="#8a8a8a"/><path d="M2 14C5 2 8 2 11 11S17 20 21 7" fill="none" stroke="#2f9a3a" stroke-width="1.8"/></svg>
<svg style="left:585px;top:48px;" width="24" height="24" viewBox="0 0 24 24"><rect x="1.5" y="3.5" width="16" height="14" fill="#f3f3f3" stroke="#8a8a8a"/><circle cx="10" cy="10" r="6" fill="#cfe2f7" stroke="#5b7fb3" stroke-width="1.6"/><path d="M14.5 14.5L21 21" stroke="#8a6a3a" stroke-width="3"/></svg>
<svg style="left:613px;top:48px;" width="24" height="24" viewBox="0 0 24 24"><path d="M3 2V19H21" fill="none" stroke="#444"/><circle cx="11" cy="9" r="4" fill="#ddd" stroke="#999"/><circle cx="13" cy="11" r="3" fill="none" stroke="#777"/><path d="M3 21H21" stroke="#56a" stroke-dasharray="2 1"/></svg>
<svg style="left:641px;top:48px;" width="24" height="24" viewBox="0 0 24 24"><rect x="1.5" y="3.5" width="20" height="16" fill="#eef4fb" stroke="#8a8a8a"/><path d="M4 18V13H7V18M8 18V10H11V18M12 18V8H15V18M16 18V12H19V18" fill="#e3a23a"/><path d="M3 18H20" stroke="#3a9a3a" stroke-width="2"/><path d="M4 8L9 6L14 7L19 5" stroke="#c33" fill="none"/></svg>
<svg style="left:669px;top:48px;" width="24" height="24" viewBox="0 0 24 24"><rect x="1.5" y="1.5" width="12" height="15" fill="#f5f5f5" stroke="#999"/><rect x="9.5" y="6.5" width="12" height="15" fill="#f5f5f5" stroke="#999"/><path d="M4 5H11M4 8H9M12 11H19M12 14H19M12 17H19" stroke="#bbb"/></svg>
<svg style="left:705px;top:48px;" width="24" height="24" viewBox="0 0 24 24"><g fill="#fff" stroke="#5f5f5f" stroke-width="1"><rect x="1.5" y="2.5" width="9" height="8.5"/><rect x="12.5" y="2.5" width="9" height="8.5"/><rect x="1.5" y="13" width="9" height="8.5"/><rect x="12.5" y="13" width="9" height="8.5"/></g></svg>
<svg style="left:733px;top:48px;" width="24" height="24" viewBox="0 0 24 24"><g fill="#fff" stroke="#777" stroke-width="1"><rect x="1.5" y="2.5" width="5.7" height="5"/><rect x="8.7" y="2.5" width="5.7" height="5"/><rect x="15.9" y="2.5" width="5.7" height="5"/><rect x="1.5" y="10.5" width="9" height="9"/><rect x="12.5" y="10.5" width="9" height="9"/></g></svg>
<svg style="left:761px;top:48px;" width="24" height="24" viewBox="0 0 24 24"><g fill="#fff" stroke="#666" stroke-width="1"><rect x="0.5" y="3.5" width="15" height="10"/><rect x="4.5" y="11.5" width="15" height="10"/></g><path d="M19 0V9M14.5 4.5H23.5" stroke="#3aa935" stroke-width="2.6"/></svg>
<svg style="left:798px;top:48px;" width="24" height="24" viewBox="0 0 24 24"><rect x="1.5" y="3.5" width="20" height="16" fill="#f3f3f3" stroke="#8a8a8a"/><path d="M6 6V16M4 9H8M11 7V15M16 6V16M14 12H18" stroke="#333"/><path d="M3 11H20" stroke="#888" stroke-dasharray="1 1"/></svg>
<svg style="left:826px;top:48px;" width="24" height="24" viewBox="0 0 24 24"><rect x="1.5" y="3.5" width="20" height="16" fill="#f3f3f3" stroke="#8a8a8a"/><path d="M3 17C8 17 9 6 11.5 6S15 17 20 17Z" fill="#f3c4c4" stroke="#c22" stroke-width="1.2"/><path d="M3 18H20" stroke="#338"/></svg>
<svg style="left:854px;top:48px;" width="24" height="24" viewBox="0 0 24 24"><rect x="1.5" y="2.5" width="20" height="17" fill="#fff" stroke="#4a4a4a"/><rect x="3" y="4" width="17" height="2.5" fill="#5d78b3"/><path d="M3 8.5H20" stroke="#5d78b3" stroke-width="1"/><path d="M3 11H20" stroke="#5d78b3" stroke-width="1"/><path d="M3 13.5H20" stroke="#5d78b3" stroke-width="1"/><path d="M3 16H20" stroke="#5d78b3" stroke-width="1"/><path d="M3 18.5H20" stroke="#5d78b3" stroke-width="1"/><path d="M7.5 7V19M11.5 7V19M15.5 7V19" stroke="#fff" stroke-width="1"/></svg>
<svg style="left:882px;top:48px;" width="26" height="24" viewBox="0 0 26 24"><rect x="1.5" y="2.5" width="14" height="3" fill="#7a7" stroke="#575"/><rect x="1.5" y="7.5" width="14" height="3" fill="#ddd" stroke="#999"/><rect x="1.5" y="12.5" width="14" height="3" fill="#ddd" stroke="#999"/><circle cx="17" cy="16" r="6.5" fill="#44b035" stroke="#2a8a22"/><path d="M15 12.5L20.5 16L15 19.5Z" fill="#fff"/></svg>
<div style="left:0px;top:1052px;width:1920px;height:1px;background:#a6a6a6;"></div>
<div style="left:0px;top:1053px;width:1920px;height:2px;background:linear-gradient(#dcdcdc,#f0f0f0);"></div>
<div style="left:0px;top:1055px;width:1920px;height:23px;background:#f0f0f0;"></div>
<div style="left:0px;top:1078px;width:1920px;height:2px;background:#1f2f47;"></div>
<div style="left:2px;top:1057px;width:26px;height:20px;background:#e1e1e1;border:1px solid #adadad;"></div>
<svg style="left:8px;top:1059px;" width="14" height="16" viewBox="0 0 14 16"><path d="M0.5 7.5L7 1L13.5 7.5" fill="none" stroke="#5b86c9" stroke-width="1.6"/><path d="M2.5 7V14.5H11.5V7L7 2.8Z" fill="#f4f8fd" stroke="#9fb5d6" stroke-width=".8"/><rect x="8" y="9" width="2.5" height="5.5" fill="#3b68b5"/><rect x="4" y="8.5" width="2.5" height="2.5" fill="#3b68b5"/></svg>
<div style="left:34px;top:1057px;width:118px;height:20px;background:#cce4f7;border:1px solid #1464a8;"></div>
<svg style="left:38px;top:1061px;" width="14" height="14" viewBox="0 0 14 14"><circle cx="7" cy="7" r="6.6" fill="#62b83a" stroke="#4a9a2a" stroke-width=".8"/><ellipse cx="6" cy="4.6" rx="3.6" ry="2.4" fill="#a9df86" opacity=".75"/></svg>
<span class="t" style="left:56.30px;top:1060.84px;font-size:12px;line-height:12px;color:#000;letter-spacing:-0.218px;">Frog Muscle an...</span>
<div style="left:1616px;top:1055px;width:1px;height:22px;background:#d7d7d7;"></div>
<div style="left:1793px;top:1055px;width:1px;height:22px;background:#d7d7d7;"></div>
<div style="left:1854px;top:1055px;width:1px;height:22px;background:#d7d7d7;"></div>
<span class="t" style="left:1800.70px;top:1060.54px;font-size:12px;line-height:12px;color:#000;letter-spacing:-0.775px;">33.28 GB</span>
<!-- stim_panel -->
<div style="left:52px;top:256px;width:439px;height:237.5px;background:#f0f0f0;box-shadow:0 2px 9px 1px rgba(0,0,0,.38);"></div>
<div style="left:52px;top:256px;width:439px;height:31px;background:#0078d7;"></div>
<span class="t" style="left:60.00px;top:265.84px;font-size:12px;line-height:12px;color:#fff;letter-spacing:-0.080px;">Stimulator - Frog Muscle and CAP</span>
<div style="left:471px;top:264px;width:19px;height:19px;background:#c75050;"></div>
<svg style="left:477px;top:270px;" width="8" height="8" viewBox="0 0 8 8"><path d="M1 1L7 7M7 1L1 7" stroke="#fff" stroke-width="1.7"/></svg>
<span class="t" style="left:57.50px;top:295.99px;font-size:11px;line-height:11px;color:#000;letter-spacing:0.049px;">Output 1: Custom - Output 1</span>
<div style="left:427px;top:290px;width:60px;height:22px;background:#e1e1e1;border:1px solid #adadad;"></div>
<span class="t" style="left:432.50px;top:296.49px;font-size:11px;line-height:11px;color:#000;letter-spacing:0.183px;">Stimulate</span>
<span class="t" style="left:69.50px;top:320.19px;font-size:11px;line-height:11px;color:#000;letter-spacing:-0.140px;">Max Repeat Rate</span>
<div style="left:70px;top:334.2px;width:93px;height:20px;background:#fff;border:1px solid #7a7a7a;"></div>
<div style="left:146px;top:335.2px;width:16px;height:18px;background:#f0f0f0;border-left:1px solid #c9c9c9;"></div>
<div style="left:147px;top:336.2px;width:14px;height:8px;background:#e9e9e9;border:1px solid #d0d0d0;"></div>
<div style="left:147px;top:344.2px;width:14px;height:8px;background:#e9e9e9;border:1px solid #d0d0d0;"></div>
<svg style="left:151px;top:338.7px;" width="6" height="11" viewBox="0 0 6 11"><path d="M0 3.5L3 0.5L6 3.5ZM0 7.5L3 10.5L6 7.5Z" fill="#000"/></svg>
<span class="t" style="left:129.77px;top:338.99px;font-size:11px;line-height:11px;color:#000;">40</span>
<span class="t" style="left:171.00px;top:339.99px;font-size:11px;line-height:11px;color:#000;">Hz</span>
<span class="t" style="left:210.50px;top:320.19px;font-size:11px;line-height:11px;color:#000;letter-spacing:-0.281px;">Pulse Height</span>
<div style="left:211px;top:334.2px;width:93px;height:20px;background:#fff;border:1px solid #7a7a7a;"></div>
<div style="left:287px;top:335.2px;width:16px;height:18px;background:#f0f0f0;border-left:1px solid #c9c9c9;"></div>
<div style="left:288px;top:336.2px;width:14px;height:8px;background:#e9e9e9;border:1px solid #d0d0d0;"></div>
<div style="left:288px;top:344.2px;width:14px;height:8px;background:#e9e9e9;border:1px solid #d0d0d0;"></div>
<svg style="left:292px;top:338.7px;" width="6" height="11" viewBox="0 0 6 11"><path d="M0 3.5L3 0.5L6 3.5ZM0 7.5L3 10.5L6 7.5Z" fill="#000"/></svg>
<span class="t" style="left:276.88px;top:338.99px;font-size:11px;line-height:11px;color:#000;">0</span>
<span class="t" style="left:312.00px;top:339.99px;font-size:11px;line-height:11px;color:#000;">V</span>
<span class="t" style="left:351.50px;top:320.19px;font-size:11px;line-height:11px;color:#000;letter-spacing:-0.244px;">Pulse Width</span>
<div style="left:352px;top:334.2px;width:93px;height:20px;background:#fff;border:1px solid #7a7a7a;"></div>
<div style="left:428px;top:335.2px;width:16px;height:18px;background:#f0f0f0;border-left:1px solid #c9c9c9;"></div>
<div style="left:429px;top:336.2px;width:14px;height:8px;background:#e9e9e9;border:1px solid #d0d0d0;"></div>
<div style="left:429px;top:344.2px;width:14px;height:8px;background:#e9e9e9;border:1px solid #d0d0d0;"></div>
<svg style="left:433px;top:338.7px;" width="6" height="11" viewBox="0 0 6 11"><path d="M0 3.5L3 0.5L6 3.5ZM0 7.5L3 10.5L6 7.5Z" fill="#000"/></svg>
<span class="t" style="left:396.47px;top:338.99px;font-size:11px;line-height:11px;color:#000;">0.001</span>
<span class="t" style="left:453.00px;top:339.99px;font-size:11px;line-height:11px;color:#000;">s</span>
<span class="t" style="left:69.50px;top:370.19px;font-size:11px;line-height:11px;color:#000;letter-spacing:-0.281px;">Pulse Height</span>
<div style="left:70px;top:384.2px;width:93px;height:20px;background:#fff;border:1px solid #7a7a7a;"></div>
<div style="left:146px;top:385.2px;width:16px;height:18px;background:#f0f0f0;border-left:1px solid #c9c9c9;"></div>
<div style="left:147px;top:386.2px;width:14px;height:8px;background:#e9e9e9;border:1px solid #d0d0d0;"></div>
<div style="left:147px;top:394.2px;width:14px;height:8px;background:#e9e9e9;border:1px solid #d0d0d0;"></div>
<svg style="left:151px;top:388.7px;" width="6" height="11" viewBox="0 0 6 11"><path d="M0 3.5L3 0.5L6 3.5ZM0 7.5L3 10.5L6 7.5Z" fill="#000"/></svg>
<span class="t" style="left:126.71px;top:388.99px;font-size:11px;line-height:11px;color:#000;">0.3</span>
<span class="t" style="left:171.00px;top:389.99px;font-size:11px;line-height:11px;color:#000;">V</span>
<span class="t" style="left:210.50px;top:370.19px;font-size:11px;line-height:11px;color:#000;letter-spacing:-0.244px;">Pulse Width</span>
<div style="left:211px;top:384.2px;width:93px;height:20px;background:#fff;border:1px solid #7a7a7a;"></div>
<div style="left:287px;top:385.2px;width:16px;height:18px;background:#f0f0f0;border-left:1px solid #c9c9c9;"></div>
<div style="left:288px;top:386.2px;width:14px;height:8px;background:#e9e9e9;border:1px solid #d0d0d0;"></div>
<div style="left:288px;top:394.2px;width:14px;height:8px;background:#e9e9e9;border:1px solid #d0d0d0;"></div>
<svg style="left:292px;top:388.7px;" width="6" height="11" viewBox="0 0 6 11"><path d="M0 3.5L3 0.5L6 3.5ZM0 7.5L3 10.5L6 7.5Z" fill="#000"/></svg>
<span class="t" style="left:255.47px;top:388.99px;font-size:11px;line-height:11px;color:#000;">0.002</span>
<span class="t" style="left:312.00px;top:389.99px;font-size:11px;line-height:11px;color:#000;">s</span>
<div style="left:57px;top:413px;width:429px;height:1px;background:#a0a0a0;"></div>
<div style="left:57px;top:414px;width:429px;height:1px;background:#fff;"></div>
<span class="t" style="left:57.50px;top:428.99px;font-size:11px;line-height:11px;color:#000;letter-spacing:-0.055px;">Output 2: Pulse</span>
<span class="t" style="left:69.50px;top:453.19px;font-size:11px;line-height:11px;color:#000;letter-spacing:-0.140px;">Max Repeat Rate</span>
<div style="left:70px;top:467.2px;width:93px;height:20px;background:#fff;border:1px solid #7a7a7a;"></div>
<div style="left:146px;top:468.2px;width:16px;height:18px;background:#f0f0f0;border-left:1px solid #c9c9c9;"></div>
<div style="left:147px;top:469.2px;width:14px;height:8px;background:#e9e9e9;border:1px solid #d0d0d0;"></div>
<div style="left:147px;top:477.2px;width:14px;height:8px;background:#e9e9e9;border:1px solid #d0d0d0;"></div>
<svg style="left:151px;top:471.7px;" width="6" height="11" viewBox="0 0 6 11"><path d="M0 3.5L3 0.5L6 3.5ZM0 7.5L3 10.5L6 7.5Z" fill="#000"/></svg>
<span class="t" style="left:135.88px;top:471.99px;font-size:11px;line-height:11px;color:#000;">1</span>
<span class="t" style="left:171.00px;top:472.99px;font-size:11px;line-height:11px;color:#000;">Hz</span>
<span class="t" style="left:210.50px;top:453.19px;font-size:11px;line-height:11px;color:#000;letter-spacing:-0.281px;">Pulse Height</span>
<div style="left:211px;top:467.2px;width:93px;height:20px;background:#fff;border:1px solid #7a7a7a;"></div>
<div style="left:287px;top:468.2px;width:16px;height:18px;background:#f0f0f0;border-left:1px solid #c9c9c9;"></div>
<div style="left:288px;top:469.2px;width:14px;height:8px;background:#e9e9e9;border:1px solid #d0d0d0;"></div>
<div style="left:288px;top:477.2px;width:14px;height:8px;background:#e9e9e9;border:1px solid #d0d0d0;"></div>
<svg style="left:292px;top:471.7px;" width="6" height="11" viewBox="0 0 6 11"><path d="M0 3.5L3 0.5L6 3.5ZM0 7.5L3 10.5L6 7.5Z" fill="#000"/></svg>
<span class="t" style="left:276.88px;top:471.99px;font-size:11px;line-height:11px;color:#000;">5</span>
<span class="t" style="left:312.00px;top:472.99px;font-size:11px;line-height:11px;color:#000;">V</span>
<span class="t" style="left:351.50px;top:453.19px;font-size:11px;line-height:11px;color:#000;letter-spacing:-0.244px;">Pulse Width</span>
<div style="left:352px;top:467.2px;width:93px;height:20px;background:#fff;border:1px solid #7a7a7a;"></div>
<div style="left:428px;top:468.2px;width:16px;height:18px;background:#f0f0f0;border-left:1px solid #c9c9c9;"></div>
<div style="left:429px;top:469.2px;width:14px;height:8px;background:#e9e9e9;border:1px solid #d0d0d0;"></div>
<div style="left:429px;top:477.2px;width:14px;height:8px;background:#e9e9e9;border:1px solid #d0d0d0;"></div>
<svg style="left:433px;top:471.7px;" width="6" height="11" viewBox="0 0 6 11"><path d="M0 3.5L3 0.5L6 3.5ZM0 7.5L3 10.5L6 7.5Z" fill="#000"/></svg>
<span class="t" style="left:408.71px;top:471.99px;font-size:11px;line-height:11px;color:#000;">0.1</span>
<span class="t" style="left:453.00px;top:472.99px;font-size:11px;line-height:11px;color:#000;">s</span>
<!-- stim_dialog -->
<div style="left:1063px;top:29px;width:596px;height:497px;background:#f0f0f0;border:1px solid #0078d7;box-shadow:0 2px 8px 0px rgba(0,0,0,.28);"></div>
<div style="left:1063px;top:29px;width:596px;height:31px;background:#0078d7;"></div>
<span class="t" style="left:1072.00px;top:38.84px;font-size:12px;line-height:12px;color:#fff;letter-spacing:-0.080px;">Stimulator - Frog Muscle and CAP</span>
<svg style="left:1636.5px;top:38.5px;" width="12" height="12" viewBox="0 0 12 12"><path d="M0.5 0.5L11.5 11.5M11.5 0.5L0.5 11.5" stroke="#fff" stroke-width="1.2"/></svg>
<span class="t" style="left:1069.50px;top:72.49px;font-size:11px;line-height:11px;color:#000;letter-spacing:-0.051px;">Start Stimulator:</span>
<div style="left:1163px;top:67px;width:150px;height:21px;background:#e1e1e1;border:1px solid #adadad;"></div>
<span class="t" style="left:1166.50px;top:72.99px;font-size:11px;line-height:11px;color:#000;letter-spacing:-0.377px;">Manually</span>
<svg style="left:1298px;top:74.5px;" width="10" height="7" viewBox="0 0 10 7"><path d="M1 1L5 5L9 1" fill="none" stroke="#444" stroke-width="1.2"/></svg>
<div style="left:1569px;top:68px;width:64px;height:22px;background:#cccccc;border:1px solid #bfbfbf;"></div>
<span class="t" style="left:1579.00px;top:74.49px;font-size:11px;line-height:11px;color:#838383;letter-spacing:-0.206px;">Stimulate</span>
<div style="left:1070px;top:126px;width:574px;height:359px;background:#fff;border:1px solid #d9d9d9;"></div>
<div style="left:1070px;top:106px;width:59px;height:21px;background:#fff;border:1px solid #d9d9d9;border-bottom:none;"></div>
<div style="left:1128px;top:108px;width:52px;height:18px;background:#f0f0f0;border:1px solid #d9d9d9;border-left:none;border-bottom:none;"></div>
<span class="t" style="left:1077.50px;top:111.49px;font-size:11px;line-height:11px;color:#000;letter-spacing:0.101px;">Output 1</span>
<span class="t" style="left:1132.50px;top:113.19px;font-size:11px;line-height:11px;color:#000;letter-spacing:0.101px;">Output 2</span>
<div style="left:1084px;top:145px;width:35px;height:21px;background:#e1e1e1;border:1px solid #adadad;"></div>
<span class="t" style="left:1093.50px;top:150.99px;font-size:11px;line-height:11px;color:#000;letter-spacing:0.510px;">Off</span>
<div style="left:1121px;top:145px;width:34px;height:21px;background:#cce4f7;border:1px solid #0f5ea8;"></div>
<span class="t" style="left:1130.50px;top:150.99px;font-size:11px;line-height:11px;color:#000;letter-spacing:0.163px;">On</span>
<span class="t" style="left:1364.00px;top:152.49px;font-size:11px;line-height:11px;color:#000;letter-spacing:-0.154px;">Marker Channel:</span>
<div style="left:1463px;top:147px;width:164px;height:21px;background:#e1e1e1;border:1px solid #adadad;"></div>
<span class="t" style="left:1466.50px;top:152.99px;font-size:11px;line-height:11px;color:#000;letter-spacing:0.510px;">Off</span>
<svg style="left:1612px;top:154.5px;" width="10" height="7" viewBox="0 0 10 7"><path d="M1 1L5 5L9 1" fill="none" stroke="#444" stroke-width="1.2"/></svg>
<div style="left:1083px;top:180px;width:278px;height:74px;border:1px solid #dcdcdc;"></div>
<div style="left:1089.5px;top:178px;width:54px;height:5px;background:#fff;"></div>
<span class="t" style="left:1091.50px;top:175.49px;font-size:11px;line-height:11px;color:#000;letter-spacing:0.036px;">Waveform</span>
<div style="left:1369px;top:180px;width:261px;height:74px;border:1px solid #dcdcdc;"></div>
<div style="left:1375.5px;top:178px;width:38px;height:5px;background:#fff;"></div>
<span class="t" style="left:1377.50px;top:175.49px;font-size:11px;line-height:11px;color:#000;letter-spacing:0.163px;">Output</span>
<span class="t" style="left:1092.50px;top:199.99px;font-size:11px;line-height:11px;color:#000;letter-spacing:-0.280px;">Name:</span>
<div style="left:1144px;top:195px;width:200px;height:21px;background:#e1e1e1;border:1px solid #adadad;"></div>
<span class="t" style="left:1147.50px;top:200.99px;font-size:11px;line-height:11px;color:#000;letter-spacing:-0.051px;">Custom - Output 1</span>
<svg style="left:1329px;top:202.5px;" width="10" height="7" viewBox="0 0 10 7"><path d="M1 1L5 5L9 1" fill="none" stroke="#444" stroke-width="1.2"/></svg>
<div style="left:1144px;top:225px;width:73px;height:21px;background:#e1e1e1;border:2px solid #0078d7;"></div>
<span class="t" style="left:1150.50px;top:230.99px;font-size:11px;line-height:11px;color:#000;letter-spacing:-0.094px;">Customize...</span>
<div style="left:1225px;top:225px;width:58px;height:21px;background:#e1e1e1;border:1px solid #adadad;"></div>
<span class="t" style="left:1236.50px;top:230.99px;font-size:11px;line-height:11px;color:#000;letter-spacing:0.108px;">Save...</span>
<div style="left:1291px;top:225px;width:58px;height:21px;background:#cccccc;border:1px solid #bfbfbf;"></div>
<span class="t" style="left:1299.00px;top:230.99px;font-size:11px;line-height:11px;color:#838383;letter-spacing:0.115px;">Delete...</span>
<div style="left:1375.5px;top:199.5px;width:13px;height:13px;background:#fff;border:1px solid #333;"></div>
<span class="t" style="left:1390.50px;top:200.49px;font-size:11px;line-height:11px;color:#000;letter-spacing:0.052px;">Differential</span>
<span class="t" style="left:1374.50px;top:230.49px;font-size:11px;line-height:11px;color:#000;letter-spacing:-0.004px;">Output Range:</span>
<div style="left:1465px;top:225px;width:90px;height:21px;background:#e1e1e1;border:1px solid #adadad;"></div>
<span class="t" style="left:1469.00px;top:230.99px;font-size:11px;line-height:11px;color:#000;">2</span>
<svg style="left:1540px;top:232.5px;" width="10" height="7" viewBox="0 0 10 7"><path d="M1 1L5 5L9 1" fill="none" stroke="#444" stroke-width="1.2"/></svg>
<div style="left:1561px;top:225px;width:54px;height:21px;background:#e1e1e1;border:1px solid #adadad;"></div>
<span class="t" style="left:1565.00px;top:230.99px;font-size:11px;line-height:11px;color:#000;">V</span>
<svg style="left:1600px;top:232.5px;" width="10" height="7" viewBox="0 0 10 7"><path d="M1 1L5 5L9 1" fill="none" stroke="#444" stroke-width="1.2"/></svg>
<div style="left:1083px;top:266px;width:545px;height:210px;background:#fff;border-top:1px solid #828282;border-left:1px solid #a0a0a0;border-right:1px solid #e3e3e3;border-bottom:1px solid #a0a0a0;"></div>
<div style="left:1211px;top:267px;width:1px;height:23px;background:#e5e5e5;"></div>
<div style="left:1273px;top:267px;width:1px;height:23px;background:#e5e5e5;"></div>
<div style="left:1314px;top:267px;width:1px;height:23px;background:#e5e5e5;"></div>
<span class="t" style="left:1090.30px;top:274.44px;font-size:12px;line-height:12px;color:#000;letter-spacing:-0.169px;">Parameter Name</span>
<span class="t" style="left:1217.00px;top:274.44px;font-size:12px;line-height:12px;color:#000;letter-spacing:-0.360px;">Value</span>
<div style="left:1084px;top:382px;width:231px;height:93px;background:#dce9fa;"></div>
<span class="t" style="left:1092.20px;top:296.24px;font-size:12px;line-height:12px;color:#000;letter-spacing:-0.379px;">Baseline</span>
<span class="t" style="left:1262.33px;top:296.24px;font-size:12px;line-height:12px;color:#000;">0</span>
<span class="t" style="left:1281.20px;top:296.24px;font-size:12px;line-height:12px;color:#000;">V</span>
<span class="t" style="left:1092.20px;top:319.24px;font-size:12px;line-height:12px;color:#000;letter-spacing:-0.305px;">Start Delay</span>
<span class="t" style="left:1262.33px;top:319.24px;font-size:12px;line-height:12px;color:#000;">0</span>
<span class="t" style="left:1281.20px;top:319.24px;font-size:12px;line-height:12px;color:#000;">s</span>
<span class="t" style="left:1092.20px;top:342.24px;font-size:12px;line-height:12px;color:#000;letter-spacing:-0.528px;">Repeats</span>
<span class="t" style="left:1232.00px;top:342.24px;font-size:12px;line-height:12px;color:#000;letter-spacing:0.206px;font-style:italic;">Infinite</span>
<span class="t" style="left:1092.20px;top:365.24px;font-size:12px;line-height:12px;color:#000;letter-spacing:-0.425px;">Max Repeat Rate</span>
<span class="t" style="left:1255.65px;top:365.24px;font-size:12px;line-height:12px;color:#000;">40</span>
<span class="t" style="left:1281.20px;top:365.24px;font-size:12px;line-height:12px;color:#000;">Hz</span>
<span class="t" style="left:1092.20px;top:388.24px;font-size:12px;line-height:12px;color:#000;letter-spacing:-0.159px;">1: Pulse Height</span>
<span class="t" style="left:1262.33px;top:388.24px;font-size:12px;line-height:12px;color:#000;">0</span>
<span class="t" style="left:1281.20px;top:388.24px;font-size:12px;line-height:12px;color:#000;">V</span>
<span class="t" style="left:1092.20px;top:411.24px;font-size:12px;line-height:12px;color:#000;letter-spacing:-0.241px;">1: Pulse Width</span>
<span class="t" style="left:1238.97px;top:411.24px;font-size:12px;line-height:12px;color:#000;">0.001</span>
<span class="t" style="left:1281.20px;top:411.24px;font-size:12px;line-height:12px;color:#000;">s</span>
<span class="t" style="left:1092.20px;top:434.24px;font-size:12px;line-height:12px;color:#000;letter-spacing:-0.484px;">2: Pulses</span>
<span class="t" style="left:1262.33px;top:434.24px;font-size:12px;line-height:12px;color:#000;">1</span>
<span class="t" style="left:1092.20px;top:457.24px;font-size:12px;line-height:12px;color:#000;letter-spacing:-0.159px;">2: Pulse Height</span>
<span class="t" style="left:1252.32px;top:457.24px;font-size:12px;line-height:12px;color:#000;">0.3</span>
<span class="t" style="left:1281.20px;top:457.24px;font-size:12px;line-height:12px;color:#000;">V</span>
<div style="left:1320px;top:339px;width:28px;height:17px;background:#cce4f7;border:1px solid #1a5fa8;"></div>
<svg style="left:1326px;top:343.8px;" width="15" height="8" viewBox="0 0 15 8"><path d="M7.5 3.7C5.8 1 4.3 0.8 3.3 0.8A2.6 2.9 0 0 0 3.3 6.6C4.5 6.6 5.8 6.2 7.5 3.7C9.2 1 10.7 0.8 11.7 0.8A2.6 2.9 0 0 1 11.7 6.6C10.5 6.6 9.2 6.2 7.5 3.7Z" fill="none" stroke="#000" stroke-width="1.5"/></svg>
<div style="left:1402px;top:297px;width:120px;height:4px;background:#e7eaea;border:1px solid #d6d6d6;"></div>
<svg style="left:1458.5px;top:295px;" width="7" height="11" viewBox="0 0 7 11"><path d="M0 0.5H7V6.5L3.5 10L0 6.5Z" fill="#0078d7"/></svg>
<span class="t" style="left:1383.05px;top:296.96px;font-size:9.5px;line-height:9.5px;color:#000;">-2</span>
<span class="t" style="left:1534.00px;top:296.96px;font-size:9.5px;line-height:9.5px;color:#000;">2</span>
<div style="left:1405px;top:307.5px;width:1px;height:3px;background:#b9b9b9;"></div>
<div style="left:1417.72px;top:307.5px;width:1px;height:3px;background:#b9b9b9;"></div>
<div style="left:1430.44px;top:307.5px;width:1px;height:3px;background:#b9b9b9;"></div>
<div style="left:1443.17px;top:307.5px;width:1px;height:3px;background:#b9b9b9;"></div>
<div style="left:1455.89px;top:307.5px;width:1px;height:3px;background:#b9b9b9;"></div>
<div style="left:1468.61px;top:307.5px;width:1px;height:3px;background:#b9b9b9;"></div>
<div style="left:1481.33px;top:307.5px;width:1px;height:3px;background:#b9b9b9;"></div>
<div style="left:1494.06px;top:307.5px;width:1px;height:3px;background:#b9b9b9;"></div>
<div style="left:1506.78px;top:307.5px;width:1px;height:3px;background:#b9b9b9;"></div>
<div style="left:1519.5px;top:307.5px;width:1px;height:3px;background:#b9b9b9;"></div>
<div style="left:1402px;top:320px;width:120px;height:4px;background:#e7eaea;border:1px solid #d6d6d6;"></div>
<svg style="left:1401.5px;top:318px;" width="7" height="11" viewBox="0 0 7 11"><path d="M0 0.5H7V6.5L3.5 10L0 6.5Z" fill="#0078d7"/></svg>
<span class="t" style="left:1386.22px;top:319.96px;font-size:9.5px;line-height:9.5px;color:#000;">0</span>
<span class="t" style="left:1534.00px;top:319.96px;font-size:9.5px;line-height:9.5px;color:#000;">10</span>
<div style="left:1405px;top:330.5px;width:1px;height:3px;background:#b9b9b9;"></div>
<div style="left:1414.96px;top:330.5px;width:1px;height:3px;background:#b9b9b9;"></div>
<div style="left:1424.91px;top:330.5px;width:1px;height:3px;background:#b9b9b9;"></div>
<div style="left:1434.87px;top:330.5px;width:1px;height:3px;background:#b9b9b9;"></div>
<div style="left:1444.83px;top:330.5px;width:1px;height:3px;background:#b9b9b9;"></div>
<div style="left:1454.78px;top:330.5px;width:1px;height:3px;background:#b9b9b9;"></div>
<div style="left:1464.74px;top:330.5px;width:1px;height:3px;background:#b9b9b9;"></div>
<div style="left:1474.7px;top:330.5px;width:1px;height:3px;background:#b9b9b9;"></div>
<div style="left:1484.65px;top:330.5px;width:1px;height:3px;background:#b9b9b9;"></div>
<div style="left:1494.61px;top:330.5px;width:1px;height:3px;background:#b9b9b9;"></div>
<div style="left:1504.57px;top:330.5px;width:1px;height:3px;background:#b9b9b9;"></div>
<div style="left:1514.52px;top:330.5px;width:1px;height:3px;background:#b9b9b9;"></div>
<div style="left:1402px;top:343px;width:120px;height:4px;background:#e7eaea;border:1px solid #d6d6d6;"></div>
<svg style="left:1401.5px;top:341px;" width="7" height="11" viewBox="0 0 7 11"><path d="M0 0.5H7V6.5L3.5 10L0 6.5Z" fill="#0078d7"/></svg>
<span class="t" style="left:1386.22px;top:342.96px;font-size:9.5px;line-height:9.5px;color:#000;">1</span>
<span class="t" style="left:1534.00px;top:342.96px;font-size:9.5px;line-height:9.5px;color:#000;">1000</span>
<div style="left:1405px;top:353.5px;width:1px;height:3px;background:#b9b9b9;"></div>
<div style="left:1430.87px;top:353.5px;width:1px;height:3px;background:#b9b9b9;"></div>
<div style="left:1446px;top:353.5px;width:1px;height:3px;background:#b9b9b9;"></div>
<div style="left:1456.74px;top:353.5px;width:1px;height:3px;background:#b9b9b9;"></div>
<div style="left:1465.06px;top:353.5px;width:1px;height:3px;background:#b9b9b9;"></div>
<div style="left:1471.87px;top:353.5px;width:1px;height:3px;background:#b9b9b9;"></div>
<div style="left:1477.62px;top:353.5px;width:1px;height:3px;background:#b9b9b9;"></div>
<div style="left:1482.6px;top:353.5px;width:1px;height:3px;background:#b9b9b9;"></div>
<div style="left:1487px;top:353.5px;width:1px;height:3px;background:#b9b9b9;"></div>
<div style="left:1490.93px;top:353.5px;width:1px;height:3px;background:#b9b9b9;"></div>
<div style="left:1494.49px;top:353.5px;width:1px;height:3px;background:#b9b9b9;"></div>
<div style="left:1497.74px;top:353.5px;width:1px;height:3px;background:#b9b9b9;"></div>
<div style="left:1500.72px;top:353.5px;width:1px;height:3px;background:#b9b9b9;"></div>
<div style="left:1503.49px;top:353.5px;width:1px;height:3px;background:#b9b9b9;"></div>
<div style="left:1506.06px;top:353.5px;width:1px;height:3px;background:#b9b9b9;"></div>
<div style="left:1508.47px;top:353.5px;width:1px;height:3px;background:#b9b9b9;"></div>
<div style="left:1510.74px;top:353.5px;width:1px;height:3px;background:#b9b9b9;"></div>
<div style="left:1512.87px;top:353.5px;width:1px;height:3px;background:#b9b9b9;"></div>
<div style="left:1514.89px;top:353.5px;width:1px;height:3px;background:#b9b9b9;"></div>
<div style="left:1516.8px;top:353.5px;width:1px;height:3px;background:#b9b9b9;"></div>
<div style="left:1518.62px;top:353.5px;width:1px;height:3px;background:#b9b9b9;"></div>
<div style="left:1578px;top:293px;width:27px;height:17px;background:#e1e1e1;border:1px solid #adadad;"></div>
<svg style="left:1578px;top:293px;" width="27" height="17" viewBox="0 0 27 17"><path d="M5.5 7.5H22" stroke="#333" stroke-width="1"/><rect x="18.5" y="4.5" width="2.6" height="6" fill="#e9e9e9" stroke="#444" stroke-width=".9"/><path d="M6 12.5H22" stroke="#444" stroke-width="1.2" stroke-dasharray="1 1.6"/></svg>
<div style="left:1578px;top:316px;width:27px;height:17px;background:#e1e1e1;border:1px solid #adadad;"></div>
<svg style="left:1578px;top:316px;" width="27" height="17" viewBox="0 0 27 17"><path d="M5.5 7.5H22" stroke="#333" stroke-width="1"/><rect x="18.5" y="4.5" width="2.6" height="6" fill="#e9e9e9" stroke="#444" stroke-width=".9"/><path d="M6 12.5H22" stroke="#444" stroke-width="1.2" stroke-dasharray="1 1.6"/></svg>
<div style="left:1578px;top:339px;width:27px;height:17px;background:#e1e1e1;border:1px solid #adadad;"></div>
<svg style="left:1578px;top:339px;" width="27" height="17" viewBox="0 0 27 17"><path d="M5.5 7.5H22" stroke="#333" stroke-width="1"/><rect x="18.5" y="4.5" width="2.6" height="6" fill="#e9e9e9" stroke="#444" stroke-width=".9"/><path d="M6 12.5H22" stroke="#444" stroke-width="1.2" stroke-dasharray="1 1.6"/></svg>
<div style="left:1612px;top:267px;width:16px;height:209px;background:#f0f0f0;"></div>
<svg style="left:1614.5px;top:273px;" width="10" height="8" viewBox="0 0 10 8"><path d="M1 6L5 2L9 6" fill="none" stroke="#505050" stroke-width="1.6"/></svg>
<div style="left:1612px;top:284px;width:16px;height:120px;background:#cdcdcd;"></div>
<div style="left:1071px;top:497px;width:28px;height:21px;background:#e1e1e1;border:1px solid #adadad;"></div>
<svg style="left:1077px;top:499.5px;" width="16" height="16" viewBox="0 0 16 16"><circle cx="8" cy="8" r="7.3" fill="#c9c9d6" /><circle cx="8" cy="8" r="6.2" fill="#2347b5"/><ellipse cx="8" cy="5.5" rx="4.5" ry="3" fill="#4f76de" opacity=".8"/><text x="8" y="12" font-size="10.5" font-weight="bold" text-anchor="middle" fill="#fff" font-family="Liberation Sans">?</text></svg>
<!-- wave_dialog -->
<div style="left:1315px;top:359px;width:584px;height:679px;background:#f0f0f0;border:1px solid #0078d7;box-shadow:0 2px 8px 0px rgba(0,0,0,.28);"></div>
<div style="left:1315px;top:359px;width:584px;height:31px;background:#0078d7;"></div>
<span class="t" style="left:1324.20px;top:368.84px;font-size:12px;line-height:12px;color:#fff;letter-spacing:0.060px;">Stimulator Waveform Customization (Custom - Output 1)</span>
<svg style="left:1877px;top:368.5px;" width="12" height="12" viewBox="0 0 12 12"><path d="M0.5 0.5L11.5 11.5M11.5 0.5L0.5 11.5" stroke="#fff" stroke-width="1.2"/></svg>
<div style="left:1328px;top:409px;width:558px;height:162.5px;border:1px solid #dcdcdc;"></div>
<div style="left:1334.5px;top:407px;width:111.5px;height:5px;background:#f0f0f0;"></div>
<span class="t" style="left:1336.50px;top:404.49px;font-size:11px;line-height:11px;color:#000;letter-spacing:-0.047px;">Waveform parameters</span>
<div style="left:1337px;top:424px;width:537px;height:119px;background:#fff;border-top:1px solid #828282;border-left:1px solid #828282;"></div>
<div style="left:1542px;top:425px;width:1px;height:23px;background:#e5e5e5;"></div>
<div style="left:1606px;top:425px;width:1px;height:23px;background:#e5e5e5;"></div>
<div style="left:1648px;top:425px;width:1px;height:23px;background:#e5e5e5;"></div>
<div style="left:1687px;top:425px;width:1px;height:23px;background:#e5e5e5;"></div>
<div style="left:1752px;top:425px;width:1px;height:23px;background:#e5e5e5;"></div>
<div style="left:1816px;top:425px;width:1px;height:23px;background:#e5e5e5;"></div>
<span class="t" style="left:1344.20px;top:432.24px;font-size:12px;line-height:12px;color:#000;letter-spacing:-0.169px;">Parameter Name</span>
<span class="t" style="left:1548.00px;top:432.24px;font-size:12px;line-height:12px;color:#000;letter-spacing:-0.360px;">Value</span>
<span class="t" style="left:1707.00px;top:432.24px;font-size:12px;line-height:12px;color:#000;letter-spacing:-0.438px;">Panel</span>
<span class="t" style="left:1769.00px;top:432.24px;font-size:12px;line-height:12px;color:#000;letter-spacing:-0.003px;">Dialog</span>
<span class="t" style="left:1346.20px;top:454.24px;font-size:12px;line-height:12px;color:#000;letter-spacing:-0.379px;">Baseline</span>
<span class="t" style="left:1595.33px;top:454.24px;font-size:12px;line-height:12px;color:#000;">0</span>
<span class="t" style="left:1613.70px;top:454.24px;font-size:12px;line-height:12px;color:#000;">V</span>
<div style="left:1714px;top:452.5px;width:13px;height:13px;background:linear-gradient(135deg,#dfe2e5,#fdfdfd);border:1px solid #8e8f8f;"></div>
<div style="left:1716px;top:454.5px;width:9px;height:9px;border:1px solid #c4c7ca;"></div>
<div style="left:1779px;top:452.5px;width:13px;height:13px;background:linear-gradient(135deg,#dfe2e5,#fdfdfd);border:1px solid #8e8f8f;"></div>
<div style="left:1781px;top:454.5px;width:9px;height:9px;border:1px solid #c4c7ca;"></div>
<svg style="left:1779px;top:452.5px;" width="13" height="13" viewBox="0 0 13 13"><path d="M3.2 6L5.6 9.6L10 2.8" fill="none" stroke="#31479e" stroke-width="1.8"/></svg>
<div style="left:1822px;top:451px;width:28px;height:17px;background:#e1e1e1;border:1px solid #adadad;"></div>
<svg style="left:1822px;top:451px;" width="28" height="17" viewBox="0 0 28 17"><path d="M5.5 7.5H22" stroke="#333" stroke-width="1"/><rect x="18.5" y="4.5" width="2.6" height="6" fill="#e9e9e9" stroke="#444" stroke-width=".9"/><path d="M6 12.5H22" stroke="#444" stroke-width="1.2" stroke-dasharray="1 1.6"/></svg>
<span class="t" style="left:1346.20px;top:477.24px;font-size:12px;line-height:12px;color:#000;letter-spacing:-0.305px;">Start Delay</span>
<span class="t" style="left:1595.33px;top:477.24px;font-size:12px;line-height:12px;color:#000;">0</span>
<span class="t" style="left:1613.70px;top:477.24px;font-size:12px;line-height:12px;color:#000;">s</span>
<div style="left:1714px;top:475.5px;width:13px;height:13px;background:linear-gradient(135deg,#dfe2e5,#fdfdfd);border:1px solid #8e8f8f;"></div>
<div style="left:1716px;top:477.5px;width:9px;height:9px;border:1px solid #c4c7ca;"></div>
<div style="left:1779px;top:475.5px;width:13px;height:13px;background:linear-gradient(135deg,#dfe2e5,#fdfdfd);border:1px solid #8e8f8f;"></div>
<div style="left:1781px;top:477.5px;width:9px;height:9px;border:1px solid #c4c7ca;"></div>
<svg style="left:1779px;top:475.5px;" width="13" height="13" viewBox="0 0 13 13"><path d="M3.2 6L5.6 9.6L10 2.8" fill="none" stroke="#31479e" stroke-width="1.8"/></svg>
<div style="left:1822px;top:474px;width:28px;height:17px;background:#e1e1e1;border:1px solid #adadad;"></div>
<svg style="left:1822px;top:474px;" width="28" height="17" viewBox="0 0 28 17"><path d="M5.5 7.5H22" stroke="#333" stroke-width="1"/><rect x="18.5" y="4.5" width="2.6" height="6" fill="#e9e9e9" stroke="#444" stroke-width=".9"/><path d="M6 12.5H22" stroke="#444" stroke-width="1.2" stroke-dasharray="1 1.6"/></svg>
<span class="t" style="left:1346.20px;top:500.24px;font-size:12px;line-height:12px;color:#000;letter-spacing:-0.528px;">Repeats</span>
<span class="t" style="left:1565.00px;top:500.24px;font-size:12px;line-height:12px;color:#000;letter-spacing:0.206px;font-style:italic;">Infinite</span>
<div style="left:1654px;top:497px;width:28px;height:17px;background:#cce4f7;border:1px solid #1a5fa8;"></div>
<svg style="left:1660px;top:501.8px;" width="15" height="8" viewBox="0 0 15 8"><path d="M7.5 3.7C5.8 1 4.3 0.8 3.3 0.8A2.6 2.9 0 0 0 3.3 6.6C4.5 6.6 5.8 6.2 7.5 3.7C9.2 1 10.7 0.8 11.7 0.8A2.6 2.9 0 0 1 11.7 6.6C10.5 6.6 9.2 6.2 7.5 3.7Z" fill="none" stroke="#000" stroke-width="1.5"/></svg>
<div style="left:1714px;top:498.5px;width:13px;height:13px;background:linear-gradient(135deg,#dfe2e5,#fdfdfd);border:1px solid #8e8f8f;"></div>
<div style="left:1716px;top:500.5px;width:9px;height:9px;border:1px solid #c4c7ca;"></div>
<div style="left:1779px;top:498.5px;width:13px;height:13px;background:linear-gradient(135deg,#dfe2e5,#fdfdfd);border:1px solid #8e8f8f;"></div>
<div style="left:1781px;top:500.5px;width:9px;height:9px;border:1px solid #c4c7ca;"></div>
<svg style="left:1779px;top:498.5px;" width="13" height="13" viewBox="0 0 13 13"><path d="M3.2 6L5.6 9.6L10 2.8" fill="none" stroke="#31479e" stroke-width="1.8"/></svg>
<div style="left:1822px;top:497px;width:28px;height:17px;background:#e1e1e1;border:1px solid #adadad;"></div>
<svg style="left:1822px;top:497px;" width="28" height="17" viewBox="0 0 28 17"><path d="M5.5 7.5H22" stroke="#333" stroke-width="1"/><rect x="18.5" y="4.5" width="2.6" height="6" fill="#e9e9e9" stroke="#444" stroke-width=".9"/><path d="M6 12.5H22" stroke="#444" stroke-width="1.2" stroke-dasharray="1 1.6"/></svg>
<span class="t" style="left:1346.20px;top:523.24px;font-size:12px;line-height:12px;color:#000;letter-spacing:-0.425px;">Max Repeat Rate</span>
<span class="t" style="left:1588.65px;top:523.24px;font-size:12px;line-height:12px;color:#000;">40</span>
<span class="t" style="left:1613.70px;top:523.24px;font-size:12px;line-height:12px;color:#000;">Hz</span>
<div style="left:1714px;top:521.5px;width:13px;height:13px;background:linear-gradient(135deg,#dfe2e5,#fdfdfd);border:1px solid #8e8f8f;"></div>
<div style="left:1716px;top:523.5px;width:9px;height:9px;border:1px solid #c4c7ca;"></div>
<svg style="left:1714px;top:521.5px;" width="13" height="13" viewBox="0 0 13 13"><path d="M3.2 6L5.6 9.6L10 2.8" fill="none" stroke="#31479e" stroke-width="1.8"/></svg>
<div style="left:1779px;top:521.5px;width:13px;height:13px;background:linear-gradient(135deg,#dfe2e5,#fdfdfd);border:1px solid #8e8f8f;"></div>
<div style="left:1781px;top:523.5px;width:9px;height:9px;border:1px solid #c4c7ca;"></div>
<svg style="left:1779px;top:521.5px;" width="13" height="13" viewBox="0 0 13 13"><path d="M3.2 6L5.6 9.6L10 2.8" fill="none" stroke="#31479e" stroke-width="1.8"/></svg>
<div style="left:1822px;top:520px;width:28px;height:17px;background:#e1e1e1;border:1px solid #adadad;"></div>
<svg style="left:1822px;top:520px;" width="28" height="17" viewBox="0 0 28 17"><path d="M5.5 7.5H22" stroke="#333" stroke-width="1"/><rect x="18.5" y="4.5" width="2.6" height="6" fill="#e9e9e9" stroke="#444" stroke-width=".9"/><path d="M6 12.5H22" stroke="#444" stroke-width="1.2" stroke-dasharray="1 1.6"/></svg>
<div style="left:1338px;top:544px;width:22px;height:18px;background:#e1e1e1;border:1px solid #adadad;"></div>
<svg style="left:1338px;top:544px;" width="22" height="18" viewBox="0 0 22 18"><path d="M6.5 9H15.5M11 4.5V13.5" stroke="#7a2416" stroke-width="1.8"/></svg>
<div style="left:1362px;top:544px;width:22px;height:18px;background:#cccccc;border:1px solid #bfbfbf;"></div>
<svg style="left:1362px;top:544px;" width="22" height="18" viewBox="0 0 22 18"><path d="M7 9H15" stroke="#9a9a9a" stroke-width="1.5"/></svg>
<span class="t" style="left:1328.00px;top:591.99px;font-size:11px;line-height:11px;color:#000;letter-spacing:-0.132px;">Add new segment:</span>
<div style="left:1431px;top:586px;width:24px;height:24px;background:#e1e1e1;border:1px solid #adadad;"></div>
<svg style="left:1431px;top:586px;" width="24" height="24" viewBox="0 0 24 24"><path d="M4 19V5H13V19H19" fill="none" stroke="#7a3010" stroke-width="1.15"/></svg>
<div style="left:1457px;top:586px;width:24px;height:24px;background:#e1e1e1;border:1px solid #adadad;"></div>
<svg style="left:1457px;top:586px;" width="24" height="24" viewBox="0 0 24 24"><path d="M5 18H19" fill="none" stroke="#7a3010" stroke-width="1.15"/></svg>
<div style="left:1483px;top:586px;width:24px;height:24px;background:#e1e1e1;border:1px solid #adadad;"></div>
<svg style="left:1483px;top:586px;" width="24" height="24" viewBox="0 0 24 24"><path d="M4 19L18 5V19" fill="none" stroke="#7a3010" stroke-width="1.15"/></svg>
<div style="left:1509px;top:586px;width:24px;height:24px;background:#e1e1e1;border:1px solid #adadad;"></div>
<svg style="left:1509px;top:586px;" width="24" height="24" viewBox="0 0 24 24"><path d="M4 19H7V14H11V9H15V5H19M19 5V19" fill="none" stroke="#7a3010" stroke-width="1.15"/></svg>
<div style="left:1535px;top:586px;width:24px;height:24px;background:#e1e1e1;border:1px solid #adadad;"></div>
<svg style="left:1535px;top:586px;" width="24" height="24" viewBox="0 0 24 24"><path d="M4 19H6V14H9V19M9 19V10H12V19M12 19V5H15V19H19" fill="none" stroke="#7a3010" stroke-width="1.15"/></svg>
<div style="left:1561px;top:586px;width:24px;height:24px;background:#e1e1e1;border:1px solid #adadad;"></div>
<svg style="left:1561px;top:586px;" width="24" height="24" viewBox="0 0 24 24"><path d="M4 11H8V5H12V17H16V11H20" fill="none" stroke="#7a3010" stroke-width="1.15"/></svg>
<div style="left:1587px;top:586px;width:24px;height:24px;background:#e1e1e1;border:1px solid #adadad;"></div>
<svg style="left:1587px;top:586px;" width="24" height="24" viewBox="0 0 24 24"><path d="M3 10L8 5L16 17L21 10" fill="none" stroke="#7a3010" stroke-width="1.15"/></svg>
<div style="left:1613px;top:586px;width:24px;height:24px;background:#e1e1e1;border:1px solid #adadad;"></div>
<svg style="left:1613px;top:586px;" width="24" height="24" viewBox="0 0 24 24"><path d="M3 19H7L12 4L17 19H21" fill="none" stroke="#7a3010" stroke-width="1.15"/></svg>
<div style="left:1639px;top:586px;width:24px;height:24px;background:#e1e1e1;border:1px solid #adadad;"></div>
<svg style="left:1639px;top:586px;" width="24" height="24" viewBox="0 0 24 24"><path d="M3 12H6C8 2 10 2 12 12S16 20 18 12H21" fill="none" stroke="#7a3010" stroke-width="1.15"/></svg>
<div style="left:1665px;top:586px;width:24px;height:24px;background:#e1e1e1;border:1px solid #adadad;"></div>
<span class="t" style="left:1672.41px;top:593.49px;font-size:11px;line-height:11px;color:#8b3a1a;font-style:italic;">fn</span>
<svg style="left:1410px;top:624px;" width="250" height="20" viewBox="0 0 250 20"><defs><linearGradient id="tb1" x1="0" y1="0" x2="0" y2="1"><stop offset="0" stop-color="#e8f2f8"/><stop offset="1" stop-color="#b9d3e4"/></linearGradient><linearGradient id="tb2" x1="0" y1="0" x2="0" y2="1"><stop offset="0" stop-color="#fbf9f0"/><stop offset="1" stop-color="#efe9d2"/></linearGradient></defs><path d="M3 18.5L14 6Q18 1.5 23 1.5H55Q58 1.5 58 4.5V18.5Z" fill="url(#tb1)" stroke="#b5c3cc" stroke-width="1"/><path d="M59 18.5L70 6Q74 1.5 79 1.5H242Q245 1.5 245 4.5V18.5Z" fill="url(#tb2)" stroke="#c9c4b0" stroke-width="1"/><path d="M41 4.5H52L46.5 10.5Z" fill="#2e7fc4" stroke="#1d5a94" stroke-width=".8"/><rect x="229" y="5" width="11.5" height="11.5" rx="1" fill="#e2442c" stroke="#c9301a" stroke-width="1"/><path d="M231.8 7.8L237.8 13.8M237.8 7.8L231.8 13.8" stroke="#fff" stroke-width="1.9"/></svg>
<span class="t" style="left:1487.00px;top:632.09px;font-size:11px;line-height:11px;color:#000;letter-spacing:-0.231px;">3. Delay</span>
<div style="left:1413px;top:643.5px;width:470px;height:112px;background:#f4f4f4;border-top:1px solid #c4c4c4;border-right:1px solid #c4c4c4;"></div>
<div style="left:1469.5px;top:644.5px;width:187.5px;height:110.5px;background:#fff;"></div>
<svg style="left:0px;top:0px;" width="1920" height="1080" viewBox="0 0 1920 1080"><path d="M1432.5 644V755" stroke="#86f4fb" stroke-width="1"/><path d="M1451.5 644V755" stroke="#86f4fb" stroke-width="1"/><path d="M1469.5 644V755" stroke="#86f4fb" stroke-width="1"/><path d="M1488.5 644V755" stroke="#86f4fb" stroke-width="1"/><path d="M1507.5 644V755" stroke="#3eeafa" stroke-width="1"/><path d="M1526.5 644V755" stroke="#86f4fb" stroke-width="1"/><path d="M1544.5 644V755" stroke="#86f4fb" stroke-width="1"/><path d="M1563.5 644V755" stroke="#86f4fb" stroke-width="1"/><path d="M1582.5 644V755" stroke="#86f4fb" stroke-width="1"/><path d="M1601.5 644V755" stroke="#3eeafa" stroke-width="1"/><path d="M1619.5 644V755" stroke="#86f4fb" stroke-width="1"/><path d="M1638.5 644V755" stroke="#86f4fb" stroke-width="1"/><path d="M1657.5 644V755" stroke="#86f4fb" stroke-width="1"/><path d="M1676.5 644V755" stroke="#86f4fb" stroke-width="1"/><path d="M1694.5 644V755" stroke="#3eeafa" stroke-width="1"/><path d="M1713.5 644V755" stroke="#86f4fb" stroke-width="1"/><path d="M1732.5 644V755" stroke="#86f4fb" stroke-width="1"/><path d="M1751.5 644V755" stroke="#86f4fb" stroke-width="1"/><path d="M1769.5 644V755" stroke="#86f4fb" stroke-width="1"/><path d="M1788.5 644V755" stroke="#3eeafa" stroke-width="1"/><path d="M1807.5 644V755" stroke="#86f4fb" stroke-width="1"/><path d="M1826.5 644V755" stroke="#86f4fb" stroke-width="1"/><path d="M1844.5 644V755" stroke="#86f4fb" stroke-width="1"/><path d="M1863.5 644V755" stroke="#86f4fb" stroke-width="1"/><path d="M1882.5 644V755" stroke="#3eeafa" stroke-width="1"/><path d="M1413 653.5H1883" stroke="#86f4fb" stroke-width="1"/><path d="M1413 684.5H1883" stroke="#86f4fb" stroke-width="1"/><path d="M1413 714.5H1883" stroke="#86f4fb" stroke-width="1"/><path d="M1413 745.5H1883" stroke="#86f4fb" stroke-width="1"/><rect x="1414" y="644.5" width="16.5" height="110" fill="#dfe9fb" fill-opacity=".9" stroke="#5c7b83" stroke-width="1.2"/><path d="M1430.8 745.3L1431.3 720L1432 653.3H1468.5L1469.2 676L1470.3 722L1470.8 745.3H1882" fill="none" stroke="#1f5af0" stroke-width="1.2"/><path d="M1409.5 653.3H1412" stroke="#000" stroke-width="1"/><path d="M1409.5 684.2H1412" stroke="#000" stroke-width="1"/><path d="M1409.5 714.6H1412" stroke="#000" stroke-width="1"/><path d="M1409.5 745.3H1412" stroke="#000" stroke-width="1"/></svg>
<div style="left:1413px;top:755.5px;width:470px;height:20px;background:#fff;border-bottom:1px solid #dcdcdc;"></div>
<svg style="left:0px;top:0px;" width="1920" height="1080" viewBox="0 0 1920 1080"><path d="M1413.7 755.5V758.5" stroke="#000" stroke-width="1"/><path d="M1432.4 755.5V757.5" stroke="#000" stroke-width="1"/><path d="M1451.2 755.5V757.5" stroke="#000" stroke-width="1"/><path d="M1469.9 755.5V757.5" stroke="#000" stroke-width="1"/><path d="M1488.7 755.5V757.5" stroke="#000" stroke-width="1"/><path d="M1507.4 755.5V758.5" stroke="#000" stroke-width="1"/><path d="M1526.2 755.5V757.5" stroke="#000" stroke-width="1"/><path d="M1544.9 755.5V757.5" stroke="#000" stroke-width="1"/><path d="M1563.7 755.5V757.5" stroke="#000" stroke-width="1"/><path d="M1582.4 755.5V757.5" stroke="#000" stroke-width="1"/><path d="M1601.2 755.5V758.5" stroke="#000" stroke-width="1"/><path d="M1619.9 755.5V757.5" stroke="#000" stroke-width="1"/><path d="M1638.7 755.5V757.5" stroke="#000" stroke-width="1"/><path d="M1657.4 755.5V757.5" stroke="#000" stroke-width="1"/><path d="M1676.2 755.5V757.5" stroke="#000" stroke-width="1"/><path d="M1694.9 755.5V758.5" stroke="#000" stroke-width="1"/><path d="M1713.7 755.5V757.5" stroke="#000" stroke-width="1"/><path d="M1732.4 755.5V757.5" stroke="#000" stroke-width="1"/><path d="M1751.2 755.5V757.5" stroke="#000" stroke-width="1"/><path d="M1769.9 755.5V757.5" stroke="#000" stroke-width="1"/><path d="M1788.7 755.5V758.5" stroke="#000" stroke-width="1"/><path d="M1807.4 755.5V757.5" stroke="#000" stroke-width="1"/><path d="M1826.2 755.5V757.5" stroke="#000" stroke-width="1"/><path d="M1844.9 755.5V757.5" stroke="#000" stroke-width="1"/><path d="M1863.7 755.5V757.5" stroke="#000" stroke-width="1"/><path d="M1882.4 755.5V758.5" stroke="#000" stroke-width="1"/></svg>
<span class="t" style="left:1389.21px;top:648.79px;font-size:11px;line-height:11px;color:#000;">0.3</span>
<span class="t" style="left:1389.21px;top:679.69px;font-size:11px;line-height:11px;color:#000;">0.2</span>
<span class="t" style="left:1389.21px;top:710.09px;font-size:11px;line-height:11px;color:#000;">0.1</span>
<span class="t" style="left:1389.21px;top:740.79px;font-size:11px;line-height:11px;color:#000;">0.0</span>
<span class="t" style="left:1492.74px;top:761.49px;font-size:11px;line-height:11px;color:#000;">0.005</span>
<span class="t" style="left:1589.80px;top:761.49px;font-size:11px;line-height:11px;color:#000;">0.01</span>
<span class="t" style="left:1680.24px;top:761.49px;font-size:11px;line-height:11px;color:#000;">0.015</span>
<span class="t" style="left:1777.30px;top:761.49px;font-size:11px;line-height:11px;color:#000;">0.02</span>
<div style="left:1862px;top:757px;width:21px;height:17px;overflow:hidden;"><span class="t" style="left:6px;top:3.8px;font-size:11px;line-height:11px">0.025</span></div>
<div style="left:1413px;top:757px;width:6px;height:17px;overflow:hidden;"><span class="t" style="left:-3.5px;top:3.8px;font-size:11px;line-height:11px">0</span></div>
<div style="left:1413px;top:756px;width:7px;height:8px;background:#1a1a7c;overflow:hidden;"><span class="t" style="left:1.5px;top:0;font-size:8px;line-height:8px;color:#fff;font-weight:bold">1</span></div>
<div style="left:1331px;top:647.5px;width:14px;height:14px;background:#e9e9e9;border:1px solid #c0c0c0;"></div>
<svg style="left:1331px;top:647.5px;" width="14" height="14" viewBox="0 0 14 14"><path d="M4 3V11M4 3H6M4 11H6M4 7H5.5" stroke="#000" stroke-width="1.2" fill="none"/><path d="M7 6L9.5 3L12 6ZM7 8L9.5 11L12 8Z" fill="#000"/></svg>
<span class="t" style="left:1338px;top:691.5px;font-size:11px;line-height:11px;color:#000;letter-spacing:0px;transform:translate(-50%,-50%) rotate(-90deg)">V</span>
<div style="left:1331px;top:722px;width:14px;height:14px;background:#e9e9e9;border:1px solid #c0c0c0;"></div>
<svg style="left:1331px;top:722px;" width="14" height="14" viewBox="0 0 14 14"><path d="M2.5 7H11.5" stroke="#000" stroke-width="2" fill="none"/><path d="M7 2.5V11.5" stroke="#000" stroke-width="2" fill="none"/></svg>
<div style="left:1331px;top:738px;width:14px;height:14px;background:#e9e9e9;border:1px solid #c0c0c0;"></div>
<svg style="left:1331px;top:738px;" width="14" height="14" viewBox="0 0 14 14"><path d="M2.5 7H11.5" stroke="#000" stroke-width="2" fill="none"/></svg>
<svg style="left:1417px;top:783px;" width="8" height="10" viewBox="0 0 8 10"><path d="M6 1L2 5L6 9" fill="none" stroke="#c3c3c3" stroke-width="1.8"/></svg>
<svg style="left:1753px;top:783px;" width="8" height="10" viewBox="0 0 8 10"><path d="M2 1L6 5L2 9" fill="none" stroke="#c3c3c3" stroke-width="1.8"/></svg>
<div style="left:1766px;top:778.5px;width:24px;height:19px;background:#e1e1e1;border:1px solid #adadad;"></div>
<svg style="left:1769px;top:781px;" width="18" height="14" viewBox="0 0 18 14"><path d="M8 1V11L1 6Z" fill="#4fb83f" stroke="#2a8a2a" stroke-width=".8"/><path d="M10 1V11L17 6Z" fill="#4fb83f" stroke="#2a8a2a" stroke-width=".8"/><path d="M0.5 10V13H17.5V10" fill="none" stroke="#555" stroke-width="1"/></svg>
<div style="left:1792px;top:778.5px;width:16px;height:19px;background:#cccccc;border:1px solid #c4c4c4;"></div>
<svg style="left:1794px;top:785px;" width="12" height="7" viewBox="0 0 12 7"><path d="M0 6.5C3 6 4.5 0.5 6 0.5S8 3 9 3.5S11 6 12 6.5Z" fill="#a8a8a8"/></svg>
<div style="left:1810.5px;top:778.5px;width:52px;height:19px;background:#e1e1e1;border:1px solid #adadad;"></div>
<span class="t" style="left:1822.00px;top:783.49px;font-size:11px;line-height:11px;color:#000;letter-spacing:-0.191px;">25 ms</span>
<div style="left:1865px;top:778.5px;width:16px;height:19px;background:#e1e1e1;border:1px solid #adadad;"></div>
<svg style="left:1866.5px;top:782.5px;" width="13" height="11" viewBox="0 0 13 11"><path d="M0 10.5C2 10 4.5 0.5 6 0.5S8.5 5 9.5 6S12 10 13 10.5Z" fill="#333"/></svg>
<div style="left:1328px;top:817.5px;width:558px;height:168px;border:1px solid #dcdcdc;"></div>
<div style="left:1334.5px;top:815.5px;width:145px;height:5px;background:#f0f0f0;"></div>
<span class="t" style="left:1336.50px;top:812.99px;font-size:11px;line-height:11px;color:#000;letter-spacing:-0.167px;">Segment parameters 1. Pulse</span>
<div style="left:1337px;top:832px;width:537px;height:119px;background:#fff;border-top:1px solid #828282;border-left:1px solid #828282;"></div>
<div style="left:1542px;top:833px;width:1px;height:23px;background:#e5e5e5;"></div>
<div style="left:1606px;top:833px;width:1px;height:23px;background:#e5e5e5;"></div>
<div style="left:1648px;top:833px;width:1px;height:23px;background:#e5e5e5;"></div>
<div style="left:1687px;top:833px;width:1px;height:23px;background:#e5e5e5;"></div>
<div style="left:1752px;top:833px;width:1px;height:23px;background:#e5e5e5;"></div>
<div style="left:1816px;top:833px;width:1px;height:23px;background:#e5e5e5;"></div>
<span class="t" style="left:1344.20px;top:840.24px;font-size:12px;line-height:12px;color:#000;letter-spacing:-0.169px;">Parameter Name</span>
<span class="t" style="left:1548.00px;top:840.24px;font-size:12px;line-height:12px;color:#000;letter-spacing:-0.360px;">Value</span>
<span class="t" style="left:1707.00px;top:840.24px;font-size:12px;line-height:12px;color:#000;letter-spacing:-0.438px;">Panel</span>
<span class="t" style="left:1769.00px;top:840.24px;font-size:12px;line-height:12px;color:#000;letter-spacing:-0.003px;">Dialog</span>
<span class="t" style="left:1346.20px;top:862.24px;font-size:12px;line-height:12px;color:#000;letter-spacing:-0.170px;">Pulses</span>
<span class="t" style="left:1595.33px;top:862.24px;font-size:12px;line-height:12px;color:#000;">1</span>
<div style="left:1654px;top:859px;width:28px;height:17px;background:#e1e1e1;border:1px solid #adadad;"></div>
<svg style="left:1660px;top:863.8px;" width="15" height="8" viewBox="0 0 15 8"><path d="M7.5 3.7C5.8 1 4.3 0.8 3.3 0.8A2.6 2.9 0 0 0 3.3 6.6C4.5 6.6 5.8 6.2 7.5 3.7C9.2 1 10.7 0.8 11.7 0.8A2.6 2.9 0 0 1 11.7 6.6C10.5 6.6 9.2 6.2 7.5 3.7Z" fill="none" stroke="#000" stroke-width="1.5"/></svg>
<div style="left:1714px;top:860.5px;width:13px;height:13px;background:linear-gradient(135deg,#dfe2e5,#fdfdfd);border:1px solid #8e8f8f;"></div>
<div style="left:1716px;top:862.5px;width:9px;height:9px;border:1px solid #c4c7ca;"></div>
<div style="left:1779px;top:860.5px;width:13px;height:13px;background:linear-gradient(135deg,#dfe2e5,#fdfdfd);border:1px solid #8e8f8f;"></div>
<div style="left:1781px;top:862.5px;width:9px;height:9px;border:1px solid #c4c7ca;"></div>
<div style="left:1822px;top:859px;width:28px;height:17px;background:#e1e1e1;border:1px solid #adadad;"></div>
<svg style="left:1822px;top:859px;" width="28" height="17" viewBox="0 0 28 17"><path d="M5.5 7.5H22" stroke="#333" stroke-width="1"/><rect x="18.5" y="4.5" width="2.6" height="6" fill="#e9e9e9" stroke="#444" stroke-width=".9"/><path d="M6 12.5H22" stroke="#444" stroke-width="1.2" stroke-dasharray="1 1.6"/></svg>
<span class="t" style="left:1346.20px;top:885.24px;font-size:12px;line-height:12px;color:#000;letter-spacing:-0.087px;">Pulse Height</span>
<span class="t" style="left:1595.33px;top:885.24px;font-size:12px;line-height:12px;color:#000;">0</span>
<span class="t" style="left:1613.70px;top:885.24px;font-size:12px;line-height:12px;color:#000;">V</span>
<div style="left:1714px;top:883.5px;width:13px;height:13px;background:linear-gradient(135deg,#dfe2e5,#fdfdfd);border:1px solid #8e8f8f;"></div>
<div style="left:1716px;top:885.5px;width:9px;height:9px;border:1px solid #c4c7ca;"></div>
<svg style="left:1714px;top:883.5px;" width="13" height="13" viewBox="0 0 13 13"><path d="M3.2 6L5.6 9.6L10 2.8" fill="none" stroke="#31479e" stroke-width="1.8"/></svg>
<div style="left:1779px;top:883.5px;width:13px;height:13px;background:linear-gradient(135deg,#dfe2e5,#fdfdfd);border:1px solid #8e8f8f;"></div>
<div style="left:1781px;top:885.5px;width:9px;height:9px;border:1px solid #c4c7ca;"></div>
<svg style="left:1779px;top:883.5px;" width="13" height="13" viewBox="0 0 13 13"><path d="M3.2 6L5.6 9.6L10 2.8" fill="none" stroke="#31479e" stroke-width="1.8"/></svg>
<div style="left:1822px;top:882px;width:28px;height:17px;background:#e1e1e1;border:1px solid #adadad;"></div>
<svg style="left:1822px;top:882px;" width="28" height="17" viewBox="0 0 28 17"><path d="M5.5 7.5H22" stroke="#333" stroke-width="1"/><rect x="18.5" y="4.5" width="2.6" height="6" fill="#e9e9e9" stroke="#444" stroke-width=".9"/><path d="M6 12.5H22" stroke="#444" stroke-width="1.2" stroke-dasharray="1 1.6"/></svg>
<span class="t" style="left:1346.20px;top:908.24px;font-size:12px;line-height:12px;color:#000;letter-spacing:-0.184px;">Pulse Width</span>
<span class="t" style="left:1571.97px;top:908.24px;font-size:12px;line-height:12px;color:#000;">0.001</span>
<span class="t" style="left:1613.70px;top:908.24px;font-size:12px;line-height:12px;color:#000;">s</span>
<div style="left:1714px;top:906.5px;width:13px;height:13px;background:linear-gradient(135deg,#dfe2e5,#fdfdfd);border:1px solid #8e8f8f;"></div>
<div style="left:1716px;top:908.5px;width:9px;height:9px;border:1px solid #c4c7ca;"></div>
<svg style="left:1714px;top:906.5px;" width="13" height="13" viewBox="0 0 13 13"><path d="M3.2 6L5.6 9.6L10 2.8" fill="none" stroke="#31479e" stroke-width="1.8"/></svg>
<div style="left:1779px;top:906.5px;width:13px;height:13px;background:linear-gradient(135deg,#dfe2e5,#fdfdfd);border:1px solid #8e8f8f;"></div>
<div style="left:1781px;top:908.5px;width:9px;height:9px;border:1px solid #c4c7ca;"></div>
<svg style="left:1779px;top:906.5px;" width="13" height="13" viewBox="0 0 13 13"><path d="M3.2 6L5.6 9.6L10 2.8" fill="none" stroke="#31479e" stroke-width="1.8"/></svg>
<div style="left:1822px;top:905px;width:28px;height:17px;background:#e1e1e1;border:1px solid #adadad;"></div>
<svg style="left:1822px;top:905px;" width="28" height="17" viewBox="0 0 28 17"><path d="M5.5 7.5H22" stroke="#333" stroke-width="1"/><rect x="18.5" y="4.5" width="2.6" height="6" fill="#e9e9e9" stroke="#444" stroke-width=".9"/><path d="M6 12.5H22" stroke="#444" stroke-width="1.2" stroke-dasharray="1 1.6"/></svg>
<span class="t" style="left:1346.20px;top:931.24px;font-size:12px;line-height:12px;color:#000;letter-spacing:-0.374px;">End Delay</span>
<span class="t" style="left:1595.33px;top:931.24px;font-size:12px;line-height:12px;color:#000;">0</span>
<span class="t" style="left:1613.70px;top:931.24px;font-size:12px;line-height:12px;color:#000;">s</span>
<div style="left:1714px;top:929.5px;width:13px;height:13px;background:linear-gradient(135deg,#dfe2e5,#fdfdfd);border:1px solid #8e8f8f;"></div>
<div style="left:1716px;top:931.5px;width:9px;height:9px;border:1px solid #c4c7ca;"></div>
<div style="left:1779px;top:929.5px;width:13px;height:13px;background:linear-gradient(135deg,#dfe2e5,#fdfdfd);border:1px solid #8e8f8f;"></div>
<div style="left:1781px;top:931.5px;width:9px;height:9px;border:1px solid #c4c7ca;"></div>
<div style="left:1822px;top:928px;width:28px;height:17px;background:#e1e1e1;border:1px solid #adadad;"></div>
<svg style="left:1822px;top:928px;" width="28" height="17" viewBox="0 0 28 17"><path d="M5.5 7.5H22" stroke="#333" stroke-width="1"/><rect x="18.5" y="4.5" width="2.6" height="6" fill="#e9e9e9" stroke="#444" stroke-width=".9"/><path d="M6 12.5H22" stroke="#444" stroke-width="1.2" stroke-dasharray="1 1.6"/></svg>
<div style="left:1337px;top:961.5px;width:13px;height:13px;background:#fff;border:1px solid #333;"></div>
<span class="t" style="left:1352.50px;top:963.49px;font-size:11px;line-height:11px;color:#000;letter-spacing:0.038px;">Stimulator event at start of segment</span>
<div style="left:1329px;top:1000px;width:28px;height:21px;background:#e1e1e1;border:1px solid #adadad;"></div>
<svg style="left:1335px;top:1002.5px;" width="16" height="16" viewBox="0 0 16 16"><circle cx="8" cy="8" r="7.3" fill="#c9c9d6" /><circle cx="8" cy="8" r="6.2" fill="#2347b5"/><ellipse cx="8" cy="5.5" rx="4.5" ry="3" fill="#4f76de" opacity=".8"/><text x="8" y="12" font-size="10.5" font-weight="bold" text-anchor="middle" fill="#fff" font-family="Liberation Sans">?</text></svg>
<div style="left:1731px;top:1000px;width:73px;height:22px;background:#e1e1e1;border:2px solid #0078d7;"></div>
<span class="t" style="left:1760.00px;top:1006.49px;font-size:11px;line-height:11px;color:#000;letter-spacing:-0.447px;">OK</span>
<div style="left:1812px;top:1000px;width:73px;height:22px;background:#e1e1e1;border:1px solid #adadad;"></div>
<span class="t" style="left:1832.00px;top:1006.49px;font-size:11px;line-height:11px;color:#000;letter-spacing:-0.206px;">Cancel</span>
<svg style="left:1885px;top:1024px;" width="12" height="12" viewBox="0 0 12 12"><path d="M1 12L12 1M5 12L12 5M9 12L12 9" stroke="#b8b8b8" stroke-width="1.2"/></svg>
</body></html>
